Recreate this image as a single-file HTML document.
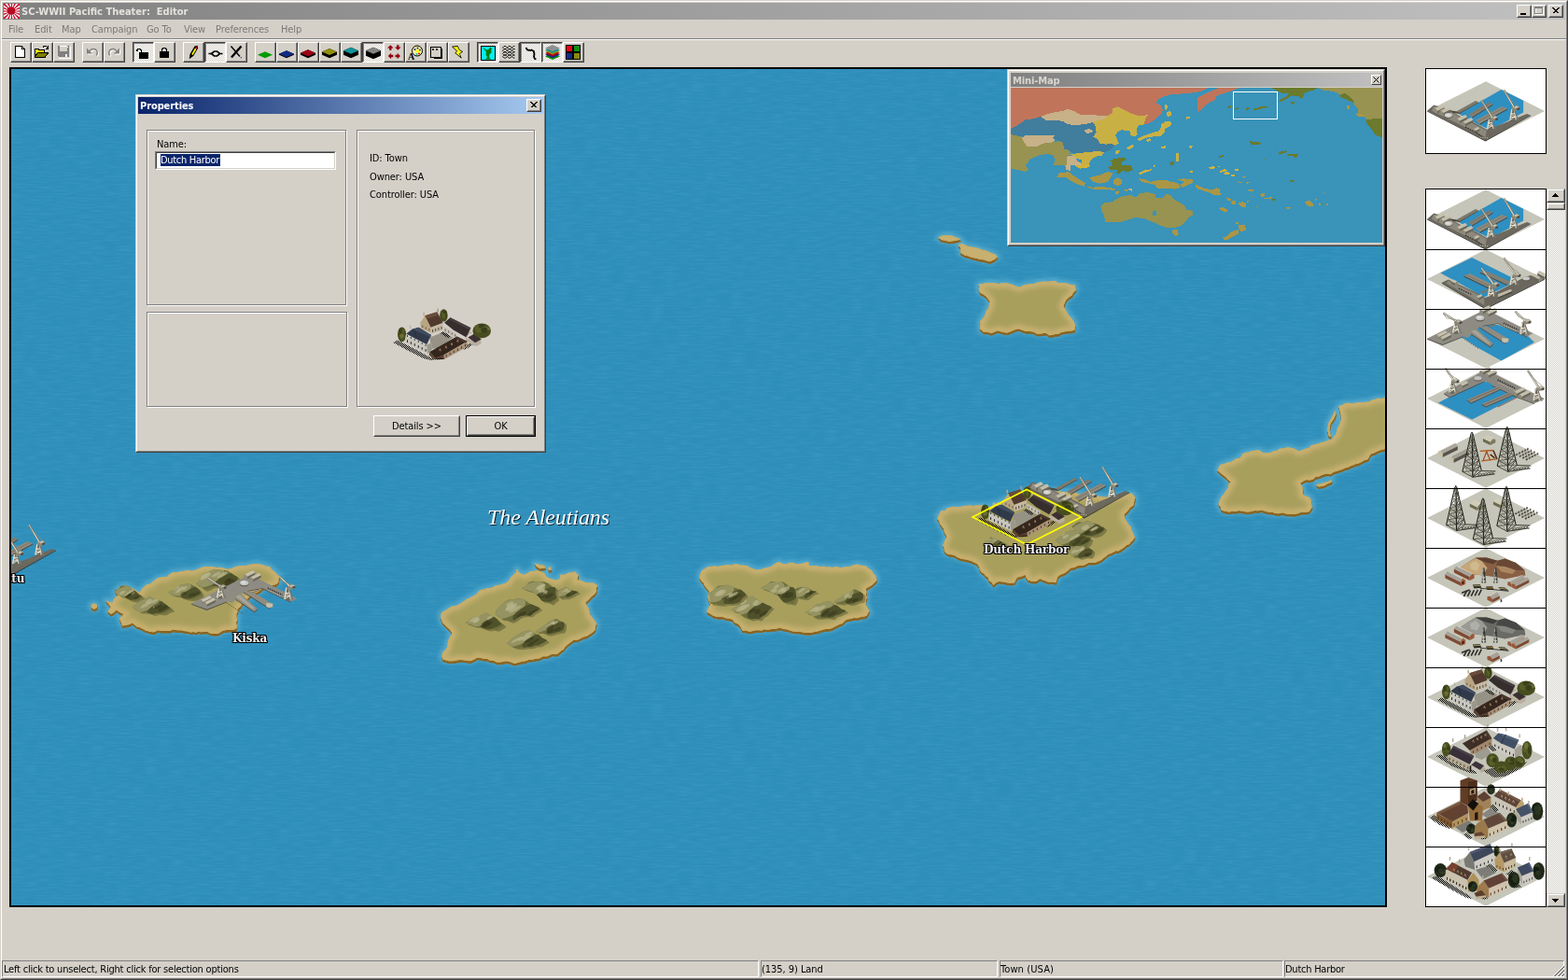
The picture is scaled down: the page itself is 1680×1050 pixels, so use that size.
<!DOCTYPE html>
<html lang="en"><head><meta charset="utf-8"><title>SC-WWII Pacific Theater: Editor</title>
<style>
*{box-sizing:border-box;margin:0;padding:0}
html,body{width:1680px;height:1050px;overflow:hidden;background:#d4d0c8}
body{position:relative;font-family:"DejaVu Sans Condensed","Liberation Sans",sans-serif;font-size:11px;color:#000;line-height:13px;letter-spacing:-0.1px}
.abs{position:absolute}
.t{position:absolute;white-space:pre;line-height:13px;height:13px}
#title .tt,.menu span,.sb span,.t,.btn span,.edit span,.cap span,.lbl,.region{will-change:transform}
#frame{position:absolute;left:0;top:0;width:1680px;height:1050px;border-style:solid;border-width:1px;border-color:#d4d0c8 #404040 #404040 #d4d0c8}
#frame2{position:absolute;left:1px;top:1px;width:1678px;height:1048px;border-style:solid;border-width:1px;border-color:#fff #808080 #808080 #fff}
#title{position:absolute;left:3px;top:3px;width:1674px;height:18px;background:linear-gradient(90deg,#808080 0%,#8f8f8f 20%,#a8a8a8 60%,#c0c0c0 100%)}
#title .tt{left:20px;top:3px;letter-spacing:0;color:#e4e2dc;font-weight:bold;font-size:11px}
.cb{position:absolute;top:2px;width:16px;height:14px;background:#d4d0c8;border-style:solid;border-width:1px;border-color:#fff #404040 #404040 #fff}
.cb:after{content:"";position:absolute;left:0;top:0;right:0;bottom:0;border-style:solid;border-width:1px;border-color:#d4d0c8 #808080 #808080 #d4d0c8}
.menu span{position:absolute;top:25px;color:#7c7a76;white-space:pre;height:13px;line-height:13px}
.hsep{position:absolute;left:2px;width:1676px;height:2px;border-top:1px solid #808080;border-bottom:1px solid #fff}
.tb{position:absolute;top:45px;width:23px;height:22px;border-style:solid;border-width:1px;border-color:#fff #404040 #404040 #fff}
.tb:before{content:"";position:absolute;left:0;top:0;right:0;bottom:0;border-style:solid;border-width:0 1px 1px 0;border-color:#808080}
.tb.on{border-color:#404040 #fff #fff #404040;background-color:#fff;background-image:conic-gradient(#d4d0c8 25%,#fff 0 50%,#d4d0c8 0 75%,#fff 0);background-size:2px 2px}
.tb.on:before{border-width:1px 0 0 1px;border-color:#808080}
.tb svg{position:absolute;left:2px;top:2px;width:16px;height:16px;overflow:visible}
.tb.on svg{left:3px;top:3px}
#map{position:absolute;left:10px;top:72px;width:1476px;height:900px;border:2px solid #000;background:#2f90bb;overflow:hidden}
.sunk{border-style:solid;border-width:1px;border-color:#808080 #fff #fff #808080}
.sb{position:absolute;top:1029px;height:18px;border-style:solid;border-width:1px;border-color:#808080 #fff #fff #808080}
.sb span{position:absolute;left:2px;top:2px;white-space:pre;line-height:13px}

#map svg.m{position:absolute;left:0;top:0}
.lbl{position:absolute;white-space:pre;font-family:"DejaVu Serif","Liberation Serif",serif;font-weight:bold;font-size:12px;line-height:14px;color:#f0f0f0;letter-spacing:-0.15px;
 text-shadow:-1px -1px 0 #000,1px -1px 0 #000,-1px 1px 0 #000,1px 1px 0 #000,0 1px 0 #000,0 -1px 0 #000,1px 0 0 #000,-1px 0 0 #000}
.region{position:absolute;white-space:pre;font-family:"Liberation Serif",serif;font-style:italic;font-size:24px;line-height:26px;color:#fff;text-shadow:1px 1px 0 #0c1c28}

#prev{position:absolute;left:1527px;top:73px;width:130px;height:92px;background:#fff;border:1px solid #000;overflow:hidden}
#list{position:absolute;left:1527px;top:202px;width:130px;height:770px;background:#fff;border:1px solid #000;overflow:hidden}
#list .it{position:absolute;left:0;width:128px;height:64px;overflow:visible}
#list .ln{position:absolute;left:0;width:128px;height:1px;background:#000}
#list .it svg,#prev svg{position:absolute;left:0;top:0;overflow:visible}
#vs{position:absolute;left:1657px;top:202px;width:20px;height:770px;background-color:#fff;background-image:conic-gradient(#d4d0c8 25%,#fff 0 50%,#d4d0c8 0 75%,#fff 0);background-size:2px 2px}
.sbb{position:absolute;left:0;width:20px;background:#d4d0c8;border-style:solid;border-width:1px;border-color:#d4d0c8 #404040 #404040 #d4d0c8}
.sbb:before{content:"";position:absolute;left:0;top:0;right:0;bottom:0;border-style:solid;border-width:1px;border-color:#fff #808080 #808080 #fff}

#dlg{position:absolute;left:145px;top:101px;width:440px;height:384px;background:#d4d0c8;border-style:solid;border-width:1px;border-color:#d4d0c8 #404040 #404040 #d4d0c8}
#dlg:before{content:"";position:absolute;left:0;top:0;right:0;bottom:0;border-style:solid;border-width:1px;border-color:#fff #808080 #808080 #fff}
#dlg .cap{position:absolute;left:2px;top:2px;width:434px;height:18px;background:linear-gradient(90deg,#0a246a,#a6caf0)}
#dlg .cap span{position:absolute;left:2px;top:3px;color:#fff;font-weight:bold;white-space:pre;line-height:13px}
.grp{position:absolute;border:1px solid #808080;box-shadow:1px 1px 0 #fff, inset 1px 1px 0 #fff}
.edit{position:absolute;background:#fff;border-style:solid;border-width:1px;border-color:#808080 #fff #fff #808080}
.edit:before{content:"";position:absolute;left:0;top:0;right:0;bottom:0;border-style:solid;border-width:1px;border-color:#404040 #d4d0c8 #d4d0c8 #404040}
.edit span{position:absolute;left:5px;top:2px;letter-spacing:-0.3px;height:13px;line-height:13px;background:#0a246a;color:#fff;white-space:pre;padding:0 1px 0 0}
.btn{position:absolute;background:#d4d0c8;border-style:solid;border-width:1px;border-color:#fff #404040 #404040 #fff;text-align:center}
.btn:before{content:"";position:absolute;left:0;top:0;right:0;bottom:0;border-style:solid;border-width:1px;border-color:#d4d0c8 #808080 #808080 #d4d0c8}
.btn span{position:relative;display:block;line-height:13px;white-space:pre}
.btn.def{border-color:#000;}
.btn.def:before{border-color:#fff #404040 #404040 #fff}
.btn.def:after{content:"";position:absolute;left:1px;top:1px;right:1px;bottom:1px;border-style:solid;border-width:1px;border-color:#d4d0c8 #808080 #808080 #d4d0c8}

#mm{position:absolute;left:1079px;top:74px;width:405px;height:190px;background:#d4d0c8;border-style:solid;border-width:1px;border-color:#d4d0c8 #404040 #404040 #d4d0c8}
#mm:before{content:"";position:absolute;left:0;top:0;right:0;bottom:0;border-style:solid;border-width:1px;border-color:#fff #808080 #808080 #fff}
#mm .cap{position:absolute;left:3px;top:3px;width:398px;height:15px;background:linear-gradient(90deg,#808080,#c0c0c0)}
#mm .cap span{position:absolute;left:2px;top:2px;color:#d8d5ce;font-weight:bold;white-space:pre;line-height:13px}
#mm .cbs{position:absolute;left:386px;top:2px;width:11px;height:11px;background:#d4d0c8;border-style:solid;border-width:1px;border-color:#fff #404040 #404040 #fff}
#mm svg.mmv{position:absolute;left:3px;top:19px}
</style></head>
<body>
<svg width="0" height="0" style="position:absolute"><defs>
<pattern id="chk" width="2" height="2" patternUnits="userSpaceOnUse"><rect width="1" height="1" fill="#000"/><rect x="1" y="1" width="1" height="1" fill="#000"/></pattern>
<linearGradient id="dockg" x1="0" y1="0" x2="0" y2="1"><stop offset="0" stop-color="#8f8b7e"/><stop offset="1" stop-color="#5e5a4e"/></linearGradient>
</defs></svg>
<div id="frame"></div><div id="frame2"></div>
<div id="title">
<svg class="abs" style="left:1px;top:1px" width="17" height="16" viewBox="0 0 16 16" preserveAspectRatio="none"><rect width="16" height="16" fill="#fff"/><clipPath id="ic"><rect width="16" height="16"/></clipPath><g clip-path="url(#ic)"><path d="M8 8L21.94 6.66L21.94 9.34z" fill="#c8102e"/><path d="M8 8L21.39 12.09L20.36 14.57z" fill="#c8102e"/><path d="M8 8L18.80 16.91L16.91 18.80z" fill="#c8102e"/><path d="M8 8L14.57 20.36L12.09 21.39z" fill="#c8102e"/><path d="M8 8L9.34 21.94L6.66 21.94z" fill="#c8102e"/><path d="M8 8L3.91 21.39L1.43 20.36z" fill="#c8102e"/><path d="M8 8L-0.91 18.80L-2.80 16.91z" fill="#c8102e"/><path d="M8 8L-4.36 14.57L-5.39 12.09z" fill="#c8102e"/><path d="M8 8L-5.94 9.34L-5.94 6.66z" fill="#c8102e"/><path d="M8 8L-5.39 3.91L-4.36 1.43z" fill="#c8102e"/><path d="M8 8L-2.80 -0.91L-0.91 -2.80z" fill="#c8102e"/><path d="M8 8L1.43 -4.36L3.91 -5.39z" fill="#c8102e"/><path d="M8 8L6.66 -5.94L9.34 -5.94z" fill="#c8102e"/><path d="M8 8L12.09 -5.39L14.57 -4.36z" fill="#c8102e"/><path d="M8 8L16.91 -2.80L18.80 -0.91z" fill="#c8102e"/><path d="M8 8L20.36 1.43L21.39 3.91z" fill="#c8102e"/><circle cx="7.500" cy="7.500" r="4.200" fill="#b80a20"/></g></svg>
<span class="t tt">SC-WWII Pacific Theater:  Editor</span>
<div class="cb" style="left:1622px"><svg class="abs" style="left:0;top:0" width="14" height="12" shape-rendering="crispEdges"><rect x="3" y="8" width="6" height="2" fill="#000"/></svg></div>
<div class="cb" style="left:1638px"><svg class="abs" style="left:0;top:0" width="14" height="12" shape-rendering="crispEdges"><rect x="3.500" y="2.500" width="8" height="7" fill="none" stroke="#fff"/><rect x="2.500" y="1.500" width="8" height="7" fill="none" stroke="#808080"/><rect x="2" y="1" width="9" height="2" fill="#808080"/></svg></div>
<div class="cb" style="left:1656px"><svg class="abs" style="left:0;top:0" width="14" height="12"><path d="M3.500 2.500l6 6M4.500 2.500l6 6M9.500 2.500l-6 6M10.500 2.500l-6 6" stroke="#000" stroke-width="1" fill="none" shape-rendering="crispEdges"/></svg></div>
</div>
<div class="menu">
<span style="left:8.5px">File</span>
<span style="left:36.5px">Edit</span>
<span style="left:66px">Map</span>
<span style="left:98px">Campaign</span>
<span style="left:157px">Go To</span>
<span style="left:197px">View</span>
<span style="left:231px">Preferences</span>
<span style="left:301px">Help</span>
</div>
<div class="hsep" style="top:41px"></div>
<div class="tb" style="left:11px"><svg viewBox="0 0 16 16" shape-rendering="crispEdges"><path d="M2.500 1.500h7l3 3v9h-10z" fill="#fff" stroke="#000"/><path d="M9.500 1.500v3h3" fill="none" stroke="#000"/></svg></div>
<div class="tb" style="left:34px"><svg viewBox="0 0 16 16" shape-rendering="crispEdges"><g transform="translate(0,-1)"><path d="M1 6h3l1 1h5v2H4l-3 5z" fill="#ff0" /><path d="M1 14l3-5h11l-4 5z" fill="#808000"/><path d="M0.5 14.5v-9h3.5l1 1h5.500v2.500M0.500 14.500h10.500l4-5.500h-11.500l-3 5" fill="none" stroke="#000"/><path d="M9 3.500c1-2 4-2 5 1M14.5 2v3h-3" fill="none" stroke="#000"/></g></svg></div>
<div class="tb" style="left:57px"><svg viewBox="0 0 16 16" shape-rendering="crispEdges"><g transform="translate(0,-1)"><path d="M2 2h12v12h-11l-1-1z" fill="#808080"/><rect x="4" y="2" width="8" height="6" fill="#d4d0c8"/><rect x="4" y="2" width="8" height="1" fill="#fff"/><rect x="12" y="3" width="1" height="1" fill="#fff"/><rect x="10" y="11" width="2" height="3" fill="#fff"/><path d="M3 15h12v-12" fill="none" stroke="#fff"/></g></svg></div>
<div class="tb" style="left:88px"><svg viewBox="0 0 16 16"><g transform="translate(0,-1.5)"><path d="M12.500 13c2-4 0-7-3.500-7c-2 0-3 1-4 2" fill="none" stroke="#fff" stroke-width="1.6" transform="translate(1,1)"/><path d="M2 5v6h6z" fill="#fff" transform="translate(1,1)"/><path d="M12.500 13c2-4 0-7-3.500-7c-2 0-3 1-4 2" fill="none" stroke="#808080" stroke-width="1.500"/><path d="M2 5v6h6z" fill="#808080"/></g></svg></div>
<div class="tb" style="left:111px"><svg viewBox="0 0 16 16"><g transform="translate(0,-1.5)"><g transform="translate(16,0) scale(-1,1)"><path d="M12.500 13c2-4 0-7-3.500-7c-2 0-3 1-4 2" fill="none" stroke="#fff" stroke-width="1.6" transform="translate(-1,1)"/><path d="M2 5v6h6z" fill="#fff" transform="translate(-1,1)"/><path d="M12.500 13c2-4 0-7-3.500-7c-2 0-3 1-4 2" fill="none" stroke="#808080" stroke-width="1.500"/><path d="M2 5v6h6z" fill="#808080"/></g></g></svg></div>
<div class="tb on" style="left:142px"><svg viewBox="0 0 16 16" shape-rendering="crispEdges"><rect x="3" y="7" width="10" height="7" fill="#000"/><path d="M0.500 6v-2h1v-1h3v1h1v3" fill="none" stroke="#000" stroke-width="1"/><rect x="0" y="4" width="2" height="2" fill="#000"/></svg></div>
<div class="tb" style="left:165px"><svg viewBox="0 0 16 16" shape-rendering="crispEdges"><rect x="3" y="7" width="10" height="7" fill="#000"/><path d="M5.500 7v-3h1v-1h3v1h1v3" fill="none" stroke="#000"/></svg></div>
<div class="tb" style="left:196px"><svg viewBox="0 0 16 16"><path d="M3.800 15.200l0.700-5.200 5-8.500 3-0.700 0.700 2.700-5 8.500z" fill="#000"/><path d="M6.200 10l3.800-6.500 1.500 0.900-3.800 6.500z" fill="#ff0"/><path d="M10.200 2.500l1.800-0.600 0.500 1.600-1 1.200z" fill="#d00020"/></svg></div>
<div class="tb on" style="left:219px"><svg viewBox="0 0 16 16"><path d="M0.500 8.500h3l3-2.500h3l3 2.500h3M3.500 8.500l3 2.500h3l3-2.500" fill="none" stroke="#000" stroke-width="1.700"/></svg></div>
<div class="tb" style="left:242px"><svg viewBox="0 0 16 16"><path d="M2.500 1.500l9.500 11" stroke="#000" stroke-width="1.400" fill="none"/><path d="M13 13.500l0.600 0.700" stroke="#000" stroke-width="1.200" fill="none"/><path d="M13.500 1.500l-10.500 12" stroke="#000" stroke-width="2.300" fill="none"/></svg></div>
<div class="tb" style="left:273px"><svg viewBox="0 0 16 16"><path d="M0 10.70l8 -3.500 8 3.500 -8 3.500z" fill="#009a00"/></svg></div>
<div class="tb" style="left:296px"><svg viewBox="0 0 16 16"><path d="M0 9.70l8 -3.500 8 3.500v1.00l-8 3.500 -8 -3.500z" fill="#000"/><path d="M0 9.70l8 -3.500 8 3.500 -8 3.500z" fill="#102c84"/></svg></div>
<div class="tb" style="left:319px"><svg viewBox="0 0 16 16"><path d="M0 8.70l8 -3.500 8 3.500v2.00l-8 3.500 -8 -3.500z" fill="#000"/><path d="M0 8.70l8 -3.500 8 3.500 -8 3.500z" fill="#a00014"/></svg></div>
<div class="tb" style="left:342px"><svg viewBox="0 0 16 16"><path d="M0 7.40l8 -3.500 8 3.500v3.30l-8 3.500 -8 -3.500z" fill="#000"/><path d="M0 7.40l8 -3.500 8 3.500 -8 3.500z" fill="#949010"/></svg></div>
<div class="tb" style="left:365px"><svg viewBox="0 0 16 16"><path d="M0 6.20l8 -3.500 8 3.500v4.50l-8 3.500 -8 -3.500z" fill="#000"/><path d="M0 6.20l8 -3.500 8 3.500 -8 3.500z" fill="#109498"/></svg></div>
<div class="tb on" style="left:388px"><svg viewBox="0 0 16 16"><path d="M0 5.20l8 -3.500 8 3.500v5.50l-8 3.500 -8 -3.500z" fill="#000"/><path d="M0 5.20l8 -3.500 8 3.500 -8 3.500z" fill="#848484"/></svg></div>
<div class="tb" style="left:411px"><svg viewBox="0 0 16 16"><path d="M0 0l3.300 3.300h-2.100v2.200h-2.400v-2.200h-2.100z" fill="#900010" transform="translate(4.300,0.300)"/><path d="M0 0l3.300 3.300h-2.100v2.200h-2.400v-2.200h-2.100z" fill="#900010" transform="translate(12.300,5.800) rotate(180)"/><path d="M0 0l3.300 3.300h-2.100v2.200h-2.400v-2.200h-2.100z" fill="#900010" transform="translate(1.800,12) rotate(-90)"/><path d="M0 0l3.300 3.300h-2.100v2.200h-2.400v-2.200h-2.100z" fill="#900010" transform="translate(15,12) rotate(90)"/></svg></div>
<div class="tb" style="left:434px"><svg viewBox="0 0 16 16"><ellipse cx="10" cy="6.500" rx="5.500" ry="5.500" fill="#f4f0a0" stroke="#000" stroke-width="1"/><circle cx="10.500" cy="7" r="1.800" fill="#ff0"/><circle cx="7.500" cy="5" r="1" fill="#202080"/><circle cx="10.500" cy="3.500" r="1" fill="#202080"/><circle cx="13" cy="5.500" r="1" fill="#404040"/><circle cx="12" cy="9.500" r="1" fill="#e00000"/><circle cx="9.500" cy="10" r="1" fill="#00c0c0"/><text x="0" y="15.500" font-family="Liberation Serif,serif" font-size="10" font-weight="bold" fill="#000">A</text></svg></div>
<div class="tb" style="left:457px"><svg viewBox="0 0 16 16" shape-rendering="crispEdges"><path d="M3 4h11v11h-9z" fill="#000"/><rect x="1.500" y="2.500" width="11" height="11" fill="#d4d0c8" stroke="#000"/><path d="M3 4l2 2M5 4l-2 2M7 4l2 2M9 4l-2 2" stroke="#000" fill="none" shape-rendering="auto" stroke-width="0.800"/></svg></div>
<div class="tb" style="left:480px"><svg viewBox="0 0 16 16"><path d="M1.600 2.100L7.400 1.400L9.400 5.600L12.800 7.500L9.400 9.500L11.300 14.100L4.700 8.700L6.700 6.800Z" fill="#fff" transform="translate(1.200,0.300)"/><path d="M1.600 2.100L7.400 1.400L9.400 5.600L12.800 7.500L9.400 9.500L11.300 14.100L4.700 8.700L6.700 6.800Z" fill="#ff0" stroke="#000" stroke-width="0.900" stroke-linejoin="miter"/></svg></div>
<div class="tb on" style="left:511px"><svg viewBox="0 0 16 16"><rect x="0.500" y="0.500" width="15" height="15" fill="#00f0f0" stroke="#000" shape-rendering="crispEdges"/><path d="M3 2l3 2.500 2.500-0.500 1.500-2.500 2 1.500-1 2.500 1 1-2.500 3-0.500 2.500 2 2.500h-6l2-2.500-1.500-2.500 0.500-3-2-2z" fill="#0a7a0a"/></svg></div>
<div class="tb" style="left:534px"><svg viewBox="0 0 16 16"><path d="M1.500 3.0l1.500-1.500h2l1.500 1.500 1.500-1.500h2l1.500 1.500 1.500-1.500h1.500M1.500 3.0l1.500 1.500h2l1.500-1.500 1.500 1.500h2l1.500-1.500 1.500 1.500h1.500" fill="none" stroke="#000" stroke-width="0.800"/><path d="M1.500 6.2l1.500-1.500h2l1.500 1.500 1.500-1.500h2l1.500 1.500 1.500-1.500h1.500M1.500 6.2l1.500 1.500h2l1.500-1.500 1.500 1.500h2l1.500-1.500 1.500 1.500h1.500" fill="none" stroke="#000" stroke-width="0.800"/><path d="M1.500 9.4l1.500-1.500h2l1.500 1.500 1.500-1.500h2l1.500 1.500 1.500-1.500h1.500M1.500 9.4l1.500 1.500h2l1.500-1.500 1.500 1.500h2l1.500-1.500 1.500 1.500h1.500" fill="none" stroke="#000" stroke-width="0.800"/><path d="M1.500 12.600000000000001l1.500-1.500h2l1.500 1.500 1.500-1.500h2l1.500 1.500 1.500-1.500h1.500M1.500 12.600000000000001l1.500 1.500h2l1.500-1.500 1.500 1.500h2l1.500-1.500 1.500 1.500h1.500" fill="none" stroke="#000" stroke-width="0.800"/></svg></div>
<div class="tb on" style="left:557px"><svg viewBox="0 0 16 16"><path d="M2.500 2l1.500 2.500 3 0.500 1.500-0.500 2.500 1.500 0.500 3.500-0.500 2 1 2.500 1.500 0.500" fill="none" stroke="#000" stroke-width="1.800"/></svg></div>
<div class="tb on" style="left:580px"><svg viewBox="0 0 16 16"><path d="M0 11.5l8-3.500 8 3.500-8 3.500z" fill="#109010"/><path d="M0 9.7l8-3.500 8 3.500-8 3.500z" fill="#102c84"/><path d="M0 7.9l8-3.500 8 3.500-8 3.500z" fill="#b00010"/><path d="M0 6.1l8-3.500 8 3.500-8 3.500z" fill="#949010"/><path d="M0 4.3l8-3.500 8 3.500-8 3.500z" fill="#109498"/><path d="M0 2.5l8-3.500 8 3.500-8 3.500z" fill="#909090"/></svg></div>
<div class="tb" style="left:603px"><svg viewBox="0 0 16 16" shape-rendering="crispEdges"><rect x="0" y="0" width="16" height="16" fill="#000"/><rect x="1" y="1" width="6" height="6" fill="#f00010"/><rect x="9" y="1" width="6" height="6" fill="#109010"/><rect x="1" y="9" width="6" height="6" fill="#102c84"/><rect x="9" y="9" width="6" height="6" fill="#8a8a10"/></svg></div>
<div class="sb" style="left:2px;width:811px"><span style="left:1px;letter-spacing:-0.21px">Left click to unselect, Right click for selection options</span></div>
<div class="sb" style="left:815px;width:254px"><span style="left:0px;letter-spacing:-0.05px">(135, 9) Land</span></div>
<div class="sb" style="left:1071px;width:304px"><span style="left:0px;letter-spacing:0.1px">Town (USA)</span></div>
<div class="sb" style="left:1376px;width:300px"><span style="left:0px;letter-spacing:-0.25px">Dutch Harbor</span></div>
<svg class="abs" style="left:1663px;top:1033px" width="13" height="13"><path d="M13 1L1 13M13 5L5 13M13 9L9 13" stroke="#fff" stroke-width="1"/><path d="M13 2L2 13M13 3L3 13M13 6L6 13M13 7L7 13M13 10L10 13M13 11L11 13" stroke="#808080" stroke-width="1"/></svg>
<div id="map"><svg class="m" width="1472" height="896" viewBox="0 0 1472 896">
<defs>
<filter id="sea" x="0" y="0" width="100%" height="100%" color-interpolation-filters="sRGB">
 <feTurbulence type="fractalNoise" baseFrequency="0.02 0.2" numOctaves="3" seed="7" result="n"/>
 <feColorMatrix in="n" type="matrix" values="0 0 0 0 0.14  0 0 0 0 0.51  0 0 0 0 0.69  1.6 0 0 0 -0.62"/>
</filter>
<filter id="sea2" x="0" y="0" width="100%" height="100%" color-interpolation-filters="sRGB">
 <feTurbulence type="fractalNoise" baseFrequency="0.07 0.6" numOctaves="1" seed="3" result="n"/>
 <feColorMatrix in="n" type="matrix" values="0 0 0 0 0.33  0 0 0 0 0.66  0 0 0 0 0.81  0 2.2 0 0 -0.85"/>
</filter>
<filter id="halo" filterUnits="userSpaceOnUse" x="0" y="0" width="1472" height="896"><feGaussianBlur stdDeviation="2.6"/></filter>
<filter id="sand" x="-60%" y="-60%" width="220%" height="220%"><feGaussianBlur stdDeviation="2.8"/></filter>
<filter id="hb" x="-15%" y="-15%" width="130%" height="130%"><feGaussianBlur stdDeviation="0.55"/></filter>
<linearGradient id="hg" x1="0" y1="0" x2="1" y2="1"><stop offset="0" stop-color="#9a9a66"/><stop offset="0.45" stop-color="#787a44"/><stop offset="1" stop-color="#545428"/></linearGradient>
</defs>
<rect width="1472" height="896" fill="#2f8fba"/>
<rect width="1472" height="896" filter="url(#sea)" opacity="0.1"/>
<rect width="1472" height="896" filter="url(#sea2)" opacity="0.28"/>
<g filter="url(#halo)" fill="#8fd0e6" stroke="#8fd0e6" stroke-width="6" stroke-linejoin="round" opacity="0.42"><path d="M101.3 569.4 L104.7 570.7 L108.2 571.7 L110.6 567.1 L114.4 564.0 L111.3 559.3 L114.4 557.0 L116.0 554.7 L119.1 554.1 L122.2 553.1 L125.5 554.7 L129.9 556.2 L132.7 558.3 L134.3 559.0 L137.6 560.9 L139.2 558.3 L142.3 554.7 L145.7 551.9 L149.3 551.7 L151.8 549.1 L154.7 547.0 L157.1 545.3 L160.9 544.6 L163.4 544.2 L167.0 543.9 L169.3 541.5 L173.2 539.2 L176.2 539.4 L179.5 538.7 L182.5 538.3 L185.6 537.7 L189.0 536.9 L193.5 537.8 L196.7 536.9 L199.5 536.1 L202.8 534.6 L206.4 533.3 L210.4 533.0 L214.0 533.0 L217.2 533.2 L220.5 534.2 L222.8 533.8 L225.0 534.0 L229.7 535.3 L232.0 536.1 L236.0 534.9 L237.5 534.3 L241.3 533.0 L244.9 532.2 L246.8 531.9 L251.5 532.3 L253.7 531.5 L256.5 530.8 L260.0 530.3 L264.7 530.3 L267.6 530.7 L270.8 531.4 L273.3 532.7 L276.9 533.0 L279.4 536.4 L283.1 539.2 L284.8 541.4 L287.8 543.9 L286.5 546.5 L286.2 550.0 L284.0 552.1 L280.0 553.1 L276.1 554.9 L272.3 555.0 L269.2 556.2 L267.3 558.3 L263.3 560.7 L260.9 561.2 L259.4 563.2 L255.9 564.5 L253.7 567.1 L250.8 569.4 L248.9 571.6 L247.0 573.5 L245.9 575.7 L242.9 577.9 L242.5 581.7 L241.3 583.5 L241.3 587.2 L242.1 590.9 L240.9 592.8 L241.8 597.3 L241.3 599.6 L237.2 600.9 L234.8 600.8 L230.5 601.1 L226.7 601.7 L222.4 604.5 L219.7 605.0 L216.1 604.8 L213.0 604.4 L210.6 602.9 L207.3 602.7 L203.6 603.2 L200.3 602.5 L198.1 603.8 L195.1 602.9 L191.8 603.4 L189.5 602.4 L184.7 602.1 L182.4 601.3 L178.8 601.3 L176.3 601.1 L173.4 600.6 L169.9 602.1 L167.9 601.9 L164.3 601.9 L160.9 601.9 L157.1 601.2 L153.8 603.0 L151.9 603.3 L148.5 602.7 L144.0 601.4 L141.2 600.0 L137.6 598.0 L134.7 597.4 L131.7 595.0 L129.9 593.4 L126.7 595.1 L123.1 595.8 L119.1 596.5 L118.1 593.4 L116.0 588.7 L118.0 586.8 L120.6 584.1 L118.8 583.2 L115.3 581.5 L112.9 579.5 L110.4 581.9 L106.7 584.1 L103.6 581.0 L106.7 576.4 L104.2 572.7Z"/><path d="M85.8 574.0 L88.9 572.5 L92.0 574.0 L92.0 577.1 L88.9 578.7 L85.8 577.1Z"/><path d="M460.4 588.0 L460.4 584.1 L462.3 581.6 L465.3 580.0 L468.7 577.7 L471.9 575.7 L476.4 575.2 L479.0 573.9 L481.8 572.2 L485.4 570.0 L488.7 567.6 L491.5 566.5 L494.4 564.9 L497.5 563.2 L500.9 559.7 L503.0 557.9 L507.4 557.6 L509.0 556.5 L512.4 555.9 L515.4 555.7 L518.4 553.4 L522.2 553.1 L525.3 552.0 L530.0 550.7 L533.0 548.2 L535.3 544.4 L538.2 541.7 L540.7 539.4 L542.0 535.3 L543.1 538.3 L545.9 540.4 L549.7 541.7 L553.6 540.1 L556.2 537.9 L558.9 538.1 L562.6 537.2 L566.0 537.7 L568.9 538.9 L571.6 540.4 L572.7 542.7 L575.5 545.6 L578.6 546.0 L582.6 547.5 L585.7 547.5 L587.9 545.5 L588.3 541.7 L592.4 541.9 L594.7 541.1 L597.4 539.6 L601.0 539.4 L603.8 538.5 L607.6 541.7 L606.3 547.5 L610.5 547.7 L614.0 549.4 L616.9 550.6 L621.1 550.6 L624.3 550.7 L628.2 553.3 L626.8 556.3 L626.9 559.7 L625.1 562.6 L621.8 564.9 L620.5 566.5 L617.4 569.7 L615.3 571.3 L616.5 574.8 L618.0 576.6 L619.2 580.3 L620.4 585.0 L623.0 588.0 L624.3 590.0 L626.9 593.2 L626.0 597.4 L625.6 600.9 L623.0 603.4 L619.2 606.0 L616.2 607.8 L612.8 608.4 L610.2 609.9 L607.0 611.4 L602.5 611.8 L599.9 613.7 L596.0 616.7 L593.5 618.9 L591.7 621.9 L589.7 622.7 L587.0 625.3 L584.3 627.1 L580.3 626.4 L577.2 627.8 L574.2 629.2 L569.7 629.2 L565.8 631.5 L562.6 631.7 L557.9 632.8 L554.4 632.9 L551.0 634.3 L547.7 634.8 L542.7 635.9 L539.5 636.9 L536.8 636.1 L534.1 635.0 L530.4 634.3 L527.1 635.1 L523.5 635.6 L520.2 635.6 L516.7 633.7 L512.6 633.5 L509.9 631.7 L506.9 632.1 L503.4 631.0 L499.6 630.5 L495.1 633.0 L491.9 634.3 L487.8 633.7 L484.4 633.2 L481.6 633.0 L478.2 633.3 L476.0 634.0 L472.6 634.3 L468.7 634.2 L466.1 633.6 L462.3 632.4 L461.4 629.1 L462.3 625.3 L465.6 621.7 L467.4 618.9 L467.5 615.6 L468.7 611.2 L470.4 607.8 L472.6 604.7 L470.6 601.3 L467.4 598.3 L464.3 595.2 L462.3 593.2Z"/><path d="M560.7 529.5 L565.2 530.8 L568.0 531.2 L571.6 532.1 L572.2 534.6 L566.5 535.3 L562.6 532.7Z"/><path d="M575.5 534.0 L578.0 533.4 L578.7 536.6 L576.1 537.2Z"/><path d="M737.4 545.0 L738.3 541.1 L740.0 537.2 L742.7 535.8 L746.6 533.3 L749.2 533.1 L753.6 532.6 L756.8 532.9 L759.2 532.4 L762.3 532.0 L765.6 531.4 L769.5 531.3 L772.6 531.8 L774.0 530.5 L778.0 530.6 L781.5 531.6 L784.4 531.7 L788.5 532.0 L791.3 534.0 L795.4 535.5 L797.6 536.5 L800.6 536.4 L804.5 535.8 L808.1 534.6 L811.1 534.0 L815.1 532.5 L817.3 530.6 L822.5 528.0 L827.8 530.6 L831.6 530.2 L834.3 528.7 L837.8 529.1 L840.9 530.6 L845.7 529.9 L848.7 529.3 L854.0 528.0 L855.3 532.0 L858.3 532.3 L863.0 532.3 L867.1 533.3 L871.2 532.7 L874.3 533.7 L876.3 533.5 L880.2 533.9 L883.3 533.1 L887.2 533.9 L890.8 534.0 L893.2 533.3 L897.0 533.5 L900.6 532.2 L903.1 531.3 L906.3 530.6 L910.0 531.8 L913.0 532.1 L915.5 532.0 L917.9 534.4 L922.1 537.2 L923.3 540.0 L926.0 542.4 L927.3 547.7 L924.8 550.4 L922.1 552.9 L919.4 554.4 L915.5 556.8 L916.4 560.0 L915.9 563.8 L916.8 566.0 L915.4 569.9 L915.5 573.9 L917.5 577.3 L919.4 580.4 L916.8 585.6 L914.2 586.6 L910.5 587.0 L906.3 588.3 L902.8 588.1 L899.6 589.0 L895.9 589.6 L893.8 590.6 L890.6 593.9 L888.0 594.8 L883.2 597.1 L880.2 598.7 L877.2 599.8 L873.7 600.1 L871.2 600.3 L867.1 601.4 L863.9 602.5 L860.5 603.1 L856.6 604.0 L851.8 604.0 L848.3 603.6 L844.8 602.7 L842.2 602.7 L837.6 602.4 L834.3 601.4 L830.6 600.2 L827.5 599.9 L823.8 598.7 L821.1 599.3 L817.6 600.1 L814.7 600.1 L810.9 600.7 L806.8 600.3 L804.2 601.4 L801.6 601.2 L797.5 601.2 L794.8 602.0 L791.1 602.7 L786.4 601.6 L783.2 601.4 L782.1 598.5 L779.3 594.8 L775.1 593.0 L772.8 589.6 L768.5 588.7 L765.8 588.3 L762.3 587.0 L758.1 587.1 L754.9 586.5 L751.8 585.6 L749.3 583.8 L745.3 581.7 L746.3 578.1 L749.2 573.9 L747.8 570.3 L746.6 566.0 L747.7 562.0 L747.9 559.5 L745.4 556.4 L742.6 552.9 L741.7 550.5 L739.4 548.2Z"/><path d="M992.3 481.7 L993.4 479.1 L994.3 476.9 L996.6 473.1 L1000.5 472.9 L1002.8 470.2 L1006.6 469.6 L1009.3 468.7 L1012.9 469.2 L1017.0 469.1 L1020.9 468.1 L1024.9 467.7 L1027.4 467.5 L1030.7 467.9 L1035.1 467.4 L1038.4 467.3 L1043.5 468.3 L1046.6 468.9 L1050.2 468.7 L1052.6 466.3 L1054.5 465.2 L1058.0 464.6 L1061.3 463.4 L1063.4 461.3 L1066.3 460.8 L1068.7 459.4 L1071.9 458.5 L1075.1 457.4 L1078.0 456.4 L1081.5 454.7 L1083.0 453.5 L1086.1 452.8 L1089.4 451.2 L1092.3 450.3 L1094.6 450.9 L1098.6 450.9 L1101.8 451.5 L1103.7 450.5 L1107.5 451.7 L1110.7 451.5 L1113.7 451.7 L1116.4 451.5 L1120.5 453.0 L1122.9 452.3 L1125.3 452.7 L1128.5 453.0 L1131.7 452.9 L1135.1 453.1 L1138.9 453.4 L1141.3 454.0 L1144.3 455.6 L1147.4 456.4 L1150.3 456.1 L1153.8 456.8 L1156.6 457.4 L1159.9 457.3 L1161.8 457.7 L1165.0 457.6 L1169.0 458.6 L1172.6 458.8 L1175.0 458.4 L1178.0 458.9 L1181.5 457.8 L1184.4 457.5 L1188.9 456.4 L1192.3 456.0 L1197.0 455.3 L1200.9 454.6 L1204.4 458.9 L1203.0 463.8 L1202.3 467.4 L1198.6 469.9 L1196.6 473.1 L1194.1 475.6 L1192.3 477.4 L1193.3 481.9 L1195.1 484.6 L1196.6 487.3 L1199.4 490.3 L1200.4 493.6 L1201.1 495.4 L1203.1 499.4 L1203.7 501.7 L1201.9 504.8 L1199.7 506.4 L1198.0 508.9 L1195.1 510.1 L1192.9 511.9 L1189.4 514.6 L1185.8 516.4 L1183.6 516.1 L1181.6 517.2 L1178.0 518.9 L1175.4 519.8 L1172.4 522.4 L1170.9 523.5 L1168.0 526.0 L1165.1 527.2 L1161.6 528.7 L1158.0 528.9 L1154.2 528.9 L1149.6 531.4 L1146.6 531.7 L1142.1 532.3 L1139.2 534.0 L1135.1 534.6 L1133.2 536.6 L1130.1 539.1 L1128.0 540.3 L1123.6 542.0 L1120.9 544.6 L1119.4 550.3 L1116.0 549.4 L1110.9 549.6 L1108.6 548.6 L1105.4 547.4 L1102.3 546.0 L1098.0 548.9 L1093.6 548.8 L1089.4 547.4 L1087.2 544.2 L1086.6 541.7 L1084.2 543.1 L1081.1 544.0 L1078.0 544.6 L1076.2 547.6 L1075.1 550.3 L1071.0 550.9 L1066.6 550.3 L1061.8 549.2 L1058.0 548.9 L1054.8 550.5 L1052.3 553.1 L1050.8 550.3 L1047.7 548.1 L1046.6 544.6 L1044.2 543.2 L1042.2 540.6 L1039.4 538.9 L1037.7 536.1 L1037.4 533.7 L1035.1 530.3 L1032.6 529.0 L1028.6 527.1 L1025.1 526.0 L1021.4 525.2 L1018.0 524.7 L1013.7 523.1 L1011.6 521.6 L1008.3 520.2 L1004.7 520.1 L1002.3 518.9 L1000.0 516.7 L999.5 512.7 L998.0 510.3 L999.3 507.9 L1000.1 505.3 L1002.3 501.7 L1001.6 498.9 L999.8 496.2 L999.4 493.1 L996.8 489.5 L995.1 487.4 L994.3 484.3Z"/><path d="M993.3 180.3 L998.0 178.3 L1000.8 178.1 L1004.4 178.1 L1007.3 178.3 L1011.0 179.9 L1014.0 181.0 L1017.3 182.3 L1012.7 183.7 L1008.9 184.2 L1004.7 184.7 L1000.9 183.7 L996.7 183.0Z"/><path d="M1014.7 188.3 L1019.3 187.0 L1024.7 189.7 L1028.1 190.4 L1031.8 191.1 L1035.3 191.7 L1038.6 193.1 L1041.5 194.0 L1044.4 194.6 L1047.3 195.7 L1051.0 197.5 L1054.0 198.3 L1056.7 201.0 L1054.0 203.7 L1048.7 206.3 L1045.4 205.5 L1042.0 204.3 L1038.0 204.0 L1035.0 203.1 L1031.3 202.3 L1027.9 201.5 L1025.2 200.2 L1022.0 199.7 L1017.3 197.0 L1017.3 191.7Z"/><path d="M1036.7 230.3 L1041.0 229.9 L1043.9 229.2 L1047.3 229.0 L1050.2 229.2 L1053.9 229.2 L1058.0 230.3 L1060.9 229.3 L1065.2 229.2 L1068.7 229.7 L1072.2 230.8 L1075.3 232.3 L1080.7 233.7 L1086.0 231.0 L1089.7 230.8 L1092.5 230.3 L1095.5 230.3 L1098.0 229.0 L1102.4 227.9 L1104.7 227.7 L1108.7 227.7 L1111.5 227.8 L1115.3 227.0 L1119.2 226.9 L1121.0 229.1 L1124.7 229.0 L1127.5 228.9 L1132.5 229.9 L1135.3 231.0 L1140.0 231.7 L1140.7 237.0 L1137.8 239.8 L1136.7 242.3 L1132.8 244.8 L1130.0 247.7 L1128.4 251.6 L1127.3 254.3 L1130.1 258.5 L1131.3 261.0 L1134.0 265.1 L1136.7 267.7 L1138.7 271.1 L1140.0 274.3 L1139.3 279.7 L1135.6 280.6 L1131.3 281.0 L1128.7 281.2 L1124.7 282.3 L1122.3 283.8 L1118.6 284.1 L1115.3 285.0 L1111.9 285.2 L1109.0 282.9 L1106.0 283.0 L1103.6 283.5 L1099.3 283.7 L1095.2 281.5 L1091.3 281.0 L1087.2 281.1 L1083.3 279.7 L1079.3 278.3 L1076.1 279.0 L1071.3 281.0 L1067.6 282.5 L1064.7 282.3 L1061.0 281.4 L1056.7 280.3 L1052.7 281.9 L1050.0 283.0 L1045.2 281.5 L1042.0 281.7 L1038.0 278.3 L1038.4 273.6 L1038.0 270.3 L1041.6 266.5 L1043.3 263.7 L1044.5 259.4 L1047.3 255.7 L1047.6 253.1 L1048.7 249.0 L1046.5 246.0 L1044.7 243.7 L1041.4 241.3 L1038.0 239.7 L1036.7 235.7 L1037.4 233.5Z"/><path d="M1292.3 429.6 L1294.2 426.7 L1295.1 423.9 L1299.8 423.0 L1303.5 421.3 L1306.6 421.0 L1309.9 418.9 L1312.4 417.4 L1316.6 416.7 L1319.4 412.4 L1321.9 410.9 L1325.3 410.6 L1328.0 409.6 L1331.7 409.1 L1336.6 408.1 L1340.9 411.0 L1344.9 411.4 L1349.4 411.0 L1352.6 408.9 L1355.5 409.0 L1359.4 406.7 L1363.9 406.2 L1368.0 405.3 L1371.7 406.0 L1375.1 406.7 L1379.4 409.6 L1382.4 408.6 L1386.6 406.7 L1390.2 406.0 L1393.2 403.0 L1396.6 402.4 L1399.7 401.5 L1403.4 400.2 L1406.6 399.6 L1409.2 398.5 L1413.0 397.0 L1415.1 396.7 L1416.6 394.6 L1419.4 391.0 L1420.5 387.3 L1420.8 385.1 L1422.3 382.4 L1423.7 379.5 L1425.1 375.3 L1424.7 370.4 L1423.7 366.7 L1422.3 361.0 L1426.2 359.9 L1429.4 358.1 L1433.5 357.8 L1437.2 358.5 L1440.9 357.4 L1444.6 357.1 L1449.2 357.1 L1452.3 356.7 L1454.8 356.6 L1458.0 354.4 L1460.9 353.9 L1463.9 352.8 L1468.0 353.1 L1471.4 352.4 L1475.4 352.1 L1478.0 352.4 L1478.5 355.8 L1478.6 358.4 L1477.6 362.2 L1478.4 365.5 L1477.5 368.0 L1478.2 371.5 L1478.1 373.3 L1478.3 377.2 L1477.9 380.7 L1478.7 383.5 L1478.5 387.0 L1477.9 390.1 L1477.7 393.7 L1477.2 395.5 L1477.4 399.7 L1477.3 401.6 L1478.0 405.3 L1474.0 405.6 L1471.1 407.2 L1467.8 408.0 L1463.7 409.6 L1460.8 411.0 L1456.6 412.4 L1454.9 415.3 L1453.7 418.1 L1449.6 419.2 L1446.6 421.0 L1443.6 422.6 L1440.2 423.2 L1438.0 424.3 L1435.1 425.3 L1431.5 427.1 L1429.4 427.3 L1426.1 428.9 L1423.7 429.6 L1420.7 430.7 L1417.2 431.6 L1413.7 433.9 L1410.1 433.5 L1407.0 434.1 L1403.7 435.3 L1401.1 436.4 L1397.1 437.3 L1395.1 439.6 L1391.0 440.4 L1388.3 440.1 L1385.1 441.0 L1380.9 443.9 L1382.8 446.1 L1383.7 449.6 L1383.7 455.3 L1386.5 457.4 L1390.1 458.2 L1392.3 461.0 L1393.1 465.2 L1393.7 469.6 L1390.9 473.9 L1388.0 474.8 L1384.1 474.7 L1380.9 475.3 L1378.4 476.3 L1373.5 477.1 L1370.9 476.7 L1365.7 476.6 L1362.3 475.3 L1357.8 476.2 L1355.1 476.0 L1351.7 475.1 L1346.6 474.6 L1343.8 473.8 L1339.4 472.4 L1335.8 473.3 L1332.3 473.1 L1327.4 474.3 L1323.7 474.6 L1320.0 473.7 L1315.1 473.1 L1312.6 474.0 L1308.6 473.7 L1305.1 474.6 L1300.5 473.8 L1296.6 472.4 L1295.7 469.1 L1293.7 466.7 L1294.0 463.4 L1295.3 461.2 L1296.6 458.1 L1299.2 455.8 L1300.8 452.7 L1302.3 451.0 L1303.8 448.7 L1304.4 444.7 L1306.6 442.4 L1302.9 438.9 L1300.9 436.7 L1297.9 434.6 L1295.2 432.6Z"/><path d="M1418.7 366.0 L1419.4 369.6 L1417.3 374.6 L1415.4 377.3 L1413.7 379.6 L1412.9 383.0 L1412.3 386.7 L1413.2 390.4 L1413.7 393.9 L1411.6 393.1 L1411.0 389.6 L1410.1 386.7 L1410.8 382.7 L1411.6 378.9 L1413.2 375.9 L1415.1 373.1 L1417.3 368.1Z"/><path d="M1398.0 445.3 L1402.1 444.4 L1406.6 443.1 L1409.4 442.4 L1412.5 441.3 L1415.1 440.3 L1414.4 442.7 L1410.5 444.3 L1406.6 446.4 L1400.9 447.4Z"/></g>
<g><path d="M101.3 569.4 L104.7 570.7 L108.2 571.7 L110.6 567.1 L114.4 564.0 L111.3 559.3 L114.4 557.0 L116.0 554.7 L119.1 554.1 L122.2 553.1 L125.5 554.7 L129.9 556.2 L132.7 558.3 L134.3 559.0 L137.6 560.9 L139.2 558.3 L142.3 554.7 L145.7 551.9 L149.3 551.7 L151.8 549.1 L154.7 547.0 L157.1 545.3 L160.9 544.6 L163.4 544.2 L167.0 543.9 L169.3 541.5 L173.2 539.2 L176.2 539.4 L179.5 538.7 L182.5 538.3 L185.6 537.7 L189.0 536.9 L193.5 537.8 L196.7 536.9 L199.5 536.1 L202.8 534.6 L206.4 533.3 L210.4 533.0 L214.0 533.0 L217.2 533.2 L220.5 534.2 L222.8 533.8 L225.0 534.0 L229.7 535.3 L232.0 536.1 L236.0 534.9 L237.5 534.3 L241.3 533.0 L244.9 532.2 L246.8 531.9 L251.5 532.3 L253.7 531.5 L256.5 530.8 L260.0 530.3 L264.7 530.3 L267.6 530.7 L270.8 531.4 L273.3 532.7 L276.9 533.0 L279.4 536.4 L283.1 539.2 L284.8 541.4 L287.8 543.9 L286.5 546.5 L286.2 550.0 L284.0 552.1 L280.0 553.1 L276.1 554.9 L272.3 555.0 L269.2 556.2 L267.3 558.3 L263.3 560.7 L260.9 561.2 L259.4 563.2 L255.9 564.5 L253.7 567.1 L250.8 569.4 L248.9 571.6 L247.0 573.5 L245.9 575.7 L242.9 577.9 L242.5 581.7 L241.3 583.5 L241.3 587.2 L242.1 590.9 L240.9 592.8 L241.8 597.3 L241.3 599.6 L237.2 600.9 L234.8 600.8 L230.5 601.1 L226.7 601.7 L222.4 604.5 L219.7 605.0 L216.1 604.8 L213.0 604.4 L210.6 602.9 L207.3 602.7 L203.6 603.2 L200.3 602.5 L198.1 603.8 L195.1 602.9 L191.8 603.4 L189.5 602.4 L184.7 602.1 L182.4 601.3 L178.8 601.3 L176.3 601.1 L173.4 600.6 L169.9 602.1 L167.9 601.9 L164.3 601.9 L160.9 601.9 L157.1 601.2 L153.8 603.0 L151.9 603.3 L148.5 602.7 L144.0 601.4 L141.2 600.0 L137.6 598.0 L134.7 597.4 L131.7 595.0 L129.9 593.4 L126.7 595.1 L123.1 595.8 L119.1 596.5 L118.1 593.4 L116.0 588.7 L118.0 586.8 L120.6 584.1 L118.8 583.2 L115.3 581.5 L112.9 579.5 L110.4 581.9 L106.7 584.1 L103.6 581.0 L106.7 576.4 L104.2 572.7Z" fill="#8a6422" stroke="#8a6422" stroke-width="1" transform="translate(0.3,2.2)"/><path d="M101.3 569.4 L104.7 570.7 L108.2 571.7 L110.6 567.1 L114.4 564.0 L111.3 559.3 L114.4 557.0 L116.0 554.7 L119.1 554.1 L122.2 553.1 L125.5 554.7 L129.9 556.2 L132.7 558.3 L134.3 559.0 L137.6 560.9 L139.2 558.3 L142.3 554.7 L145.7 551.9 L149.3 551.7 L151.8 549.1 L154.7 547.0 L157.1 545.3 L160.9 544.6 L163.4 544.2 L167.0 543.9 L169.3 541.5 L173.2 539.2 L176.2 539.4 L179.5 538.7 L182.5 538.3 L185.6 537.7 L189.0 536.9 L193.5 537.8 L196.7 536.9 L199.5 536.1 L202.8 534.6 L206.4 533.3 L210.4 533.0 L214.0 533.0 L217.2 533.2 L220.5 534.2 L222.8 533.8 L225.0 534.0 L229.7 535.3 L232.0 536.1 L236.0 534.9 L237.5 534.3 L241.3 533.0 L244.9 532.2 L246.8 531.9 L251.5 532.3 L253.7 531.5 L256.5 530.8 L260.0 530.3 L264.7 530.3 L267.6 530.7 L270.8 531.4 L273.3 532.7 L276.9 533.0 L279.4 536.4 L283.1 539.2 L284.8 541.4 L287.8 543.9 L286.5 546.5 L286.2 550.0 L284.0 552.1 L280.0 553.1 L276.1 554.9 L272.3 555.0 L269.2 556.2 L267.3 558.3 L263.3 560.7 L260.9 561.2 L259.4 563.2 L255.9 564.5 L253.7 567.1 L250.8 569.4 L248.9 571.6 L247.0 573.5 L245.9 575.7 L242.9 577.9 L242.5 581.7 L241.3 583.5 L241.3 587.2 L242.1 590.9 L240.9 592.8 L241.8 597.3 L241.3 599.6 L237.2 600.9 L234.8 600.8 L230.5 601.1 L226.7 601.7 L222.4 604.5 L219.7 605.0 L216.1 604.8 L213.0 604.4 L210.6 602.9 L207.3 602.7 L203.6 603.2 L200.3 602.5 L198.1 603.8 L195.1 602.9 L191.8 603.4 L189.5 602.4 L184.7 602.1 L182.4 601.3 L178.8 601.3 L176.3 601.1 L173.4 600.6 L169.9 602.1 L167.9 601.9 L164.3 601.9 L160.9 601.9 L157.1 601.2 L153.8 603.0 L151.9 603.3 L148.5 602.7 L144.0 601.4 L141.2 600.0 L137.6 598.0 L134.7 597.4 L131.7 595.0 L129.9 593.4 L126.7 595.1 L123.1 595.8 L119.1 596.5 L118.1 593.4 L116.0 588.7 L118.0 586.8 L120.6 584.1 L118.8 583.2 L115.3 581.5 L112.9 579.5 L110.4 581.9 L106.7 584.1 L103.6 581.0 L106.7 576.4 L104.2 572.7Z" fill="#a89f5d"/><clipPath id="ic1"><path d="M101.3 569.4 L104.7 570.7 L108.2 571.7 L110.6 567.1 L114.4 564.0 L111.3 559.3 L114.4 557.0 L116.0 554.7 L119.1 554.1 L122.2 553.1 L125.5 554.7 L129.9 556.2 L132.7 558.3 L134.3 559.0 L137.6 560.9 L139.2 558.3 L142.3 554.7 L145.7 551.9 L149.3 551.7 L151.8 549.1 L154.7 547.0 L157.1 545.3 L160.9 544.6 L163.4 544.2 L167.0 543.9 L169.3 541.5 L173.2 539.2 L176.2 539.4 L179.5 538.7 L182.5 538.3 L185.6 537.7 L189.0 536.9 L193.5 537.8 L196.7 536.9 L199.5 536.1 L202.8 534.6 L206.4 533.3 L210.4 533.0 L214.0 533.0 L217.2 533.2 L220.5 534.2 L222.8 533.8 L225.0 534.0 L229.7 535.3 L232.0 536.1 L236.0 534.9 L237.5 534.3 L241.3 533.0 L244.9 532.2 L246.8 531.9 L251.5 532.3 L253.7 531.5 L256.5 530.8 L260.0 530.3 L264.7 530.3 L267.6 530.7 L270.8 531.4 L273.3 532.7 L276.9 533.0 L279.4 536.4 L283.1 539.2 L284.8 541.4 L287.8 543.9 L286.5 546.5 L286.2 550.0 L284.0 552.1 L280.0 553.1 L276.1 554.9 L272.3 555.0 L269.2 556.2 L267.3 558.3 L263.3 560.7 L260.9 561.2 L259.4 563.2 L255.9 564.5 L253.7 567.1 L250.8 569.4 L248.9 571.6 L247.0 573.5 L245.9 575.7 L242.9 577.9 L242.5 581.7 L241.3 583.5 L241.3 587.2 L242.1 590.9 L240.9 592.8 L241.8 597.3 L241.3 599.6 L237.2 600.9 L234.8 600.8 L230.5 601.1 L226.7 601.7 L222.4 604.5 L219.7 605.0 L216.1 604.8 L213.0 604.4 L210.6 602.9 L207.3 602.7 L203.6 603.2 L200.3 602.5 L198.1 603.8 L195.1 602.9 L191.8 603.4 L189.5 602.4 L184.7 602.1 L182.4 601.3 L178.8 601.3 L176.3 601.1 L173.4 600.6 L169.9 602.1 L167.9 601.9 L164.3 601.9 L160.9 601.9 L157.1 601.2 L153.8 603.0 L151.9 603.3 L148.5 602.7 L144.0 601.4 L141.2 600.0 L137.6 598.0 L134.7 597.4 L131.7 595.0 L129.9 593.4 L126.7 595.1 L123.1 595.8 L119.1 596.5 L118.1 593.4 L116.0 588.7 L118.0 586.8 L120.6 584.1 L118.8 583.2 L115.3 581.5 L112.9 579.5 L110.4 581.9 L106.7 584.1 L103.6 581.0 L106.7 576.4 L104.2 572.7Z"/></clipPath><g clip-path="url(#ic1)"><path d="M101.3 569.4 L104.7 570.7 L108.2 571.7 L110.6 567.1 L114.4 564.0 L111.3 559.3 L114.4 557.0 L116.0 554.7 L119.1 554.1 L122.2 553.1 L125.5 554.7 L129.9 556.2 L132.7 558.3 L134.3 559.0 L137.6 560.9 L139.2 558.3 L142.3 554.7 L145.7 551.9 L149.3 551.7 L151.8 549.1 L154.7 547.0 L157.1 545.3 L160.9 544.6 L163.4 544.2 L167.0 543.9 L169.3 541.5 L173.2 539.2 L176.2 539.4 L179.5 538.7 L182.5 538.3 L185.6 537.7 L189.0 536.9 L193.5 537.8 L196.7 536.9 L199.5 536.1 L202.8 534.6 L206.4 533.3 L210.4 533.0 L214.0 533.0 L217.2 533.2 L220.5 534.2 L222.8 533.8 L225.0 534.0 L229.7 535.3 L232.0 536.1 L236.0 534.9 L237.5 534.3 L241.3 533.0 L244.9 532.2 L246.8 531.9 L251.5 532.3 L253.7 531.5 L256.5 530.8 L260.0 530.3 L264.7 530.3 L267.6 530.7 L270.8 531.4 L273.3 532.7 L276.9 533.0 L279.4 536.4 L283.1 539.2 L284.8 541.4 L287.8 543.9 L286.5 546.5 L286.2 550.0 L284.0 552.1 L280.0 553.1 L276.1 554.9 L272.3 555.0 L269.2 556.2 L267.3 558.3 L263.3 560.7 L260.9 561.2 L259.4 563.2 L255.9 564.5 L253.7 567.1 L250.8 569.4 L248.9 571.6 L247.0 573.5 L245.9 575.7 L242.9 577.9 L242.5 581.7 L241.3 583.5 L241.3 587.2 L242.1 590.9 L240.9 592.8 L241.8 597.3 L241.3 599.6 L237.2 600.9 L234.8 600.8 L230.5 601.1 L226.7 601.7 L222.4 604.5 L219.7 605.0 L216.1 604.8 L213.0 604.4 L210.6 602.9 L207.3 602.7 L203.6 603.2 L200.3 602.5 L198.1 603.8 L195.1 602.9 L191.8 603.4 L189.5 602.4 L184.7 602.1 L182.4 601.3 L178.8 601.3 L176.3 601.1 L173.4 600.6 L169.9 602.1 L167.9 601.9 L164.3 601.9 L160.9 601.9 L157.1 601.2 L153.8 603.0 L151.9 603.3 L148.5 602.7 L144.0 601.4 L141.2 600.0 L137.6 598.0 L134.7 597.4 L131.7 595.0 L129.9 593.4 L126.7 595.1 L123.1 595.8 L119.1 596.5 L118.1 593.4 L116.0 588.7 L118.0 586.8 L120.6 584.1 L118.8 583.2 L115.3 581.5 L112.9 579.5 L110.4 581.9 L106.7 584.1 L103.6 581.0 L106.7 576.4 L104.2 572.7Z" fill="none" stroke="#c8b070" stroke-width="10" filter="url(#sand)"/><path d="M101.3 569.4 L104.7 570.7 L108.2 571.7 L110.6 567.1 L114.4 564.0 L111.3 559.3 L114.4 557.0 L116.0 554.7 L119.1 554.1 L122.2 553.1 L125.5 554.7 L129.9 556.2 L132.7 558.3 L134.3 559.0 L137.6 560.9 L139.2 558.3 L142.3 554.7 L145.7 551.9 L149.3 551.7 L151.8 549.1 L154.7 547.0 L157.1 545.3 L160.9 544.6 L163.4 544.2 L167.0 543.9 L169.3 541.5 L173.2 539.2 L176.2 539.4 L179.5 538.7 L182.5 538.3 L185.6 537.7 L189.0 536.9 L193.5 537.8 L196.7 536.9 L199.5 536.1 L202.8 534.6 L206.4 533.3 L210.4 533.0 L214.0 533.0 L217.2 533.2 L220.5 534.2 L222.8 533.8 L225.0 534.0 L229.7 535.3 L232.0 536.1 L236.0 534.9 L237.5 534.3 L241.3 533.0 L244.9 532.2 L246.8 531.9 L251.5 532.3 L253.7 531.5 L256.5 530.8 L260.0 530.3 L264.7 530.3 L267.6 530.7 L270.8 531.4 L273.3 532.7 L276.9 533.0 L279.4 536.4 L283.1 539.2 L284.8 541.4 L287.8 543.9 L286.5 546.5 L286.2 550.0 L284.0 552.1 L280.0 553.1 L276.1 554.9 L272.3 555.0 L269.2 556.2 L267.3 558.3 L263.3 560.7 L260.9 561.2 L259.4 563.2 L255.9 564.5 L253.7 567.1 L250.8 569.4 L248.9 571.6 L247.0 573.5 L245.9 575.7 L242.9 577.9 L242.5 581.7 L241.3 583.5 L241.3 587.2 L242.1 590.9 L240.9 592.8 L241.8 597.3 L241.3 599.6 L237.2 600.9 L234.8 600.8 L230.5 601.1 L226.7 601.7 L222.4 604.5 L219.7 605.0 L216.1 604.8 L213.0 604.4 L210.6 602.9 L207.3 602.7 L203.6 603.2 L200.3 602.5 L198.1 603.8 L195.1 602.9 L191.8 603.4 L189.5 602.4 L184.7 602.1 L182.4 601.3 L178.8 601.3 L176.3 601.1 L173.4 600.6 L169.9 602.1 L167.9 601.9 L164.3 601.9 L160.9 601.9 L157.1 601.2 L153.8 603.0 L151.9 603.3 L148.5 602.7 L144.0 601.4 L141.2 600.0 L137.6 598.0 L134.7 597.4 L131.7 595.0 L129.9 593.4 L126.7 595.1 L123.1 595.8 L119.1 596.5 L118.1 593.4 L116.0 588.7 L118.0 586.8 L120.6 584.1 L118.8 583.2 L115.3 581.5 L112.9 579.5 L110.4 581.9 L106.7 584.1 L103.6 581.0 L106.7 576.4 L104.2 572.7Z" fill="none" stroke="#c8ab64" stroke-width="2" opacity="0.8"/></g></g>
<g><path d="M85.8 574.0 L88.9 572.5 L92.0 574.0 L92.0 577.1 L88.9 578.7 L85.8 577.1Z" fill="#8a6422" stroke="#8a6422" stroke-width="1" transform="translate(0.3,2.2)"/><path d="M85.8 574.0 L88.9 572.5 L92.0 574.0 L92.0 577.1 L88.9 578.7 L85.8 577.1Z" fill="#a89f5d"/><clipPath id="ic2"><path d="M85.8 574.0 L88.9 572.5 L92.0 574.0 L92.0 577.1 L88.9 578.7 L85.8 577.1Z"/></clipPath><g clip-path="url(#ic2)"><path d="M85.8 574.0 L88.9 572.5 L92.0 574.0 L92.0 577.1 L88.9 578.7 L85.8 577.1Z" fill="none" stroke="#c8b070" stroke-width="10" filter="url(#sand)"/><path d="M85.8 574.0 L88.9 572.5 L92.0 574.0 L92.0 577.1 L88.9 578.7 L85.8 577.1Z" fill="none" stroke="#c8ab64" stroke-width="2" opacity="0.8"/></g></g>
<g filter="url(#hb)"><path d="M110.6 559.3C110.7 558.3 113.6 557.9 114.8 557.0C115.9 556.1 115.8 554.4 117.5 553.9C119.3 553.4 123.2 553.3 125.3 553.9C127.3 554.5 128.3 556.5 129.6 557.4C130.9 558.3 131.9 558.4 133.0 559.3C134.1 560.2 135.1 561.6 136.4 562.7C137.7 563.7 140.8 564.4 140.7 565.5C140.7 566.6 137.5 568.7 136.1 569.4C134.7 570.1 133.7 569.8 132.2 569.7C130.6 569.5 128.5 569.2 126.8 568.6C125.2 568.0 123.8 566.7 122.3 566.1C120.8 565.4 118.9 565.3 117.5 564.8C116.1 564.2 115.0 563.8 113.9 562.9C112.7 562.0 110.4 560.3 110.6 559.3Z" fill="#3e3e20" opacity="0.4" transform="translate(2.5,1.8)"/><path d="M110.6 559.3C110.7 558.3 113.6 557.9 114.8 557.0C115.9 556.1 115.8 554.4 117.5 553.9C119.3 553.4 123.2 553.3 125.3 553.9C127.3 554.5 128.3 556.5 129.6 557.4C130.9 558.3 131.9 558.4 133.0 559.3C134.1 560.2 135.1 561.6 136.4 562.7C137.7 563.7 140.8 564.4 140.7 565.5C140.7 566.6 137.5 568.7 136.1 569.4C134.7 570.1 133.7 569.8 132.2 569.7C130.6 569.5 128.5 569.2 126.8 568.6C125.2 568.0 123.8 566.7 122.3 566.1C120.8 565.4 118.9 565.3 117.5 564.8C116.1 564.2 115.0 563.8 113.9 562.9C112.7 562.0 110.4 560.3 110.6 559.3Z" fill="#6c6e3c"/><clipPath id="hc3"><path d="M110.6 559.3C110.7 558.3 113.6 557.9 114.8 557.0C115.9 556.1 115.8 554.4 117.5 553.9C119.3 553.4 123.2 553.3 125.3 553.9C127.3 554.5 128.3 556.5 129.6 557.4C130.9 558.3 131.9 558.4 133.0 559.3C134.1 560.2 135.1 561.6 136.4 562.7C137.7 563.7 140.8 564.4 140.7 565.5C140.7 566.6 137.5 568.7 136.1 569.4C134.7 570.1 133.7 569.8 132.2 569.7C130.6 569.5 128.5 569.2 126.8 568.6C125.2 568.0 123.8 566.7 122.3 566.1C120.8 565.4 118.9 565.3 117.5 564.8C116.1 564.2 115.0 563.8 113.9 562.9C112.7 562.0 110.4 560.3 110.6 559.3Z"/></clipPath><g clip-path="url(#hc3)"><ellipse cx="120.2" cy="558.3" rx="12.7" ry="5.3" fill="#9c9a68" opacity="0.85" transform="rotate(-24 125.6 561.7)"/><ellipse cx="132.3" cy="566.0" rx="12.1" ry="4.6" fill="#4a4c26" opacity="0.85" transform="rotate(-24 125.6 561.7)"/><ellipse cx="130.1" cy="561.6" rx="2.5" ry="1.3" fill="#b8b48a" opacity="0.7" transform="rotate(-28 130.1 561.6)"/><ellipse cx="119.1" cy="561.0" rx="3.6" ry="1.6" fill="#b8b48a" opacity="0.7" transform="rotate(-28 119.1 561.0)"/><ellipse cx="127.7" cy="560.2" rx="4.4" ry="1.2" fill="#b8b48a" opacity="0.7" transform="rotate(-28 127.7 560.2)"/><ellipse cx="125.2" cy="562.2" rx="4.0" ry="1.2" fill="#b8b48a" opacity="0.7" transform="rotate(-28 125.2 562.2)"/><ellipse cx="134.4" cy="566.2" rx="3.0" ry="1.4" fill="#38381c" opacity="0.6" transform="rotate(-28 134.4 566.2)"/><ellipse cx="128.4" cy="562.1" rx="3.7" ry="1.2" fill="#38381c" opacity="0.6" transform="rotate(-28 128.4 562.1)"/><ellipse cx="125.3" cy="564.6" rx="4.2" ry="1.5" fill="#38381c" opacity="0.6" transform="rotate(-28 125.3 564.6)"/></g></g>
<g filter="url(#hb)"><path d="M129.9 576.4C129.7 575.4 131.9 574.6 133.2 573.6C134.5 572.6 136.0 571.1 137.6 570.2C139.3 569.2 141.5 568.6 143.3 567.8C145.1 567.0 146.9 565.6 148.5 565.5C150.0 565.5 151.1 567.1 152.6 567.6C154.2 568.1 156.0 567.9 157.8 568.6C159.5 569.3 161.4 570.7 163.0 571.7C164.5 572.8 165.5 573.5 167.0 574.8C168.6 576.1 172.3 578.4 172.5 579.5C172.7 580.5 169.6 580.3 168.2 580.9C166.8 581.6 165.5 582.9 164.0 583.3C162.4 583.7 160.3 583.4 158.9 583.3C157.6 583.3 157.1 582.9 155.9 583.1C154.6 583.2 153.0 584.1 151.6 584.1C150.2 584.1 149.1 583.2 147.5 582.8C145.8 582.4 143.4 581.9 141.8 581.7C140.2 581.5 138.8 582.1 137.6 581.8C136.5 581.4 136.0 580.4 134.7 579.5C133.4 578.6 130.2 577.3 129.9 576.4Z" fill="#3e3e20" opacity="0.4" transform="translate(2.5,1.8)"/><path d="M129.9 576.4C129.7 575.4 131.9 574.6 133.2 573.6C134.5 572.6 136.0 571.1 137.6 570.2C139.3 569.2 141.5 568.6 143.3 567.8C145.1 567.0 146.9 565.6 148.5 565.5C150.0 565.5 151.1 567.1 152.6 567.6C154.2 568.1 156.0 567.9 157.8 568.6C159.5 569.3 161.4 570.7 163.0 571.7C164.5 572.8 165.5 573.5 167.0 574.8C168.6 576.1 172.3 578.4 172.5 579.5C172.7 580.5 169.6 580.3 168.2 580.9C166.8 581.6 165.5 582.9 164.0 583.3C162.4 583.7 160.3 583.4 158.9 583.3C157.6 583.3 157.1 582.9 155.9 583.1C154.6 583.2 153.0 584.1 151.6 584.1C150.2 584.1 149.1 583.2 147.5 582.8C145.8 582.4 143.4 581.9 141.8 581.7C140.2 581.5 138.8 582.1 137.6 581.8C136.5 581.4 136.0 580.4 134.7 579.5C133.4 578.6 130.2 577.3 129.9 576.4Z" fill="#6c6e3c"/><clipPath id="hc4"><path d="M129.9 576.4C129.7 575.4 131.9 574.6 133.2 573.6C134.5 572.6 136.0 571.1 137.6 570.2C139.3 569.2 141.5 568.6 143.3 567.8C145.1 567.0 146.9 565.6 148.5 565.5C150.0 565.5 151.1 567.1 152.6 567.6C154.2 568.1 156.0 567.9 157.8 568.6C159.5 569.3 161.4 570.7 163.0 571.7C164.5 572.8 165.5 573.5 167.0 574.8C168.6 576.1 172.3 578.4 172.5 579.5C172.7 580.5 169.6 580.3 168.2 580.9C166.8 581.6 165.5 582.9 164.0 583.3C162.4 583.7 160.3 583.4 158.9 583.3C157.6 583.3 157.1 582.9 155.9 583.1C154.6 583.2 153.0 584.1 151.6 584.1C150.2 584.1 149.1 583.2 147.5 582.8C145.8 582.4 143.4 581.9 141.8 581.7C140.2 581.5 138.8 582.1 137.6 581.8C136.5 581.4 136.0 580.4 134.7 579.5C133.4 578.6 130.2 577.3 129.9 576.4Z"/></clipPath><g clip-path="url(#hc4)"><ellipse cx="143.5" cy="570.7" rx="17.9" ry="6.3" fill="#9c9a68" opacity="0.85" transform="rotate(-24 151.2 574.8)"/><ellipse cx="160.5" cy="580.0" rx="17.0" ry="5.6" fill="#4a4c26" opacity="0.85" transform="rotate(-24 151.2 574.8)"/><ellipse cx="155.6" cy="575.1" rx="4.0" ry="1.6" fill="#b8b48a" opacity="0.7" transform="rotate(-28 155.6 575.1)"/><ellipse cx="147.5" cy="570.3" rx="3.7" ry="2.1" fill="#b8b48a" opacity="0.7" transform="rotate(-28 147.5 570.3)"/><ellipse cx="144.1" cy="574.1" rx="6.6" ry="1.8" fill="#b8b48a" opacity="0.7" transform="rotate(-28 144.1 574.1)"/><ellipse cx="153.8" cy="569.6" rx="6.2" ry="1.5" fill="#b8b48a" opacity="0.7" transform="rotate(-28 153.8 569.6)"/><ellipse cx="162.8" cy="577.5" rx="6.2" ry="1.9" fill="#38381c" opacity="0.6" transform="rotate(-28 162.8 577.5)"/><ellipse cx="156.1" cy="575.5" rx="3.6" ry="2.0" fill="#38381c" opacity="0.6" transform="rotate(-28 156.1 575.5)"/><ellipse cx="157.8" cy="576.0" rx="4.2" ry="1.8" fill="#38381c" opacity="0.6" transform="rotate(-28 157.8 576.0)"/></g></g>
<g filter="url(#hb)"><path d="M168.6 560.9C168.3 559.9 172.0 558.5 173.0 557.9C174.1 557.3 173.9 557.8 175.0 557.1C176.0 556.5 177.9 554.8 179.4 553.9C181.0 553.1 182.5 552.5 184.3 552.1C186.1 551.7 188.4 551.3 190.3 551.6C192.1 551.9 193.6 552.9 195.2 553.6C196.7 554.4 198.3 555.2 199.5 556.2C200.8 557.2 201.8 558.3 202.6 559.6C203.3 560.9 204.4 563.0 204.2 564.0C204.0 565.0 202.4 564.9 201.1 565.6C199.9 566.2 198.0 567.4 196.5 567.8C194.9 568.3 193.5 568.2 192.0 568.1C190.5 568.1 189.1 567.9 187.5 567.6C185.9 567.3 183.9 566.8 182.5 566.3C181.1 565.8 180.3 564.7 179.0 564.3C177.7 563.9 176.5 564.6 174.8 564.0C173.0 563.4 168.9 561.9 168.6 560.9Z" fill="#3e3e20" opacity="0.4" transform="translate(2.5,1.8)"/><path d="M168.6 560.9C168.3 559.9 172.0 558.5 173.0 557.9C174.1 557.3 173.9 557.8 175.0 557.1C176.0 556.5 177.9 554.8 179.4 553.9C181.0 553.1 182.5 552.5 184.3 552.1C186.1 551.7 188.4 551.3 190.3 551.6C192.1 551.9 193.6 552.9 195.2 553.6C196.7 554.4 198.3 555.2 199.5 556.2C200.8 557.2 201.8 558.3 202.6 559.6C203.3 560.9 204.4 563.0 204.2 564.0C204.0 565.0 202.4 564.9 201.1 565.6C199.9 566.2 198.0 567.4 196.5 567.8C194.9 568.3 193.5 568.2 192.0 568.1C190.5 568.1 189.1 567.9 187.5 567.6C185.9 567.3 183.9 566.8 182.5 566.3C181.1 565.8 180.3 564.7 179.0 564.3C177.7 563.9 176.5 564.6 174.8 564.0C173.0 563.4 168.9 561.9 168.6 560.9Z" fill="#6c6e3c"/><clipPath id="hc5"><path d="M168.6 560.9C168.3 559.9 172.0 558.5 173.0 557.9C174.1 557.3 173.9 557.8 175.0 557.1C176.0 556.5 177.9 554.8 179.4 553.9C181.0 553.1 182.5 552.5 184.3 552.1C186.1 551.7 188.4 551.3 190.3 551.6C192.1 551.9 193.6 552.9 195.2 553.6C196.7 554.4 198.3 555.2 199.5 556.2C200.8 557.2 201.8 558.3 202.6 559.6C203.3 560.9 204.4 563.0 204.2 564.0C204.0 565.0 202.4 564.9 201.1 565.6C199.9 566.2 198.0 567.4 196.5 567.8C194.9 568.3 193.5 568.2 192.0 568.1C190.5 568.1 189.1 567.9 187.5 567.6C185.9 567.3 183.9 566.8 182.5 566.3C181.1 565.8 180.3 564.7 179.0 564.3C177.7 563.9 176.5 564.6 174.8 564.0C173.0 563.4 168.9 561.9 168.6 560.9Z"/></clipPath><g clip-path="url(#hc5)"><ellipse cx="180.0" cy="556.1" rx="15.0" ry="5.5" fill="#9c9a68" opacity="0.85" transform="rotate(-24 186.4 559.7)"/><ellipse cx="194.2" cy="564.3" rx="14.2" ry="4.9" fill="#4a4c26" opacity="0.85" transform="rotate(-24 186.4 559.7)"/><ellipse cx="185.9" cy="556.1" rx="2.9" ry="1.5" fill="#b8b48a" opacity="0.7" transform="rotate(-28 185.9 556.1)"/><ellipse cx="178.5" cy="559.5" rx="3.1" ry="1.4" fill="#b8b48a" opacity="0.7" transform="rotate(-28 178.5 559.5)"/><ellipse cx="176.0" cy="555.5" rx="4.8" ry="2.0" fill="#b8b48a" opacity="0.7" transform="rotate(-28 176.0 555.5)"/><ellipse cx="181.6" cy="557.0" rx="3.7" ry="1.8" fill="#b8b48a" opacity="0.7" transform="rotate(-28 181.6 557.0)"/><ellipse cx="184.5" cy="562.0" rx="3.3" ry="1.8" fill="#38381c" opacity="0.6" transform="rotate(-28 184.5 562.0)"/><ellipse cx="193.2" cy="563.3" rx="3.7" ry="1.3" fill="#38381c" opacity="0.6" transform="rotate(-28 193.2 563.3)"/><ellipse cx="197.8" cy="562.5" rx="4.3" ry="1.2" fill="#38381c" opacity="0.6" transform="rotate(-28 197.8 562.5)"/></g></g>
<g filter="url(#hb)"><path d="M198.0 551.6C197.6 550.7 200.4 550.1 201.3 548.8C202.3 547.5 203.1 545.0 203.9 543.6C204.6 542.3 204.6 541.5 205.7 540.8C206.9 540.0 209.0 539.7 210.5 539.1C212.1 538.5 213.6 537.5 215.1 537.0C216.6 536.5 218.3 536.2 219.7 536.1C221.0 536.0 221.9 536.4 223.2 536.5C224.5 536.7 226.0 536.9 227.4 537.1C228.9 537.3 230.8 537.3 232.0 537.7C233.3 538.1 233.5 538.7 234.8 539.5C236.1 540.3 238.3 541.7 239.6 542.7C241.0 543.7 243.1 543.9 242.9 545.4C242.6 546.9 239.8 550.2 238.2 551.6C236.7 553.0 235.2 553.0 233.6 553.6C232.1 554.1 230.5 554.7 229.0 554.7C227.4 554.7 225.9 553.7 224.6 553.6C223.3 553.6 222.5 554.3 221.2 554.3C219.9 554.4 218.1 553.6 216.6 553.9C215.1 554.2 213.8 555.4 212.2 556.1C210.7 556.7 208.7 558.1 207.3 557.8C205.8 557.5 205.0 555.5 203.5 554.4C201.9 553.4 198.4 552.5 198.0 551.6Z" fill="#3e3e20" opacity="0.4" transform="translate(2.5,1.8)"/><path d="M198.0 551.6C197.6 550.7 200.4 550.1 201.3 548.8C202.3 547.5 203.1 545.0 203.9 543.6C204.6 542.3 204.6 541.5 205.7 540.8C206.9 540.0 209.0 539.7 210.5 539.1C212.1 538.5 213.6 537.5 215.1 537.0C216.6 536.5 218.3 536.2 219.7 536.1C221.0 536.0 221.9 536.4 223.2 536.5C224.5 536.7 226.0 536.9 227.4 537.1C228.9 537.3 230.8 537.3 232.0 537.7C233.3 538.1 233.5 538.7 234.8 539.5C236.1 540.3 238.3 541.7 239.6 542.7C241.0 543.7 243.1 543.9 242.9 545.4C242.6 546.9 239.8 550.2 238.2 551.6C236.7 553.0 235.2 553.0 233.6 553.6C232.1 554.1 230.5 554.7 229.0 554.7C227.4 554.7 225.9 553.7 224.6 553.6C223.3 553.6 222.5 554.3 221.2 554.3C219.9 554.4 218.1 553.6 216.6 553.9C215.1 554.2 213.8 555.4 212.2 556.1C210.7 556.7 208.7 558.1 207.3 557.8C205.8 557.5 205.0 555.5 203.5 554.4C201.9 553.4 198.4 552.5 198.0 551.6Z" fill="#6c6e3c"/><clipPath id="hc6"><path d="M198.0 551.6C197.6 550.7 200.4 550.1 201.3 548.8C202.3 547.5 203.1 545.0 203.9 543.6C204.6 542.3 204.6 541.5 205.7 540.8C206.9 540.0 209.0 539.7 210.5 539.1C212.1 538.5 213.6 537.5 215.1 537.0C216.6 536.5 218.3 536.2 219.7 536.1C221.0 536.0 221.9 536.4 223.2 536.5C224.5 536.7 226.0 536.9 227.4 537.1C228.9 537.3 230.8 537.3 232.0 537.7C233.3 538.1 233.5 538.7 234.8 539.5C236.1 540.3 238.3 541.7 239.6 542.7C241.0 543.7 243.1 543.9 242.9 545.4C242.6 546.9 239.8 550.2 238.2 551.6C236.7 553.0 235.2 553.0 233.6 553.6C232.1 554.1 230.5 554.7 229.0 554.7C227.4 554.7 225.9 553.7 224.6 553.6C223.3 553.6 222.5 554.3 221.2 554.3C219.9 554.4 218.1 553.6 216.6 553.9C215.1 554.2 213.8 555.4 212.2 556.1C210.7 556.7 208.7 558.1 207.3 557.8C205.8 557.5 205.0 555.5 203.5 554.4C201.9 553.4 198.4 552.5 198.0 551.6Z"/></clipPath><g clip-path="url(#hc6)"><ellipse cx="212.4" cy="542.2" rx="18.9" ry="7.4" fill="#9c9a68" opacity="0.85" transform="rotate(-24 220.4 547.0)"/><ellipse cx="230.3" cy="553.0" rx="18.0" ry="6.5" fill="#4a4c26" opacity="0.85" transform="rotate(-24 220.4 547.0)"/><ellipse cx="207.1" cy="542.7" rx="7.0" ry="2.1" fill="#b8b48a" opacity="0.7" transform="rotate(-28 207.1 542.7)"/><ellipse cx="219.7" cy="541.4" rx="5.1" ry="1.5" fill="#b8b48a" opacity="0.7" transform="rotate(-28 219.7 541.4)"/><ellipse cx="226.1" cy="541.9" rx="6.6" ry="1.9" fill="#b8b48a" opacity="0.7" transform="rotate(-28 226.1 541.9)"/><ellipse cx="207.5" cy="543.9" rx="7.0" ry="2.4" fill="#b8b48a" opacity="0.7" transform="rotate(-28 207.5 543.9)"/><ellipse cx="233.0" cy="547.7" rx="3.9" ry="1.8" fill="#38381c" opacity="0.6" transform="rotate(-28 233.0 547.7)"/><ellipse cx="231.6" cy="548.8" rx="3.7" ry="1.7" fill="#38381c" opacity="0.6" transform="rotate(-28 231.6 548.8)"/><ellipse cx="234.0" cy="550.5" rx="6.0" ry="2.6" fill="#38381c" opacity="0.6" transform="rotate(-28 234.0 550.5)"/></g></g>
<g><path d="M460.4 588.0 L460.4 584.1 L462.3 581.6 L465.3 580.0 L468.7 577.7 L471.9 575.7 L476.4 575.2 L479.0 573.9 L481.8 572.2 L485.4 570.0 L488.7 567.6 L491.5 566.5 L494.4 564.9 L497.5 563.2 L500.9 559.7 L503.0 557.9 L507.4 557.6 L509.0 556.5 L512.4 555.9 L515.4 555.7 L518.4 553.4 L522.2 553.1 L525.3 552.0 L530.0 550.7 L533.0 548.2 L535.3 544.4 L538.2 541.7 L540.7 539.4 L542.0 535.3 L543.1 538.3 L545.9 540.4 L549.7 541.7 L553.6 540.1 L556.2 537.9 L558.9 538.1 L562.6 537.2 L566.0 537.7 L568.9 538.9 L571.6 540.4 L572.7 542.7 L575.5 545.6 L578.6 546.0 L582.6 547.5 L585.7 547.5 L587.9 545.5 L588.3 541.7 L592.4 541.9 L594.7 541.1 L597.4 539.6 L601.0 539.4 L603.8 538.5 L607.6 541.7 L606.3 547.5 L610.5 547.7 L614.0 549.4 L616.9 550.6 L621.1 550.6 L624.3 550.7 L628.2 553.3 L626.8 556.3 L626.9 559.7 L625.1 562.6 L621.8 564.9 L620.5 566.5 L617.4 569.7 L615.3 571.3 L616.5 574.8 L618.0 576.6 L619.2 580.3 L620.4 585.0 L623.0 588.0 L624.3 590.0 L626.9 593.2 L626.0 597.4 L625.6 600.9 L623.0 603.4 L619.2 606.0 L616.2 607.8 L612.8 608.4 L610.2 609.9 L607.0 611.4 L602.5 611.8 L599.9 613.7 L596.0 616.7 L593.5 618.9 L591.7 621.9 L589.7 622.7 L587.0 625.3 L584.3 627.1 L580.3 626.4 L577.2 627.8 L574.2 629.2 L569.7 629.2 L565.8 631.5 L562.6 631.7 L557.9 632.8 L554.4 632.9 L551.0 634.3 L547.7 634.8 L542.7 635.9 L539.5 636.9 L536.8 636.1 L534.1 635.0 L530.4 634.3 L527.1 635.1 L523.5 635.6 L520.2 635.6 L516.7 633.7 L512.6 633.5 L509.9 631.7 L506.9 632.1 L503.4 631.0 L499.6 630.5 L495.1 633.0 L491.9 634.3 L487.8 633.7 L484.4 633.2 L481.6 633.0 L478.2 633.3 L476.0 634.0 L472.6 634.3 L468.7 634.2 L466.1 633.6 L462.3 632.4 L461.4 629.1 L462.3 625.3 L465.6 621.7 L467.4 618.9 L467.5 615.6 L468.7 611.2 L470.4 607.8 L472.6 604.7 L470.6 601.3 L467.4 598.3 L464.3 595.2 L462.3 593.2Z" fill="#8a6422" stroke="#8a6422" stroke-width="1" transform="translate(0.3,2.2)"/><path d="M460.4 588.0 L460.4 584.1 L462.3 581.6 L465.3 580.0 L468.7 577.7 L471.9 575.7 L476.4 575.2 L479.0 573.9 L481.8 572.2 L485.4 570.0 L488.7 567.6 L491.5 566.5 L494.4 564.9 L497.5 563.2 L500.9 559.7 L503.0 557.9 L507.4 557.6 L509.0 556.5 L512.4 555.9 L515.4 555.7 L518.4 553.4 L522.2 553.1 L525.3 552.0 L530.0 550.7 L533.0 548.2 L535.3 544.4 L538.2 541.7 L540.7 539.4 L542.0 535.3 L543.1 538.3 L545.9 540.4 L549.7 541.7 L553.6 540.1 L556.2 537.9 L558.9 538.1 L562.6 537.2 L566.0 537.7 L568.9 538.9 L571.6 540.4 L572.7 542.7 L575.5 545.6 L578.6 546.0 L582.6 547.5 L585.7 547.5 L587.9 545.5 L588.3 541.7 L592.4 541.9 L594.7 541.1 L597.4 539.6 L601.0 539.4 L603.8 538.5 L607.6 541.7 L606.3 547.5 L610.5 547.7 L614.0 549.4 L616.9 550.6 L621.1 550.6 L624.3 550.7 L628.2 553.3 L626.8 556.3 L626.9 559.7 L625.1 562.6 L621.8 564.9 L620.5 566.5 L617.4 569.7 L615.3 571.3 L616.5 574.8 L618.0 576.6 L619.2 580.3 L620.4 585.0 L623.0 588.0 L624.3 590.0 L626.9 593.2 L626.0 597.4 L625.6 600.9 L623.0 603.4 L619.2 606.0 L616.2 607.8 L612.8 608.4 L610.2 609.9 L607.0 611.4 L602.5 611.8 L599.9 613.7 L596.0 616.7 L593.5 618.9 L591.7 621.9 L589.7 622.7 L587.0 625.3 L584.3 627.1 L580.3 626.4 L577.2 627.8 L574.2 629.2 L569.7 629.2 L565.8 631.5 L562.6 631.7 L557.9 632.8 L554.4 632.9 L551.0 634.3 L547.7 634.8 L542.7 635.9 L539.5 636.9 L536.8 636.1 L534.1 635.0 L530.4 634.3 L527.1 635.1 L523.5 635.6 L520.2 635.6 L516.7 633.7 L512.6 633.5 L509.9 631.7 L506.9 632.1 L503.4 631.0 L499.6 630.5 L495.1 633.0 L491.9 634.3 L487.8 633.7 L484.4 633.2 L481.6 633.0 L478.2 633.3 L476.0 634.0 L472.6 634.3 L468.7 634.2 L466.1 633.6 L462.3 632.4 L461.4 629.1 L462.3 625.3 L465.6 621.7 L467.4 618.9 L467.5 615.6 L468.7 611.2 L470.4 607.8 L472.6 604.7 L470.6 601.3 L467.4 598.3 L464.3 595.2 L462.3 593.2Z" fill="#a89f5d"/><clipPath id="ic7"><path d="M460.4 588.0 L460.4 584.1 L462.3 581.6 L465.3 580.0 L468.7 577.7 L471.9 575.7 L476.4 575.2 L479.0 573.9 L481.8 572.2 L485.4 570.0 L488.7 567.6 L491.5 566.5 L494.4 564.9 L497.5 563.2 L500.9 559.7 L503.0 557.9 L507.4 557.6 L509.0 556.5 L512.4 555.9 L515.4 555.7 L518.4 553.4 L522.2 553.1 L525.3 552.0 L530.0 550.7 L533.0 548.2 L535.3 544.4 L538.2 541.7 L540.7 539.4 L542.0 535.3 L543.1 538.3 L545.9 540.4 L549.7 541.7 L553.6 540.1 L556.2 537.9 L558.9 538.1 L562.6 537.2 L566.0 537.7 L568.9 538.9 L571.6 540.4 L572.7 542.7 L575.5 545.6 L578.6 546.0 L582.6 547.5 L585.7 547.5 L587.9 545.5 L588.3 541.7 L592.4 541.9 L594.7 541.1 L597.4 539.6 L601.0 539.4 L603.8 538.5 L607.6 541.7 L606.3 547.5 L610.5 547.7 L614.0 549.4 L616.9 550.6 L621.1 550.6 L624.3 550.7 L628.2 553.3 L626.8 556.3 L626.9 559.7 L625.1 562.6 L621.8 564.9 L620.5 566.5 L617.4 569.7 L615.3 571.3 L616.5 574.8 L618.0 576.6 L619.2 580.3 L620.4 585.0 L623.0 588.0 L624.3 590.0 L626.9 593.2 L626.0 597.4 L625.6 600.9 L623.0 603.4 L619.2 606.0 L616.2 607.8 L612.8 608.4 L610.2 609.9 L607.0 611.4 L602.5 611.8 L599.9 613.7 L596.0 616.7 L593.5 618.9 L591.7 621.9 L589.7 622.7 L587.0 625.3 L584.3 627.1 L580.3 626.4 L577.2 627.8 L574.2 629.2 L569.7 629.2 L565.8 631.5 L562.6 631.7 L557.9 632.8 L554.4 632.9 L551.0 634.3 L547.7 634.8 L542.7 635.9 L539.5 636.9 L536.8 636.1 L534.1 635.0 L530.4 634.3 L527.1 635.1 L523.5 635.6 L520.2 635.6 L516.7 633.7 L512.6 633.5 L509.9 631.7 L506.9 632.1 L503.4 631.0 L499.6 630.5 L495.1 633.0 L491.9 634.3 L487.8 633.7 L484.4 633.2 L481.6 633.0 L478.2 633.3 L476.0 634.0 L472.6 634.3 L468.7 634.2 L466.1 633.6 L462.3 632.4 L461.4 629.1 L462.3 625.3 L465.6 621.7 L467.4 618.9 L467.5 615.6 L468.7 611.2 L470.4 607.8 L472.6 604.7 L470.6 601.3 L467.4 598.3 L464.3 595.2 L462.3 593.2Z"/></clipPath><g clip-path="url(#ic7)"><path d="M460.4 588.0 L460.4 584.1 L462.3 581.6 L465.3 580.0 L468.7 577.7 L471.9 575.7 L476.4 575.2 L479.0 573.9 L481.8 572.2 L485.4 570.0 L488.7 567.6 L491.5 566.5 L494.4 564.9 L497.5 563.2 L500.9 559.7 L503.0 557.9 L507.4 557.6 L509.0 556.5 L512.4 555.9 L515.4 555.7 L518.4 553.4 L522.2 553.1 L525.3 552.0 L530.0 550.7 L533.0 548.2 L535.3 544.4 L538.2 541.7 L540.7 539.4 L542.0 535.3 L543.1 538.3 L545.9 540.4 L549.7 541.7 L553.6 540.1 L556.2 537.9 L558.9 538.1 L562.6 537.2 L566.0 537.7 L568.9 538.9 L571.6 540.4 L572.7 542.7 L575.5 545.6 L578.6 546.0 L582.6 547.5 L585.7 547.5 L587.9 545.5 L588.3 541.7 L592.4 541.9 L594.7 541.1 L597.4 539.6 L601.0 539.4 L603.8 538.5 L607.6 541.7 L606.3 547.5 L610.5 547.7 L614.0 549.4 L616.9 550.6 L621.1 550.6 L624.3 550.7 L628.2 553.3 L626.8 556.3 L626.9 559.7 L625.1 562.6 L621.8 564.9 L620.5 566.5 L617.4 569.7 L615.3 571.3 L616.5 574.8 L618.0 576.6 L619.2 580.3 L620.4 585.0 L623.0 588.0 L624.3 590.0 L626.9 593.2 L626.0 597.4 L625.6 600.9 L623.0 603.4 L619.2 606.0 L616.2 607.8 L612.8 608.4 L610.2 609.9 L607.0 611.4 L602.5 611.8 L599.9 613.7 L596.0 616.7 L593.5 618.9 L591.7 621.9 L589.7 622.7 L587.0 625.3 L584.3 627.1 L580.3 626.4 L577.2 627.8 L574.2 629.2 L569.7 629.2 L565.8 631.5 L562.6 631.7 L557.9 632.8 L554.4 632.9 L551.0 634.3 L547.7 634.8 L542.7 635.9 L539.5 636.9 L536.8 636.1 L534.1 635.0 L530.4 634.3 L527.1 635.1 L523.5 635.6 L520.2 635.6 L516.7 633.7 L512.6 633.5 L509.9 631.7 L506.9 632.1 L503.4 631.0 L499.6 630.5 L495.1 633.0 L491.9 634.3 L487.8 633.7 L484.4 633.2 L481.6 633.0 L478.2 633.3 L476.0 634.0 L472.6 634.3 L468.7 634.2 L466.1 633.6 L462.3 632.4 L461.4 629.1 L462.3 625.3 L465.6 621.7 L467.4 618.9 L467.5 615.6 L468.7 611.2 L470.4 607.8 L472.6 604.7 L470.6 601.3 L467.4 598.3 L464.3 595.2 L462.3 593.2Z" fill="none" stroke="#c8b070" stroke-width="10" filter="url(#sand)"/><path d="M460.4 588.0 L460.4 584.1 L462.3 581.6 L465.3 580.0 L468.7 577.7 L471.9 575.7 L476.4 575.2 L479.0 573.9 L481.8 572.2 L485.4 570.0 L488.7 567.6 L491.5 566.5 L494.4 564.9 L497.5 563.2 L500.9 559.7 L503.0 557.9 L507.4 557.6 L509.0 556.5 L512.4 555.9 L515.4 555.7 L518.4 553.4 L522.2 553.1 L525.3 552.0 L530.0 550.7 L533.0 548.2 L535.3 544.4 L538.2 541.7 L540.7 539.4 L542.0 535.3 L543.1 538.3 L545.9 540.4 L549.7 541.7 L553.6 540.1 L556.2 537.9 L558.9 538.1 L562.6 537.2 L566.0 537.7 L568.9 538.9 L571.6 540.4 L572.7 542.7 L575.5 545.6 L578.6 546.0 L582.6 547.5 L585.7 547.5 L587.9 545.5 L588.3 541.7 L592.4 541.9 L594.7 541.1 L597.4 539.6 L601.0 539.4 L603.8 538.5 L607.6 541.7 L606.3 547.5 L610.5 547.7 L614.0 549.4 L616.9 550.6 L621.1 550.6 L624.3 550.7 L628.2 553.3 L626.8 556.3 L626.9 559.7 L625.1 562.6 L621.8 564.9 L620.5 566.5 L617.4 569.7 L615.3 571.3 L616.5 574.8 L618.0 576.6 L619.2 580.3 L620.4 585.0 L623.0 588.0 L624.3 590.0 L626.9 593.2 L626.0 597.4 L625.6 600.9 L623.0 603.4 L619.2 606.0 L616.2 607.8 L612.8 608.4 L610.2 609.9 L607.0 611.4 L602.5 611.8 L599.9 613.7 L596.0 616.7 L593.5 618.9 L591.7 621.9 L589.7 622.7 L587.0 625.3 L584.3 627.1 L580.3 626.4 L577.2 627.8 L574.2 629.2 L569.7 629.2 L565.8 631.5 L562.6 631.7 L557.9 632.8 L554.4 632.9 L551.0 634.3 L547.7 634.8 L542.7 635.9 L539.5 636.9 L536.8 636.1 L534.1 635.0 L530.4 634.3 L527.1 635.1 L523.5 635.6 L520.2 635.6 L516.7 633.7 L512.6 633.5 L509.9 631.7 L506.9 632.1 L503.4 631.0 L499.6 630.5 L495.1 633.0 L491.9 634.3 L487.8 633.7 L484.4 633.2 L481.6 633.0 L478.2 633.3 L476.0 634.0 L472.6 634.3 L468.7 634.2 L466.1 633.6 L462.3 632.4 L461.4 629.1 L462.3 625.3 L465.6 621.7 L467.4 618.9 L467.5 615.6 L468.7 611.2 L470.4 607.8 L472.6 604.7 L470.6 601.3 L467.4 598.3 L464.3 595.2 L462.3 593.2Z" fill="none" stroke="#c8ab64" stroke-width="2" opacity="0.8"/></g></g>
<g><path d="M560.7 529.5 L565.2 530.8 L568.0 531.2 L571.6 532.1 L572.2 534.6 L566.5 535.3 L562.6 532.7Z" fill="#8a6422" stroke="#8a6422" stroke-width="1" transform="translate(0.3,2.2)"/><path d="M560.7 529.5 L565.2 530.8 L568.0 531.2 L571.6 532.1 L572.2 534.6 L566.5 535.3 L562.6 532.7Z" fill="#a89f5d"/><clipPath id="ic8"><path d="M560.7 529.5 L565.2 530.8 L568.0 531.2 L571.6 532.1 L572.2 534.6 L566.5 535.3 L562.6 532.7Z"/></clipPath><g clip-path="url(#ic8)"><path d="M560.7 529.5 L565.2 530.8 L568.0 531.2 L571.6 532.1 L572.2 534.6 L566.5 535.3 L562.6 532.7Z" fill="none" stroke="#c8b070" stroke-width="10" filter="url(#sand)"/><path d="M560.7 529.5 L565.2 530.8 L568.0 531.2 L571.6 532.1 L572.2 534.6 L566.5 535.3 L562.6 532.7Z" fill="none" stroke="#c8ab64" stroke-width="2" opacity="0.8"/></g></g>
<g><path d="M575.5 534.0 L578.0 533.4 L578.7 536.6 L576.1 537.2Z" fill="#8a6422" stroke="#8a6422" stroke-width="1" transform="translate(0.3,2.2)"/><path d="M575.5 534.0 L578.0 533.4 L578.7 536.6 L576.1 537.2Z" fill="#a89f5d"/><clipPath id="ic9"><path d="M575.5 534.0 L578.0 533.4 L578.7 536.6 L576.1 537.2Z"/></clipPath><g clip-path="url(#ic9)"><path d="M575.5 534.0 L578.0 533.4 L578.7 536.6 L576.1 537.2Z" fill="none" stroke="#c8b070" stroke-width="10" filter="url(#sand)"/><path d="M575.5 534.0 L578.0 533.4 L578.7 536.6 L576.1 537.2Z" fill="none" stroke="#c8ab64" stroke-width="2" opacity="0.8"/></g></g>
<g filter="url(#hb)"><path d="M547.2 555.9C546.7 555.2 549.8 555.0 551.0 554.2C552.1 553.3 552.7 551.7 554.0 550.8C555.3 549.9 557.1 549.0 558.7 548.8C560.4 548.6 562.5 549.3 563.9 549.3C565.2 549.3 565.4 548.9 566.6 548.9C567.9 549.0 570.0 549.0 571.6 549.4C573.2 549.9 575.0 550.6 576.1 551.5C577.3 552.3 577.3 553.7 578.5 554.4C579.6 555.2 582.4 554.6 583.2 555.9C584.0 557.1 582.9 560.0 583.2 561.9C583.4 563.8 584.7 566.1 584.5 567.4C584.2 568.8 582.5 569.1 581.5 569.9C580.4 570.8 579.2 572.5 578.0 572.6C576.8 572.7 575.9 571.1 574.4 570.7C572.9 570.3 570.5 570.9 569.0 570.0C567.5 569.1 566.6 566.7 565.4 565.5C564.1 564.2 562.5 563.3 561.3 562.3C560.1 561.3 559.6 560.4 558.3 559.7C557.0 559.1 555.5 559.1 553.6 558.4C551.7 557.8 547.6 556.6 547.2 555.9Z" fill="#3e3e20" opacity="0.4" transform="translate(2.5,1.8)"/><path d="M547.2 555.9C546.7 555.2 549.8 555.0 551.0 554.2C552.1 553.3 552.7 551.7 554.0 550.8C555.3 549.9 557.1 549.0 558.7 548.8C560.4 548.6 562.5 549.3 563.9 549.3C565.2 549.3 565.4 548.9 566.6 548.9C567.9 549.0 570.0 549.0 571.6 549.4C573.2 549.9 575.0 550.6 576.1 551.5C577.3 552.3 577.3 553.7 578.5 554.4C579.6 555.2 582.4 554.6 583.2 555.9C584.0 557.1 582.9 560.0 583.2 561.9C583.4 563.8 584.7 566.1 584.5 567.4C584.2 568.8 582.5 569.1 581.5 569.9C580.4 570.8 579.2 572.5 578.0 572.6C576.8 572.7 575.9 571.1 574.4 570.7C572.9 570.3 570.5 570.9 569.0 570.0C567.5 569.1 566.6 566.7 565.4 565.5C564.1 564.2 562.5 563.3 561.3 562.3C560.1 561.3 559.6 560.4 558.3 559.7C557.0 559.1 555.5 559.1 553.6 558.4C551.7 557.8 547.6 556.6 547.2 555.9Z" fill="#6c6e3c"/><clipPath id="hc10"><path d="M547.2 555.9C546.7 555.2 549.8 555.0 551.0 554.2C552.1 553.3 552.7 551.7 554.0 550.8C555.3 549.9 557.1 549.0 558.7 548.8C560.4 548.6 562.5 549.3 563.9 549.3C565.2 549.3 565.4 548.9 566.6 548.9C567.9 549.0 570.0 549.0 571.6 549.4C573.2 549.9 575.0 550.6 576.1 551.5C577.3 552.3 577.3 553.7 578.5 554.4C579.6 555.2 582.4 554.6 583.2 555.9C584.0 557.1 582.9 560.0 583.2 561.9C583.4 563.8 584.7 566.1 584.5 567.4C584.2 568.8 582.5 569.1 581.5 569.9C580.4 570.8 579.2 572.5 578.0 572.6C576.8 572.7 575.9 571.1 574.4 570.7C572.9 570.3 570.5 570.9 569.0 570.0C567.5 569.1 566.6 566.7 565.4 565.5C564.1 564.2 562.5 563.3 561.3 562.3C560.1 561.3 559.6 560.4 558.3 559.7C557.0 559.1 555.5 559.1 553.6 558.4C551.7 557.8 547.6 556.6 547.2 555.9Z"/></clipPath><g clip-path="url(#hc10)"><ellipse cx="559.1" cy="555.5" rx="15.7" ry="8.1" fill="#9c9a68" opacity="0.85" transform="rotate(-24 565.8 560.7)"/><ellipse cx="574.0" cy="567.4" rx="14.9" ry="7.1" fill="#4a4c26" opacity="0.85" transform="rotate(-24 565.8 560.7)"/><ellipse cx="567.6" cy="554.7" rx="4.6" ry="2.0" fill="#b8b48a" opacity="0.7" transform="rotate(-28 567.6 554.7)"/><ellipse cx="570.1" cy="561.5" rx="4.9" ry="2.3" fill="#b8b48a" opacity="0.7" transform="rotate(-28 570.1 561.5)"/><ellipse cx="567.2" cy="554.8" rx="5.9" ry="1.9" fill="#b8b48a" opacity="0.7" transform="rotate(-28 567.2 554.8)"/><ellipse cx="568.2" cy="558.2" rx="3.5" ry="3.0" fill="#b8b48a" opacity="0.7" transform="rotate(-28 568.2 558.2)"/><ellipse cx="569.2" cy="564.1" rx="3.8" ry="2.0" fill="#38381c" opacity="0.6" transform="rotate(-28 569.2 564.1)"/><ellipse cx="565.3" cy="563.4" rx="5.5" ry="1.7" fill="#38381c" opacity="0.6" transform="rotate(-28 565.3 563.4)"/><ellipse cx="576.7" cy="564.2" rx="5.0" ry="1.9" fill="#38381c" opacity="0.6" transform="rotate(-28 576.7 564.2)"/></g></g>
<g filter="url(#hb)"><path d="M585.7 559.7C586.2 558.2 588.5 557.7 590.0 557.0C591.5 556.2 593.3 555.1 594.7 555.2C596.1 555.3 597.0 557.1 598.4 557.7C599.9 558.3 601.9 558.5 603.5 559.0C605.0 559.4 607.5 559.9 607.6 560.4C607.7 560.9 605.1 561.4 603.8 562.1C602.6 562.8 601.6 563.7 600.3 564.4C599.0 565.0 597.4 565.8 596.0 566.2C594.7 566.5 593.5 566.4 592.0 566.4C590.5 566.4 588.1 567.3 587.0 566.2C586.0 565.0 585.2 561.3 585.7 559.7Z" fill="#3e3e20" opacity="0.4" transform="translate(2.5,1.8)"/><path d="M585.7 559.7C586.2 558.2 588.5 557.7 590.0 557.0C591.5 556.2 593.3 555.1 594.7 555.2C596.1 555.3 597.0 557.1 598.4 557.7C599.9 558.3 601.9 558.5 603.5 559.0C605.0 559.4 607.5 559.9 607.6 560.4C607.7 560.9 605.1 561.4 603.8 562.1C602.6 562.8 601.6 563.7 600.3 564.4C599.0 565.0 597.4 565.8 596.0 566.2C594.7 566.5 593.5 566.4 592.0 566.4C590.5 566.4 588.1 567.3 587.0 566.2C586.0 565.0 585.2 561.3 585.7 559.7Z" fill="#6c6e3c"/><clipPath id="hc11"><path d="M585.7 559.7C586.2 558.2 588.5 557.7 590.0 557.0C591.5 556.2 593.3 555.1 594.7 555.2C596.1 555.3 597.0 557.1 598.4 557.7C599.9 558.3 601.9 558.5 603.5 559.0C605.0 559.4 607.5 559.9 607.6 560.4C607.7 560.9 605.1 561.4 603.8 562.1C602.6 562.8 601.6 563.7 600.3 564.4C599.0 565.0 597.4 565.8 596.0 566.2C594.7 566.5 593.5 566.4 592.0 566.4C590.5 566.4 588.1 567.3 587.0 566.2C586.0 565.0 585.2 561.3 585.7 559.7Z"/></clipPath><g clip-path="url(#hc11)"><ellipse cx="592.7" cy="558.3" rx="9.2" ry="3.7" fill="#9c9a68" opacity="0.85" transform="rotate(-24 596.7 560.7)"/><ellipse cx="601.5" cy="563.7" rx="8.7" ry="3.3" fill="#4a4c26" opacity="0.85" transform="rotate(-24 596.7 560.7)"/><ellipse cx="595.6" cy="558.7" rx="2.6" ry="0.8" fill="#b8b48a" opacity="0.7" transform="rotate(-28 595.6 558.7)"/><ellipse cx="592.0" cy="559.6" rx="1.9" ry="0.8" fill="#b8b48a" opacity="0.7" transform="rotate(-28 592.0 559.6)"/><ellipse cx="597.4" cy="559.9" rx="2.7" ry="1.0" fill="#b8b48a" opacity="0.7" transform="rotate(-28 597.4 559.9)"/><ellipse cx="594.7" cy="557.5" rx="2.0" ry="1.1" fill="#b8b48a" opacity="0.7" transform="rotate(-28 594.7 557.5)"/><ellipse cx="597.4" cy="563.4" rx="2.6" ry="1.0" fill="#38381c" opacity="0.6" transform="rotate(-28 597.4 563.4)"/><ellipse cx="603.0" cy="561.5" rx="2.2" ry="0.8" fill="#38381c" opacity="0.6" transform="rotate(-28 603.0 561.5)"/><ellipse cx="603.2" cy="563.2" rx="2.7" ry="1.2" fill="#38381c" opacity="0.6" transform="rotate(-28 603.2 563.2)"/></g></g>
<g filter="url(#hb)"><path d="M522.7 576.4C523.8 575.3 525.3 574.0 526.4 573.0C527.5 572.1 528.1 571.5 529.2 570.8C530.3 570.1 531.6 569.1 533.0 568.7C534.4 568.4 536.2 568.9 537.7 568.6C539.3 568.3 540.9 567.3 542.3 567.1C543.7 566.9 544.6 567.2 545.9 567.4C547.2 567.7 548.7 568.0 550.0 568.7C551.4 569.5 552.5 570.9 553.9 571.7C555.4 572.6 557.4 573.3 558.7 573.9C560.0 574.5 560.5 574.6 561.7 575.3C563.0 575.9 566.2 576.9 566.5 577.7C566.7 578.6 564.5 579.5 563.3 580.4C562.1 581.3 560.3 582.2 559.1 583.0C557.9 583.9 557.5 585.1 556.2 585.4C554.8 585.8 552.9 585.0 550.9 585.2C549.0 585.4 546.3 586.0 544.6 586.7C542.9 587.5 542.1 588.8 540.6 589.7C539.1 590.5 537.3 591.8 535.6 591.9C533.8 591.9 531.9 590.4 530.2 590.0C528.4 589.5 526.5 589.9 525.3 589.3C524.1 588.7 524.0 587.3 522.9 586.4C521.8 585.6 519.3 585.3 518.9 584.2C518.4 583.0 519.4 580.9 520.1 579.6C520.7 578.3 521.7 577.5 522.7 576.4Z" fill="#3e3e20" opacity="0.4" transform="translate(2.5,1.8)"/><path d="M522.7 576.4C523.8 575.3 525.3 574.0 526.4 573.0C527.5 572.1 528.1 571.5 529.2 570.8C530.3 570.1 531.6 569.1 533.0 568.7C534.4 568.4 536.2 568.9 537.7 568.6C539.3 568.3 540.9 567.3 542.3 567.1C543.7 566.9 544.6 567.2 545.9 567.4C547.2 567.7 548.7 568.0 550.0 568.7C551.4 569.5 552.5 570.9 553.9 571.7C555.4 572.6 557.4 573.3 558.7 573.9C560.0 574.5 560.5 574.6 561.7 575.3C563.0 575.9 566.2 576.9 566.5 577.7C566.7 578.6 564.5 579.5 563.3 580.4C562.1 581.3 560.3 582.2 559.1 583.0C557.9 583.9 557.5 585.1 556.2 585.4C554.8 585.8 552.9 585.0 550.9 585.2C549.0 585.4 546.3 586.0 544.6 586.7C542.9 587.5 542.1 588.8 540.6 589.7C539.1 590.5 537.3 591.8 535.6 591.9C533.8 591.9 531.9 590.4 530.2 590.0C528.4 589.5 526.5 589.9 525.3 589.3C524.1 588.7 524.0 587.3 522.9 586.4C521.8 585.6 519.3 585.3 518.9 584.2C518.4 583.0 519.4 580.9 520.1 579.6C520.7 578.3 521.7 577.5 522.7 576.4Z" fill="#6c6e3c"/><clipPath id="hc12"><path d="M522.7 576.4C523.8 575.3 525.3 574.0 526.4 573.0C527.5 572.1 528.1 571.5 529.2 570.8C530.3 570.1 531.6 569.1 533.0 568.7C534.4 568.4 536.2 568.9 537.7 568.6C539.3 568.3 540.9 567.3 542.3 567.1C543.7 566.9 544.6 567.2 545.9 567.4C547.2 567.7 548.7 568.0 550.0 568.7C551.4 569.5 552.5 570.9 553.9 571.7C555.4 572.6 557.4 573.3 558.7 573.9C560.0 574.5 560.5 574.6 561.7 575.3C563.0 575.9 566.2 576.9 566.5 577.7C566.7 578.6 564.5 579.5 563.3 580.4C562.1 581.3 560.3 582.2 559.1 583.0C557.9 583.9 557.5 585.1 556.2 585.4C554.8 585.8 552.9 585.0 550.9 585.2C549.0 585.4 546.3 586.0 544.6 586.7C542.9 587.5 542.1 588.8 540.6 589.7C539.1 590.5 537.3 591.8 535.6 591.9C533.8 591.9 531.9 590.4 530.2 590.0C528.4 589.5 526.5 589.9 525.3 589.3C524.1 588.7 524.0 587.3 522.9 586.4C521.8 585.6 519.3 585.3 518.9 584.2C518.4 583.0 519.4 580.9 520.1 579.6C520.7 578.3 521.7 577.5 522.7 576.4Z"/></clipPath><g clip-path="url(#hc12)"><ellipse cx="534.1" cy="574.3" rx="20.0" ry="8.3" fill="#9c9a68" opacity="0.85" transform="rotate(-24 542.7 579.7)"/><ellipse cx="553.1" cy="586.5" rx="19.0" ry="7.3" fill="#4a4c26" opacity="0.85" transform="rotate(-24 542.7 579.7)"/><ellipse cx="539.8" cy="578.7" rx="7.5" ry="1.8" fill="#b8b48a" opacity="0.7" transform="rotate(-28 539.8 578.7)"/><ellipse cx="534.4" cy="573.3" rx="4.4" ry="2.0" fill="#b8b48a" opacity="0.7" transform="rotate(-28 534.4 573.3)"/><ellipse cx="536.3" cy="576.2" rx="6.5" ry="2.3" fill="#b8b48a" opacity="0.7" transform="rotate(-28 536.3 576.2)"/><ellipse cx="534.7" cy="577.1" rx="5.9" ry="2.8" fill="#b8b48a" opacity="0.7" transform="rotate(-28 534.7 577.1)"/><ellipse cx="559.0" cy="582.3" rx="6.8" ry="1.9" fill="#38381c" opacity="0.6" transform="rotate(-28 559.0 582.3)"/><ellipse cx="547.0" cy="584.5" rx="5.6" ry="2.4" fill="#38381c" opacity="0.6" transform="rotate(-28 547.0 584.5)"/><ellipse cx="558.8" cy="585.1" rx="4.9" ry="1.5" fill="#38381c" opacity="0.6" transform="rotate(-28 558.8 585.1)"/></g></g>
<g filter="url(#hb)"><path d="M486.7 593.2C486.3 592.5 488.3 592.1 489.3 591.4C490.4 590.6 491.7 589.6 492.9 588.8C494.2 588.0 495.6 587.2 497.0 586.7C498.5 586.3 500.2 586.4 501.6 586.0C503.0 585.5 504.1 584.7 505.5 584.2C506.9 583.6 508.5 582.7 509.9 582.9C511.2 583.1 512.0 584.5 513.5 585.3C515.0 586.2 517.3 586.8 518.9 588.0C520.5 589.2 521.6 591.2 523.1 592.5C524.6 593.8 527.7 594.7 527.9 595.7C528.0 596.8 525.4 597.9 524.1 598.8C522.8 599.6 521.6 600.7 520.2 600.9C518.8 601.1 517.1 599.9 515.8 599.9C514.4 599.8 513.6 600.6 512.2 600.6C510.8 600.5 509.0 600.1 507.3 599.6C505.6 599.1 503.6 598.0 501.9 597.6C500.2 597.1 498.7 597.4 497.0 597.0C495.3 596.6 493.6 595.7 491.9 595.1C490.2 594.4 487.2 593.8 486.7 593.2Z" fill="#3e3e20" opacity="0.4" transform="translate(2.5,1.8)"/><path d="M486.7 593.2C486.3 592.5 488.3 592.1 489.3 591.4C490.4 590.6 491.7 589.6 492.9 588.8C494.2 588.0 495.6 587.2 497.0 586.7C498.5 586.3 500.2 586.4 501.6 586.0C503.0 585.5 504.1 584.7 505.5 584.2C506.9 583.6 508.5 582.7 509.9 582.9C511.2 583.1 512.0 584.5 513.5 585.3C515.0 586.2 517.3 586.8 518.9 588.0C520.5 589.2 521.6 591.2 523.1 592.5C524.6 593.8 527.7 594.7 527.9 595.7C528.0 596.8 525.4 597.9 524.1 598.8C522.8 599.6 521.6 600.7 520.2 600.9C518.8 601.1 517.1 599.9 515.8 599.9C514.4 599.8 513.6 600.6 512.2 600.6C510.8 600.5 509.0 600.1 507.3 599.6C505.6 599.1 503.6 598.0 501.9 597.6C500.2 597.1 498.7 597.4 497.0 597.0C495.3 596.6 493.6 595.7 491.9 595.1C490.2 594.4 487.2 593.8 486.7 593.2Z" fill="#6c6e3c"/><clipPath id="hc13"><path d="M486.7 593.2C486.3 592.5 488.3 592.1 489.3 591.4C490.4 590.6 491.7 589.6 492.9 588.8C494.2 588.0 495.6 587.2 497.0 586.7C498.5 586.3 500.2 586.4 501.6 586.0C503.0 585.5 504.1 584.7 505.5 584.2C506.9 583.6 508.5 582.7 509.9 582.9C511.2 583.1 512.0 584.5 513.5 585.3C515.0 586.2 517.3 586.8 518.9 588.0C520.5 589.2 521.6 591.2 523.1 592.5C524.6 593.8 527.7 594.7 527.9 595.7C528.0 596.8 525.4 597.9 524.1 598.8C522.8 599.6 521.6 600.7 520.2 600.9C518.8 601.1 517.1 599.9 515.8 599.9C514.4 599.8 513.6 600.6 512.2 600.6C510.8 600.5 509.0 600.1 507.3 599.6C505.6 599.1 503.6 598.0 501.9 597.6C500.2 597.1 498.7 597.4 497.0 597.0C495.3 596.6 493.6 595.7 491.9 595.1C490.2 594.4 487.2 593.8 486.7 593.2Z"/></clipPath><g clip-path="url(#hc13)"><ellipse cx="499.9" cy="587.9" rx="17.3" ry="6.1" fill="#9c9a68" opacity="0.85" transform="rotate(-24 507.3 591.9)"/><ellipse cx="516.4" cy="596.9" rx="16.5" ry="5.4" fill="#4a4c26" opacity="0.85" transform="rotate(-24 507.3 591.9)"/><ellipse cx="495.9" cy="589.2" rx="6.1" ry="1.7" fill="#b8b48a" opacity="0.7" transform="rotate(-28 495.9 589.2)"/><ellipse cx="498.2" cy="590.7" rx="4.3" ry="1.9" fill="#b8b48a" opacity="0.7" transform="rotate(-28 498.2 590.7)"/><ellipse cx="498.1" cy="591.2" rx="3.5" ry="1.6" fill="#b8b48a" opacity="0.7" transform="rotate(-28 498.1 591.2)"/><ellipse cx="513.9" cy="587.0" rx="4.6" ry="1.5" fill="#b8b48a" opacity="0.7" transform="rotate(-28 513.9 587.0)"/><ellipse cx="510.2" cy="594.9" rx="6.0" ry="2.1" fill="#38381c" opacity="0.6" transform="rotate(-28 510.2 594.9)"/><ellipse cx="508.9" cy="596.0" rx="4.6" ry="1.2" fill="#38381c" opacity="0.6" transform="rotate(-28 508.9 596.0)"/><ellipse cx="508.2" cy="593.6" rx="4.4" ry="2.2" fill="#38381c" opacity="0.6" transform="rotate(-28 508.2 593.6)"/></g></g>
<g filter="url(#hb)"><path d="M561.3 603.4C561.3 603.1 563.3 601.9 564.6 601.0C565.8 600.0 567.7 598.6 568.8 597.7C570.0 596.9 570.5 596.6 571.6 595.7C572.7 594.9 574.1 593.6 575.4 592.7C576.7 591.9 578.0 591.1 579.5 590.6C581.0 590.0 583.1 589.2 584.5 589.3C585.8 589.4 586.4 590.6 587.7 591.3C589.0 591.9 591.4 592.0 592.2 593.2C593.0 594.3 592.6 596.5 592.4 598.0C592.2 599.5 591.9 601.3 590.9 602.2C589.9 603.0 587.8 602.8 586.4 603.1C585.0 603.4 584.1 603.6 582.7 604.0C581.3 604.4 579.6 605.1 578.0 605.4C576.4 605.6 574.4 605.8 573.1 605.5C571.7 605.2 571.3 604.1 569.9 603.7C568.5 603.3 566.1 603.2 564.7 603.2C563.3 603.2 561.3 603.8 561.3 603.4Z" fill="#3e3e20" opacity="0.4" transform="translate(2.5,1.8)"/><path d="M561.3 603.4C561.3 603.1 563.3 601.9 564.6 601.0C565.8 600.0 567.7 598.6 568.8 597.7C570.0 596.9 570.5 596.6 571.6 595.7C572.7 594.9 574.1 593.6 575.4 592.7C576.7 591.9 578.0 591.1 579.5 590.6C581.0 590.0 583.1 589.2 584.5 589.3C585.8 589.4 586.4 590.6 587.7 591.3C589.0 591.9 591.4 592.0 592.2 593.2C593.0 594.3 592.6 596.5 592.4 598.0C592.2 599.5 591.9 601.3 590.9 602.2C589.9 603.0 587.8 602.8 586.4 603.1C585.0 603.4 584.1 603.6 582.7 604.0C581.3 604.4 579.6 605.1 578.0 605.4C576.4 605.6 574.4 605.8 573.1 605.5C571.7 605.2 571.3 604.1 569.9 603.7C568.5 603.3 566.1 603.2 564.7 603.2C563.3 603.2 561.3 603.8 561.3 603.4Z" fill="#6c6e3c"/><clipPath id="hc14"><path d="M561.3 603.4C561.3 603.1 563.3 601.9 564.6 601.0C565.8 600.0 567.7 598.6 568.8 597.7C570.0 596.9 570.5 596.6 571.6 595.7C572.7 594.9 574.1 593.6 575.4 592.7C576.7 591.9 578.0 591.1 579.5 590.6C581.0 590.0 583.1 589.2 584.5 589.3C585.8 589.4 586.4 590.6 587.7 591.3C589.0 591.9 591.4 592.0 592.2 593.2C593.0 594.3 592.6 596.5 592.4 598.0C592.2 599.5 591.9 601.3 590.9 602.2C589.9 603.0 587.8 602.8 586.4 603.1C585.0 603.4 584.1 603.6 582.7 604.0C581.3 604.4 579.6 605.1 578.0 605.4C576.4 605.6 574.4 605.8 573.1 605.5C571.7 605.2 571.3 604.1 569.9 603.7C568.5 603.3 566.1 603.2 564.7 603.2C563.3 603.2 561.3 603.8 561.3 603.4Z"/></clipPath><g clip-path="url(#hc14)"><ellipse cx="571.2" cy="593.8" rx="13.0" ry="5.5" fill="#9c9a68" opacity="0.85" transform="rotate(-24 576.7 597.3)"/><ellipse cx="583.5" cy="601.8" rx="12.3" ry="4.8" fill="#4a4c26" opacity="0.85" transform="rotate(-24 576.7 597.3)"/><ellipse cx="579.9" cy="594.0" rx="2.6" ry="1.5" fill="#b8b48a" opacity="0.7" transform="rotate(-28 579.9 594.0)"/><ellipse cx="582.4" cy="593.4" rx="3.8" ry="1.6" fill="#b8b48a" opacity="0.7" transform="rotate(-28 582.4 593.4)"/><ellipse cx="569.8" cy="594.3" rx="3.2" ry="1.8" fill="#b8b48a" opacity="0.7" transform="rotate(-28 569.8 594.3)"/><ellipse cx="576.4" cy="596.6" rx="4.2" ry="1.4" fill="#b8b48a" opacity="0.7" transform="rotate(-28 576.4 596.6)"/><ellipse cx="585.5" cy="600.1" rx="3.8" ry="1.2" fill="#38381c" opacity="0.6" transform="rotate(-28 585.5 600.1)"/><ellipse cx="577.9" cy="601.8" rx="4.1" ry="1.8" fill="#38381c" opacity="0.6" transform="rotate(-28 577.9 601.8)"/><ellipse cx="577.3" cy="597.9" rx="4.5" ry="1.9" fill="#38381c" opacity="0.6" transform="rotate(-28 577.3 597.9)"/></g></g>
<g filter="url(#hb)"><path d="M531.1 615.0C530.7 613.9 533.5 613.0 534.8 612.0C536.0 611.0 537.1 609.7 538.5 608.7C539.9 607.7 541.8 607.0 543.3 606.0C544.8 605.0 546.0 603.6 547.7 602.9C549.4 602.1 552.0 601.6 553.6 601.5C555.2 601.4 555.8 601.8 557.1 602.3C558.3 602.9 559.6 604.3 561.0 605.0C562.3 605.6 563.9 605.3 565.2 606.0C566.5 606.8 567.3 608.4 568.8 609.5C570.3 610.5 574.1 611.4 574.2 612.5C574.2 613.5 570.5 614.7 569.0 615.6C567.5 616.4 566.4 617.2 565.2 617.6C563.9 618.0 562.7 617.4 561.4 617.7C560.1 618.0 559.0 619.0 557.4 619.3C555.8 619.5 553.4 619.2 551.9 619.4C550.4 619.5 549.9 620.0 548.5 620.2C547.0 620.3 545.0 620.5 543.0 620.3C541.1 620.1 538.9 619.8 536.9 618.9C534.9 618.0 531.4 616.2 531.1 615.0Z" fill="#3e3e20" opacity="0.4" transform="translate(2.5,1.8)"/><path d="M531.1 615.0C530.7 613.9 533.5 613.0 534.8 612.0C536.0 611.0 537.1 609.7 538.5 608.7C539.9 607.7 541.8 607.0 543.3 606.0C544.8 605.0 546.0 603.6 547.7 602.9C549.4 602.1 552.0 601.6 553.6 601.5C555.2 601.4 555.8 601.8 557.1 602.3C558.3 602.9 559.6 604.3 561.0 605.0C562.3 605.6 563.9 605.3 565.2 606.0C566.5 606.8 567.3 608.4 568.8 609.5C570.3 610.5 574.1 611.4 574.2 612.5C574.2 613.5 570.5 614.7 569.0 615.6C567.5 616.4 566.4 617.2 565.2 617.6C563.9 618.0 562.7 617.4 561.4 617.7C560.1 618.0 559.0 619.0 557.4 619.3C555.8 619.5 553.4 619.2 551.9 619.4C550.4 619.5 549.9 620.0 548.5 620.2C547.0 620.3 545.0 620.5 543.0 620.3C541.1 620.1 538.9 619.8 536.9 618.9C534.9 618.0 531.4 616.2 531.1 615.0Z" fill="#6c6e3c"/><clipPath id="hc15"><path d="M531.1 615.0C530.7 613.9 533.5 613.0 534.8 612.0C536.0 611.0 537.1 609.7 538.5 608.7C539.9 607.7 541.8 607.0 543.3 606.0C544.8 605.0 546.0 603.6 547.7 602.9C549.4 602.1 552.0 601.6 553.6 601.5C555.2 601.4 555.8 601.8 557.1 602.3C558.3 602.9 559.6 604.3 561.0 605.0C562.3 605.6 563.9 605.3 565.2 606.0C566.5 606.8 567.3 608.4 568.8 609.5C570.3 610.5 574.1 611.4 574.2 612.5C574.2 613.5 570.5 614.7 569.0 615.6C567.5 616.4 566.4 617.2 565.2 617.6C563.9 618.0 562.7 617.4 561.4 617.7C560.1 618.0 559.0 619.0 557.4 619.3C555.8 619.5 553.4 619.2 551.9 619.4C550.4 619.5 549.9 620.0 548.5 620.2C547.0 620.3 545.0 620.5 543.0 620.3C541.1 620.1 538.9 619.8 536.9 618.9C534.9 618.0 531.4 616.2 531.1 615.0Z"/></clipPath><g clip-path="url(#hc15)"><ellipse cx="544.9" cy="606.7" rx="18.1" ry="6.3" fill="#9c9a68" opacity="0.85" transform="rotate(-24 552.6 610.8)"/><ellipse cx="562.1" cy="616.1" rx="17.2" ry="5.6" fill="#4a4c26" opacity="0.85" transform="rotate(-24 552.6 610.8)"/><ellipse cx="554.1" cy="605.6" rx="4.8" ry="1.8" fill="#b8b48a" opacity="0.7" transform="rotate(-28 554.1 605.6)"/><ellipse cx="552.3" cy="609.6" rx="4.9" ry="2.1" fill="#b8b48a" opacity="0.7" transform="rotate(-28 552.3 609.6)"/><ellipse cx="546.5" cy="610.1" rx="4.1" ry="1.8" fill="#b8b48a" opacity="0.7" transform="rotate(-28 546.5 610.1)"/><ellipse cx="541.5" cy="611.6" rx="6.3" ry="1.4" fill="#b8b48a" opacity="0.7" transform="rotate(-28 541.5 611.6)"/><ellipse cx="561.8" cy="612.8" rx="4.8" ry="1.1" fill="#38381c" opacity="0.6" transform="rotate(-28 561.8 612.8)"/><ellipse cx="556.7" cy="616.0" rx="3.7" ry="1.7" fill="#38381c" opacity="0.6" transform="rotate(-28 556.7 616.0)"/><ellipse cx="555.0" cy="611.6" rx="5.5" ry="1.9" fill="#38381c" opacity="0.6" transform="rotate(-28 555.0 611.6)"/></g></g>
<g><path d="M737.4 545.0 L738.3 541.1 L740.0 537.2 L742.7 535.8 L746.6 533.3 L749.2 533.1 L753.6 532.6 L756.8 532.9 L759.2 532.4 L762.3 532.0 L765.6 531.4 L769.5 531.3 L772.6 531.8 L774.0 530.5 L778.0 530.6 L781.5 531.6 L784.4 531.7 L788.5 532.0 L791.3 534.0 L795.4 535.5 L797.6 536.5 L800.6 536.4 L804.5 535.8 L808.1 534.6 L811.1 534.0 L815.1 532.5 L817.3 530.6 L822.5 528.0 L827.8 530.6 L831.6 530.2 L834.3 528.7 L837.8 529.1 L840.9 530.6 L845.7 529.9 L848.7 529.3 L854.0 528.0 L855.3 532.0 L858.3 532.3 L863.0 532.3 L867.1 533.3 L871.2 532.7 L874.3 533.7 L876.3 533.5 L880.2 533.9 L883.3 533.1 L887.2 533.9 L890.8 534.0 L893.2 533.3 L897.0 533.5 L900.6 532.2 L903.1 531.3 L906.3 530.6 L910.0 531.8 L913.0 532.1 L915.5 532.0 L917.9 534.4 L922.1 537.2 L923.3 540.0 L926.0 542.4 L927.3 547.7 L924.8 550.4 L922.1 552.9 L919.4 554.4 L915.5 556.8 L916.4 560.0 L915.9 563.8 L916.8 566.0 L915.4 569.9 L915.5 573.9 L917.5 577.3 L919.4 580.4 L916.8 585.6 L914.2 586.6 L910.5 587.0 L906.3 588.3 L902.8 588.1 L899.6 589.0 L895.9 589.6 L893.8 590.6 L890.6 593.9 L888.0 594.8 L883.2 597.1 L880.2 598.7 L877.2 599.8 L873.7 600.1 L871.2 600.3 L867.1 601.4 L863.9 602.5 L860.5 603.1 L856.6 604.0 L851.8 604.0 L848.3 603.6 L844.8 602.7 L842.2 602.7 L837.6 602.4 L834.3 601.4 L830.6 600.2 L827.5 599.9 L823.8 598.7 L821.1 599.3 L817.6 600.1 L814.7 600.1 L810.9 600.7 L806.8 600.3 L804.2 601.4 L801.6 601.2 L797.5 601.2 L794.8 602.0 L791.1 602.7 L786.4 601.6 L783.2 601.4 L782.1 598.5 L779.3 594.8 L775.1 593.0 L772.8 589.6 L768.5 588.7 L765.8 588.3 L762.3 587.0 L758.1 587.1 L754.9 586.5 L751.8 585.6 L749.3 583.8 L745.3 581.7 L746.3 578.1 L749.2 573.9 L747.8 570.3 L746.6 566.0 L747.7 562.0 L747.9 559.5 L745.4 556.4 L742.6 552.9 L741.7 550.5 L739.4 548.2Z" fill="#8a6422" stroke="#8a6422" stroke-width="1" transform="translate(0.3,2.2)"/><path d="M737.4 545.0 L738.3 541.1 L740.0 537.2 L742.7 535.8 L746.6 533.3 L749.2 533.1 L753.6 532.6 L756.8 532.9 L759.2 532.4 L762.3 532.0 L765.6 531.4 L769.5 531.3 L772.6 531.8 L774.0 530.5 L778.0 530.6 L781.5 531.6 L784.4 531.7 L788.5 532.0 L791.3 534.0 L795.4 535.5 L797.6 536.5 L800.6 536.4 L804.5 535.8 L808.1 534.6 L811.1 534.0 L815.1 532.5 L817.3 530.6 L822.5 528.0 L827.8 530.6 L831.6 530.2 L834.3 528.7 L837.8 529.1 L840.9 530.6 L845.7 529.9 L848.7 529.3 L854.0 528.0 L855.3 532.0 L858.3 532.3 L863.0 532.3 L867.1 533.3 L871.2 532.7 L874.3 533.7 L876.3 533.5 L880.2 533.9 L883.3 533.1 L887.2 533.9 L890.8 534.0 L893.2 533.3 L897.0 533.5 L900.6 532.2 L903.1 531.3 L906.3 530.6 L910.0 531.8 L913.0 532.1 L915.5 532.0 L917.9 534.4 L922.1 537.2 L923.3 540.0 L926.0 542.4 L927.3 547.7 L924.8 550.4 L922.1 552.9 L919.4 554.4 L915.5 556.8 L916.4 560.0 L915.9 563.8 L916.8 566.0 L915.4 569.9 L915.5 573.9 L917.5 577.3 L919.4 580.4 L916.8 585.6 L914.2 586.6 L910.5 587.0 L906.3 588.3 L902.8 588.1 L899.6 589.0 L895.9 589.6 L893.8 590.6 L890.6 593.9 L888.0 594.8 L883.2 597.1 L880.2 598.7 L877.2 599.8 L873.7 600.1 L871.2 600.3 L867.1 601.4 L863.9 602.5 L860.5 603.1 L856.6 604.0 L851.8 604.0 L848.3 603.6 L844.8 602.7 L842.2 602.7 L837.6 602.4 L834.3 601.4 L830.6 600.2 L827.5 599.9 L823.8 598.7 L821.1 599.3 L817.6 600.1 L814.7 600.1 L810.9 600.7 L806.8 600.3 L804.2 601.4 L801.6 601.2 L797.5 601.2 L794.8 602.0 L791.1 602.7 L786.4 601.6 L783.2 601.4 L782.1 598.5 L779.3 594.8 L775.1 593.0 L772.8 589.6 L768.5 588.7 L765.8 588.3 L762.3 587.0 L758.1 587.1 L754.9 586.5 L751.8 585.6 L749.3 583.8 L745.3 581.7 L746.3 578.1 L749.2 573.9 L747.8 570.3 L746.6 566.0 L747.7 562.0 L747.9 559.5 L745.4 556.4 L742.6 552.9 L741.7 550.5 L739.4 548.2Z" fill="#a89f5d"/><clipPath id="ic16"><path d="M737.4 545.0 L738.3 541.1 L740.0 537.2 L742.7 535.8 L746.6 533.3 L749.2 533.1 L753.6 532.6 L756.8 532.9 L759.2 532.4 L762.3 532.0 L765.6 531.4 L769.5 531.3 L772.6 531.8 L774.0 530.5 L778.0 530.6 L781.5 531.6 L784.4 531.7 L788.5 532.0 L791.3 534.0 L795.4 535.5 L797.6 536.5 L800.6 536.4 L804.5 535.8 L808.1 534.6 L811.1 534.0 L815.1 532.5 L817.3 530.6 L822.5 528.0 L827.8 530.6 L831.6 530.2 L834.3 528.7 L837.8 529.1 L840.9 530.6 L845.7 529.9 L848.7 529.3 L854.0 528.0 L855.3 532.0 L858.3 532.3 L863.0 532.3 L867.1 533.3 L871.2 532.7 L874.3 533.7 L876.3 533.5 L880.2 533.9 L883.3 533.1 L887.2 533.9 L890.8 534.0 L893.2 533.3 L897.0 533.5 L900.6 532.2 L903.1 531.3 L906.3 530.6 L910.0 531.8 L913.0 532.1 L915.5 532.0 L917.9 534.4 L922.1 537.2 L923.3 540.0 L926.0 542.4 L927.3 547.7 L924.8 550.4 L922.1 552.9 L919.4 554.4 L915.5 556.8 L916.4 560.0 L915.9 563.8 L916.8 566.0 L915.4 569.9 L915.5 573.9 L917.5 577.3 L919.4 580.4 L916.8 585.6 L914.2 586.6 L910.5 587.0 L906.3 588.3 L902.8 588.1 L899.6 589.0 L895.9 589.6 L893.8 590.6 L890.6 593.9 L888.0 594.8 L883.2 597.1 L880.2 598.7 L877.2 599.8 L873.7 600.1 L871.2 600.3 L867.1 601.4 L863.9 602.5 L860.5 603.1 L856.6 604.0 L851.8 604.0 L848.3 603.6 L844.8 602.7 L842.2 602.7 L837.6 602.4 L834.3 601.4 L830.6 600.2 L827.5 599.9 L823.8 598.7 L821.1 599.3 L817.6 600.1 L814.7 600.1 L810.9 600.7 L806.8 600.3 L804.2 601.4 L801.6 601.2 L797.5 601.2 L794.8 602.0 L791.1 602.7 L786.4 601.6 L783.2 601.4 L782.1 598.5 L779.3 594.8 L775.1 593.0 L772.8 589.6 L768.5 588.7 L765.8 588.3 L762.3 587.0 L758.1 587.1 L754.9 586.5 L751.8 585.6 L749.3 583.8 L745.3 581.7 L746.3 578.1 L749.2 573.9 L747.8 570.3 L746.6 566.0 L747.7 562.0 L747.9 559.5 L745.4 556.4 L742.6 552.9 L741.7 550.5 L739.4 548.2Z"/></clipPath><g clip-path="url(#ic16)"><path d="M737.4 545.0 L738.3 541.1 L740.0 537.2 L742.7 535.8 L746.6 533.3 L749.2 533.1 L753.6 532.6 L756.8 532.9 L759.2 532.4 L762.3 532.0 L765.6 531.4 L769.5 531.3 L772.6 531.8 L774.0 530.5 L778.0 530.6 L781.5 531.6 L784.4 531.7 L788.5 532.0 L791.3 534.0 L795.4 535.5 L797.6 536.5 L800.6 536.4 L804.5 535.8 L808.1 534.6 L811.1 534.0 L815.1 532.5 L817.3 530.6 L822.5 528.0 L827.8 530.6 L831.6 530.2 L834.3 528.7 L837.8 529.1 L840.9 530.6 L845.7 529.9 L848.7 529.3 L854.0 528.0 L855.3 532.0 L858.3 532.3 L863.0 532.3 L867.1 533.3 L871.2 532.7 L874.3 533.7 L876.3 533.5 L880.2 533.9 L883.3 533.1 L887.2 533.9 L890.8 534.0 L893.2 533.3 L897.0 533.5 L900.6 532.2 L903.1 531.3 L906.3 530.6 L910.0 531.8 L913.0 532.1 L915.5 532.0 L917.9 534.4 L922.1 537.2 L923.3 540.0 L926.0 542.4 L927.3 547.7 L924.8 550.4 L922.1 552.9 L919.4 554.4 L915.5 556.8 L916.4 560.0 L915.9 563.8 L916.8 566.0 L915.4 569.9 L915.5 573.9 L917.5 577.3 L919.4 580.4 L916.8 585.6 L914.2 586.6 L910.5 587.0 L906.3 588.3 L902.8 588.1 L899.6 589.0 L895.9 589.6 L893.8 590.6 L890.6 593.9 L888.0 594.8 L883.2 597.1 L880.2 598.7 L877.2 599.8 L873.7 600.1 L871.2 600.3 L867.1 601.4 L863.9 602.5 L860.5 603.1 L856.6 604.0 L851.8 604.0 L848.3 603.6 L844.8 602.7 L842.2 602.7 L837.6 602.4 L834.3 601.4 L830.6 600.2 L827.5 599.9 L823.8 598.7 L821.1 599.3 L817.6 600.1 L814.7 600.1 L810.9 600.7 L806.8 600.3 L804.2 601.4 L801.6 601.2 L797.5 601.2 L794.8 602.0 L791.1 602.7 L786.4 601.6 L783.2 601.4 L782.1 598.5 L779.3 594.8 L775.1 593.0 L772.8 589.6 L768.5 588.7 L765.8 588.3 L762.3 587.0 L758.1 587.1 L754.9 586.5 L751.8 585.6 L749.3 583.8 L745.3 581.7 L746.3 578.1 L749.2 573.9 L747.8 570.3 L746.6 566.0 L747.7 562.0 L747.9 559.5 L745.4 556.4 L742.6 552.9 L741.7 550.5 L739.4 548.2Z" fill="none" stroke="#c8b070" stroke-width="10" filter="url(#sand)"/><path d="M737.4 545.0 L738.3 541.1 L740.0 537.2 L742.7 535.8 L746.6 533.3 L749.2 533.1 L753.6 532.6 L756.8 532.9 L759.2 532.4 L762.3 532.0 L765.6 531.4 L769.5 531.3 L772.6 531.8 L774.0 530.5 L778.0 530.6 L781.5 531.6 L784.4 531.7 L788.5 532.0 L791.3 534.0 L795.4 535.5 L797.6 536.5 L800.6 536.4 L804.5 535.8 L808.1 534.6 L811.1 534.0 L815.1 532.5 L817.3 530.6 L822.5 528.0 L827.8 530.6 L831.6 530.2 L834.3 528.7 L837.8 529.1 L840.9 530.6 L845.7 529.9 L848.7 529.3 L854.0 528.0 L855.3 532.0 L858.3 532.3 L863.0 532.3 L867.1 533.3 L871.2 532.7 L874.3 533.7 L876.3 533.5 L880.2 533.9 L883.3 533.1 L887.2 533.9 L890.8 534.0 L893.2 533.3 L897.0 533.5 L900.6 532.2 L903.1 531.3 L906.3 530.6 L910.0 531.8 L913.0 532.1 L915.5 532.0 L917.9 534.4 L922.1 537.2 L923.3 540.0 L926.0 542.4 L927.3 547.7 L924.8 550.4 L922.1 552.9 L919.4 554.4 L915.5 556.8 L916.4 560.0 L915.9 563.8 L916.8 566.0 L915.4 569.9 L915.5 573.9 L917.5 577.3 L919.4 580.4 L916.8 585.6 L914.2 586.6 L910.5 587.0 L906.3 588.3 L902.8 588.1 L899.6 589.0 L895.9 589.6 L893.8 590.6 L890.6 593.9 L888.0 594.8 L883.2 597.1 L880.2 598.7 L877.2 599.8 L873.7 600.1 L871.2 600.3 L867.1 601.4 L863.9 602.5 L860.5 603.1 L856.6 604.0 L851.8 604.0 L848.3 603.6 L844.8 602.7 L842.2 602.7 L837.6 602.4 L834.3 601.4 L830.6 600.2 L827.5 599.9 L823.8 598.7 L821.1 599.3 L817.6 600.1 L814.7 600.1 L810.9 600.7 L806.8 600.3 L804.2 601.4 L801.6 601.2 L797.5 601.2 L794.8 602.0 L791.1 602.7 L786.4 601.6 L783.2 601.4 L782.1 598.5 L779.3 594.8 L775.1 593.0 L772.8 589.6 L768.5 588.7 L765.8 588.3 L762.3 587.0 L758.1 587.1 L754.9 586.5 L751.8 585.6 L749.3 583.8 L745.3 581.7 L746.3 578.1 L749.2 573.9 L747.8 570.3 L746.6 566.0 L747.7 562.0 L747.9 559.5 L745.4 556.4 L742.6 552.9 L741.7 550.5 L739.4 548.2Z" fill="none" stroke="#c8ab64" stroke-width="2" opacity="0.8"/></g></g>
<g filter="url(#hb)"><path d="M747.9 562.1C748.2 560.8 749.6 560.4 750.6 559.6C751.5 558.8 752.5 558.3 753.6 557.4C754.6 556.5 755.5 554.9 757.0 554.2C758.6 553.5 760.9 553.5 762.9 553.3C764.8 553.0 767.0 552.6 768.8 552.9C770.7 553.2 772.4 554.5 773.9 555.2C775.5 555.8 776.9 556.2 778.2 556.7C779.5 557.2 780.4 557.0 781.9 558.1C783.4 559.3 786.9 561.9 787.2 563.4C787.4 564.9 784.4 565.8 783.3 567.1C782.2 568.4 781.9 570.4 780.6 571.2C779.3 572.1 777.2 572.1 775.6 572.4C773.9 572.7 772.1 573.0 770.6 573.1C769.0 573.1 767.7 572.7 766.3 572.9C764.9 573.0 763.6 573.7 762.3 573.9C760.9 574.0 759.6 573.9 758.2 573.7C756.7 573.6 755.1 573.3 753.6 573.1C752.1 572.9 750.0 573.5 749.2 572.6C748.4 571.6 748.9 569.2 748.7 567.5C748.5 565.7 747.6 563.4 747.9 562.1Z" fill="#3e3e20" opacity="0.4" transform="translate(2.5,1.8)"/><path d="M747.9 562.1C748.2 560.8 749.6 560.4 750.6 559.6C751.5 558.8 752.5 558.3 753.6 557.4C754.6 556.5 755.5 554.9 757.0 554.2C758.6 553.5 760.9 553.5 762.9 553.3C764.8 553.0 767.0 552.6 768.8 552.9C770.7 553.2 772.4 554.5 773.9 555.2C775.5 555.8 776.9 556.2 778.2 556.7C779.5 557.2 780.4 557.0 781.9 558.1C783.4 559.3 786.9 561.9 787.2 563.4C787.4 564.9 784.4 565.8 783.3 567.1C782.2 568.4 781.9 570.4 780.6 571.2C779.3 572.1 777.2 572.1 775.6 572.4C773.9 572.7 772.1 573.0 770.6 573.1C769.0 573.1 767.7 572.7 766.3 572.9C764.9 573.0 763.6 573.7 762.3 573.9C760.9 574.0 759.6 573.9 758.2 573.7C756.7 573.6 755.1 573.3 753.6 573.1C752.1 572.9 750.0 573.5 749.2 572.6C748.4 571.6 748.9 569.2 748.7 567.5C748.5 565.7 747.6 563.4 747.9 562.1Z" fill="#6c6e3c"/><clipPath id="hc17"><path d="M747.9 562.1C748.2 560.8 749.6 560.4 750.6 559.6C751.5 558.8 752.5 558.3 753.6 557.4C754.6 556.5 755.5 554.9 757.0 554.2C758.6 553.5 760.9 553.5 762.9 553.3C764.8 553.0 767.0 552.6 768.8 552.9C770.7 553.2 772.4 554.5 773.9 555.2C775.5 555.8 776.9 556.2 778.2 556.7C779.5 557.2 780.4 557.0 781.9 558.1C783.4 559.3 786.9 561.9 787.2 563.4C787.4 564.9 784.4 565.8 783.3 567.1C782.2 568.4 781.9 570.4 780.6 571.2C779.3 572.1 777.2 572.1 775.6 572.4C773.9 572.7 772.1 573.0 770.6 573.1C769.0 573.1 767.7 572.7 766.3 572.9C764.9 573.0 763.6 573.7 762.3 573.9C760.9 574.0 759.6 573.9 758.2 573.7C756.7 573.6 755.1 573.3 753.6 573.1C752.1 572.9 750.0 573.5 749.2 572.6C748.4 571.6 748.9 569.2 748.7 567.5C748.5 565.7 747.6 563.4 747.9 562.1Z"/></clipPath><g clip-path="url(#hc17)"><ellipse cx="760.5" cy="558.8" rx="16.5" ry="7.1" fill="#9c9a68" opacity="0.85" transform="rotate(-24 767.5 563.4)"/><ellipse cx="776.2" cy="569.3" rx="15.7" ry="6.3" fill="#4a4c26" opacity="0.85" transform="rotate(-24 767.5 563.4)"/><ellipse cx="760.8" cy="561.1" rx="5.5" ry="2.6" fill="#b8b48a" opacity="0.7" transform="rotate(-28 760.8 561.1)"/><ellipse cx="769.1" cy="563.9" rx="4.5" ry="1.9" fill="#b8b48a" opacity="0.7" transform="rotate(-28 769.1 563.9)"/><ellipse cx="758.6" cy="561.5" rx="5.3" ry="2.3" fill="#b8b48a" opacity="0.7" transform="rotate(-28 758.6 561.5)"/><ellipse cx="773.6" cy="563.1" rx="5.9" ry="1.6" fill="#b8b48a" opacity="0.7" transform="rotate(-28 773.6 563.1)"/><ellipse cx="773.7" cy="567.4" rx="5.7" ry="1.4" fill="#38381c" opacity="0.6" transform="rotate(-28 773.7 567.4)"/><ellipse cx="777.4" cy="565.4" rx="5.7" ry="1.3" fill="#38381c" opacity="0.6" transform="rotate(-28 777.4 565.4)"/><ellipse cx="764.9" cy="566.3" rx="4.8" ry="1.3" fill="#38381c" opacity="0.6" transform="rotate(-28 764.9 566.3)"/></g></g>
<g filter="url(#hb)"><path d="M771.5 579.1C771.3 578.4 773.7 577.8 774.9 577.0C776.2 576.2 777.8 575.2 779.0 574.4C780.2 573.7 780.8 573.2 781.9 572.6C783.0 571.9 784.2 571.2 785.5 570.3C786.8 569.4 788.4 568.0 789.8 567.1C791.1 566.1 792.5 564.8 793.7 564.7C794.9 564.6 796.0 565.8 797.0 566.6C798.1 567.3 798.9 568.5 800.1 569.3C801.3 570.1 802.5 570.4 804.2 571.2C805.9 572.1 808.4 573.3 810.1 574.2C811.9 575.1 814.4 575.5 814.7 576.5C814.9 577.5 812.7 578.8 811.6 580.1C810.5 581.4 809.3 583.3 808.1 584.3C807.0 585.4 805.8 585.4 804.7 586.3C803.6 587.2 802.8 589.2 801.6 589.6C800.4 590.0 799.1 588.8 797.6 588.8C796.1 588.8 794.0 589.7 792.5 589.6C790.9 589.5 790.0 588.8 788.5 588.3C787.0 587.7 785.1 587.2 783.6 586.2C782.1 585.2 780.6 583.2 779.3 582.4C778.0 581.5 776.9 581.8 775.6 581.2C774.3 580.7 771.6 579.8 771.5 579.1Z" fill="#3e3e20" opacity="0.4" transform="translate(2.5,1.8)"/><path d="M771.5 579.1C771.3 578.4 773.7 577.8 774.9 577.0C776.2 576.2 777.8 575.2 779.0 574.4C780.2 573.7 780.8 573.2 781.9 572.6C783.0 571.9 784.2 571.2 785.5 570.3C786.8 569.4 788.4 568.0 789.8 567.1C791.1 566.1 792.5 564.8 793.7 564.7C794.9 564.6 796.0 565.8 797.0 566.6C798.1 567.3 798.9 568.5 800.1 569.3C801.3 570.1 802.5 570.4 804.2 571.2C805.9 572.1 808.4 573.3 810.1 574.2C811.9 575.1 814.4 575.5 814.7 576.5C814.9 577.5 812.7 578.8 811.6 580.1C810.5 581.4 809.3 583.3 808.1 584.3C807.0 585.4 805.8 585.4 804.7 586.3C803.6 587.2 802.8 589.2 801.6 589.6C800.4 590.0 799.1 588.8 797.6 588.8C796.1 588.8 794.0 589.7 792.5 589.6C790.9 589.5 790.0 588.8 788.5 588.3C787.0 587.7 785.1 587.2 783.6 586.2C782.1 585.2 780.6 583.2 779.3 582.4C778.0 581.5 776.9 581.8 775.6 581.2C774.3 580.7 771.6 579.8 771.5 579.1Z" fill="#6c6e3c"/><clipPath id="hc18"><path d="M771.5 579.1C771.3 578.4 773.7 577.8 774.9 577.0C776.2 576.2 777.8 575.2 779.0 574.4C780.2 573.7 780.8 573.2 781.9 572.6C783.0 571.9 784.2 571.2 785.5 570.3C786.8 569.4 788.4 568.0 789.8 567.1C791.1 566.1 792.5 564.8 793.7 564.7C794.9 564.6 796.0 565.8 797.0 566.6C798.1 567.3 798.9 568.5 800.1 569.3C801.3 570.1 802.5 570.4 804.2 571.2C805.9 572.1 808.4 573.3 810.1 574.2C811.9 575.1 814.4 575.5 814.7 576.5C814.9 577.5 812.7 578.8 811.6 580.1C810.5 581.4 809.3 583.3 808.1 584.3C807.0 585.4 805.8 585.4 804.7 586.3C803.6 587.2 802.8 589.2 801.6 589.6C800.4 590.0 799.1 588.8 797.6 588.8C796.1 588.8 794.0 589.7 792.5 589.6C790.9 589.5 790.0 588.8 788.5 588.3C787.0 587.7 785.1 587.2 783.6 586.2C782.1 585.2 780.6 583.2 779.3 582.4C778.0 581.5 776.9 581.8 775.6 581.2C774.3 580.7 771.6 579.8 771.5 579.1Z"/></clipPath><g clip-path="url(#hc18)"><ellipse cx="785.3" cy="571.7" rx="18.2" ry="8.5" fill="#9c9a68" opacity="0.85" transform="rotate(-24 793.1 577.1)"/><ellipse cx="802.6" cy="584.1" rx="17.3" ry="7.5" fill="#4a4c26" opacity="0.85" transform="rotate(-24 793.1 577.1)"/><ellipse cx="784.4" cy="570.9" rx="4.0" ry="2.1" fill="#b8b48a" opacity="0.7" transform="rotate(-28 784.4 570.9)"/><ellipse cx="785.5" cy="576.8" rx="6.5" ry="2.0" fill="#b8b48a" opacity="0.7" transform="rotate(-28 785.5 576.8)"/><ellipse cx="782.5" cy="577.6" rx="6.6" ry="2.3" fill="#b8b48a" opacity="0.7" transform="rotate(-28 782.5 577.6)"/><ellipse cx="799.8" cy="571.5" rx="6.0" ry="3.0" fill="#b8b48a" opacity="0.7" transform="rotate(-28 799.8 571.5)"/><ellipse cx="793.6" cy="580.4" rx="4.1" ry="1.7" fill="#38381c" opacity="0.6" transform="rotate(-28 793.6 580.4)"/><ellipse cx="806.6" cy="583.6" rx="5.4" ry="2.1" fill="#38381c" opacity="0.6" transform="rotate(-28 806.6 583.6)"/><ellipse cx="799.5" cy="581.3" rx="3.5" ry="2.5" fill="#38381c" opacity="0.6" transform="rotate(-28 799.5 581.3)"/></g></g>
<g filter="url(#hb)"><path d="M803.5 556.2C803.3 555.4 806.6 554.1 808.0 553.2C809.4 552.3 810.7 551.6 811.8 550.9C812.9 550.2 813.2 549.1 814.7 549.0C816.1 548.8 818.5 549.9 820.5 550.0C822.5 550.1 824.9 549.4 826.5 549.6C828.1 549.9 828.9 550.8 830.1 551.6C831.3 552.4 832.4 553.7 833.7 554.4C835.1 555.0 837.1 554.6 838.2 555.5C839.4 556.5 840.0 558.4 840.4 560.2C840.9 561.9 841.2 563.9 840.9 566.0C840.5 568.1 839.7 571.6 838.2 572.6C836.8 573.5 834.1 572.1 832.3 571.8C830.6 571.6 829.1 571.9 827.8 571.2C826.5 570.6 825.6 569.1 824.5 567.8C823.4 566.5 822.5 564.4 821.2 563.4C820.0 562.4 818.4 562.5 817.0 561.8C815.6 561.1 814.0 560.0 812.8 559.4C811.5 558.8 811.0 558.7 809.4 558.1C807.9 557.6 803.8 557.0 803.5 556.2Z" fill="#3e3e20" opacity="0.4" transform="translate(2.5,1.8)"/><path d="M803.5 556.2C803.3 555.4 806.6 554.1 808.0 553.2C809.4 552.3 810.7 551.6 811.8 550.9C812.9 550.2 813.2 549.1 814.7 549.0C816.1 548.8 818.5 549.9 820.5 550.0C822.5 550.1 824.9 549.4 826.5 549.6C828.1 549.9 828.9 550.8 830.1 551.6C831.3 552.4 832.4 553.7 833.7 554.4C835.1 555.0 837.1 554.6 838.2 555.5C839.4 556.5 840.0 558.4 840.4 560.2C840.9 561.9 841.2 563.9 840.9 566.0C840.5 568.1 839.7 571.6 838.2 572.6C836.8 573.5 834.1 572.1 832.3 571.8C830.6 571.6 829.1 571.9 827.8 571.2C826.5 570.6 825.6 569.1 824.5 567.8C823.4 566.5 822.5 564.4 821.2 563.4C820.0 562.4 818.4 562.5 817.0 561.8C815.6 561.1 814.0 560.0 812.8 559.4C811.5 558.8 811.0 558.7 809.4 558.1C807.9 557.6 803.8 557.0 803.5 556.2Z" fill="#6c6e3c"/><clipPath id="hc19"><path d="M803.5 556.2C803.3 555.4 806.6 554.1 808.0 553.2C809.4 552.3 810.7 551.6 811.8 550.9C812.9 550.2 813.2 549.1 814.7 549.0C816.1 548.8 818.5 549.9 820.5 550.0C822.5 550.1 824.9 549.4 826.5 549.6C828.1 549.9 828.9 550.8 830.1 551.6C831.3 552.4 832.4 553.7 833.7 554.4C835.1 555.0 837.1 554.6 838.2 555.5C839.4 556.5 840.0 558.4 840.4 560.2C840.9 561.9 841.2 563.9 840.9 566.0C840.5 568.1 839.7 571.6 838.2 572.6C836.8 573.5 834.1 572.1 832.3 571.8C830.6 571.6 829.1 571.9 827.8 571.2C826.5 570.6 825.6 569.1 824.5 567.8C823.4 566.5 822.5 564.4 821.2 563.4C820.0 562.4 818.4 562.5 817.0 561.8C815.6 561.1 814.0 560.0 812.8 559.4C811.5 558.8 811.0 558.7 809.4 558.1C807.9 557.6 803.8 557.0 803.5 556.2Z"/></clipPath><g clip-path="url(#hc19)"><ellipse cx="815.5" cy="555.6" rx="15.7" ry="8.0" fill="#9c9a68" opacity="0.85" transform="rotate(-24 822.2 560.8)"/><ellipse cx="830.4" cy="567.4" rx="14.9" ry="7.1" fill="#4a4c26" opacity="0.85" transform="rotate(-24 822.2 560.8)"/><ellipse cx="820.0" cy="554.5" rx="3.1" ry="1.7" fill="#b8b48a" opacity="0.7" transform="rotate(-28 820.0 554.5)"/><ellipse cx="829.5" cy="557.4" rx="5.2" ry="2.3" fill="#b8b48a" opacity="0.7" transform="rotate(-28 829.5 557.4)"/><ellipse cx="816.8" cy="559.1" rx="3.9" ry="2.2" fill="#b8b48a" opacity="0.7" transform="rotate(-28 816.8 559.1)"/><ellipse cx="826.0" cy="559.2" rx="4.7" ry="3.0" fill="#b8b48a" opacity="0.7" transform="rotate(-28 826.0 559.2)"/><ellipse cx="831.7" cy="562.0" rx="3.0" ry="1.4" fill="#38381c" opacity="0.6" transform="rotate(-28 831.7 562.0)"/><ellipse cx="828.9" cy="564.3" rx="3.2" ry="2.1" fill="#38381c" opacity="0.6" transform="rotate(-28 828.9 564.3)"/><ellipse cx="834.0" cy="563.9" rx="4.4" ry="2.5" fill="#38381c" opacity="0.6" transform="rotate(-28 834.0 563.9)"/></g></g>
<g filter="url(#hb)"><path d="M840.9 556.8C841.6 555.7 843.8 555.8 845.3 555.5C846.9 555.2 848.4 554.7 850.0 554.9C851.7 555.1 853.8 555.9 855.1 556.6C856.5 557.2 856.7 558.2 858.0 558.8C859.3 559.4 863.1 559.6 863.1 560.1C863.2 560.6 859.9 561.1 858.4 562.0C857.0 562.8 855.7 564.3 854.5 565.1C853.3 566.0 852.5 567.0 851.3 567.3C850.2 567.6 848.9 567.1 847.4 566.9C845.8 566.6 843.2 566.8 842.2 566.0C841.1 565.2 841.2 563.6 841.0 562.0C840.8 560.5 840.1 557.9 840.9 556.8Z" fill="#3e3e20" opacity="0.4" transform="translate(2.5,1.8)"/><path d="M840.9 556.8C841.6 555.7 843.8 555.8 845.3 555.5C846.9 555.2 848.4 554.7 850.0 554.9C851.7 555.1 853.8 555.9 855.1 556.6C856.5 557.2 856.7 558.2 858.0 558.8C859.3 559.4 863.1 559.6 863.1 560.1C863.2 560.6 859.9 561.1 858.4 562.0C857.0 562.8 855.7 564.3 854.5 565.1C853.3 566.0 852.5 567.0 851.3 567.3C850.2 567.6 848.9 567.1 847.4 566.9C845.8 566.6 843.2 566.8 842.2 566.0C841.1 565.2 841.2 563.6 841.0 562.0C840.8 560.5 840.1 557.9 840.9 556.8Z" fill="#6c6e3c"/><clipPath id="hc20"><path d="M840.9 556.8C841.6 555.7 843.8 555.8 845.3 555.5C846.9 555.2 848.4 554.7 850.0 554.9C851.7 555.1 853.8 555.9 855.1 556.6C856.5 557.2 856.7 558.2 858.0 558.8C859.3 559.4 863.1 559.6 863.1 560.1C863.2 560.6 859.9 561.1 858.4 562.0C857.0 562.8 855.7 564.3 854.5 565.1C853.3 566.0 852.5 567.0 851.3 567.3C850.2 567.6 848.9 567.1 847.4 566.9C845.8 566.6 843.2 566.8 842.2 566.0C841.1 565.2 841.2 563.6 841.0 562.0C840.8 560.5 840.1 557.9 840.9 556.8Z"/></clipPath><g clip-path="url(#hc20)"><ellipse cx="848.0" cy="558.4" rx="9.4" ry="4.2" fill="#9c9a68" opacity="0.85" transform="rotate(-24 852.0 561.1)"/><ellipse cx="856.9" cy="564.6" rx="8.9" ry="3.7" fill="#4a4c26" opacity="0.85" transform="rotate(-24 852.0 561.1)"/><ellipse cx="848.0" cy="557.4" rx="2.6" ry="1.5" fill="#b8b48a" opacity="0.7" transform="rotate(-28 848.0 557.4)"/><ellipse cx="853.3" cy="560.1" rx="2.6" ry="1.1" fill="#b8b48a" opacity="0.7" transform="rotate(-28 853.3 560.1)"/><ellipse cx="845.1" cy="559.9" rx="2.2" ry="1.2" fill="#b8b48a" opacity="0.7" transform="rotate(-28 845.1 559.9)"/><ellipse cx="853.0" cy="561.1" rx="2.0" ry="1.0" fill="#b8b48a" opacity="0.7" transform="rotate(-28 853.0 561.1)"/><ellipse cx="857.1" cy="561.2" rx="3.0" ry="1.3" fill="#38381c" opacity="0.6" transform="rotate(-28 857.1 561.2)"/><ellipse cx="852.9" cy="561.7" rx="2.3" ry="0.8" fill="#38381c" opacity="0.6" transform="rotate(-28 852.9 561.7)"/><ellipse cx="857.7" cy="562.4" rx="2.8" ry="1.0" fill="#38381c" opacity="0.6" transform="rotate(-28 857.7 562.4)"/></g></g>
<g filter="url(#hb)"><path d="M851.3 582.4C851.1 581.6 853.7 580.6 854.8 579.8C855.9 578.9 857.0 578.4 858.2 577.5C859.3 576.5 860.7 574.5 861.8 573.9C862.9 573.2 863.5 573.8 864.9 573.4C866.2 573.1 868.6 572.4 870.0 571.8C871.5 571.2 872.3 570.0 873.6 569.9C874.9 569.8 876.7 570.5 878.1 571.1C879.5 571.8 880.8 573.0 882.0 573.7C883.3 574.4 884.2 574.4 885.4 575.2C886.6 576.0 887.8 577.6 889.3 578.4C890.9 579.3 894.3 579.7 894.6 580.4C894.8 581.1 892.2 582.1 890.8 582.8C889.5 583.5 887.9 584.2 886.6 584.7C885.3 585.1 883.9 584.9 882.9 585.5C881.8 586.1 881.6 587.9 880.2 588.3C878.7 588.6 875.9 587.5 874.2 587.4C872.5 587.4 871.5 587.6 869.8 587.8C868.2 587.9 866.2 588.4 864.4 588.3C862.7 588.1 860.9 587.6 859.5 586.9C858.1 586.2 857.6 584.9 856.2 584.2C854.8 583.4 851.6 583.1 851.3 582.4Z" fill="#3e3e20" opacity="0.4" transform="translate(2.5,1.8)"/><path d="M851.3 582.4C851.1 581.6 853.7 580.6 854.8 579.8C855.9 578.9 857.0 578.4 858.2 577.5C859.3 576.5 860.7 574.5 861.8 573.9C862.9 573.2 863.5 573.8 864.9 573.4C866.2 573.1 868.6 572.4 870.0 571.8C871.5 571.2 872.3 570.0 873.6 569.9C874.9 569.8 876.7 570.5 878.1 571.1C879.5 571.8 880.8 573.0 882.0 573.7C883.3 574.4 884.2 574.4 885.4 575.2C886.6 576.0 887.8 577.6 889.3 578.4C890.9 579.3 894.3 579.7 894.6 580.4C894.8 581.1 892.2 582.1 890.8 582.8C889.5 583.5 887.9 584.2 886.6 584.7C885.3 585.1 883.9 584.9 882.9 585.5C881.8 586.1 881.6 587.9 880.2 588.3C878.7 588.6 875.9 587.5 874.2 587.4C872.5 587.4 871.5 587.6 869.8 587.8C868.2 587.9 866.2 588.4 864.4 588.3C862.7 588.1 860.9 587.6 859.5 586.9C858.1 586.2 857.6 584.9 856.2 584.2C854.8 583.4 851.6 583.1 851.3 582.4Z" fill="#6c6e3c"/><clipPath id="hc21"><path d="M851.3 582.4C851.1 581.6 853.7 580.6 854.8 579.8C855.9 578.9 857.0 578.4 858.2 577.5C859.3 576.5 860.7 574.5 861.8 573.9C862.9 573.2 863.5 573.8 864.9 573.4C866.2 573.1 868.6 572.4 870.0 571.8C871.5 571.2 872.3 570.0 873.6 569.9C874.9 569.8 876.7 570.5 878.1 571.1C879.5 571.8 880.8 573.0 882.0 573.7C883.3 574.4 884.2 574.4 885.4 575.2C886.6 576.0 887.8 577.6 889.3 578.4C890.9 579.3 894.3 579.7 894.6 580.4C894.8 581.1 892.2 582.1 890.8 582.8C889.5 583.5 887.9 584.2 886.6 584.7C885.3 585.1 883.9 584.9 882.9 585.5C881.8 586.1 881.6 587.9 880.2 588.3C878.7 588.6 875.9 587.5 874.2 587.4C872.5 587.4 871.5 587.6 869.8 587.8C868.2 587.9 866.2 588.4 864.4 588.3C862.7 588.1 860.9 587.6 859.5 586.9C858.1 586.2 857.6 584.9 856.2 584.2C854.8 583.4 851.6 583.1 851.3 582.4Z"/></clipPath><g clip-path="url(#hc21)"><ellipse cx="865.2" cy="575.1" rx="18.2" ry="6.2" fill="#9c9a68" opacity="0.85" transform="rotate(-24 872.9 579.1)"/><ellipse cx="882.5" cy="584.2" rx="17.3" ry="5.5" fill="#4a4c26" opacity="0.85" transform="rotate(-24 872.9 579.1)"/><ellipse cx="858.8" cy="574.4" rx="6.0" ry="1.3" fill="#b8b48a" opacity="0.7" transform="rotate(-28 858.8 574.4)"/><ellipse cx="860.1" cy="578.6" rx="5.9" ry="1.6" fill="#b8b48a" opacity="0.7" transform="rotate(-28 860.1 578.6)"/><ellipse cx="861.9" cy="579.3" rx="3.6" ry="1.5" fill="#b8b48a" opacity="0.7" transform="rotate(-28 861.9 579.3)"/><ellipse cx="866.8" cy="578.0" rx="6.6" ry="1.9" fill="#b8b48a" opacity="0.7" transform="rotate(-28 866.8 578.0)"/><ellipse cx="872.0" cy="580.3" rx="5.4" ry="1.7" fill="#38381c" opacity="0.6" transform="rotate(-28 872.0 580.3)"/><ellipse cx="879.6" cy="583.5" rx="5.9" ry="1.8" fill="#38381c" opacity="0.6" transform="rotate(-28 879.6 583.5)"/><ellipse cx="871.9" cy="583.5" rx="5.1" ry="1.8" fill="#38381c" opacity="0.6" transform="rotate(-28 871.9 583.5)"/></g></g>
<g filter="url(#hb)"><path d="M881.5 571.2C881.2 570.6 883.5 569.1 884.8 568.2C886.1 567.3 887.9 566.7 889.1 565.9C890.3 565.1 890.8 564.1 891.9 563.4C893.1 562.7 894.7 562.1 895.9 561.5C897.2 560.9 898.2 560.4 899.5 559.7C900.8 559.0 902.1 557.5 903.7 557.5C905.3 557.5 907.5 558.7 909.0 559.7C910.6 560.6 912.5 561.7 912.9 563.4C913.3 565.1 912.5 568.7 911.6 569.9C910.7 571.1 908.7 570.2 907.3 570.6C905.9 571.0 904.6 571.9 903.1 572.3C901.7 572.8 900.1 573.3 898.5 573.2C896.9 573.2 894.8 572.1 893.4 572.0C892.0 572.0 891.2 572.8 890.0 572.9C888.8 572.9 887.7 572.6 886.3 572.3C884.8 572.0 881.7 571.9 881.5 571.2Z" fill="#3e3e20" opacity="0.4" transform="translate(2.5,1.8)"/><path d="M881.5 571.2C881.2 570.6 883.5 569.1 884.8 568.2C886.1 567.3 887.9 566.7 889.1 565.9C890.3 565.1 890.8 564.1 891.9 563.4C893.1 562.7 894.7 562.1 895.9 561.5C897.2 560.9 898.2 560.4 899.5 559.7C900.8 559.0 902.1 557.5 903.7 557.5C905.3 557.5 907.5 558.7 909.0 559.7C910.6 560.6 912.5 561.7 912.9 563.4C913.3 565.1 912.5 568.7 911.6 569.9C910.7 571.1 908.7 570.2 907.3 570.6C905.9 571.0 904.6 571.9 903.1 572.3C901.7 572.8 900.1 573.3 898.5 573.2C896.9 573.2 894.8 572.1 893.4 572.0C892.0 572.0 891.2 572.8 890.0 572.9C888.8 572.9 887.7 572.6 886.3 572.3C884.8 572.0 881.7 571.9 881.5 571.2Z" fill="#6c6e3c"/><clipPath id="hc22"><path d="M881.5 571.2C881.2 570.6 883.5 569.1 884.8 568.2C886.1 567.3 887.9 566.7 889.1 565.9C890.3 565.1 890.8 564.1 891.9 563.4C893.1 562.7 894.7 562.1 895.9 561.5C897.2 560.9 898.2 560.4 899.5 559.7C900.8 559.0 902.1 557.5 903.7 557.5C905.3 557.5 907.5 558.7 909.0 559.7C910.6 560.6 912.5 561.7 912.9 563.4C913.3 565.1 912.5 568.7 911.6 569.9C910.7 571.1 908.7 570.2 907.3 570.6C905.9 571.0 904.6 571.9 903.1 572.3C901.7 572.8 900.1 573.3 898.5 573.2C896.9 573.2 894.8 572.1 893.4 572.0C892.0 572.0 891.2 572.8 890.0 572.9C888.8 572.9 887.7 572.6 886.3 572.3C884.8 572.0 881.7 571.9 881.5 571.2Z"/></clipPath><g clip-path="url(#hc22)"><ellipse cx="891.5" cy="561.9" rx="13.2" ry="5.3" fill="#9c9a68" opacity="0.85" transform="rotate(-24 897.2 565.3)"/><ellipse cx="904.1" cy="569.7" rx="12.6" ry="4.7" fill="#4a4c26" opacity="0.85" transform="rotate(-24 897.2 565.3)"/><ellipse cx="887.4" cy="563.6" rx="2.7" ry="2.0" fill="#b8b48a" opacity="0.7" transform="rotate(-28 887.4 563.6)"/><ellipse cx="895.0" cy="564.3" rx="3.4" ry="1.6" fill="#b8b48a" opacity="0.7" transform="rotate(-28 895.0 564.3)"/><ellipse cx="896.1" cy="560.7" rx="3.7" ry="1.4" fill="#b8b48a" opacity="0.7" transform="rotate(-28 896.1 560.7)"/><ellipse cx="898.8" cy="565.5" rx="2.6" ry="1.4" fill="#b8b48a" opacity="0.7" transform="rotate(-28 898.8 565.5)"/><ellipse cx="898.2" cy="569.8" rx="3.7" ry="1.0" fill="#38381c" opacity="0.6" transform="rotate(-28 898.2 569.8)"/><ellipse cx="903.2" cy="569.0" rx="2.6" ry="1.0" fill="#38381c" opacity="0.6" transform="rotate(-28 903.2 569.0)"/><ellipse cx="904.9" cy="569.1" rx="3.9" ry="1.4" fill="#38381c" opacity="0.6" transform="rotate(-28 904.9 569.1)"/></g></g>
<g><path d="M992.3 481.7 L993.4 479.1 L994.3 476.9 L996.6 473.1 L1000.5 472.9 L1002.8 470.2 L1006.6 469.6 L1009.3 468.7 L1012.9 469.2 L1017.0 469.1 L1020.9 468.1 L1024.9 467.7 L1027.4 467.5 L1030.7 467.9 L1035.1 467.4 L1038.4 467.3 L1043.5 468.3 L1046.6 468.9 L1050.2 468.7 L1052.6 466.3 L1054.5 465.2 L1058.0 464.6 L1061.3 463.4 L1063.4 461.3 L1066.3 460.8 L1068.7 459.4 L1071.9 458.5 L1075.1 457.4 L1078.0 456.4 L1081.5 454.7 L1083.0 453.5 L1086.1 452.8 L1089.4 451.2 L1092.3 450.3 L1094.6 450.9 L1098.6 450.9 L1101.8 451.5 L1103.7 450.5 L1107.5 451.7 L1110.7 451.5 L1113.7 451.7 L1116.4 451.5 L1120.5 453.0 L1122.9 452.3 L1125.3 452.7 L1128.5 453.0 L1131.7 452.9 L1135.1 453.1 L1138.9 453.4 L1141.3 454.0 L1144.3 455.6 L1147.4 456.4 L1150.3 456.1 L1153.8 456.8 L1156.6 457.4 L1159.9 457.3 L1161.8 457.7 L1165.0 457.6 L1169.0 458.6 L1172.6 458.8 L1175.0 458.4 L1178.0 458.9 L1181.5 457.8 L1184.4 457.5 L1188.9 456.4 L1192.3 456.0 L1197.0 455.3 L1200.9 454.6 L1204.4 458.9 L1203.0 463.8 L1202.3 467.4 L1198.6 469.9 L1196.6 473.1 L1194.1 475.6 L1192.3 477.4 L1193.3 481.9 L1195.1 484.6 L1196.6 487.3 L1199.4 490.3 L1200.4 493.6 L1201.1 495.4 L1203.1 499.4 L1203.7 501.7 L1201.9 504.8 L1199.7 506.4 L1198.0 508.9 L1195.1 510.1 L1192.9 511.9 L1189.4 514.6 L1185.8 516.4 L1183.6 516.1 L1181.6 517.2 L1178.0 518.9 L1175.4 519.8 L1172.4 522.4 L1170.9 523.5 L1168.0 526.0 L1165.1 527.2 L1161.6 528.7 L1158.0 528.9 L1154.2 528.9 L1149.6 531.4 L1146.6 531.7 L1142.1 532.3 L1139.2 534.0 L1135.1 534.6 L1133.2 536.6 L1130.1 539.1 L1128.0 540.3 L1123.6 542.0 L1120.9 544.6 L1119.4 550.3 L1116.0 549.4 L1110.9 549.6 L1108.6 548.6 L1105.4 547.4 L1102.3 546.0 L1098.0 548.9 L1093.6 548.8 L1089.4 547.4 L1087.2 544.2 L1086.6 541.7 L1084.2 543.1 L1081.1 544.0 L1078.0 544.6 L1076.2 547.6 L1075.1 550.3 L1071.0 550.9 L1066.6 550.3 L1061.8 549.2 L1058.0 548.9 L1054.8 550.5 L1052.3 553.1 L1050.8 550.3 L1047.7 548.1 L1046.6 544.6 L1044.2 543.2 L1042.2 540.6 L1039.4 538.9 L1037.7 536.1 L1037.4 533.7 L1035.1 530.3 L1032.6 529.0 L1028.6 527.1 L1025.1 526.0 L1021.4 525.2 L1018.0 524.7 L1013.7 523.1 L1011.6 521.6 L1008.3 520.2 L1004.7 520.1 L1002.3 518.9 L1000.0 516.7 L999.5 512.7 L998.0 510.3 L999.3 507.9 L1000.1 505.3 L1002.3 501.7 L1001.6 498.9 L999.8 496.2 L999.4 493.1 L996.8 489.5 L995.1 487.4 L994.3 484.3Z" fill="#8a6422" stroke="#8a6422" stroke-width="1" transform="translate(0.3,2.2)"/><path d="M992.3 481.7 L993.4 479.1 L994.3 476.9 L996.6 473.1 L1000.5 472.9 L1002.8 470.2 L1006.6 469.6 L1009.3 468.7 L1012.9 469.2 L1017.0 469.1 L1020.9 468.1 L1024.9 467.7 L1027.4 467.5 L1030.7 467.9 L1035.1 467.4 L1038.4 467.3 L1043.5 468.3 L1046.6 468.9 L1050.2 468.7 L1052.6 466.3 L1054.5 465.2 L1058.0 464.6 L1061.3 463.4 L1063.4 461.3 L1066.3 460.8 L1068.7 459.4 L1071.9 458.5 L1075.1 457.4 L1078.0 456.4 L1081.5 454.7 L1083.0 453.5 L1086.1 452.8 L1089.4 451.2 L1092.3 450.3 L1094.6 450.9 L1098.6 450.9 L1101.8 451.5 L1103.7 450.5 L1107.5 451.7 L1110.7 451.5 L1113.7 451.7 L1116.4 451.5 L1120.5 453.0 L1122.9 452.3 L1125.3 452.7 L1128.5 453.0 L1131.7 452.9 L1135.1 453.1 L1138.9 453.4 L1141.3 454.0 L1144.3 455.6 L1147.4 456.4 L1150.3 456.1 L1153.8 456.8 L1156.6 457.4 L1159.9 457.3 L1161.8 457.7 L1165.0 457.6 L1169.0 458.6 L1172.6 458.8 L1175.0 458.4 L1178.0 458.9 L1181.5 457.8 L1184.4 457.5 L1188.9 456.4 L1192.3 456.0 L1197.0 455.3 L1200.9 454.6 L1204.4 458.9 L1203.0 463.8 L1202.3 467.4 L1198.6 469.9 L1196.6 473.1 L1194.1 475.6 L1192.3 477.4 L1193.3 481.9 L1195.1 484.6 L1196.6 487.3 L1199.4 490.3 L1200.4 493.6 L1201.1 495.4 L1203.1 499.4 L1203.7 501.7 L1201.9 504.8 L1199.7 506.4 L1198.0 508.9 L1195.1 510.1 L1192.9 511.9 L1189.4 514.6 L1185.8 516.4 L1183.6 516.1 L1181.6 517.2 L1178.0 518.9 L1175.4 519.8 L1172.4 522.4 L1170.9 523.5 L1168.0 526.0 L1165.1 527.2 L1161.6 528.7 L1158.0 528.9 L1154.2 528.9 L1149.6 531.4 L1146.6 531.7 L1142.1 532.3 L1139.2 534.0 L1135.1 534.6 L1133.2 536.6 L1130.1 539.1 L1128.0 540.3 L1123.6 542.0 L1120.9 544.6 L1119.4 550.3 L1116.0 549.4 L1110.9 549.6 L1108.6 548.6 L1105.4 547.4 L1102.3 546.0 L1098.0 548.9 L1093.6 548.8 L1089.4 547.4 L1087.2 544.2 L1086.6 541.7 L1084.2 543.1 L1081.1 544.0 L1078.0 544.6 L1076.2 547.6 L1075.1 550.3 L1071.0 550.9 L1066.6 550.3 L1061.8 549.2 L1058.0 548.9 L1054.8 550.5 L1052.3 553.1 L1050.8 550.3 L1047.7 548.1 L1046.6 544.6 L1044.2 543.2 L1042.2 540.6 L1039.4 538.9 L1037.7 536.1 L1037.4 533.7 L1035.1 530.3 L1032.6 529.0 L1028.6 527.1 L1025.1 526.0 L1021.4 525.2 L1018.0 524.7 L1013.7 523.1 L1011.6 521.6 L1008.3 520.2 L1004.7 520.1 L1002.3 518.9 L1000.0 516.7 L999.5 512.7 L998.0 510.3 L999.3 507.9 L1000.1 505.3 L1002.3 501.7 L1001.6 498.9 L999.8 496.2 L999.4 493.1 L996.8 489.5 L995.1 487.4 L994.3 484.3Z" fill="#a89f5d"/><clipPath id="ic23"><path d="M992.3 481.7 L993.4 479.1 L994.3 476.9 L996.6 473.1 L1000.5 472.9 L1002.8 470.2 L1006.6 469.6 L1009.3 468.7 L1012.9 469.2 L1017.0 469.1 L1020.9 468.1 L1024.9 467.7 L1027.4 467.5 L1030.7 467.9 L1035.1 467.4 L1038.4 467.3 L1043.5 468.3 L1046.6 468.9 L1050.2 468.7 L1052.6 466.3 L1054.5 465.2 L1058.0 464.6 L1061.3 463.4 L1063.4 461.3 L1066.3 460.8 L1068.7 459.4 L1071.9 458.5 L1075.1 457.4 L1078.0 456.4 L1081.5 454.7 L1083.0 453.5 L1086.1 452.8 L1089.4 451.2 L1092.3 450.3 L1094.6 450.9 L1098.6 450.9 L1101.8 451.5 L1103.7 450.5 L1107.5 451.7 L1110.7 451.5 L1113.7 451.7 L1116.4 451.5 L1120.5 453.0 L1122.9 452.3 L1125.3 452.7 L1128.5 453.0 L1131.7 452.9 L1135.1 453.1 L1138.9 453.4 L1141.3 454.0 L1144.3 455.6 L1147.4 456.4 L1150.3 456.1 L1153.8 456.8 L1156.6 457.4 L1159.9 457.3 L1161.8 457.7 L1165.0 457.6 L1169.0 458.6 L1172.6 458.8 L1175.0 458.4 L1178.0 458.9 L1181.5 457.8 L1184.4 457.5 L1188.9 456.4 L1192.3 456.0 L1197.0 455.3 L1200.9 454.6 L1204.4 458.9 L1203.0 463.8 L1202.3 467.4 L1198.6 469.9 L1196.6 473.1 L1194.1 475.6 L1192.3 477.4 L1193.3 481.9 L1195.1 484.6 L1196.6 487.3 L1199.4 490.3 L1200.4 493.6 L1201.1 495.4 L1203.1 499.4 L1203.7 501.7 L1201.9 504.8 L1199.7 506.4 L1198.0 508.9 L1195.1 510.1 L1192.9 511.9 L1189.4 514.6 L1185.8 516.4 L1183.6 516.1 L1181.6 517.2 L1178.0 518.9 L1175.4 519.8 L1172.4 522.4 L1170.9 523.5 L1168.0 526.0 L1165.1 527.2 L1161.6 528.7 L1158.0 528.9 L1154.2 528.9 L1149.6 531.4 L1146.6 531.7 L1142.1 532.3 L1139.2 534.0 L1135.1 534.6 L1133.2 536.6 L1130.1 539.1 L1128.0 540.3 L1123.6 542.0 L1120.9 544.6 L1119.4 550.3 L1116.0 549.4 L1110.9 549.6 L1108.6 548.6 L1105.4 547.4 L1102.3 546.0 L1098.0 548.9 L1093.6 548.8 L1089.4 547.4 L1087.2 544.2 L1086.6 541.7 L1084.2 543.1 L1081.1 544.0 L1078.0 544.6 L1076.2 547.6 L1075.1 550.3 L1071.0 550.9 L1066.6 550.3 L1061.8 549.2 L1058.0 548.9 L1054.8 550.5 L1052.3 553.1 L1050.8 550.3 L1047.7 548.1 L1046.6 544.6 L1044.2 543.2 L1042.2 540.6 L1039.4 538.9 L1037.7 536.1 L1037.4 533.7 L1035.1 530.3 L1032.6 529.0 L1028.6 527.1 L1025.1 526.0 L1021.4 525.2 L1018.0 524.7 L1013.7 523.1 L1011.6 521.6 L1008.3 520.2 L1004.7 520.1 L1002.3 518.9 L1000.0 516.7 L999.5 512.7 L998.0 510.3 L999.3 507.9 L1000.1 505.3 L1002.3 501.7 L1001.6 498.9 L999.8 496.2 L999.4 493.1 L996.8 489.5 L995.1 487.4 L994.3 484.3Z"/></clipPath><g clip-path="url(#ic23)"><path d="M992.3 481.7 L993.4 479.1 L994.3 476.9 L996.6 473.1 L1000.5 472.9 L1002.8 470.2 L1006.6 469.6 L1009.3 468.7 L1012.9 469.2 L1017.0 469.1 L1020.9 468.1 L1024.9 467.7 L1027.4 467.5 L1030.7 467.9 L1035.1 467.4 L1038.4 467.3 L1043.5 468.3 L1046.6 468.9 L1050.2 468.7 L1052.6 466.3 L1054.5 465.2 L1058.0 464.6 L1061.3 463.4 L1063.4 461.3 L1066.3 460.8 L1068.7 459.4 L1071.9 458.5 L1075.1 457.4 L1078.0 456.4 L1081.5 454.7 L1083.0 453.5 L1086.1 452.8 L1089.4 451.2 L1092.3 450.3 L1094.6 450.9 L1098.6 450.9 L1101.8 451.5 L1103.7 450.5 L1107.5 451.7 L1110.7 451.5 L1113.7 451.7 L1116.4 451.5 L1120.5 453.0 L1122.9 452.3 L1125.3 452.7 L1128.5 453.0 L1131.7 452.9 L1135.1 453.1 L1138.9 453.4 L1141.3 454.0 L1144.3 455.6 L1147.4 456.4 L1150.3 456.1 L1153.8 456.8 L1156.6 457.4 L1159.9 457.3 L1161.8 457.7 L1165.0 457.6 L1169.0 458.6 L1172.6 458.8 L1175.0 458.4 L1178.0 458.9 L1181.5 457.8 L1184.4 457.5 L1188.9 456.4 L1192.3 456.0 L1197.0 455.3 L1200.9 454.6 L1204.4 458.9 L1203.0 463.8 L1202.3 467.4 L1198.6 469.9 L1196.6 473.1 L1194.1 475.6 L1192.3 477.4 L1193.3 481.9 L1195.1 484.6 L1196.6 487.3 L1199.4 490.3 L1200.4 493.6 L1201.1 495.4 L1203.1 499.4 L1203.7 501.7 L1201.9 504.8 L1199.7 506.4 L1198.0 508.9 L1195.1 510.1 L1192.9 511.9 L1189.4 514.6 L1185.8 516.4 L1183.6 516.1 L1181.6 517.2 L1178.0 518.9 L1175.4 519.8 L1172.4 522.4 L1170.9 523.5 L1168.0 526.0 L1165.1 527.2 L1161.6 528.7 L1158.0 528.9 L1154.2 528.9 L1149.6 531.4 L1146.6 531.7 L1142.1 532.3 L1139.2 534.0 L1135.1 534.6 L1133.2 536.6 L1130.1 539.1 L1128.0 540.3 L1123.6 542.0 L1120.9 544.6 L1119.4 550.3 L1116.0 549.4 L1110.9 549.6 L1108.6 548.6 L1105.4 547.4 L1102.3 546.0 L1098.0 548.9 L1093.6 548.8 L1089.4 547.4 L1087.2 544.2 L1086.6 541.7 L1084.2 543.1 L1081.1 544.0 L1078.0 544.6 L1076.2 547.6 L1075.1 550.3 L1071.0 550.9 L1066.6 550.3 L1061.8 549.2 L1058.0 548.9 L1054.8 550.5 L1052.3 553.1 L1050.8 550.3 L1047.7 548.1 L1046.6 544.6 L1044.2 543.2 L1042.2 540.6 L1039.4 538.9 L1037.7 536.1 L1037.4 533.7 L1035.1 530.3 L1032.6 529.0 L1028.6 527.1 L1025.1 526.0 L1021.4 525.2 L1018.0 524.7 L1013.7 523.1 L1011.6 521.6 L1008.3 520.2 L1004.7 520.1 L1002.3 518.9 L1000.0 516.7 L999.5 512.7 L998.0 510.3 L999.3 507.9 L1000.1 505.3 L1002.3 501.7 L1001.6 498.9 L999.8 496.2 L999.4 493.1 L996.8 489.5 L995.1 487.4 L994.3 484.3Z" fill="none" stroke="#c8b070" stroke-width="10" filter="url(#sand)"/><path d="M992.3 481.7 L993.4 479.1 L994.3 476.9 L996.6 473.1 L1000.5 472.9 L1002.8 470.2 L1006.6 469.6 L1009.3 468.7 L1012.9 469.2 L1017.0 469.1 L1020.9 468.1 L1024.9 467.7 L1027.4 467.5 L1030.7 467.9 L1035.1 467.4 L1038.4 467.3 L1043.5 468.3 L1046.6 468.9 L1050.2 468.7 L1052.6 466.3 L1054.5 465.2 L1058.0 464.6 L1061.3 463.4 L1063.4 461.3 L1066.3 460.8 L1068.7 459.4 L1071.9 458.5 L1075.1 457.4 L1078.0 456.4 L1081.5 454.7 L1083.0 453.5 L1086.1 452.8 L1089.4 451.2 L1092.3 450.3 L1094.6 450.9 L1098.6 450.9 L1101.8 451.5 L1103.7 450.5 L1107.5 451.7 L1110.7 451.5 L1113.7 451.7 L1116.4 451.5 L1120.5 453.0 L1122.9 452.3 L1125.3 452.7 L1128.5 453.0 L1131.7 452.9 L1135.1 453.1 L1138.9 453.4 L1141.3 454.0 L1144.3 455.6 L1147.4 456.4 L1150.3 456.1 L1153.8 456.8 L1156.6 457.4 L1159.9 457.3 L1161.8 457.7 L1165.0 457.6 L1169.0 458.6 L1172.6 458.8 L1175.0 458.4 L1178.0 458.9 L1181.5 457.8 L1184.4 457.5 L1188.9 456.4 L1192.3 456.0 L1197.0 455.3 L1200.9 454.6 L1204.4 458.9 L1203.0 463.8 L1202.3 467.4 L1198.6 469.9 L1196.6 473.1 L1194.1 475.6 L1192.3 477.4 L1193.3 481.9 L1195.1 484.6 L1196.6 487.3 L1199.4 490.3 L1200.4 493.6 L1201.1 495.4 L1203.1 499.4 L1203.7 501.7 L1201.9 504.8 L1199.7 506.4 L1198.0 508.9 L1195.1 510.1 L1192.9 511.9 L1189.4 514.6 L1185.8 516.4 L1183.6 516.1 L1181.6 517.2 L1178.0 518.9 L1175.4 519.8 L1172.4 522.4 L1170.9 523.5 L1168.0 526.0 L1165.1 527.2 L1161.6 528.7 L1158.0 528.9 L1154.2 528.9 L1149.6 531.4 L1146.6 531.7 L1142.1 532.3 L1139.2 534.0 L1135.1 534.6 L1133.2 536.6 L1130.1 539.1 L1128.0 540.3 L1123.6 542.0 L1120.9 544.6 L1119.4 550.3 L1116.0 549.4 L1110.9 549.6 L1108.6 548.6 L1105.4 547.4 L1102.3 546.0 L1098.0 548.9 L1093.6 548.8 L1089.4 547.4 L1087.2 544.2 L1086.6 541.7 L1084.2 543.1 L1081.1 544.0 L1078.0 544.6 L1076.2 547.6 L1075.1 550.3 L1071.0 550.9 L1066.6 550.3 L1061.8 549.2 L1058.0 548.9 L1054.8 550.5 L1052.3 553.1 L1050.8 550.3 L1047.7 548.1 L1046.6 544.6 L1044.2 543.2 L1042.2 540.6 L1039.4 538.9 L1037.7 536.1 L1037.4 533.7 L1035.1 530.3 L1032.6 529.0 L1028.6 527.1 L1025.1 526.0 L1021.4 525.2 L1018.0 524.7 L1013.7 523.1 L1011.6 521.6 L1008.3 520.2 L1004.7 520.1 L1002.3 518.9 L1000.0 516.7 L999.5 512.7 L998.0 510.3 L999.3 507.9 L1000.1 505.3 L1002.3 501.7 L1001.6 498.9 L999.8 496.2 L999.4 493.1 L996.8 489.5 L995.1 487.4 L994.3 484.3Z" fill="none" stroke="#c8ab64" stroke-width="2" opacity="0.8"/></g></g>
<g filter="url(#hb)"><path d="M1136.6 490.3C1136.6 489.4 1138.5 488.7 1139.7 487.9C1140.9 487.0 1142.2 485.7 1143.7 485.3C1145.3 484.9 1147.4 485.8 1149.1 485.6C1150.8 485.4 1152.1 484.2 1153.7 484.3C1155.3 484.3 1156.8 485.4 1158.5 485.9C1160.1 486.4 1162.2 486.7 1163.7 487.4C1165.2 488.1 1166.1 489.2 1167.4 490.0C1168.7 490.9 1171.7 491.1 1171.6 492.4C1171.4 493.8 1168.3 496.9 1166.6 498.1C1164.9 499.4 1163.4 499.7 1161.5 500.1C1159.6 500.5 1157.0 500.4 1155.1 500.3C1153.3 500.2 1152.1 500.1 1150.2 499.6C1148.3 499.2 1145.5 498.5 1143.7 497.4C1141.9 496.4 1140.5 494.6 1139.3 493.4C1138.2 492.2 1136.5 491.2 1136.6 490.3Z" fill="#3e3e20" opacity="0.4" transform="translate(2.5,1.8)"/><path d="M1136.6 490.3C1136.6 489.4 1138.5 488.7 1139.7 487.9C1140.9 487.0 1142.2 485.7 1143.7 485.3C1145.3 484.9 1147.4 485.8 1149.1 485.6C1150.8 485.4 1152.1 484.2 1153.7 484.3C1155.3 484.3 1156.8 485.4 1158.5 485.9C1160.1 486.4 1162.2 486.7 1163.7 487.4C1165.2 488.1 1166.1 489.2 1167.4 490.0C1168.7 490.9 1171.7 491.1 1171.6 492.4C1171.4 493.8 1168.3 496.9 1166.6 498.1C1164.9 499.4 1163.4 499.7 1161.5 500.1C1159.6 500.5 1157.0 500.4 1155.1 500.3C1153.3 500.2 1152.1 500.1 1150.2 499.6C1148.3 499.2 1145.5 498.5 1143.7 497.4C1141.9 496.4 1140.5 494.6 1139.3 493.4C1138.2 492.2 1136.5 491.2 1136.6 490.3Z" fill="#6c6e3c"/><clipPath id="hc24"><path d="M1136.6 490.3C1136.6 489.4 1138.5 488.7 1139.7 487.9C1140.9 487.0 1142.2 485.7 1143.7 485.3C1145.3 484.9 1147.4 485.8 1149.1 485.6C1150.8 485.4 1152.1 484.2 1153.7 484.3C1155.3 484.3 1156.8 485.4 1158.5 485.9C1160.1 486.4 1162.2 486.7 1163.7 487.4C1165.2 488.1 1166.1 489.2 1167.4 490.0C1168.7 490.9 1171.7 491.1 1171.6 492.4C1171.4 493.8 1168.3 496.9 1166.6 498.1C1164.9 499.4 1163.4 499.7 1161.5 500.1C1159.6 500.5 1157.0 500.4 1155.1 500.3C1153.3 500.2 1152.1 500.1 1150.2 499.6C1148.3 499.2 1145.5 498.5 1143.7 497.4C1141.9 496.4 1140.5 494.6 1139.3 493.4C1138.2 492.2 1136.5 491.2 1136.6 490.3Z"/></clipPath><g clip-path="url(#hc24)"><ellipse cx="1147.8" cy="488.8" rx="14.7" ry="5.4" fill="#9c9a68" opacity="0.85" transform="rotate(-24 1154.1 492.3)"/><ellipse cx="1161.8" cy="496.8" rx="14.0" ry="4.8" fill="#4a4c26" opacity="0.85" transform="rotate(-24 1154.1 492.3)"/><ellipse cx="1151.9" cy="492.4" rx="3.6" ry="1.1" fill="#b8b48a" opacity="0.7" transform="rotate(-28 1151.9 492.4)"/><ellipse cx="1160.0" cy="492.7" rx="5.4" ry="1.5" fill="#b8b48a" opacity="0.7" transform="rotate(-28 1160.0 492.7)"/><ellipse cx="1150.6" cy="490.9" rx="4.5" ry="2.1" fill="#b8b48a" opacity="0.7" transform="rotate(-28 1150.6 490.9)"/><ellipse cx="1160.2" cy="492.4" rx="3.7" ry="1.1" fill="#b8b48a" opacity="0.7" transform="rotate(-28 1160.2 492.4)"/><ellipse cx="1153.6" cy="496.9" rx="4.4" ry="1.4" fill="#38381c" opacity="0.6" transform="rotate(-28 1153.6 496.9)"/><ellipse cx="1165.7" cy="494.6" rx="3.9" ry="1.7" fill="#38381c" opacity="0.6" transform="rotate(-28 1165.7 494.6)"/><ellipse cx="1151.0" cy="496.7" rx="4.2" ry="1.6" fill="#38381c" opacity="0.6" transform="rotate(-28 1151.0 496.7)"/></g></g>
<g filter="url(#hb)"><path d="M1118.7 505.3C1118.7 504.2 1121.3 502.8 1122.7 501.6C1124.0 500.4 1125.1 499.1 1126.6 498.1C1128.1 497.2 1130.0 496.5 1131.7 495.8C1133.3 495.1 1134.8 493.9 1136.6 493.9C1138.3 493.8 1140.5 494.7 1142.2 495.4C1143.8 496.1 1145.0 497.2 1146.6 498.1C1148.1 499.1 1149.8 500.3 1151.5 501.1C1153.1 501.9 1156.2 501.7 1156.6 503.1C1156.9 504.6 1154.9 508.3 1153.7 509.6C1152.6 510.9 1151.1 510.8 1149.6 511.0C1148.1 511.2 1146.2 510.6 1144.8 510.7C1143.3 510.9 1142.3 511.7 1140.9 511.7C1139.4 511.7 1137.8 510.9 1136.2 510.8C1134.7 510.7 1132.9 511.2 1131.5 511.3C1130.2 511.3 1129.4 511.5 1128.0 511.0C1126.6 510.5 1124.5 509.2 1123.0 508.3C1121.4 507.3 1118.8 506.4 1118.7 505.3Z" fill="#3e3e20" opacity="0.4" transform="translate(2.5,1.8)"/><path d="M1118.7 505.3C1118.7 504.2 1121.3 502.8 1122.7 501.6C1124.0 500.4 1125.1 499.1 1126.6 498.1C1128.1 497.2 1130.0 496.5 1131.7 495.8C1133.3 495.1 1134.8 493.9 1136.6 493.9C1138.3 493.8 1140.5 494.7 1142.2 495.4C1143.8 496.1 1145.0 497.2 1146.6 498.1C1148.1 499.1 1149.8 500.3 1151.5 501.1C1153.1 501.9 1156.2 501.7 1156.6 503.1C1156.9 504.6 1154.9 508.3 1153.7 509.6C1152.6 510.9 1151.1 510.8 1149.6 511.0C1148.1 511.2 1146.2 510.6 1144.8 510.7C1143.3 510.9 1142.3 511.7 1140.9 511.7C1139.4 511.7 1137.8 510.9 1136.2 510.8C1134.7 510.7 1132.9 511.2 1131.5 511.3C1130.2 511.3 1129.4 511.5 1128.0 511.0C1126.6 510.5 1124.5 509.2 1123.0 508.3C1121.4 507.3 1118.8 506.4 1118.7 505.3Z" fill="#6c6e3c"/><clipPath id="hc25"><path d="M1118.7 505.3C1118.7 504.2 1121.3 502.8 1122.7 501.6C1124.0 500.4 1125.1 499.1 1126.6 498.1C1128.1 497.2 1130.0 496.5 1131.7 495.8C1133.3 495.1 1134.8 493.9 1136.6 493.9C1138.3 493.8 1140.5 494.7 1142.2 495.4C1143.8 496.1 1145.0 497.2 1146.6 498.1C1148.1 499.1 1149.8 500.3 1151.5 501.1C1153.1 501.9 1156.2 501.7 1156.6 503.1C1156.9 504.6 1154.9 508.3 1153.7 509.6C1152.6 510.9 1151.1 510.8 1149.6 511.0C1148.1 511.2 1146.2 510.6 1144.8 510.7C1143.3 510.9 1142.3 511.7 1140.9 511.7C1139.4 511.7 1137.8 510.9 1136.2 510.8C1134.7 510.7 1132.9 511.2 1131.5 511.3C1130.2 511.3 1129.4 511.5 1128.0 511.0C1126.6 510.5 1124.5 509.2 1123.0 508.3C1121.4 507.3 1118.8 506.4 1118.7 505.3Z"/></clipPath><g clip-path="url(#hc25)"><ellipse cx="1130.8" cy="498.9" rx="15.9" ry="6.1" fill="#9c9a68" opacity="0.85" transform="rotate(-24 1137.6 502.8)"/><ellipse cx="1146.0" cy="507.8" rx="15.1" ry="5.4" fill="#4a4c26" opacity="0.85" transform="rotate(-24 1137.6 502.8)"/><ellipse cx="1126.0" cy="497.5" rx="3.2" ry="2.3" fill="#b8b48a" opacity="0.7" transform="rotate(-28 1126.0 497.5)"/><ellipse cx="1129.8" cy="500.8" rx="3.7" ry="1.6" fill="#b8b48a" opacity="0.7" transform="rotate(-28 1129.8 500.8)"/><ellipse cx="1142.6" cy="499.9" rx="3.2" ry="1.6" fill="#b8b48a" opacity="0.7" transform="rotate(-28 1142.6 499.9)"/><ellipse cx="1138.7" cy="501.9" rx="5.4" ry="1.7" fill="#b8b48a" opacity="0.7" transform="rotate(-28 1138.7 501.9)"/><ellipse cx="1150.1" cy="506.5" rx="4.4" ry="1.5" fill="#38381c" opacity="0.6" transform="rotate(-28 1150.1 506.5)"/><ellipse cx="1143.9" cy="503.8" rx="4.9" ry="1.1" fill="#38381c" opacity="0.6" transform="rotate(-28 1143.9 503.8)"/><ellipse cx="1141.2" cy="507.8" rx="5.6" ry="1.3" fill="#38381c" opacity="0.6" transform="rotate(-28 1141.2 507.8)"/></g></g>
<g filter="url(#hb)"><path d="M1133.0 516.0C1133.0 514.6 1135.0 514.3 1136.3 513.5C1137.6 512.6 1139.3 511.3 1140.9 511.0C1142.5 510.7 1144.2 511.6 1145.9 511.5C1147.5 511.4 1149.3 509.9 1150.9 510.3C1152.4 510.6 1154.0 512.7 1155.3 513.7C1156.7 514.6 1158.5 514.5 1158.7 516.0C1158.9 517.5 1157.8 521.3 1156.6 522.4C1155.3 523.5 1153.1 522.3 1151.2 522.5C1149.3 522.8 1146.7 523.8 1145.1 523.9C1143.5 523.9 1143.0 523.0 1141.6 522.7C1140.2 522.3 1138.0 522.8 1136.6 521.7C1135.1 520.6 1133.0 517.4 1133.0 516.0Z" fill="#3e3e20" opacity="0.4" transform="translate(2.5,1.8)"/><path d="M1133.0 516.0C1133.0 514.6 1135.0 514.3 1136.3 513.5C1137.6 512.6 1139.3 511.3 1140.9 511.0C1142.5 510.7 1144.2 511.6 1145.9 511.5C1147.5 511.4 1149.3 509.9 1150.9 510.3C1152.4 510.6 1154.0 512.7 1155.3 513.7C1156.7 514.6 1158.5 514.5 1158.7 516.0C1158.9 517.5 1157.8 521.3 1156.6 522.4C1155.3 523.5 1153.1 522.3 1151.2 522.5C1149.3 522.8 1146.7 523.8 1145.1 523.9C1143.5 523.9 1143.0 523.0 1141.6 522.7C1140.2 522.3 1138.0 522.8 1136.6 521.7C1135.1 520.6 1133.0 517.4 1133.0 516.0Z" fill="#6c6e3c"/><clipPath id="hc26"><path d="M1133.0 516.0C1133.0 514.6 1135.0 514.3 1136.3 513.5C1137.6 512.6 1139.3 511.3 1140.9 511.0C1142.5 510.7 1144.2 511.6 1145.9 511.5C1147.5 511.4 1149.3 509.9 1150.9 510.3C1152.4 510.6 1154.0 512.7 1155.3 513.7C1156.7 514.6 1158.5 514.5 1158.7 516.0C1158.9 517.5 1157.8 521.3 1156.6 522.4C1155.3 523.5 1153.1 522.3 1151.2 522.5C1149.3 522.8 1146.7 523.8 1145.1 523.9C1143.5 523.9 1143.0 523.0 1141.6 522.7C1140.2 522.3 1138.0 522.8 1136.6 521.7C1135.1 520.6 1133.0 517.4 1133.0 516.0Z"/></clipPath><g clip-path="url(#hc26)"><ellipse cx="1141.2" cy="514.1" rx="10.8" ry="4.6" fill="#9c9a68" opacity="0.85" transform="rotate(-24 1145.9 517.1)"/><ellipse cx="1151.5" cy="520.9" rx="10.3" ry="4.1" fill="#4a4c26" opacity="0.85" transform="rotate(-24 1145.9 517.1)"/><ellipse cx="1142.4" cy="516.3" rx="2.8" ry="1.3" fill="#b8b48a" opacity="0.7" transform="rotate(-28 1142.4 516.3)"/><ellipse cx="1138.3" cy="517.1" rx="3.1" ry="1.7" fill="#b8b48a" opacity="0.7" transform="rotate(-28 1138.3 517.1)"/><ellipse cx="1146.7" cy="514.9" rx="2.5" ry="1.0" fill="#b8b48a" opacity="0.7" transform="rotate(-28 1146.7 514.9)"/><ellipse cx="1147.3" cy="514.2" rx="2.9" ry="1.4" fill="#b8b48a" opacity="0.7" transform="rotate(-28 1147.3 514.2)"/><ellipse cx="1153.6" cy="520.6" rx="3.3" ry="1.4" fill="#38381c" opacity="0.6" transform="rotate(-28 1153.6 520.6)"/><ellipse cx="1151.3" cy="520.2" rx="2.4" ry="1.0" fill="#38381c" opacity="0.6" transform="rotate(-28 1151.3 520.2)"/><ellipse cx="1153.5" cy="520.1" rx="2.6" ry="1.2" fill="#38381c" opacity="0.6" transform="rotate(-28 1153.5 520.1)"/></g></g>
<g filter="url(#hb)"><path d="M1042.3 507.4C1042.3 506.9 1044.7 506.2 1045.9 505.2C1047.0 504.3 1048.2 502.1 1049.4 501.7C1050.6 501.3 1051.5 502.4 1053.0 502.9C1054.4 503.4 1056.6 503.9 1058.0 504.6C1059.4 505.2 1060.0 506.3 1061.5 507.0C1062.9 507.7 1066.8 508.4 1066.6 508.9C1066.4 509.3 1062.2 509.2 1060.3 509.6C1058.4 509.9 1056.6 511.1 1055.1 511.0C1053.7 510.9 1053.0 509.5 1051.4 509.0C1049.9 508.6 1047.5 508.5 1045.9 508.3C1044.4 508.0 1042.3 507.9 1042.3 507.4Z" fill="#3e3e20" opacity="0.4" transform="translate(2.5,1.8)"/><path d="M1042.3 507.4C1042.3 506.9 1044.7 506.2 1045.9 505.2C1047.0 504.3 1048.2 502.1 1049.4 501.7C1050.6 501.3 1051.5 502.4 1053.0 502.9C1054.4 503.4 1056.6 503.9 1058.0 504.6C1059.4 505.2 1060.0 506.3 1061.5 507.0C1062.9 507.7 1066.8 508.4 1066.6 508.9C1066.4 509.3 1062.2 509.2 1060.3 509.6C1058.4 509.9 1056.6 511.1 1055.1 511.0C1053.7 510.9 1053.0 509.5 1051.4 509.0C1049.9 508.6 1047.5 508.5 1045.9 508.3C1044.4 508.0 1042.3 507.9 1042.3 507.4Z" fill="#6c6e3c"/><clipPath id="hc27"><path d="M1042.3 507.4C1042.3 506.9 1044.7 506.2 1045.9 505.2C1047.0 504.3 1048.2 502.1 1049.4 501.7C1050.6 501.3 1051.5 502.4 1053.0 502.9C1054.4 503.4 1056.6 503.9 1058.0 504.6C1059.4 505.2 1060.0 506.3 1061.5 507.0C1062.9 507.7 1066.8 508.4 1066.6 508.9C1066.4 509.3 1062.2 509.2 1060.3 509.6C1058.4 509.9 1056.6 511.1 1055.1 511.0C1053.7 510.9 1053.0 509.5 1051.4 509.0C1049.9 508.6 1047.5 508.5 1045.9 508.3C1044.4 508.0 1042.3 507.9 1042.3 507.4Z"/></clipPath><g clip-path="url(#hc27)"><ellipse cx="1050.1" cy="504.3" rx="10.2" ry="3.2" fill="#9c9a68" opacity="0.85" transform="rotate(-24 1054.4 506.4)"/><ellipse cx="1059.8" cy="509.0" rx="9.7" ry="2.8" fill="#4a4c26" opacity="0.85" transform="rotate(-24 1054.4 506.4)"/><ellipse cx="1053.9" cy="504.4" rx="2.1" ry="0.8" fill="#b8b48a" opacity="0.7" transform="rotate(-28 1053.9 504.4)"/><ellipse cx="1047.5" cy="503.9" rx="2.4" ry="1.0" fill="#b8b48a" opacity="0.7" transform="rotate(-28 1047.5 503.9)"/><ellipse cx="1057.6" cy="506.4" rx="3.9" ry="1.0" fill="#b8b48a" opacity="0.7" transform="rotate(-28 1057.6 506.4)"/><ellipse cx="1056.6" cy="505.7" rx="3.7" ry="1.0" fill="#b8b48a" opacity="0.7" transform="rotate(-28 1056.6 505.7)"/><ellipse cx="1058.9" cy="508.0" rx="3.1" ry="0.6" fill="#38381c" opacity="0.6" transform="rotate(-28 1058.9 508.0)"/><ellipse cx="1059.7" cy="507.0" rx="3.0" ry="0.9" fill="#38381c" opacity="0.6" transform="rotate(-28 1059.7 507.0)"/><ellipse cx="1056.3" cy="506.5" rx="3.2" ry="1.1" fill="#38381c" opacity="0.6" transform="rotate(-28 1056.3 506.5)"/></g></g>
<g><path d="M993.3 180.3 L998.0 178.3 L1000.8 178.1 L1004.4 178.1 L1007.3 178.3 L1011.0 179.9 L1014.0 181.0 L1017.3 182.3 L1012.7 183.7 L1008.9 184.2 L1004.7 184.7 L1000.9 183.7 L996.7 183.0Z" fill="#8a6422" stroke="#8a6422" stroke-width="1" transform="translate(0.3,2.2)"/><path d="M993.3 180.3 L998.0 178.3 L1000.8 178.1 L1004.4 178.1 L1007.3 178.3 L1011.0 179.9 L1014.0 181.0 L1017.3 182.3 L1012.7 183.7 L1008.9 184.2 L1004.7 184.7 L1000.9 183.7 L996.7 183.0Z" fill="#a89f5d"/><clipPath id="ic28"><path d="M993.3 180.3 L998.0 178.3 L1000.8 178.1 L1004.4 178.1 L1007.3 178.3 L1011.0 179.9 L1014.0 181.0 L1017.3 182.3 L1012.7 183.7 L1008.9 184.2 L1004.7 184.7 L1000.9 183.7 L996.7 183.0Z"/></clipPath><g clip-path="url(#ic28)"><path d="M993.3 180.3 L998.0 178.3 L1000.8 178.1 L1004.4 178.1 L1007.3 178.3 L1011.0 179.9 L1014.0 181.0 L1017.3 182.3 L1012.7 183.7 L1008.9 184.2 L1004.7 184.7 L1000.9 183.7 L996.7 183.0Z" fill="none" stroke="#c8b070" stroke-width="16" filter="url(#sand)"/><path d="M993.3 180.3 L998.0 178.3 L1000.8 178.1 L1004.4 178.1 L1007.3 178.3 L1011.0 179.9 L1014.0 181.0 L1017.3 182.3 L1012.7 183.7 L1008.9 184.2 L1004.7 184.7 L1000.9 183.7 L996.7 183.0Z" fill="none" stroke="#c8ab64" stroke-width="2" opacity="0.8"/></g></g>
<g><path d="M1014.7 188.3 L1019.3 187.0 L1024.7 189.7 L1028.1 190.4 L1031.8 191.1 L1035.3 191.7 L1038.6 193.1 L1041.5 194.0 L1044.4 194.6 L1047.3 195.7 L1051.0 197.5 L1054.0 198.3 L1056.7 201.0 L1054.0 203.7 L1048.7 206.3 L1045.4 205.5 L1042.0 204.3 L1038.0 204.0 L1035.0 203.1 L1031.3 202.3 L1027.9 201.5 L1025.2 200.2 L1022.0 199.7 L1017.3 197.0 L1017.3 191.7Z" fill="#8a6422" stroke="#8a6422" stroke-width="1" transform="translate(0.3,2.2)"/><path d="M1014.7 188.3 L1019.3 187.0 L1024.7 189.7 L1028.1 190.4 L1031.8 191.1 L1035.3 191.7 L1038.6 193.1 L1041.5 194.0 L1044.4 194.6 L1047.3 195.7 L1051.0 197.5 L1054.0 198.3 L1056.7 201.0 L1054.0 203.7 L1048.7 206.3 L1045.4 205.5 L1042.0 204.3 L1038.0 204.0 L1035.0 203.1 L1031.3 202.3 L1027.9 201.5 L1025.2 200.2 L1022.0 199.7 L1017.3 197.0 L1017.3 191.7Z" fill="#a89f5d"/><clipPath id="ic29"><path d="M1014.7 188.3 L1019.3 187.0 L1024.7 189.7 L1028.1 190.4 L1031.8 191.1 L1035.3 191.7 L1038.6 193.1 L1041.5 194.0 L1044.4 194.6 L1047.3 195.7 L1051.0 197.5 L1054.0 198.3 L1056.7 201.0 L1054.0 203.7 L1048.7 206.3 L1045.4 205.5 L1042.0 204.3 L1038.0 204.0 L1035.0 203.1 L1031.3 202.3 L1027.9 201.5 L1025.2 200.2 L1022.0 199.7 L1017.3 197.0 L1017.3 191.7Z"/></clipPath><g clip-path="url(#ic29)"><path d="M1014.7 188.3 L1019.3 187.0 L1024.7 189.7 L1028.1 190.4 L1031.8 191.1 L1035.3 191.7 L1038.6 193.1 L1041.5 194.0 L1044.4 194.6 L1047.3 195.7 L1051.0 197.5 L1054.0 198.3 L1056.7 201.0 L1054.0 203.7 L1048.7 206.3 L1045.4 205.5 L1042.0 204.3 L1038.0 204.0 L1035.0 203.1 L1031.3 202.3 L1027.9 201.5 L1025.2 200.2 L1022.0 199.7 L1017.3 197.0 L1017.3 191.7Z" fill="none" stroke="#c8b070" stroke-width="16" filter="url(#sand)"/><path d="M1014.7 188.3 L1019.3 187.0 L1024.7 189.7 L1028.1 190.4 L1031.8 191.1 L1035.3 191.7 L1038.6 193.1 L1041.5 194.0 L1044.4 194.6 L1047.3 195.7 L1051.0 197.5 L1054.0 198.3 L1056.7 201.0 L1054.0 203.7 L1048.7 206.3 L1045.4 205.5 L1042.0 204.3 L1038.0 204.0 L1035.0 203.1 L1031.3 202.3 L1027.9 201.5 L1025.2 200.2 L1022.0 199.7 L1017.3 197.0 L1017.3 191.7Z" fill="none" stroke="#c8ab64" stroke-width="2" opacity="0.8"/></g></g>
<g><path d="M1036.7 230.3 L1041.0 229.9 L1043.9 229.2 L1047.3 229.0 L1050.2 229.2 L1053.9 229.2 L1058.0 230.3 L1060.9 229.3 L1065.2 229.2 L1068.7 229.7 L1072.2 230.8 L1075.3 232.3 L1080.7 233.7 L1086.0 231.0 L1089.7 230.8 L1092.5 230.3 L1095.5 230.3 L1098.0 229.0 L1102.4 227.9 L1104.7 227.7 L1108.7 227.7 L1111.5 227.8 L1115.3 227.0 L1119.2 226.9 L1121.0 229.1 L1124.7 229.0 L1127.5 228.9 L1132.5 229.9 L1135.3 231.0 L1140.0 231.7 L1140.7 237.0 L1137.8 239.8 L1136.7 242.3 L1132.8 244.8 L1130.0 247.7 L1128.4 251.6 L1127.3 254.3 L1130.1 258.5 L1131.3 261.0 L1134.0 265.1 L1136.7 267.7 L1138.7 271.1 L1140.0 274.3 L1139.3 279.7 L1135.6 280.6 L1131.3 281.0 L1128.7 281.2 L1124.7 282.3 L1122.3 283.8 L1118.6 284.1 L1115.3 285.0 L1111.9 285.2 L1109.0 282.9 L1106.0 283.0 L1103.6 283.5 L1099.3 283.7 L1095.2 281.5 L1091.3 281.0 L1087.2 281.1 L1083.3 279.7 L1079.3 278.3 L1076.1 279.0 L1071.3 281.0 L1067.6 282.5 L1064.7 282.3 L1061.0 281.4 L1056.7 280.3 L1052.7 281.9 L1050.0 283.0 L1045.2 281.5 L1042.0 281.7 L1038.0 278.3 L1038.4 273.6 L1038.0 270.3 L1041.6 266.5 L1043.3 263.7 L1044.5 259.4 L1047.3 255.7 L1047.6 253.1 L1048.7 249.0 L1046.5 246.0 L1044.7 243.7 L1041.4 241.3 L1038.0 239.7 L1036.7 235.7 L1037.4 233.5Z" fill="#8a6422" stroke="#8a6422" stroke-width="1" transform="translate(0.3,2.2)"/><path d="M1036.7 230.3 L1041.0 229.9 L1043.9 229.2 L1047.3 229.0 L1050.2 229.2 L1053.9 229.2 L1058.0 230.3 L1060.9 229.3 L1065.2 229.2 L1068.7 229.7 L1072.2 230.8 L1075.3 232.3 L1080.7 233.7 L1086.0 231.0 L1089.7 230.8 L1092.5 230.3 L1095.5 230.3 L1098.0 229.0 L1102.4 227.9 L1104.7 227.7 L1108.7 227.7 L1111.5 227.8 L1115.3 227.0 L1119.2 226.9 L1121.0 229.1 L1124.7 229.0 L1127.5 228.9 L1132.5 229.9 L1135.3 231.0 L1140.0 231.7 L1140.7 237.0 L1137.8 239.8 L1136.7 242.3 L1132.8 244.8 L1130.0 247.7 L1128.4 251.6 L1127.3 254.3 L1130.1 258.5 L1131.3 261.0 L1134.0 265.1 L1136.7 267.7 L1138.7 271.1 L1140.0 274.3 L1139.3 279.7 L1135.6 280.6 L1131.3 281.0 L1128.7 281.2 L1124.7 282.3 L1122.3 283.8 L1118.6 284.1 L1115.3 285.0 L1111.9 285.2 L1109.0 282.9 L1106.0 283.0 L1103.6 283.5 L1099.3 283.7 L1095.2 281.5 L1091.3 281.0 L1087.2 281.1 L1083.3 279.7 L1079.3 278.3 L1076.1 279.0 L1071.3 281.0 L1067.6 282.5 L1064.7 282.3 L1061.0 281.4 L1056.7 280.3 L1052.7 281.9 L1050.0 283.0 L1045.2 281.5 L1042.0 281.7 L1038.0 278.3 L1038.4 273.6 L1038.0 270.3 L1041.6 266.5 L1043.3 263.7 L1044.5 259.4 L1047.3 255.7 L1047.6 253.1 L1048.7 249.0 L1046.5 246.0 L1044.7 243.7 L1041.4 241.3 L1038.0 239.7 L1036.7 235.7 L1037.4 233.5Z" fill="#a89f5d"/><clipPath id="ic30"><path d="M1036.7 230.3 L1041.0 229.9 L1043.9 229.2 L1047.3 229.0 L1050.2 229.2 L1053.9 229.2 L1058.0 230.3 L1060.9 229.3 L1065.2 229.2 L1068.7 229.7 L1072.2 230.8 L1075.3 232.3 L1080.7 233.7 L1086.0 231.0 L1089.7 230.8 L1092.5 230.3 L1095.5 230.3 L1098.0 229.0 L1102.4 227.9 L1104.7 227.7 L1108.7 227.7 L1111.5 227.8 L1115.3 227.0 L1119.2 226.9 L1121.0 229.1 L1124.7 229.0 L1127.5 228.9 L1132.5 229.9 L1135.3 231.0 L1140.0 231.7 L1140.7 237.0 L1137.8 239.8 L1136.7 242.3 L1132.8 244.8 L1130.0 247.7 L1128.4 251.6 L1127.3 254.3 L1130.1 258.5 L1131.3 261.0 L1134.0 265.1 L1136.7 267.7 L1138.7 271.1 L1140.0 274.3 L1139.3 279.7 L1135.6 280.6 L1131.3 281.0 L1128.7 281.2 L1124.7 282.3 L1122.3 283.8 L1118.6 284.1 L1115.3 285.0 L1111.9 285.2 L1109.0 282.9 L1106.0 283.0 L1103.6 283.5 L1099.3 283.7 L1095.2 281.5 L1091.3 281.0 L1087.2 281.1 L1083.3 279.7 L1079.3 278.3 L1076.1 279.0 L1071.3 281.0 L1067.6 282.5 L1064.7 282.3 L1061.0 281.4 L1056.7 280.3 L1052.7 281.9 L1050.0 283.0 L1045.2 281.5 L1042.0 281.7 L1038.0 278.3 L1038.4 273.6 L1038.0 270.3 L1041.6 266.5 L1043.3 263.7 L1044.5 259.4 L1047.3 255.7 L1047.6 253.1 L1048.7 249.0 L1046.5 246.0 L1044.7 243.7 L1041.4 241.3 L1038.0 239.7 L1036.7 235.7 L1037.4 233.5Z"/></clipPath><g clip-path="url(#ic30)"><path d="M1036.7 230.3 L1041.0 229.9 L1043.9 229.2 L1047.3 229.0 L1050.2 229.2 L1053.9 229.2 L1058.0 230.3 L1060.9 229.3 L1065.2 229.2 L1068.7 229.7 L1072.2 230.8 L1075.3 232.3 L1080.7 233.7 L1086.0 231.0 L1089.7 230.8 L1092.5 230.3 L1095.5 230.3 L1098.0 229.0 L1102.4 227.9 L1104.7 227.7 L1108.7 227.7 L1111.5 227.8 L1115.3 227.0 L1119.2 226.9 L1121.0 229.1 L1124.7 229.0 L1127.5 228.9 L1132.5 229.9 L1135.3 231.0 L1140.0 231.7 L1140.7 237.0 L1137.8 239.8 L1136.7 242.3 L1132.8 244.8 L1130.0 247.7 L1128.4 251.6 L1127.3 254.3 L1130.1 258.5 L1131.3 261.0 L1134.0 265.1 L1136.7 267.7 L1138.7 271.1 L1140.0 274.3 L1139.3 279.7 L1135.6 280.6 L1131.3 281.0 L1128.7 281.2 L1124.7 282.3 L1122.3 283.8 L1118.6 284.1 L1115.3 285.0 L1111.9 285.2 L1109.0 282.9 L1106.0 283.0 L1103.6 283.5 L1099.3 283.7 L1095.2 281.5 L1091.3 281.0 L1087.2 281.1 L1083.3 279.7 L1079.3 278.3 L1076.1 279.0 L1071.3 281.0 L1067.6 282.5 L1064.7 282.3 L1061.0 281.4 L1056.7 280.3 L1052.7 281.9 L1050.0 283.0 L1045.2 281.5 L1042.0 281.7 L1038.0 278.3 L1038.4 273.6 L1038.0 270.3 L1041.6 266.5 L1043.3 263.7 L1044.5 259.4 L1047.3 255.7 L1047.6 253.1 L1048.7 249.0 L1046.5 246.0 L1044.7 243.7 L1041.4 241.3 L1038.0 239.7 L1036.7 235.7 L1037.4 233.5Z" fill="none" stroke="#c8b070" stroke-width="10" filter="url(#sand)"/><path d="M1036.7 230.3 L1041.0 229.9 L1043.9 229.2 L1047.3 229.0 L1050.2 229.2 L1053.9 229.2 L1058.0 230.3 L1060.9 229.3 L1065.2 229.2 L1068.7 229.7 L1072.2 230.8 L1075.3 232.3 L1080.7 233.7 L1086.0 231.0 L1089.7 230.8 L1092.5 230.3 L1095.5 230.3 L1098.0 229.0 L1102.4 227.9 L1104.7 227.7 L1108.7 227.7 L1111.5 227.8 L1115.3 227.0 L1119.2 226.9 L1121.0 229.1 L1124.7 229.0 L1127.5 228.9 L1132.5 229.9 L1135.3 231.0 L1140.0 231.7 L1140.7 237.0 L1137.8 239.8 L1136.7 242.3 L1132.8 244.8 L1130.0 247.7 L1128.4 251.6 L1127.3 254.3 L1130.1 258.5 L1131.3 261.0 L1134.0 265.1 L1136.7 267.7 L1138.7 271.1 L1140.0 274.3 L1139.3 279.7 L1135.6 280.6 L1131.3 281.0 L1128.7 281.2 L1124.7 282.3 L1122.3 283.8 L1118.6 284.1 L1115.3 285.0 L1111.9 285.2 L1109.0 282.9 L1106.0 283.0 L1103.6 283.5 L1099.3 283.7 L1095.2 281.5 L1091.3 281.0 L1087.2 281.1 L1083.3 279.7 L1079.3 278.3 L1076.1 279.0 L1071.3 281.0 L1067.6 282.5 L1064.7 282.3 L1061.0 281.4 L1056.7 280.3 L1052.7 281.9 L1050.0 283.0 L1045.2 281.5 L1042.0 281.7 L1038.0 278.3 L1038.4 273.6 L1038.0 270.3 L1041.6 266.5 L1043.3 263.7 L1044.5 259.4 L1047.3 255.7 L1047.6 253.1 L1048.7 249.0 L1046.5 246.0 L1044.7 243.7 L1041.4 241.3 L1038.0 239.7 L1036.7 235.7 L1037.4 233.5Z" fill="none" stroke="#c8ab64" stroke-width="2" opacity="0.8"/></g></g>
<g><path d="M1292.3 429.6 L1294.2 426.7 L1295.1 423.9 L1299.8 423.0 L1303.5 421.3 L1306.6 421.0 L1309.9 418.9 L1312.4 417.4 L1316.6 416.7 L1319.4 412.4 L1321.9 410.9 L1325.3 410.6 L1328.0 409.6 L1331.7 409.1 L1336.6 408.1 L1340.9 411.0 L1344.9 411.4 L1349.4 411.0 L1352.6 408.9 L1355.5 409.0 L1359.4 406.7 L1363.9 406.2 L1368.0 405.3 L1371.7 406.0 L1375.1 406.7 L1379.4 409.6 L1382.4 408.6 L1386.6 406.7 L1390.2 406.0 L1393.2 403.0 L1396.6 402.4 L1399.7 401.5 L1403.4 400.2 L1406.6 399.6 L1409.2 398.5 L1413.0 397.0 L1415.1 396.7 L1416.6 394.6 L1419.4 391.0 L1420.5 387.3 L1420.8 385.1 L1422.3 382.4 L1423.7 379.5 L1425.1 375.3 L1424.7 370.4 L1423.7 366.7 L1422.3 361.0 L1426.2 359.9 L1429.4 358.1 L1433.5 357.8 L1437.2 358.5 L1440.9 357.4 L1444.6 357.1 L1449.2 357.1 L1452.3 356.7 L1454.8 356.6 L1458.0 354.4 L1460.9 353.9 L1463.9 352.8 L1468.0 353.1 L1471.4 352.4 L1475.4 352.1 L1478.0 352.4 L1478.5 355.8 L1478.6 358.4 L1477.6 362.2 L1478.4 365.5 L1477.5 368.0 L1478.2 371.5 L1478.1 373.3 L1478.3 377.2 L1477.9 380.7 L1478.7 383.5 L1478.5 387.0 L1477.9 390.1 L1477.7 393.7 L1477.2 395.5 L1477.4 399.7 L1477.3 401.6 L1478.0 405.3 L1474.0 405.6 L1471.1 407.2 L1467.8 408.0 L1463.7 409.6 L1460.8 411.0 L1456.6 412.4 L1454.9 415.3 L1453.7 418.1 L1449.6 419.2 L1446.6 421.0 L1443.6 422.6 L1440.2 423.2 L1438.0 424.3 L1435.1 425.3 L1431.5 427.1 L1429.4 427.3 L1426.1 428.9 L1423.7 429.6 L1420.7 430.7 L1417.2 431.6 L1413.7 433.9 L1410.1 433.5 L1407.0 434.1 L1403.7 435.3 L1401.1 436.4 L1397.1 437.3 L1395.1 439.6 L1391.0 440.4 L1388.3 440.1 L1385.1 441.0 L1380.9 443.9 L1382.8 446.1 L1383.7 449.6 L1383.7 455.3 L1386.5 457.4 L1390.1 458.2 L1392.3 461.0 L1393.1 465.2 L1393.7 469.6 L1390.9 473.9 L1388.0 474.8 L1384.1 474.7 L1380.9 475.3 L1378.4 476.3 L1373.5 477.1 L1370.9 476.7 L1365.7 476.6 L1362.3 475.3 L1357.8 476.2 L1355.1 476.0 L1351.7 475.1 L1346.6 474.6 L1343.8 473.8 L1339.4 472.4 L1335.8 473.3 L1332.3 473.1 L1327.4 474.3 L1323.7 474.6 L1320.0 473.7 L1315.1 473.1 L1312.6 474.0 L1308.6 473.7 L1305.1 474.6 L1300.5 473.8 L1296.6 472.4 L1295.7 469.1 L1293.7 466.7 L1294.0 463.4 L1295.3 461.2 L1296.6 458.1 L1299.2 455.8 L1300.8 452.7 L1302.3 451.0 L1303.8 448.7 L1304.4 444.7 L1306.6 442.4 L1302.9 438.9 L1300.9 436.7 L1297.9 434.6 L1295.2 432.6Z" fill="#8a6422" stroke="#8a6422" stroke-width="1" transform="translate(0.3,2.2)"/><path d="M1292.3 429.6 L1294.2 426.7 L1295.1 423.9 L1299.8 423.0 L1303.5 421.3 L1306.6 421.0 L1309.9 418.9 L1312.4 417.4 L1316.6 416.7 L1319.4 412.4 L1321.9 410.9 L1325.3 410.6 L1328.0 409.6 L1331.7 409.1 L1336.6 408.1 L1340.9 411.0 L1344.9 411.4 L1349.4 411.0 L1352.6 408.9 L1355.5 409.0 L1359.4 406.7 L1363.9 406.2 L1368.0 405.3 L1371.7 406.0 L1375.1 406.7 L1379.4 409.6 L1382.4 408.6 L1386.6 406.7 L1390.2 406.0 L1393.2 403.0 L1396.6 402.4 L1399.7 401.5 L1403.4 400.2 L1406.6 399.6 L1409.2 398.5 L1413.0 397.0 L1415.1 396.7 L1416.6 394.6 L1419.4 391.0 L1420.5 387.3 L1420.8 385.1 L1422.3 382.4 L1423.7 379.5 L1425.1 375.3 L1424.7 370.4 L1423.7 366.7 L1422.3 361.0 L1426.2 359.9 L1429.4 358.1 L1433.5 357.8 L1437.2 358.5 L1440.9 357.4 L1444.6 357.1 L1449.2 357.1 L1452.3 356.7 L1454.8 356.6 L1458.0 354.4 L1460.9 353.9 L1463.9 352.8 L1468.0 353.1 L1471.4 352.4 L1475.4 352.1 L1478.0 352.4 L1478.5 355.8 L1478.6 358.4 L1477.6 362.2 L1478.4 365.5 L1477.5 368.0 L1478.2 371.5 L1478.1 373.3 L1478.3 377.2 L1477.9 380.7 L1478.7 383.5 L1478.5 387.0 L1477.9 390.1 L1477.7 393.7 L1477.2 395.5 L1477.4 399.7 L1477.3 401.6 L1478.0 405.3 L1474.0 405.6 L1471.1 407.2 L1467.8 408.0 L1463.7 409.6 L1460.8 411.0 L1456.6 412.4 L1454.9 415.3 L1453.7 418.1 L1449.6 419.2 L1446.6 421.0 L1443.6 422.6 L1440.2 423.2 L1438.0 424.3 L1435.1 425.3 L1431.5 427.1 L1429.4 427.3 L1426.1 428.9 L1423.7 429.6 L1420.7 430.7 L1417.2 431.6 L1413.7 433.9 L1410.1 433.5 L1407.0 434.1 L1403.7 435.3 L1401.1 436.4 L1397.1 437.3 L1395.1 439.6 L1391.0 440.4 L1388.3 440.1 L1385.1 441.0 L1380.9 443.9 L1382.8 446.1 L1383.7 449.6 L1383.7 455.3 L1386.5 457.4 L1390.1 458.2 L1392.3 461.0 L1393.1 465.2 L1393.7 469.6 L1390.9 473.9 L1388.0 474.8 L1384.1 474.7 L1380.9 475.3 L1378.4 476.3 L1373.5 477.1 L1370.9 476.7 L1365.7 476.6 L1362.3 475.3 L1357.8 476.2 L1355.1 476.0 L1351.7 475.1 L1346.6 474.6 L1343.8 473.8 L1339.4 472.4 L1335.8 473.3 L1332.3 473.1 L1327.4 474.3 L1323.7 474.6 L1320.0 473.7 L1315.1 473.1 L1312.6 474.0 L1308.6 473.7 L1305.1 474.6 L1300.5 473.8 L1296.6 472.4 L1295.7 469.1 L1293.7 466.7 L1294.0 463.4 L1295.3 461.2 L1296.6 458.1 L1299.2 455.8 L1300.8 452.7 L1302.3 451.0 L1303.8 448.7 L1304.4 444.7 L1306.6 442.4 L1302.9 438.9 L1300.9 436.7 L1297.9 434.6 L1295.2 432.6Z" fill="#a89f5d"/><clipPath id="ic31"><path d="M1292.3 429.6 L1294.2 426.7 L1295.1 423.9 L1299.8 423.0 L1303.5 421.3 L1306.6 421.0 L1309.9 418.9 L1312.4 417.4 L1316.6 416.7 L1319.4 412.4 L1321.9 410.9 L1325.3 410.6 L1328.0 409.6 L1331.7 409.1 L1336.6 408.1 L1340.9 411.0 L1344.9 411.4 L1349.4 411.0 L1352.6 408.9 L1355.5 409.0 L1359.4 406.7 L1363.9 406.2 L1368.0 405.3 L1371.7 406.0 L1375.1 406.7 L1379.4 409.6 L1382.4 408.6 L1386.6 406.7 L1390.2 406.0 L1393.2 403.0 L1396.6 402.4 L1399.7 401.5 L1403.4 400.2 L1406.6 399.6 L1409.2 398.5 L1413.0 397.0 L1415.1 396.7 L1416.6 394.6 L1419.4 391.0 L1420.5 387.3 L1420.8 385.1 L1422.3 382.4 L1423.7 379.5 L1425.1 375.3 L1424.7 370.4 L1423.7 366.7 L1422.3 361.0 L1426.2 359.9 L1429.4 358.1 L1433.5 357.8 L1437.2 358.5 L1440.9 357.4 L1444.6 357.1 L1449.2 357.1 L1452.3 356.7 L1454.8 356.6 L1458.0 354.4 L1460.9 353.9 L1463.9 352.8 L1468.0 353.1 L1471.4 352.4 L1475.4 352.1 L1478.0 352.4 L1478.5 355.8 L1478.6 358.4 L1477.6 362.2 L1478.4 365.5 L1477.5 368.0 L1478.2 371.5 L1478.1 373.3 L1478.3 377.2 L1477.9 380.7 L1478.7 383.5 L1478.5 387.0 L1477.9 390.1 L1477.7 393.7 L1477.2 395.5 L1477.4 399.7 L1477.3 401.6 L1478.0 405.3 L1474.0 405.6 L1471.1 407.2 L1467.8 408.0 L1463.7 409.6 L1460.8 411.0 L1456.6 412.4 L1454.9 415.3 L1453.7 418.1 L1449.6 419.2 L1446.6 421.0 L1443.6 422.6 L1440.2 423.2 L1438.0 424.3 L1435.1 425.3 L1431.5 427.1 L1429.4 427.3 L1426.1 428.9 L1423.7 429.6 L1420.7 430.7 L1417.2 431.6 L1413.7 433.9 L1410.1 433.5 L1407.0 434.1 L1403.7 435.3 L1401.1 436.4 L1397.1 437.3 L1395.1 439.6 L1391.0 440.4 L1388.3 440.1 L1385.1 441.0 L1380.9 443.9 L1382.8 446.1 L1383.7 449.6 L1383.7 455.3 L1386.5 457.4 L1390.1 458.2 L1392.3 461.0 L1393.1 465.2 L1393.7 469.6 L1390.9 473.9 L1388.0 474.8 L1384.1 474.7 L1380.9 475.3 L1378.4 476.3 L1373.5 477.1 L1370.9 476.7 L1365.7 476.6 L1362.3 475.3 L1357.8 476.2 L1355.1 476.0 L1351.7 475.1 L1346.6 474.6 L1343.8 473.8 L1339.4 472.4 L1335.8 473.3 L1332.3 473.1 L1327.4 474.3 L1323.7 474.6 L1320.0 473.7 L1315.1 473.1 L1312.6 474.0 L1308.6 473.7 L1305.1 474.6 L1300.5 473.8 L1296.6 472.4 L1295.7 469.1 L1293.7 466.7 L1294.0 463.4 L1295.3 461.2 L1296.6 458.1 L1299.2 455.8 L1300.8 452.7 L1302.3 451.0 L1303.8 448.7 L1304.4 444.7 L1306.6 442.4 L1302.9 438.9 L1300.9 436.7 L1297.9 434.6 L1295.2 432.6Z"/></clipPath><g clip-path="url(#ic31)"><path d="M1292.3 429.6 L1294.2 426.7 L1295.1 423.9 L1299.8 423.0 L1303.5 421.3 L1306.6 421.0 L1309.9 418.9 L1312.4 417.4 L1316.6 416.7 L1319.4 412.4 L1321.9 410.9 L1325.3 410.6 L1328.0 409.6 L1331.7 409.1 L1336.6 408.1 L1340.9 411.0 L1344.9 411.4 L1349.4 411.0 L1352.6 408.9 L1355.5 409.0 L1359.4 406.7 L1363.9 406.2 L1368.0 405.3 L1371.7 406.0 L1375.1 406.7 L1379.4 409.6 L1382.4 408.6 L1386.6 406.7 L1390.2 406.0 L1393.2 403.0 L1396.6 402.4 L1399.7 401.5 L1403.4 400.2 L1406.6 399.6 L1409.2 398.5 L1413.0 397.0 L1415.1 396.7 L1416.6 394.6 L1419.4 391.0 L1420.5 387.3 L1420.8 385.1 L1422.3 382.4 L1423.7 379.5 L1425.1 375.3 L1424.7 370.4 L1423.7 366.7 L1422.3 361.0 L1426.2 359.9 L1429.4 358.1 L1433.5 357.8 L1437.2 358.5 L1440.9 357.4 L1444.6 357.1 L1449.2 357.1 L1452.3 356.7 L1454.8 356.6 L1458.0 354.4 L1460.9 353.9 L1463.9 352.8 L1468.0 353.1 L1471.4 352.4 L1475.4 352.1 L1478.0 352.4 L1478.5 355.8 L1478.6 358.4 L1477.6 362.2 L1478.4 365.5 L1477.5 368.0 L1478.2 371.5 L1478.1 373.3 L1478.3 377.2 L1477.9 380.7 L1478.7 383.5 L1478.5 387.0 L1477.9 390.1 L1477.7 393.7 L1477.2 395.5 L1477.4 399.7 L1477.3 401.6 L1478.0 405.3 L1474.0 405.6 L1471.1 407.2 L1467.8 408.0 L1463.7 409.6 L1460.8 411.0 L1456.6 412.4 L1454.9 415.3 L1453.7 418.1 L1449.6 419.2 L1446.6 421.0 L1443.6 422.6 L1440.2 423.2 L1438.0 424.3 L1435.1 425.3 L1431.5 427.1 L1429.4 427.3 L1426.1 428.9 L1423.7 429.6 L1420.7 430.7 L1417.2 431.6 L1413.7 433.9 L1410.1 433.5 L1407.0 434.1 L1403.7 435.3 L1401.1 436.4 L1397.1 437.3 L1395.1 439.6 L1391.0 440.4 L1388.3 440.1 L1385.1 441.0 L1380.9 443.9 L1382.8 446.1 L1383.7 449.6 L1383.7 455.3 L1386.5 457.4 L1390.1 458.2 L1392.3 461.0 L1393.1 465.2 L1393.7 469.6 L1390.9 473.9 L1388.0 474.8 L1384.1 474.7 L1380.9 475.3 L1378.4 476.3 L1373.5 477.1 L1370.9 476.7 L1365.7 476.6 L1362.3 475.3 L1357.8 476.2 L1355.1 476.0 L1351.7 475.1 L1346.6 474.6 L1343.8 473.8 L1339.4 472.4 L1335.8 473.3 L1332.3 473.1 L1327.4 474.3 L1323.7 474.6 L1320.0 473.7 L1315.1 473.1 L1312.6 474.0 L1308.6 473.7 L1305.1 474.6 L1300.5 473.8 L1296.6 472.4 L1295.7 469.1 L1293.7 466.7 L1294.0 463.4 L1295.3 461.2 L1296.6 458.1 L1299.2 455.8 L1300.8 452.7 L1302.3 451.0 L1303.8 448.7 L1304.4 444.7 L1306.6 442.4 L1302.9 438.9 L1300.9 436.7 L1297.9 434.6 L1295.2 432.6Z" fill="none" stroke="#c8b070" stroke-width="10" filter="url(#sand)"/><path d="M1292.3 429.6 L1294.2 426.7 L1295.1 423.9 L1299.8 423.0 L1303.5 421.3 L1306.6 421.0 L1309.9 418.9 L1312.4 417.4 L1316.6 416.7 L1319.4 412.4 L1321.9 410.9 L1325.3 410.6 L1328.0 409.6 L1331.7 409.1 L1336.6 408.1 L1340.9 411.0 L1344.9 411.4 L1349.4 411.0 L1352.6 408.9 L1355.5 409.0 L1359.4 406.7 L1363.9 406.2 L1368.0 405.3 L1371.7 406.0 L1375.1 406.7 L1379.4 409.6 L1382.4 408.6 L1386.6 406.7 L1390.2 406.0 L1393.2 403.0 L1396.6 402.4 L1399.7 401.5 L1403.4 400.2 L1406.6 399.6 L1409.2 398.5 L1413.0 397.0 L1415.1 396.7 L1416.6 394.6 L1419.4 391.0 L1420.5 387.3 L1420.8 385.1 L1422.3 382.4 L1423.7 379.5 L1425.1 375.3 L1424.7 370.4 L1423.7 366.7 L1422.3 361.0 L1426.2 359.9 L1429.4 358.1 L1433.5 357.8 L1437.2 358.5 L1440.9 357.4 L1444.6 357.1 L1449.2 357.1 L1452.3 356.7 L1454.8 356.6 L1458.0 354.4 L1460.9 353.9 L1463.9 352.8 L1468.0 353.1 L1471.4 352.4 L1475.4 352.1 L1478.0 352.4 L1478.5 355.8 L1478.6 358.4 L1477.6 362.2 L1478.4 365.5 L1477.5 368.0 L1478.2 371.5 L1478.1 373.3 L1478.3 377.2 L1477.9 380.7 L1478.7 383.5 L1478.5 387.0 L1477.9 390.1 L1477.7 393.7 L1477.2 395.5 L1477.4 399.7 L1477.3 401.6 L1478.0 405.3 L1474.0 405.6 L1471.1 407.2 L1467.8 408.0 L1463.7 409.6 L1460.8 411.0 L1456.6 412.4 L1454.9 415.3 L1453.7 418.1 L1449.6 419.2 L1446.6 421.0 L1443.6 422.6 L1440.2 423.2 L1438.0 424.3 L1435.1 425.3 L1431.5 427.1 L1429.4 427.3 L1426.1 428.9 L1423.7 429.6 L1420.7 430.7 L1417.2 431.6 L1413.7 433.9 L1410.1 433.5 L1407.0 434.1 L1403.7 435.3 L1401.1 436.4 L1397.1 437.3 L1395.1 439.6 L1391.0 440.4 L1388.3 440.1 L1385.1 441.0 L1380.9 443.9 L1382.8 446.1 L1383.7 449.6 L1383.7 455.3 L1386.5 457.4 L1390.1 458.2 L1392.3 461.0 L1393.1 465.2 L1393.7 469.6 L1390.9 473.9 L1388.0 474.8 L1384.1 474.7 L1380.9 475.3 L1378.4 476.3 L1373.5 477.1 L1370.9 476.7 L1365.7 476.6 L1362.3 475.3 L1357.8 476.2 L1355.1 476.0 L1351.7 475.1 L1346.6 474.6 L1343.8 473.8 L1339.4 472.4 L1335.8 473.3 L1332.3 473.1 L1327.4 474.3 L1323.7 474.6 L1320.0 473.7 L1315.1 473.1 L1312.6 474.0 L1308.6 473.7 L1305.1 474.6 L1300.5 473.8 L1296.6 472.4 L1295.7 469.1 L1293.7 466.7 L1294.0 463.4 L1295.3 461.2 L1296.6 458.1 L1299.2 455.8 L1300.8 452.7 L1302.3 451.0 L1303.8 448.7 L1304.4 444.7 L1306.6 442.4 L1302.9 438.9 L1300.9 436.7 L1297.9 434.6 L1295.2 432.6Z" fill="none" stroke="#c8ab64" stroke-width="2" opacity="0.8"/></g></g>
<g><path d="M1418.7 366.0 L1419.4 369.6 L1417.3 374.6 L1415.4 377.3 L1413.7 379.6 L1412.9 383.0 L1412.3 386.7 L1413.2 390.4 L1413.7 393.9 L1411.6 393.1 L1411.0 389.6 L1410.1 386.7 L1410.8 382.7 L1411.6 378.9 L1413.2 375.9 L1415.1 373.1 L1417.3 368.1Z" fill="#8a6422" stroke="#8a6422" stroke-width="1" transform="translate(0.3,2.2)"/><path d="M1418.7 366.0 L1419.4 369.6 L1417.3 374.6 L1415.4 377.3 L1413.7 379.6 L1412.9 383.0 L1412.3 386.7 L1413.2 390.4 L1413.7 393.9 L1411.6 393.1 L1411.0 389.6 L1410.1 386.7 L1410.8 382.7 L1411.6 378.9 L1413.2 375.9 L1415.1 373.1 L1417.3 368.1Z" fill="#a89f5d"/><clipPath id="ic32"><path d="M1418.7 366.0 L1419.4 369.6 L1417.3 374.6 L1415.4 377.3 L1413.7 379.6 L1412.9 383.0 L1412.3 386.7 L1413.2 390.4 L1413.7 393.9 L1411.6 393.1 L1411.0 389.6 L1410.1 386.7 L1410.8 382.7 L1411.6 378.9 L1413.2 375.9 L1415.1 373.1 L1417.3 368.1Z"/></clipPath><g clip-path="url(#ic32)"><path d="M1418.7 366.0 L1419.4 369.6 L1417.3 374.6 L1415.4 377.3 L1413.7 379.6 L1412.9 383.0 L1412.3 386.7 L1413.2 390.4 L1413.7 393.9 L1411.6 393.1 L1411.0 389.6 L1410.1 386.7 L1410.8 382.7 L1411.6 378.9 L1413.2 375.9 L1415.1 373.1 L1417.3 368.1Z" fill="none" stroke="#c8b070" stroke-width="16" filter="url(#sand)"/><path d="M1418.7 366.0 L1419.4 369.6 L1417.3 374.6 L1415.4 377.3 L1413.7 379.6 L1412.9 383.0 L1412.3 386.7 L1413.2 390.4 L1413.7 393.9 L1411.6 393.1 L1411.0 389.6 L1410.1 386.7 L1410.8 382.7 L1411.6 378.9 L1413.2 375.9 L1415.1 373.1 L1417.3 368.1Z" fill="none" stroke="#c8ab64" stroke-width="2" opacity="0.8"/></g></g>
<g><path d="M1398.0 445.3 L1402.1 444.4 L1406.6 443.1 L1409.4 442.4 L1412.5 441.3 L1415.1 440.3 L1414.4 442.7 L1410.5 444.3 L1406.6 446.4 L1400.9 447.4Z" fill="#8a6422" stroke="#8a6422" stroke-width="1" transform="translate(0.3,2.2)"/><path d="M1398.0 445.3 L1402.1 444.4 L1406.6 443.1 L1409.4 442.4 L1412.5 441.3 L1415.1 440.3 L1414.4 442.7 L1410.5 444.3 L1406.6 446.4 L1400.9 447.4Z" fill="#a89f5d"/><clipPath id="ic33"><path d="M1398.0 445.3 L1402.1 444.4 L1406.6 443.1 L1409.4 442.4 L1412.5 441.3 L1415.1 440.3 L1414.4 442.7 L1410.5 444.3 L1406.6 446.4 L1400.9 447.4Z"/></clipPath><g clip-path="url(#ic33)"><path d="M1398.0 445.3 L1402.1 444.4 L1406.6 443.1 L1409.4 442.4 L1412.5 441.3 L1415.1 440.3 L1414.4 442.7 L1410.5 444.3 L1406.6 446.4 L1400.9 447.4Z" fill="none" stroke="#c8b070" stroke-width="16" filter="url(#sand)"/><path d="M1398.0 445.3 L1402.1 444.4 L1406.6 443.1 L1409.4 442.4 L1412.5 441.3 L1415.1 440.3 L1414.4 442.7 L1410.5 444.3 L1406.6 446.4 L1400.9 447.4Z" fill="none" stroke="#c8ab64" stroke-width="2" opacity="0.8"/></g></g>
<g transform="translate(0.0,511.0) scale(1.0) translate(-64,-32)"><polygon points="1.1,31.8 8.2,25.5 23.9,30.2 35.7,37.3 54.6,45.9 65.6,52.2 108.0,34.9 111.9,36.5 63.6,63.2" fill="#6b675e" /><polygon points="1.1,31.8 63.6,63.2 111.9,36.5 111.9,37.3 63.6,64.4 1.1,32.6" fill="#3c3a34" /><polygon points="8.2,26.7 23.9,31.4 34.9,37.7 53.0,46.7 64.8,53.0 63.6,60.1 5.9,31.8" fill="#8c887c" /><polygon points="23.9,31.0 33.4,32.6 53.0,21.6 56.5,23.0 45.1,29.4 35.7,34.9 29.4,34.1" fill="#4e4a40" /><polygon points="32.6,32.3 53.0,20.9 56.1,22.4 35.7,34.0" fill="#7e7a6c" /><polygon points="45.1,35.7 67.1,22.4 71.5,24.7 49.1,38.5" fill="#857f72" /><polygon points="49.1,38.5 71.5,24.7 71.5,25.7 49.1,39.5" fill="#4a463c" /><polygon points="53.0,42.0 81.3,27.1 87.2,29.4 57.7,45.5" fill="#8f8a7c" /><polygon points="57.7,45.5 87.2,29.4 87.2,30.5 57.7,46.7" fill="#4a463c" /><polyline points="46.7,36.5 68.7,23.3" fill="none" stroke="#6a665a" stroke-width="0.6" /><polyline points="55.4,43.2 83.6,28.3" fill="none" stroke="#6e6a5e" stroke-width="0.6" /><polygon points="68.7,52.2 94.6,42.0 95.4,44.4 68.7,56.1" fill="#6e6a60" /><polygon points="12.1,34.9 19.9,31.1 19.9,27.9 12.1,31.8" fill="#6a665a" /><polygon points="12.1,34.9 7.9,32.8 7.9,29.7 10.0,29.1 12.1,31.8" fill="#8e8a7a" /><polygon points="12.1,31.8 10.0,29.1 17.8,25.2 19.9,27.9" fill="#c4c0ac" /><polygon points="7.9,29.7 10.0,29.1 17.8,25.2 15.7,25.8" fill="#dedac8" /><polygon points="18.4,37.3 26.2,33.4 26.2,30.3 18.4,34.1" fill="#6a665a" /><polygon points="18.4,37.3 14.2,35.2 14.2,32.0 16.3,31.4 18.4,34.1" fill="#8e8a7a" /><polygon points="18.4,34.1 16.3,31.4 24.0,27.6 26.2,30.3" fill="#c4c0ac" /><polygon points="14.2,32.0 16.3,31.4 24.0,27.6 21.9,28.2" fill="#dedac8" /><ellipse cx="23.9" cy="37.3" rx="4.3" ry="2.5" fill="#55524a" /><ellipse cx="23.9" cy="36.5" rx="4.1" ry="2.4" fill="#c9c9c4" /><ellipse cx="23.5" cy="36.2" rx="2.4" ry="1.3" fill="#dcdcdc" /><polygon points="35.7,45.1 44.1,40.9 44.1,38.3 35.7,42.5" fill="#6a665a" /><polygon points="35.7,45.1 32.2,43.4 32.2,40.7 34.0,40.2 35.7,42.5" fill="#8e8a7a" /><polygon points="35.7,42.5 34.0,40.2 42.4,36.0 44.1,38.3" fill="#c4c0ac" /><polygon points="32.2,40.7 34.0,40.2 42.4,36.0 40.6,36.5" fill="#dedac8" /><polygon points="42.0,48.3 50.4,44.1 50.4,41.4 42.0,45.6" fill="#6a665a" /><polygon points="42.0,48.3 38.5,46.5 38.5,43.9 40.2,43.4 42.0,45.6" fill="#8e8a7a" /><polygon points="42.0,45.6 40.2,43.4 48.7,39.1 50.4,41.4" fill="#c4c0ac" /><polygon points="38.5,43.9 40.2,43.4 48.7,39.1 46.9,39.6" fill="#dedac8" /><polygon points="53.0,55.4 57.2,53.3 57.2,50.9 53.0,53.0" fill="#6a665a" /><polygon points="53.0,55.4 50.2,54.0 50.2,51.6 51.6,51.2 53.0,53.0" fill="#8e8a7a" /><polygon points="53.0,53.0 51.6,51.2 55.8,49.1 57.2,50.9" fill="#c4c0ac" /><polygon points="50.2,51.6 51.6,51.2 55.8,49.1 54.4,49.5" fill="#dedac8" /><polyline points="42.0,49.1 53.0,54.6 60.9,60.1" fill="none" stroke="#2e2c28" stroke-width="1.2" stroke-dasharray="1.5 1.2"/><polyline points="57.7,60.1 67.1,60.9" fill="none" stroke="#d0ccb8" stroke-width="1.0" stroke-dasharray="1 1.5"/><polygon points="89.5,41.6 91.7,29.4 94.5,29.4 96.6,41.6 94.6,42.8 91.5,42.8" fill="#6a675c" /><polyline points="89.9,41.6 91.9,29.8" fill="none" stroke="#e0dccb" stroke-width="1.4" /><polyline points="96.2,41.6 94.3,29.8" fill="none" stroke="#d0ccb8" stroke-width="1.2" /><polyline points="90.6,38.5 95.6,38.5" fill="none" stroke="#e8e4d4" stroke-width="1" /><polyline points="91.0,34.9 95.1,34.9" fill="none" stroke="#e8e4d4" stroke-width="1" /><polyline points="90.4,41.2 95.3,38.1 91.0,35.2" fill="none" stroke="#f0ecdc" stroke-width="0.8" /><polyline points="99.0,42.4 94.6,31.0" fill="none" stroke="#7a766a" stroke-width="1.2" /><polygon points="91.9,27.9 97.4,26.3 100.1,27.9 100.1,30.6 95.0,31.8 91.9,30.6" fill="#8a8678" /><polygon points="91.9,27.9 97.4,26.3 100.1,27.9 95.0,29.3" fill="#c8c4b0" /><polygon points="97.4,29.0 100.1,28.0 100.1,30.4 97.4,31.2" fill="#4e4a40" /><polyline points="94.6,28.6 83.3,9.4" fill="none" stroke="#6e6a5c" stroke-width="2.0" /><polyline points="94.3,28.3 83.1,9.2" fill="none" stroke="#e4e0cc" stroke-width="1.1" /><polyline points="99.0,27.5 86.4,14.9 83.3,9.4" fill="none" stroke="#8e8a7c" stroke-width="0.7" /><polygon points="65.2,51.0 67.3,40.4 70.1,40.4 72.3,51.0 70.3,52.2 67.1,52.2" fill="#6a675c" /><polyline points="65.6,51.0 67.5,40.8" fill="none" stroke="#e0dccb" stroke-width="1.4" /><polyline points="71.9,51.0 69.9,40.8" fill="none" stroke="#d0ccb8" stroke-width="1.2" /><polyline points="66.2,47.9 71.2,47.9" fill="none" stroke="#e8e4d4" stroke-width="1" /><polyline points="66.7,44.4 70.8,44.4" fill="none" stroke="#e8e4d4" stroke-width="1" /><polyline points="66.0,50.6 70.9,47.5 66.7,44.6" fill="none" stroke="#f0ecdc" stroke-width="0.8" /><polyline points="74.6,51.8 70.3,42.0" fill="none" stroke="#7a766a" stroke-width="1.2" /><polygon points="68.7,38.9 74.2,37.3 77.0,38.9 77.0,41.6 71.9,42.8 68.7,41.6" fill="#8a8678" /><polygon points="68.7,38.9 74.2,37.3 77.0,38.9 71.9,40.3" fill="#c8c4b0" /><polygon points="74.2,40.0 77.0,39.0 77.0,41.4 74.2,42.2" fill="#4e4a40" /><polyline points="71.5,39.6 59.3,20.4" fill="none" stroke="#6e6a5c" stroke-width="2.0" /><polyline points="71.1,39.3 59.1,20.2" fill="none" stroke="#e4e0cc" stroke-width="1.1" /><polyline points="75.8,38.5 62.4,25.9 59.3,20.4" fill="none" stroke="#8e8a7c" stroke-width="0.7" /></g><g transform="translate(256.0,573.0) scale(1.0) translate(-64,-32)"><polygon points="1.1,31.8 63.6,0.4 114.3,26.3 108.0,29.8 76.6,14.9 60.9,18.0 38.9,29.4 17.6,37.7" fill="#8d8b84" /><polygon points="1.1,31.8 17.6,37.7 38.9,29.4 38.9,30.4 17.6,38.9 1.1,32.7" fill="#55534c" /><polygon points="60.9,18.0 76.6,14.9 108.0,29.8 108.0,30.8 76.6,15.9 60.9,19.0" fill="#5a5850" /><polygon points="42.0,21.6 53.0,20.4 71.9,37.3 68.7,40.4 48.3,26.7 45.1,31.0 38.9,29.4" fill="#8f8c80" /><polygon points="48.3,26.7 68.7,40.4 71.9,37.3 71.9,38.4 68.7,41.5 48.3,27.7" fill="#55514a" /><polygon points="48.3,23.9 53.0,22.4 68.7,36.5 67.1,38.1" fill="#a8a498" /><polygon points="56.9,19.2 64.8,18.3 89.1,32.6 84.4,36.5" fill="#8f8c80" /><polygon points="56.9,19.2 84.4,36.5 89.1,32.6 89.1,33.7 84.4,37.6 56.9,20.2" fill="#55514a" /><polygon points="81.3,31.0 88.4,31.8 88.4,34.9 84.4,36.5 81.3,34.9" fill="#c4c0ac" /><polyline points="66.4,20.0 74.2,16.9" fill="none" stroke="#7a766a" stroke-width="1.2" /><polyline points="38.9,31.0 56.1,42.4" fill="none" stroke="#3a3832" stroke-width="0.8" stroke-dasharray="1.2 1.5"/><ellipse cx="57.7" cy="10.6" rx="4.9" ry="2.8" fill="#5e5c54" /><ellipse cx="57.7" cy="9.6" rx="4.7" ry="2.7" fill="#c6c6c2" /><ellipse cx="56.9" cy="9.0" rx="2.8" ry="1.4" fill="#dcdcdc" /><polygon points="60.9,5.5 69.3,1.2 69.3,-1.4 60.9,2.8" fill="#6a665a" /><polygon points="60.9,5.5 57.3,3.7 57.3,1.0 59.1,0.5 60.9,2.8" fill="#8e8a7a" /><polygon points="60.9,2.8 59.1,0.5 67.5,-3.7 69.3,-1.4" fill="#c4c0ac" /><polygon points="57.3,1.0 59.1,0.5 67.5,-3.7 65.8,-3.2" fill="#dedac8" /><polygon points="67.1,8.2 75.6,4.0 75.6,1.3 67.1,5.5" fill="#6a665a" /><polygon points="67.1,8.2 63.6,6.5 63.6,3.8 65.4,3.3 67.1,5.5" fill="#8e8a7a" /><polygon points="67.1,5.5 65.4,3.3 73.8,-0.9 75.6,1.3" fill="#c4c0ac" /><polygon points="63.6,3.8 65.4,3.3 73.8,-0.9 72.1,-0.4" fill="#dedac8" /><polygon points="13.7,32.6 22.8,28.0 22.8,25.5 13.7,30.1" fill="#6a665a" /><polygon points="13.7,32.6 10.2,30.8 10.2,28.3 12.0,27.8 13.7,30.1" fill="#8e8a7a" /><polygon points="13.7,30.1 12.0,27.8 21.1,23.2 22.8,25.5" fill="#c4c0ac" /><polygon points="10.2,28.3 12.0,27.8 21.1,23.2 19.3,23.7" fill="#dedac8" /><polygon points="17.6,34.9 26.8,30.4 26.8,27.8 17.6,32.4" fill="#6a665a" /><polygon points="17.6,34.9 14.1,33.2 14.1,30.7 15.9,30.2 17.6,32.4" fill="#8e8a7a" /><polygon points="17.6,32.4 15.9,30.2 25.0,25.6 26.8,27.8" fill="#c4c0ac" /><polygon points="14.1,30.7 15.9,30.2 25.0,25.6 23.3,26.1" fill="#dedac8" /><polyline points="82.9,15.3 98.6,22.4" fill="none" stroke="#2e2c28" stroke-width="1.6" stroke-dasharray="1.2 1.2"/><polyline points="83.6,17.6 97.0,23.9" fill="none" stroke="#d8d4c0" stroke-width="1.0" stroke-dasharray="1 1.6"/><polygon points="28.3,25.5 30.4,14.5 33.2,14.5 35.3,25.5 33.4,26.7 30.2,26.7" fill="#6a675c" /><polyline points="28.6,25.5 30.6,14.9" fill="none" stroke="#e0dccb" stroke-width="1.4" /><polyline points="34.9,25.5 33.0,14.9" fill="none" stroke="#d0ccb8" stroke-width="1.2" /><polyline points="29.3,22.4 34.3,22.4" fill="none" stroke="#e8e4d4" stroke-width="1" /><polyline points="29.7,18.8 33.8,18.8" fill="none" stroke="#e8e4d4" stroke-width="1" /><polyline points="29.1,25.1 34.0,22.0 29.7,19.1" fill="none" stroke="#f0ecdc" stroke-width="0.8" /><polyline points="37.7,26.3 33.4,16.1" fill="none" stroke="#7a766a" stroke-width="1.2" /><polygon points="30.2,12.9 35.7,11.4 38.5,12.9 38.5,15.7 33.4,16.9 30.2,15.7" fill="#8a8678" /><polygon points="30.2,12.9 35.7,11.4 38.5,12.9 33.4,14.3" fill="#c8c4b0" /><polygon points="35.7,14.1 38.5,13.1 38.5,15.4 35.7,16.2" fill="#4e4a40" /><polyline points="33.0,13.7 18.4,4.3" fill="none" stroke="#6e6a5c" stroke-width="2.0" /><polyline points="32.6,13.4 18.3,4.1" fill="none" stroke="#e4e0cc" stroke-width="1.1" /><polyline points="37.3,12.5 21.6,9.8 18.4,4.3" fill="none" stroke="#8e8a7c" stroke-width="0.7" /><polygon points="100.5,27.1 102.7,14.1 105.5,14.1 107.6,27.1 105.6,28.3 102.5,28.3" fill="#6a675c" /><polyline points="100.9,27.1 102.9,14.5" fill="none" stroke="#e0dccb" stroke-width="1.4" /><polyline points="107.2,27.1 105.3,14.5" fill="none" stroke="#d0ccb8" stroke-width="1.2" /><polyline points="101.6,23.9 106.6,23.9" fill="none" stroke="#e8e4d4" stroke-width="1" /><polyline points="102.0,20.4 106.1,20.4" fill="none" stroke="#e8e4d4" stroke-width="1" /><polyline points="101.4,26.7 106.3,23.5 102.0,20.6" fill="none" stroke="#f0ecdc" stroke-width="0.8" /><polyline points="110.0,27.9 105.6,15.7" fill="none" stroke="#7a766a" stroke-width="1.2" /><polygon points="104.1,12.5 109.6,11.0 112.3,12.5 112.3,15.3 107.2,16.5 104.1,15.3" fill="#8a8678" /><polygon points="104.1,12.5 109.6,11.0 112.3,12.5 107.2,14.0" fill="#c8c4b0" /><polygon points="109.6,13.7 112.3,12.7 112.3,15.1 109.6,15.8" fill="#4e4a40" /><polyline points="106.8,13.3 95.4,2.7" fill="none" stroke="#6e6a5c" stroke-width="2.0" /><polyline points="106.4,13.0 95.3,2.6" fill="none" stroke="#e4e0cc" stroke-width="1.1" /><polyline points="111.1,12.1 98.6,8.2 95.4,2.7" fill="none" stroke="#8e8a7c" stroke-width="0.7" /></g><g transform="translate(1150.0,449.0) scale(1.0) translate(-64,-32)"><polygon points="1.1,31.8 8.2,25.5 23.9,30.2 35.7,37.3 54.6,45.9 65.6,52.2 108.0,34.9 111.9,36.5 63.6,63.2" fill="#6b675e" /><polygon points="1.1,31.8 63.6,63.2 111.9,36.5 111.9,37.3 63.6,64.4 1.1,32.6" fill="#3c3a34" /><polygon points="8.2,26.7 23.9,31.4 34.9,37.7 53.0,46.7 64.8,53.0 63.6,60.1 5.9,31.8" fill="#8c887c" /><polygon points="23.9,31.0 33.4,32.6 53.0,21.6 56.5,23.0 45.1,29.4 35.7,34.9 29.4,34.1" fill="#4e4a40" /><polygon points="32.6,32.3 53.0,20.9 56.1,22.4 35.7,34.0" fill="#7e7a6c" /><polygon points="45.1,35.7 67.1,22.4 71.5,24.7 49.1,38.5" fill="#857f72" /><polygon points="49.1,38.5 71.5,24.7 71.5,25.7 49.1,39.5" fill="#4a463c" /><polygon points="53.0,42.0 81.3,27.1 87.2,29.4 57.7,45.5" fill="#8f8a7c" /><polygon points="57.7,45.5 87.2,29.4 87.2,30.5 57.7,46.7" fill="#4a463c" /><polyline points="46.7,36.5 68.7,23.3" fill="none" stroke="#6a665a" stroke-width="0.6" /><polyline points="55.4,43.2 83.6,28.3" fill="none" stroke="#6e6a5e" stroke-width="0.6" /><polygon points="68.7,52.2 94.6,42.0 95.4,44.4 68.7,56.1" fill="#6e6a60" /><polygon points="12.1,34.9 19.9,31.1 19.9,27.9 12.1,31.8" fill="#6a665a" /><polygon points="12.1,34.9 7.9,32.8 7.9,29.7 10.0,29.1 12.1,31.8" fill="#8e8a7a" /><polygon points="12.1,31.8 10.0,29.1 17.8,25.2 19.9,27.9" fill="#c4c0ac" /><polygon points="7.9,29.7 10.0,29.1 17.8,25.2 15.7,25.8" fill="#dedac8" /><polygon points="18.4,37.3 26.2,33.4 26.2,30.3 18.4,34.1" fill="#6a665a" /><polygon points="18.4,37.3 14.2,35.2 14.2,32.0 16.3,31.4 18.4,34.1" fill="#8e8a7a" /><polygon points="18.4,34.1 16.3,31.4 24.0,27.6 26.2,30.3" fill="#c4c0ac" /><polygon points="14.2,32.0 16.3,31.4 24.0,27.6 21.9,28.2" fill="#dedac8" /><ellipse cx="23.9" cy="37.3" rx="4.3" ry="2.5" fill="#55524a" /><ellipse cx="23.9" cy="36.5" rx="4.1" ry="2.4" fill="#c9c9c4" /><ellipse cx="23.5" cy="36.2" rx="2.4" ry="1.3" fill="#dcdcdc" /><polygon points="35.7,45.1 44.1,40.9 44.1,38.3 35.7,42.5" fill="#6a665a" /><polygon points="35.7,45.1 32.2,43.4 32.2,40.7 34.0,40.2 35.7,42.5" fill="#8e8a7a" /><polygon points="35.7,42.5 34.0,40.2 42.4,36.0 44.1,38.3" fill="#c4c0ac" /><polygon points="32.2,40.7 34.0,40.2 42.4,36.0 40.6,36.5" fill="#dedac8" /><polygon points="42.0,48.3 50.4,44.1 50.4,41.4 42.0,45.6" fill="#6a665a" /><polygon points="42.0,48.3 38.5,46.5 38.5,43.9 40.2,43.4 42.0,45.6" fill="#8e8a7a" /><polygon points="42.0,45.6 40.2,43.4 48.7,39.1 50.4,41.4" fill="#c4c0ac" /><polygon points="38.5,43.9 40.2,43.4 48.7,39.1 46.9,39.6" fill="#dedac8" /><polygon points="53.0,55.4 57.2,53.3 57.2,50.9 53.0,53.0" fill="#6a665a" /><polygon points="53.0,55.4 50.2,54.0 50.2,51.6 51.6,51.2 53.0,53.0" fill="#8e8a7a" /><polygon points="53.0,53.0 51.6,51.2 55.8,49.1 57.2,50.9" fill="#c4c0ac" /><polygon points="50.2,51.6 51.6,51.2 55.8,49.1 54.4,49.5" fill="#dedac8" /><polyline points="42.0,49.1 53.0,54.6 60.9,60.1" fill="none" stroke="#2e2c28" stroke-width="1.2" stroke-dasharray="1.5 1.2"/><polyline points="57.7,60.1 67.1,60.9" fill="none" stroke="#d0ccb8" stroke-width="1.0" stroke-dasharray="1 1.5"/><polygon points="89.5,41.6 91.7,29.4 94.5,29.4 96.6,41.6 94.6,42.8 91.5,42.8" fill="#6a675c" /><polyline points="89.9,41.6 91.9,29.8" fill="none" stroke="#e0dccb" stroke-width="1.4" /><polyline points="96.2,41.6 94.3,29.8" fill="none" stroke="#d0ccb8" stroke-width="1.2" /><polyline points="90.6,38.5 95.6,38.5" fill="none" stroke="#e8e4d4" stroke-width="1" /><polyline points="91.0,34.9 95.1,34.9" fill="none" stroke="#e8e4d4" stroke-width="1" /><polyline points="90.4,41.2 95.3,38.1 91.0,35.2" fill="none" stroke="#f0ecdc" stroke-width="0.8" /><polyline points="99.0,42.4 94.6,31.0" fill="none" stroke="#7a766a" stroke-width="1.2" /><polygon points="91.9,27.9 97.4,26.3 100.1,27.9 100.1,30.6 95.0,31.8 91.9,30.6" fill="#8a8678" /><polygon points="91.9,27.9 97.4,26.3 100.1,27.9 95.0,29.3" fill="#c8c4b0" /><polygon points="97.4,29.0 100.1,28.0 100.1,30.4 97.4,31.2" fill="#4e4a40" /><polyline points="94.6,28.6 83.3,9.4" fill="none" stroke="#6e6a5c" stroke-width="2.0" /><polyline points="94.3,28.3 83.1,9.2" fill="none" stroke="#e4e0cc" stroke-width="1.1" /><polyline points="99.0,27.5 86.4,14.9 83.3,9.4" fill="none" stroke="#8e8a7c" stroke-width="0.7" /><polygon points="65.2,51.0 67.3,40.4 70.1,40.4 72.3,51.0 70.3,52.2 67.1,52.2" fill="#6a675c" /><polyline points="65.6,51.0 67.5,40.8" fill="none" stroke="#e0dccb" stroke-width="1.4" /><polyline points="71.9,51.0 69.9,40.8" fill="none" stroke="#d0ccb8" stroke-width="1.2" /><polyline points="66.2,47.9 71.2,47.9" fill="none" stroke="#e8e4d4" stroke-width="1" /><polyline points="66.7,44.4 70.8,44.4" fill="none" stroke="#e8e4d4" stroke-width="1" /><polyline points="66.0,50.6 70.9,47.5 66.7,44.6" fill="none" stroke="#f0ecdc" stroke-width="0.8" /><polyline points="74.6,51.8 70.3,42.0" fill="none" stroke="#7a766a" stroke-width="1.2" /><polygon points="68.7,38.9 74.2,37.3 77.0,38.9 77.0,41.6 71.9,42.8 68.7,41.6" fill="#8a8678" /><polygon points="68.7,38.9 74.2,37.3 77.0,38.9 71.9,40.3" fill="#c8c4b0" /><polygon points="74.2,40.0 77.0,39.0 77.0,41.4 74.2,42.2" fill="#4e4a40" /><polyline points="71.5,39.6 59.3,20.4" fill="none" stroke="#6e6a5c" stroke-width="2.0" /><polyline points="71.1,39.3 59.1,20.2" fill="none" stroke="#e4e0cc" stroke-width="1.1" /><polyline points="75.8,38.5 62.4,25.9 59.3,20.4" fill="none" stroke="#8e8a7c" stroke-width="0.7" /></g><g transform="translate(1086.0,480.0) scale(1.0) translate(-64,-32)"><polygon points="12.1,34.9 16.9,32.6 35.7,42.0 53.0,51.4 64.8,52.2 53.0,53.9 45.1,52.2 27.9,43.6" fill="url(#chk)" /><polygon points="85.2,40.4 90.7,37.3 97.0,34.9 97.8,37.3 89.1,42.8" fill="url(#chk)" /><polygon points="51.4,29.4 65.6,23.9 76.6,29.4 62.4,40.4 53.0,42.0" fill="#969286" /><polygon points="62.4,24.7 66.4,23.1 73.4,27.9 71.1,30.2" fill="url(#chk)" /><ellipse cx="21.6" cy="26.3" rx="4.6" ry="7.9" fill="#474d1f" /><ellipse cx="21.7" cy="28.6" rx="1.7" ry="2.7" fill="#585d28" /><ellipse cx="20.9" cy="24.3" rx="1.4" ry="3.0" fill="#39401a" /><ellipse cx="21.5" cy="27.7" rx="2.3" ry="2.5" fill="#696e37" /><ellipse cx="22.4" cy="23.0" rx="1.9" ry="2.1" fill="#585d28" /><ellipse cx="20.0" cy="22.5" rx="1.8" ry="2.8" fill="#39401a" /><ellipse cx="66.4" cy="5.9" rx="4.3" ry="6.7" fill="#474d1f" /><ellipse cx="66.4" cy="6.8" rx="1.6" ry="1.8" fill="#585d28" /><ellipse cx="67.7" cy="6.1" rx="2.1" ry="2.5" fill="#39401a" /><ellipse cx="66.5" cy="3.3" rx="1.8" ry="1.9" fill="#696e37" /><ellipse cx="66.8" cy="6.6" rx="1.5" ry="2.6" fill="#585d28" /><ellipse cx="67.3" cy="2.4" rx="2.0" ry="1.9" fill="#39401a" /><polygon points="41.2,14.1 46.3,6.3 52.6,18.8 52.6,24.7 42.0,19.6" fill="#b8a683" /><polygon points="52.6,18.8 65.6,13.7 65.6,21.6 53.0,25.9" fill="#c4baa5" /><polygon points="46.3,6.3 59.3,2.3 65.6,13.7 52.6,18.8" fill="#513a2d" /><polygon points="46.3,6.3 59.3,2.3 60.9,5.5 48.3,9.8" fill="#694d3a" /><polyline points="54.6,23.9 54.6,21.1" fill="none" stroke="#403229" stroke-width="0.9" /><polyline points="57.7,22.9 57.7,20.0" fill="none" stroke="#403229" stroke-width="0.9" /><polyline points="60.9,21.8 60.9,18.9" fill="none" stroke="#403229" stroke-width="0.9" /><polyline points="64.0,20.7 64.0,17.9" fill="none" stroke="#403229" stroke-width="0.9" /><polyline points="43.8,19.0 43.8,16.7" fill="none" stroke="#5b4530" stroke-width="0.8" /><polyline points="47.3,20.7 47.3,18.4" fill="none" stroke="#5b4530" stroke-width="0.8" /><polyline points="50.8,22.4 50.8,20.1" fill="none" stroke="#5b4530" stroke-width="0.8" /><polygon points="44.4,6.6 45.9,6.6 45.9,2.7 44.4,2.7" fill="#baac8a" /><polygon points="59.3,2.7 60.9,2.7 60.9,-1.2 59.3,-1.2" fill="#ac9e8a" /><polygon points="66.4,17.6 80.5,25.5 80.5,31.0 66.4,23.1" fill="#c6c2b8" /><polygon points="67.1,13.7 73.4,8.2 95.4,19.2 90.7,29.4 76.6,21.6" fill="#352e2d" /><polygon points="73.4,8.2 95.4,19.2 94.3,21.6 72.3,10.6" fill="#473e3e" /><polyline points="68.1,22.7 68.1,20.4" fill="none" stroke="#494540" stroke-width="0.8" /><polyline points="71.7,24.7 71.7,22.3" fill="none" stroke="#494540" stroke-width="0.8" /><polyline points="75.2,26.6 75.2,24.3" fill="none" stroke="#494540" stroke-width="0.8" /><polyline points="78.7,28.6 78.7,26.2" fill="none" stroke="#494540" stroke-width="0.8" /><polygon points="89.9,29.4 100.1,34.9 106.4,31.8 106.4,36.5 100.9,38.9 89.9,33.4" fill="#baaf9e" /><polygon points="92.3,29.4 99.4,25.5 106.8,31.4 100.1,35.3" fill="#3c3032" /><polyline points="89.9,29.8 94.6,23.9 96.2,25.1" fill="none" stroke="#ac907c" stroke-width="1.0" /><ellipse cx="107.2" cy="22.4" rx="9.8" ry="7.9" fill="#474d1f" /><ellipse cx="104.0" cy="19.1" rx="4.5" ry="3.1" fill="#585d28" /><ellipse cx="106.9" cy="17.5" rx="3.0" ry="2.5" fill="#39401a" /><ellipse cx="111.1" cy="20.4" rx="4.7" ry="2.1" fill="#696e37" /><ellipse cx="104.5" cy="22.0" rx="4.0" ry="2.6" fill="#585d28" /><ellipse cx="109.9" cy="21.8" rx="3.5" ry="3.0" fill="#39401a" /><polygon points="25.5,27.1 48.3,37.7 53.0,34.9 54.6,42.0 49.1,47.1 25.5,35.3" fill="#c8c6bd" /><polygon points="48.3,37.7 53.0,34.9 54.6,42.0 49.1,47.1" fill="#9b978d" /><polygon points="26.3,25.5 32.6,20.8 39.6,18.8 53.0,27.1 48.3,36.9 34.9,30.2" fill="#303a4a" /><polygon points="32.6,20.8 39.6,18.8 53.0,27.1 52.2,29.0" fill="#414d60" /><polyline points="34.9,21.6 37.3,29.4" fill="none" stroke="#242d3a" stroke-width="1.0" /><polyline points="27.5,34.9 27.5,32.2" fill="none" stroke="#242429" stroke-width="1.0" /><polyline points="31.4,36.9 31.4,34.2" fill="none" stroke="#242429" stroke-width="1.0" /><polyline points="35.3,38.8 35.3,36.1" fill="none" stroke="#242429" stroke-width="1.0" /><polyline points="39.3,40.8 39.3,38.1" fill="none" stroke="#242429" stroke-width="1.0" /><polyline points="43.2,42.7 43.2,40.1" fill="none" stroke="#242429" stroke-width="1.0" /><polyline points="47.1,44.7 47.1,42.0" fill="none" stroke="#242429" stroke-width="1.0" /><polyline points="27.5,29.0 27.5,27.0" fill="none" stroke="#323237" stroke-width="0.9" /><polyline points="31.4,31.0 31.4,28.9" fill="none" stroke="#323237" stroke-width="0.9" /><polyline points="35.3,32.9 35.3,30.9" fill="none" stroke="#323237" stroke-width="0.9" /><polyline points="39.3,34.9 39.3,32.8" fill="none" stroke="#323237" stroke-width="0.9" /><polyline points="43.2,36.9 43.2,34.8" fill="none" stroke="#323237" stroke-width="0.9" /><polyline points="47.1,38.8 47.1,36.8" fill="none" stroke="#323237" stroke-width="0.9" /><polygon points="29.8,20.4 31.4,20.4 31.4,16.5 29.8,16.5" fill="#bab6ac" /><polygon points="66.4,48.3 91.5,34.5 91.5,39.6 67.1,53.0" fill="#a89075" /><polygon points="51.4,45.1 57.7,51.4 66.4,48.3 67.1,53.0 56.1,53.0 50.6,48.3" fill="#5b4030" /><polygon points="51.4,45.1 80.5,28.6 91.5,33.8 65.6,48.7 57.7,51.8" fill="#35261d" /><polygon points="80.5,28.6 91.5,33.8 89.9,35.7 78.9,30.6" fill="#4a372d" /><polygon points="61.3,43.6 62.4,41.1 63.5,43.1 63.4,44.5" fill="#ac9075" /><polygon points="62.1,42.9 62.9,42.8 62.9,43.9 62.1,44.0" fill="#402d22" /><polygon points="67.6,40.4 68.7,37.9 69.8,40.0 69.7,41.4" fill="#ac9075" /><polygon points="68.4,39.8 69.2,39.6 69.2,40.7 68.4,40.9" fill="#402d22" /><polygon points="73.9,37.3 75.0,34.8 76.1,36.8 75.9,38.2" fill="#ac9075" /><polygon points="74.7,36.7 75.5,36.5 75.5,37.6 74.7,37.8" fill="#402d22" /><polygon points="80.2,34.1 81.3,31.6 82.4,33.7 82.2,35.1" fill="#ac9075" /><polygon points="81.0,33.5 81.8,33.4 81.8,34.5 81.0,34.6" fill="#402d22" /><polyline points="69.2,50.5 69.2,48.1" fill="none" stroke="#402d22" stroke-width="0.9" /><polyline points="73.2,48.2 73.2,45.9" fill="none" stroke="#402d22" stroke-width="0.9" /><polyline points="77.3,46.0 77.3,43.7" fill="none" stroke="#402d22" stroke-width="0.9" /><polyline points="81.4,43.8 81.4,41.4" fill="none" stroke="#402d22" stroke-width="0.9" /><polyline points="85.4,41.6 85.4,39.2" fill="none" stroke="#402d22" stroke-width="0.9" /><polyline points="89.5,39.3 89.5,37.0" fill="none" stroke="#402d22" stroke-width="0.9" /><polygon points="57.7,52.2 65.6,51.4 64.8,53.0 59.3,53.4" fill="url(#chk)" /></g>
<path d="M1030 480L1088 450.5L1146.5 480L1088 509.5Z" fill="none" stroke="#ffff00" stroke-width="1.700"/>
</svg>
<div class="region" style="left:510px;top:467px">The Aleutians</div>
<div class="lbl" style="left:1042px;top:508px">Dutch Harbor</div>
<div class="lbl" style="left:237px;top:603px">Kiska</div>
<div class="lbl" style="left:-14px;top:539px">Attu</div>
</div>
<div id="prev"><svg width="128" height="90" viewBox="0 -13 128 90"><polygon points="1,32 64,0.3 127,32 64,63.7" fill="#c5c5b9"/><polygon points="34.9,34.9 80.5,9.0 104.1,20.8 104.1,33.4 68.7,52.2 53.0,45.1" fill="#2e8fc1" /><polygon points="1.1,31.8 8.2,25.5 23.9,30.2 35.7,37.3 54.6,45.9 65.6,52.2 108.0,34.9 111.9,36.5 63.6,63.2" fill="#6b675e" /><polygon points="1.1,31.8 63.6,63.2 111.9,36.5 111.9,37.3 63.6,64.4 1.1,32.6" fill="#3c3a34" /><polygon points="8.2,26.7 23.9,31.4 34.9,37.7 53.0,46.7 64.8,53.0 63.6,60.1 5.9,31.8" fill="#8c887c" /><polygon points="23.9,31.0 33.4,32.6 53.0,21.6 56.5,23.0 45.1,29.4 35.7,34.9 29.4,34.1" fill="#4e4a40" /><polygon points="32.6,32.3 53.0,20.9 56.1,22.4 35.7,34.0" fill="#7e7a6c" /><polygon points="45.1,35.7 67.1,22.4 71.5,24.7 49.1,38.5" fill="#857f72" /><polygon points="49.1,38.5 71.5,24.7 71.5,25.7 49.1,39.5" fill="#4a463c" /><polygon points="53.0,42.0 81.3,27.1 87.2,29.4 57.7,45.5" fill="#8f8a7c" /><polygon points="57.7,45.5 87.2,29.4 87.2,30.5 57.7,46.7" fill="#4a463c" /><polyline points="46.7,36.5 68.7,23.3" fill="none" stroke="#6a665a" stroke-width="0.6" /><polyline points="55.4,43.2 83.6,28.3" fill="none" stroke="#6e6a5e" stroke-width="0.6" /><polygon points="68.7,52.2 94.6,42.0 95.4,44.4 68.7,56.1" fill="#6e6a60" /><polygon points="12.1,34.9 19.9,31.1 19.9,27.9 12.1,31.8" fill="#6a665a" /><polygon points="12.1,34.9 7.9,32.8 7.9,29.7 10.0,29.1 12.1,31.8" fill="#8e8a7a" /><polygon points="12.1,31.8 10.0,29.1 17.8,25.2 19.9,27.9" fill="#c4c0ac" /><polygon points="7.9,29.7 10.0,29.1 17.8,25.2 15.7,25.8" fill="#dedac8" /><polygon points="18.4,37.3 26.2,33.4 26.2,30.3 18.4,34.1" fill="#6a665a" /><polygon points="18.4,37.3 14.2,35.2 14.2,32.0 16.3,31.4 18.4,34.1" fill="#8e8a7a" /><polygon points="18.4,34.1 16.3,31.4 24.0,27.6 26.2,30.3" fill="#c4c0ac" /><polygon points="14.2,32.0 16.3,31.4 24.0,27.6 21.9,28.2" fill="#dedac8" /><ellipse cx="23.9" cy="37.3" rx="4.3" ry="2.5" fill="#55524a" /><ellipse cx="23.9" cy="36.5" rx="4.1" ry="2.4" fill="#c9c9c4" /><ellipse cx="23.5" cy="36.2" rx="2.4" ry="1.3" fill="#dcdcdc" /><polygon points="35.7,45.1 44.1,40.9 44.1,38.3 35.7,42.5" fill="#6a665a" /><polygon points="35.7,45.1 32.2,43.4 32.2,40.7 34.0,40.2 35.7,42.5" fill="#8e8a7a" /><polygon points="35.7,42.5 34.0,40.2 42.4,36.0 44.1,38.3" fill="#c4c0ac" /><polygon points="32.2,40.7 34.0,40.2 42.4,36.0 40.6,36.5" fill="#dedac8" /><polygon points="42.0,48.3 50.4,44.1 50.4,41.4 42.0,45.6" fill="#6a665a" /><polygon points="42.0,48.3 38.5,46.5 38.5,43.9 40.2,43.4 42.0,45.6" fill="#8e8a7a" /><polygon points="42.0,45.6 40.2,43.4 48.7,39.1 50.4,41.4" fill="#c4c0ac" /><polygon points="38.5,43.9 40.2,43.4 48.7,39.1 46.9,39.6" fill="#dedac8" /><polygon points="53.0,55.4 57.2,53.3 57.2,50.9 53.0,53.0" fill="#6a665a" /><polygon points="53.0,55.4 50.2,54.0 50.2,51.6 51.6,51.2 53.0,53.0" fill="#8e8a7a" /><polygon points="53.0,53.0 51.6,51.2 55.8,49.1 57.2,50.9" fill="#c4c0ac" /><polygon points="50.2,51.6 51.6,51.2 55.8,49.1 54.4,49.5" fill="#dedac8" /><polyline points="42.0,49.1 53.0,54.6 60.9,60.1" fill="none" stroke="#2e2c28" stroke-width="1.2" stroke-dasharray="1.5 1.2"/><polyline points="57.7,60.1 67.1,60.9" fill="none" stroke="#d0ccb8" stroke-width="1.0" stroke-dasharray="1 1.5"/><polygon points="89.5,41.6 91.7,29.4 94.5,29.4 96.6,41.6 94.6,42.8 91.5,42.8" fill="#6a675c" /><polyline points="89.9,41.6 91.9,29.8" fill="none" stroke="#e0dccb" stroke-width="1.4" /><polyline points="96.2,41.6 94.3,29.8" fill="none" stroke="#d0ccb8" stroke-width="1.2" /><polyline points="90.6,38.5 95.6,38.5" fill="none" stroke="#e8e4d4" stroke-width="1" /><polyline points="91.0,34.9 95.1,34.9" fill="none" stroke="#e8e4d4" stroke-width="1" /><polyline points="90.4,41.2 95.3,38.1 91.0,35.2" fill="none" stroke="#f0ecdc" stroke-width="0.8" /><polyline points="99.0,42.4 94.6,31.0" fill="none" stroke="#7a766a" stroke-width="1.2" /><polygon points="91.9,27.9 97.4,26.3 100.1,27.9 100.1,30.6 95.0,31.8 91.9,30.6" fill="#8a8678" /><polygon points="91.9,27.9 97.4,26.3 100.1,27.9 95.0,29.3" fill="#c8c4b0" /><polygon points="97.4,29.0 100.1,28.0 100.1,30.4 97.4,31.2" fill="#4e4a40" /><polyline points="94.6,28.6 83.3,9.4" fill="none" stroke="#6e6a5c" stroke-width="2.0" /><polyline points="94.3,28.3 83.1,9.2" fill="none" stroke="#e4e0cc" stroke-width="1.1" /><polyline points="99.0,27.5 86.4,14.9 83.3,9.4" fill="none" stroke="#8e8a7c" stroke-width="0.7" /><polygon points="65.2,51.0 67.3,40.4 70.1,40.4 72.3,51.0 70.3,52.2 67.1,52.2" fill="#6a675c" /><polyline points="65.6,51.0 67.5,40.8" fill="none" stroke="#e0dccb" stroke-width="1.4" /><polyline points="71.9,51.0 69.9,40.8" fill="none" stroke="#d0ccb8" stroke-width="1.2" /><polyline points="66.2,47.9 71.2,47.9" fill="none" stroke="#e8e4d4" stroke-width="1" /><polyline points="66.7,44.4 70.8,44.4" fill="none" stroke="#e8e4d4" stroke-width="1" /><polyline points="66.0,50.6 70.9,47.5 66.7,44.6" fill="none" stroke="#f0ecdc" stroke-width="0.8" /><polyline points="74.6,51.8 70.3,42.0" fill="none" stroke="#7a766a" stroke-width="1.2" /><polygon points="68.7,38.9 74.2,37.3 77.0,38.9 77.0,41.6 71.9,42.8 68.7,41.6" fill="#8a8678" /><polygon points="68.7,38.9 74.2,37.3 77.0,38.9 71.9,40.3" fill="#c8c4b0" /><polygon points="74.2,40.0 77.0,39.0 77.0,41.4 74.2,42.2" fill="#4e4a40" /><polyline points="71.5,39.6 59.3,20.4" fill="none" stroke="#6e6a5c" stroke-width="2.0" /><polyline points="71.1,39.3 59.1,20.2" fill="none" stroke="#e4e0cc" stroke-width="1.1" /><polyline points="75.8,38.5 62.4,25.9 59.3,20.4" fill="none" stroke="#8e8a7c" stroke-width="0.7" /></svg></div>
<div id="list">
<div class="it" style="top:0px"><svg width="128" height="64" viewBox="0 0 128 64"><polygon points="1,32 64,0.3 127,32 64,63.7" fill="#c5c5b9"/><polygon points="34.9,34.9 80.5,9.0 104.1,20.8 104.1,33.4 68.7,52.2 53.0,45.1" fill="#2e8fc1" /><polygon points="1.1,31.8 8.2,25.5 23.9,30.2 35.7,37.3 54.6,45.9 65.6,52.2 108.0,34.9 111.9,36.5 63.6,63.2" fill="#6b675e" /><polygon points="1.1,31.8 63.6,63.2 111.9,36.5 111.9,37.3 63.6,64.4 1.1,32.6" fill="#3c3a34" /><polygon points="8.2,26.7 23.9,31.4 34.9,37.7 53.0,46.7 64.8,53.0 63.6,60.1 5.9,31.8" fill="#8c887c" /><polygon points="23.9,31.0 33.4,32.6 53.0,21.6 56.5,23.0 45.1,29.4 35.7,34.9 29.4,34.1" fill="#4e4a40" /><polygon points="32.6,32.3 53.0,20.9 56.1,22.4 35.7,34.0" fill="#7e7a6c" /><polygon points="45.1,35.7 67.1,22.4 71.5,24.7 49.1,38.5" fill="#857f72" /><polygon points="49.1,38.5 71.5,24.7 71.5,25.7 49.1,39.5" fill="#4a463c" /><polygon points="53.0,42.0 81.3,27.1 87.2,29.4 57.7,45.5" fill="#8f8a7c" /><polygon points="57.7,45.5 87.2,29.4 87.2,30.5 57.7,46.7" fill="#4a463c" /><polyline points="46.7,36.5 68.7,23.3" fill="none" stroke="#6a665a" stroke-width="0.6" /><polyline points="55.4,43.2 83.6,28.3" fill="none" stroke="#6e6a5e" stroke-width="0.6" /><polygon points="68.7,52.2 94.6,42.0 95.4,44.4 68.7,56.1" fill="#6e6a60" /><polygon points="12.1,34.9 19.9,31.1 19.9,27.9 12.1,31.8" fill="#6a665a" /><polygon points="12.1,34.9 7.9,32.8 7.9,29.7 10.0,29.1 12.1,31.8" fill="#8e8a7a" /><polygon points="12.1,31.8 10.0,29.1 17.8,25.2 19.9,27.9" fill="#c4c0ac" /><polygon points="7.9,29.7 10.0,29.1 17.8,25.2 15.7,25.8" fill="#dedac8" /><polygon points="18.4,37.3 26.2,33.4 26.2,30.3 18.4,34.1" fill="#6a665a" /><polygon points="18.4,37.3 14.2,35.2 14.2,32.0 16.3,31.4 18.4,34.1" fill="#8e8a7a" /><polygon points="18.4,34.1 16.3,31.4 24.0,27.6 26.2,30.3" fill="#c4c0ac" /><polygon points="14.2,32.0 16.3,31.4 24.0,27.6 21.9,28.2" fill="#dedac8" /><ellipse cx="23.9" cy="37.3" rx="4.3" ry="2.5" fill="#55524a" /><ellipse cx="23.9" cy="36.5" rx="4.1" ry="2.4" fill="#c9c9c4" /><ellipse cx="23.5" cy="36.2" rx="2.4" ry="1.3" fill="#dcdcdc" /><polygon points="35.7,45.1 44.1,40.9 44.1,38.3 35.7,42.5" fill="#6a665a" /><polygon points="35.7,45.1 32.2,43.4 32.2,40.7 34.0,40.2 35.7,42.5" fill="#8e8a7a" /><polygon points="35.7,42.5 34.0,40.2 42.4,36.0 44.1,38.3" fill="#c4c0ac" /><polygon points="32.2,40.7 34.0,40.2 42.4,36.0 40.6,36.5" fill="#dedac8" /><polygon points="42.0,48.3 50.4,44.1 50.4,41.4 42.0,45.6" fill="#6a665a" /><polygon points="42.0,48.3 38.5,46.5 38.5,43.9 40.2,43.4 42.0,45.6" fill="#8e8a7a" /><polygon points="42.0,45.6 40.2,43.4 48.7,39.1 50.4,41.4" fill="#c4c0ac" /><polygon points="38.5,43.9 40.2,43.4 48.7,39.1 46.9,39.6" fill="#dedac8" /><polygon points="53.0,55.4 57.2,53.3 57.2,50.9 53.0,53.0" fill="#6a665a" /><polygon points="53.0,55.4 50.2,54.0 50.2,51.6 51.6,51.2 53.0,53.0" fill="#8e8a7a" /><polygon points="53.0,53.0 51.6,51.2 55.8,49.1 57.2,50.9" fill="#c4c0ac" /><polygon points="50.2,51.6 51.6,51.2 55.8,49.1 54.4,49.5" fill="#dedac8" /><polyline points="42.0,49.1 53.0,54.6 60.9,60.1" fill="none" stroke="#2e2c28" stroke-width="1.2" stroke-dasharray="1.5 1.2"/><polyline points="57.7,60.1 67.1,60.9" fill="none" stroke="#d0ccb8" stroke-width="1.0" stroke-dasharray="1 1.5"/><polygon points="89.5,41.6 91.7,29.4 94.5,29.4 96.6,41.6 94.6,42.8 91.5,42.8" fill="#6a675c" /><polyline points="89.9,41.6 91.9,29.8" fill="none" stroke="#e0dccb" stroke-width="1.4" /><polyline points="96.2,41.6 94.3,29.8" fill="none" stroke="#d0ccb8" stroke-width="1.2" /><polyline points="90.6,38.5 95.6,38.5" fill="none" stroke="#e8e4d4" stroke-width="1" /><polyline points="91.0,34.9 95.1,34.9" fill="none" stroke="#e8e4d4" stroke-width="1" /><polyline points="90.4,41.2 95.3,38.1 91.0,35.2" fill="none" stroke="#f0ecdc" stroke-width="0.8" /><polyline points="99.0,42.4 94.6,31.0" fill="none" stroke="#7a766a" stroke-width="1.2" /><polygon points="91.9,27.9 97.4,26.3 100.1,27.9 100.1,30.6 95.0,31.8 91.9,30.6" fill="#8a8678" /><polygon points="91.9,27.9 97.4,26.3 100.1,27.9 95.0,29.3" fill="#c8c4b0" /><polygon points="97.4,29.0 100.1,28.0 100.1,30.4 97.4,31.2" fill="#4e4a40" /><polyline points="94.6,28.6 83.3,9.4" fill="none" stroke="#6e6a5c" stroke-width="2.0" /><polyline points="94.3,28.3 83.1,9.2" fill="none" stroke="#e4e0cc" stroke-width="1.1" /><polyline points="99.0,27.5 86.4,14.9 83.3,9.4" fill="none" stroke="#8e8a7c" stroke-width="0.7" /><polygon points="65.2,51.0 67.3,40.4 70.1,40.4 72.3,51.0 70.3,52.2 67.1,52.2" fill="#6a675c" /><polyline points="65.6,51.0 67.5,40.8" fill="none" stroke="#e0dccb" stroke-width="1.4" /><polyline points="71.9,51.0 69.9,40.8" fill="none" stroke="#d0ccb8" stroke-width="1.2" /><polyline points="66.2,47.9 71.2,47.9" fill="none" stroke="#e8e4d4" stroke-width="1" /><polyline points="66.7,44.4 70.8,44.4" fill="none" stroke="#e8e4d4" stroke-width="1" /><polyline points="66.0,50.6 70.9,47.5 66.7,44.6" fill="none" stroke="#f0ecdc" stroke-width="0.8" /><polyline points="74.6,51.8 70.3,42.0" fill="none" stroke="#7a766a" stroke-width="1.2" /><polygon points="68.7,38.9 74.2,37.3 77.0,38.9 77.0,41.6 71.9,42.8 68.7,41.6" fill="#8a8678" /><polygon points="68.7,38.9 74.2,37.3 77.0,38.9 71.9,40.3" fill="#c8c4b0" /><polygon points="74.2,40.0 77.0,39.0 77.0,41.4 74.2,42.2" fill="#4e4a40" /><polyline points="71.5,39.6 59.3,20.4" fill="none" stroke="#6e6a5c" stroke-width="2.0" /><polyline points="71.1,39.3 59.1,20.2" fill="none" stroke="#e4e0cc" stroke-width="1.1" /><polyline points="75.8,38.5 62.4,25.9 59.3,20.4" fill="none" stroke="#8e8a7c" stroke-width="0.7" /></svg></div>
<div class="it" style="top:64px"><svg width="128" height="64" viewBox="0 0 128 64"><polygon points="1,32 64,0.3 127,32 64,63.7" fill="#c5c5b9"/><polygon points="15.3,25.5 49.1,9.0 93.1,31.0 90.7,37.3 60.9,52.2 53.0,45.9" fill="#2e8fc1" /><polygon points="16.9,35.7 23.9,32.6 53.0,45.9 63.2,52.2 106.4,29.4 112.7,27.9 126.9,31.8 63.6,63.2" fill="#6b675e" /><polygon points="16.9,35.7 63.6,63.2 126.9,31.8 126.9,32.7 63.6,64.4 16.9,36.7" fill="#3a3832" /><polygon points="23.9,33.8 52.2,46.7 62.4,53.0 62.4,60.1 21.6,36.5" fill="#8a867a" /><polygon points="40.4,28.6 46.7,25.9 76.6,40.4 71.9,43.6" fill="#8f8a7c" /><polygon points="40.4,28.6 71.9,43.6 71.9,44.7 40.4,29.6" fill="#4a463c" /><polygon points="57.7,24.7 63.2,23.0 90.7,34.9 86.8,38.1" fill="#857f72" /><polygon points="57.7,24.7 86.8,38.1 86.8,39.1 57.7,25.7" fill="#4a463c" /><polyline points="43.6,27.9 74.2,42.4" fill="none" stroke="#6a665a" stroke-width="0.6" /><polygon points="57.7,45.9 68.7,41.6 71.1,42.8 60.1,47.5" fill="#7a766a" /><polygon points="120.6,34.9 112.8,31.1 112.8,28.2 120.6,32.1" fill="#6a665a" /><polygon points="120.6,34.9 124.4,33.0 124.4,30.2 122.5,29.6 120.6,32.1" fill="#8e8a7a" /><polygon points="120.6,32.1 122.5,29.6 114.8,25.8 112.8,28.2" fill="#c4c0ac" /><polygon points="124.4,30.2 122.5,29.6 114.8,25.8 116.7,26.3" fill="#dedac8" /><polygon points="126.9,32.2 119.1,28.3 119.1,25.5 126.9,29.4" fill="#6a665a" /><polygon points="126.9,32.2 130.7,30.2 130.7,27.4 128.8,26.9 126.9,29.4" fill="#8e8a7a" /><polygon points="126.9,29.4 128.8,26.9 121.1,23.0 119.1,25.5" fill="#c4c0ac" /><polygon points="130.7,27.4 128.8,26.9 121.1,23.0 123.0,23.6" fill="#dedac8" /><ellipse cx="107.2" cy="31.8" rx="3.9" ry="2.2" fill="#55524a" /><ellipse cx="107.2" cy="31.2" rx="3.8" ry="2.0" fill="#c9c9c4" /><polygon points="31.0,38.9 26.8,36.8 26.8,34.4 31.0,36.5" fill="#6a665a" /><polygon points="31.0,38.9 34.2,37.3 34.2,34.9 32.6,34.5 31.0,36.5" fill="#8e8a7a" /><polygon points="31.0,36.5 32.6,34.5 28.4,32.4 26.8,34.4" fill="#c4c0ac" /><polygon points="34.2,34.9 32.6,34.5 28.4,32.4 29.9,32.8" fill="#dedac8" /><polygon points="56.1,54.6 60.4,52.5 60.4,50.1 56.1,52.2" fill="#6a665a" /><polygon points="56.1,54.6 53.3,53.2 53.3,50.8 54.7,50.4 56.1,52.2" fill="#8e8a7a" /><polygon points="56.1,52.2 54.7,50.4 59.0,48.3 60.4,50.1" fill="#c4c0ac" /><polygon points="53.3,50.8 54.7,50.4 59.0,48.3 57.5,48.7" fill="#dedac8" /><polyline points="34.9,42.0 48.3,48.3" fill="none" stroke="#2e2c28" stroke-width="1.2" stroke-dasharray="1.5 1.2"/><polygon points="76.6,48.3 90.7,42.8 92.3,45.1 77.4,51.4" fill="#bdb9a6" /><polygon points="77.4,51.4 92.3,45.1 92.3,46.7 77.4,53.0" fill="#4e4a40" /><polygon points="89.5,38.1 91.7,28.3 94.5,28.3 96.6,38.1 94.6,39.3 91.5,39.3" fill="#6a675c" /><polyline points="89.9,38.1 91.9,28.6" fill="none" stroke="#e0dccb" stroke-width="1.4" /><polyline points="96.2,38.1 94.3,28.6" fill="none" stroke="#d0ccb8" stroke-width="1.2" /><polyline points="90.6,34.9 95.6,34.9" fill="none" stroke="#e8e4d4" stroke-width="1" /><polyline points="91.0,31.4 95.1,31.4" fill="none" stroke="#e8e4d4" stroke-width="1" /><polyline points="90.4,37.7 95.3,34.5 91.0,31.6" fill="none" stroke="#f0ecdc" stroke-width="0.8" /><polyline points="99.0,38.9 94.6,29.8" fill="none" stroke="#7a766a" stroke-width="1.2" /><polygon points="93.1,26.7 98.6,25.1 101.3,26.7 101.3,29.4 96.2,30.6 93.1,29.4" fill="#8a8678" /><polygon points="93.1,26.7 98.6,25.1 101.3,26.7 96.2,28.1" fill="#c8c4b0" /><polygon points="98.6,27.9 101.3,26.8 101.3,29.2 98.6,30.0" fill="#4e4a40" /><polyline points="95.8,27.5 83.3,9.4" fill="none" stroke="#6e6a5c" stroke-width="2.0" /><polyline points="95.4,27.2 83.1,9.2" fill="none" stroke="#e4e0cc" stroke-width="1.1" /><polyline points="100.1,26.3 86.4,14.9 83.3,9.4" fill="none" stroke="#8e8a7c" stroke-width="0.7" /><polygon points="66.0,50.6 68.1,38.5 70.9,38.5 73.0,50.6 71.1,51.8 67.9,51.8" fill="#6a675c" /><polyline points="66.4,50.6 68.3,38.9" fill="none" stroke="#e0dccb" stroke-width="1.4" /><polyline points="72.6,50.6 70.7,38.9" fill="none" stroke="#d0ccb8" stroke-width="1.2" /><polyline points="67.0,47.5 72.0,47.5" fill="none" stroke="#e8e4d4" stroke-width="1" /><polyline points="67.5,44.0 71.5,44.0" fill="none" stroke="#e8e4d4" stroke-width="1" /><polyline points="66.8,50.3 71.7,47.1 67.5,44.2" fill="none" stroke="#f0ecdc" stroke-width="0.8" /><polyline points="75.4,51.4 71.1,40.0" fill="none" stroke="#7a766a" stroke-width="1.2" /><polygon points="69.9,36.9 75.4,35.3 78.1,36.9 78.1,39.6 73.0,40.8 69.9,39.6" fill="#8a8678" /><polygon points="69.9,36.9 75.4,35.3 78.1,36.9 73.0,38.3" fill="#c8c4b0" /><polygon points="75.4,38.1 78.1,37.1 78.1,39.4 75.4,40.2" fill="#4e4a40" /><polyline points="72.6,37.7 59.3,20.4" fill="none" stroke="#6e6a5c" stroke-width="2.0" /><polyline points="72.3,37.4 59.1,20.2" fill="none" stroke="#e4e0cc" stroke-width="1.1" /><polyline points="77.0,36.5 62.4,25.9 59.3,20.4" fill="none" stroke="#8e8a7c" stroke-width="0.7" /></svg></div>
<div class="it" style="top:128px"><svg width="128" height="64" viewBox="0 0 128 64"><polygon points="1,32 64,0.3 127,32 64,63.7" fill="#c5c5b9"/><polygon points="37.3,29.4 60.9,16.9 76.6,16.9 108.0,27.9 115.9,35.7 80.5,55.4 56.1,42.0" fill="#2e8fc1" /><polygon points="1.1,31.8 63.6,0.4 114.3,26.3 108.0,29.8 76.6,14.9 60.9,18.0 38.9,29.4 17.6,37.7" fill="#8d8b84" /><polygon points="1.1,31.8 17.6,37.7 38.9,29.4 38.9,30.4 17.6,38.9 1.1,32.7" fill="#55534c" /><polygon points="60.9,18.0 76.6,14.9 108.0,29.8 108.0,30.8 76.6,15.9 60.9,19.0" fill="#5a5850" /><polygon points="42.0,21.6 53.0,20.4 71.9,37.3 68.7,40.4 48.3,26.7 45.1,31.0 38.9,29.4" fill="#8f8c80" /><polygon points="48.3,26.7 68.7,40.4 71.9,37.3 71.9,38.4 68.7,41.5 48.3,27.7" fill="#55514a" /><polygon points="48.3,23.9 53.0,22.4 68.7,36.5 67.1,38.1" fill="#a8a498" /><polygon points="56.9,19.2 64.8,18.3 89.1,32.6 84.4,36.5" fill="#8f8c80" /><polygon points="56.9,19.2 84.4,36.5 89.1,32.6 89.1,33.7 84.4,37.6 56.9,20.2" fill="#55514a" /><polygon points="81.3,31.0 88.4,31.8 88.4,34.9 84.4,36.5 81.3,34.9" fill="#c4c0ac" /><polyline points="66.4,20.0 74.2,16.9" fill="none" stroke="#7a766a" stroke-width="1.2" /><polyline points="38.9,31.0 56.1,42.4" fill="none" stroke="#3a3832" stroke-width="0.8" stroke-dasharray="1.2 1.5"/><ellipse cx="57.7" cy="10.6" rx="4.9" ry="2.8" fill="#5e5c54" /><ellipse cx="57.7" cy="9.6" rx="4.7" ry="2.7" fill="#c6c6c2" /><ellipse cx="56.9" cy="9.0" rx="2.8" ry="1.4" fill="#dcdcdc" /><polygon points="60.9,5.5 69.3,1.2 69.3,-1.4 60.9,2.8" fill="#6a665a" /><polygon points="60.9,5.5 57.3,3.7 57.3,1.0 59.1,0.5 60.9,2.8" fill="#8e8a7a" /><polygon points="60.9,2.8 59.1,0.5 67.5,-3.7 69.3,-1.4" fill="#c4c0ac" /><polygon points="57.3,1.0 59.1,0.5 67.5,-3.7 65.8,-3.2" fill="#dedac8" /><polygon points="67.1,8.2 75.6,4.0 75.6,1.3 67.1,5.5" fill="#6a665a" /><polygon points="67.1,8.2 63.6,6.5 63.6,3.8 65.4,3.3 67.1,5.5" fill="#8e8a7a" /><polygon points="67.1,5.5 65.4,3.3 73.8,-0.9 75.6,1.3" fill="#c4c0ac" /><polygon points="63.6,3.8 65.4,3.3 73.8,-0.9 72.1,-0.4" fill="#dedac8" /><polygon points="13.7,32.6 22.8,28.0 22.8,25.5 13.7,30.1" fill="#6a665a" /><polygon points="13.7,32.6 10.2,30.8 10.2,28.3 12.0,27.8 13.7,30.1" fill="#8e8a7a" /><polygon points="13.7,30.1 12.0,27.8 21.1,23.2 22.8,25.5" fill="#c4c0ac" /><polygon points="10.2,28.3 12.0,27.8 21.1,23.2 19.3,23.7" fill="#dedac8" /><polygon points="17.6,34.9 26.8,30.4 26.8,27.8 17.6,32.4" fill="#6a665a" /><polygon points="17.6,34.9 14.1,33.2 14.1,30.7 15.9,30.2 17.6,32.4" fill="#8e8a7a" /><polygon points="17.6,32.4 15.9,30.2 25.0,25.6 26.8,27.8" fill="#c4c0ac" /><polygon points="14.1,30.7 15.9,30.2 25.0,25.6 23.3,26.1" fill="#dedac8" /><polyline points="82.9,15.3 98.6,22.4" fill="none" stroke="#2e2c28" stroke-width="1.6" stroke-dasharray="1.2 1.2"/><polyline points="83.6,17.6 97.0,23.9" fill="none" stroke="#d8d4c0" stroke-width="1.0" stroke-dasharray="1 1.6"/><polygon points="28.3,25.5 30.4,14.5 33.2,14.5 35.3,25.5 33.4,26.7 30.2,26.7" fill="#6a675c" /><polyline points="28.6,25.5 30.6,14.9" fill="none" stroke="#e0dccb" stroke-width="1.4" /><polyline points="34.9,25.5 33.0,14.9" fill="none" stroke="#d0ccb8" stroke-width="1.2" /><polyline points="29.3,22.4 34.3,22.4" fill="none" stroke="#e8e4d4" stroke-width="1" /><polyline points="29.7,18.8 33.8,18.8" fill="none" stroke="#e8e4d4" stroke-width="1" /><polyline points="29.1,25.1 34.0,22.0 29.7,19.1" fill="none" stroke="#f0ecdc" stroke-width="0.8" /><polyline points="37.7,26.3 33.4,16.1" fill="none" stroke="#7a766a" stroke-width="1.2" /><polygon points="30.2,12.9 35.7,11.4 38.5,12.9 38.5,15.7 33.4,16.9 30.2,15.7" fill="#8a8678" /><polygon points="30.2,12.9 35.7,11.4 38.5,12.9 33.4,14.3" fill="#c8c4b0" /><polygon points="35.7,14.1 38.5,13.1 38.5,15.4 35.7,16.2" fill="#4e4a40" /><polyline points="33.0,13.7 18.4,4.3" fill="none" stroke="#6e6a5c" stroke-width="2.0" /><polyline points="32.6,13.4 18.3,4.1" fill="none" stroke="#e4e0cc" stroke-width="1.1" /><polyline points="37.3,12.5 21.6,9.8 18.4,4.3" fill="none" stroke="#8e8a7c" stroke-width="0.7" /><polygon points="100.5,27.1 102.7,14.1 105.5,14.1 107.6,27.1 105.6,28.3 102.5,28.3" fill="#6a675c" /><polyline points="100.9,27.1 102.9,14.5" fill="none" stroke="#e0dccb" stroke-width="1.4" /><polyline points="107.2,27.1 105.3,14.5" fill="none" stroke="#d0ccb8" stroke-width="1.2" /><polyline points="101.6,23.9 106.6,23.9" fill="none" stroke="#e8e4d4" stroke-width="1" /><polyline points="102.0,20.4 106.1,20.4" fill="none" stroke="#e8e4d4" stroke-width="1" /><polyline points="101.4,26.7 106.3,23.5 102.0,20.6" fill="none" stroke="#f0ecdc" stroke-width="0.8" /><polyline points="110.0,27.9 105.6,15.7" fill="none" stroke="#7a766a" stroke-width="1.2" /><polygon points="104.1,12.5 109.6,11.0 112.3,12.5 112.3,15.3 107.2,16.5 104.1,15.3" fill="#8a8678" /><polygon points="104.1,12.5 109.6,11.0 112.3,12.5 107.2,14.0" fill="#c8c4b0" /><polygon points="109.6,13.7 112.3,12.7 112.3,15.1 109.6,15.8" fill="#4e4a40" /><polyline points="106.8,13.3 95.4,2.7" fill="none" stroke="#6e6a5c" stroke-width="2.0" /><polyline points="106.4,13.0 95.3,2.6" fill="none" stroke="#e4e0cc" stroke-width="1.1" /><polyline points="111.1,12.1 98.6,8.2 95.4,2.7" fill="none" stroke="#8e8a7c" stroke-width="0.7" /></svg></div>
<div class="it" style="top:192px"><svg width="128" height="64" viewBox="0 0 128 64"><polygon points="1,32 64,0.3 127,32 64,63.7" fill="#c5c5b9"/><polygon points="12.9,36.5 59.3,12.9 98.6,29.4 76.6,40.4 49.1,54.6" fill="#2e8fc1" /><polygon points="19.2,26.3 63.6,1.1 126.9,32.6 115.9,36.9 96.2,29.8 68.7,16.9 63.2,12.9 25.5,30.2" fill="#8a8880" /><polygon points="19.2,26.3 25.5,30.2 63.2,12.9 63.2,13.9 25.5,31.3 19.2,27.4" fill="#55534c" /><polygon points="68.7,16.9 96.2,29.8 115.9,36.9 115.9,37.9 96.2,30.8 68.7,17.8" fill="#55534c" /><polygon points="43.6,33.4 76.6,19.2 80.5,21.6 48.3,36.5" fill="#8f8a7c" /><polygon points="43.6,33.4 48.3,36.5 80.5,21.6 80.5,22.6 48.3,37.5 43.6,34.3" fill="#55514a" /><polyline points="45.9,34.3 78.1,20.4" fill="none" stroke="#6a4a3a" stroke-width="0.6" /><polygon points="59.3,38.1 88.4,25.5 93.1,27.9 64.0,40.4" fill="#8f8a7c" /><polygon points="59.3,38.1 64.0,40.4 93.1,27.9 93.1,28.9 64.0,41.5 59.3,39.0" fill="#55514a" /><polyline points="61.6,38.9 90.7,26.7" fill="none" stroke="#6a4a3a" stroke-width="0.6" /><polyline points="76.6,41.2 97.0,31.0" fill="none" stroke="#6a4a3a" stroke-width="0.8" /><polygon points="58.5,16.1 64.0,13.7 71.9,17.6 64.8,20.0" fill="#2e8fc1" /><polygon points="60.9,6.6 69.3,2.4 69.3,-0.2 60.9,4.0" fill="#6a665a" /><polygon points="60.9,6.6 57.3,4.9 57.3,2.2 59.1,1.7 60.9,4.0" fill="#8e8a7a" /><polygon points="60.9,4.0 59.1,1.7 67.5,-2.5 69.3,-0.2" fill="#c4c0ac" /><polygon points="57.3,2.2 59.1,1.7 67.5,-2.5 65.8,-2.0" fill="#dedac8" /><polygon points="67.1,9.8 75.6,5.6 75.6,2.9 67.1,7.1" fill="#6a665a" /><polygon points="67.1,9.8 63.6,8.0 63.6,5.4 65.4,4.9 67.1,7.1" fill="#8e8a7a" /><polygon points="67.1,7.1 65.4,4.9 73.8,0.6 75.6,2.9" fill="#c4c0ac" /><polygon points="63.6,5.4 65.4,4.9 73.8,0.6 72.1,1.1" fill="#dedac8" /><ellipse cx="55.4" cy="11.0" rx="4.3" ry="2.4" fill="#5e5c54" /><ellipse cx="55.4" cy="10.2" rx="4.1" ry="2.2" fill="#c0c0bc" /><polygon points="38.9,20.8 45.2,17.6 45.2,15.3 38.9,18.4" fill="#6a665a" /><polygon points="38.9,20.8 35.7,19.2 35.7,16.8 37.3,16.4 38.9,18.4" fill="#8e8a7a" /><polygon points="38.9,18.4 37.3,16.4 43.6,13.2 45.2,15.3" fill="#c4c0ac" /><polygon points="35.7,16.8 37.3,16.4 43.6,13.2 42.0,13.7" fill="#dedac8" /><polygon points="97.0,29.4 106.1,24.9 106.1,22.2 97.0,26.8" fill="#6a665a" /><polygon points="97.0,29.4 93.5,27.7 93.5,25.0 95.2,24.5 97.0,26.8" fill="#8e8a7a" /><polygon points="97.0,26.8 95.2,24.5 104.4,19.9 106.1,22.2" fill="#c4c0ac" /><polygon points="93.5,25.0 95.2,24.5 104.4,19.9 102.6,20.4" fill="#dedac8" /><polygon points="102.5,32.6 111.6,28.0 111.6,25.3 102.5,29.9" fill="#6a665a" /><polygon points="102.5,32.6 99.0,30.8 99.0,28.1 100.7,27.6 102.5,29.9" fill="#8e8a7a" /><polygon points="102.5,29.9 100.7,27.6 109.9,23.1 111.6,25.3" fill="#c4c0ac" /><polygon points="99.0,28.1 100.7,27.6 109.9,23.1 108.1,23.6" fill="#dedac8" /><polyline points="76.6,12.1 96.2,21.6" fill="none" stroke="#2e2c28" stroke-width="1.8" stroke-dasharray="1.2 1.2"/><polyline points="77.4,14.9 94.6,23.1" fill="none" stroke="#d8d4c0" stroke-width="1.0" stroke-dasharray="1 1.6"/><polygon points="24.3,25.5 26.4,13.7 29.3,13.7 31.4,25.5 29.4,26.7 26.3,26.7" fill="#6a675c" /><polyline points="24.7,25.5 26.7,14.1" fill="none" stroke="#e0dccb" stroke-width="1.4" /><polyline points="31.0,25.5 29.0,14.1" fill="none" stroke="#d0ccb8" stroke-width="1.2" /><polyline points="25.3,22.4 30.4,22.4" fill="none" stroke="#e8e4d4" stroke-width="1" /><polyline points="25.8,18.8 29.9,18.8" fill="none" stroke="#e8e4d4" stroke-width="1" /><polyline points="25.2,25.1 30.1,22.0 25.8,19.1" fill="none" stroke="#f0ecdc" stroke-width="0.8" /><polyline points="33.8,26.3 29.4,15.3" fill="none" stroke="#7a766a" stroke-width="1.2" /><polygon points="27.1,12.1 32.6,10.6 35.3,12.1 35.3,14.9 30.2,16.1 27.1,14.9" fill="#8a8678" /><polygon points="27.1,12.1 32.6,10.6 35.3,12.1 30.2,13.6" fill="#c8c4b0" /><polygon points="32.6,13.3 35.3,12.3 35.3,14.7 32.6,15.4" fill="#4e4a40" /><polyline points="29.8,12.9 20.8,-0.4" fill="none" stroke="#6e6a5c" stroke-width="2.0" /><polyline points="29.4,12.6 20.6,-0.6" fill="none" stroke="#e4e0cc" stroke-width="1.1" /><polyline points="34.1,11.8 23.9,5.1 20.8,-0.4" fill="none" stroke="#8e8a7c" stroke-width="0.7" /><polygon points="114.7,34.1 116.8,21.6 119.6,21.6 121.8,34.1 119.8,35.3 116.6,35.3" fill="#6a675c" /><polyline points="115.1,34.1 117.0,22.0" fill="none" stroke="#e0dccb" stroke-width="1.4" /><polyline points="121.4,34.1 119.4,22.0" fill="none" stroke="#d0ccb8" stroke-width="1.2" /><polyline points="115.7,31.0 120.7,31.0" fill="none" stroke="#e8e4d4" stroke-width="1" /><polyline points="116.2,27.5 120.3,27.5" fill="none" stroke="#e8e4d4" stroke-width="1" /><polyline points="115.5,33.8 120.4,30.6 116.2,27.7" fill="none" stroke="#f0ecdc" stroke-width="0.8" /><polyline points="124.1,34.9 119.8,23.1" fill="none" stroke="#7a766a" stroke-width="1.2" /><polygon points="118.2,20.0 123.7,18.4 126.5,20.0 126.5,22.8 121.4,23.9 118.2,22.8" fill="#8a8678" /><polygon points="118.2,20.0 123.7,18.4 126.5,20.0 121.4,21.4" fill="#c8c4b0" /><polygon points="123.7,21.2 126.5,20.2 126.5,22.5 123.7,23.3" fill="#4e4a40" /><polyline points="121.0,20.8 108.8,1.9" fill="none" stroke="#6e6a5c" stroke-width="2.0" /><polyline points="120.6,20.5 108.6,1.8" fill="none" stroke="#e4e0cc" stroke-width="1.1" /><polyline points="125.3,19.6 111.9,7.4 108.8,1.9" fill="none" stroke="#8e8a7c" stroke-width="0.7" /></svg></div>
<div class="it" style="top:256px"><svg width="128" height="64" viewBox="0 0 128 64"><polygon points="1,32 64,0.3 127,32 64,63.7" fill="#c5c5b9"/><polygon points="17.6,31.0 33.8,22.9 33.8,19.0 17.6,27.1" fill="#57534a" /><polygon points="17.6,31.0 12.7,28.5 12.7,24.6 15.2,23.9 17.6,27.1" fill="#c8c0a8" /><polygon points="17.6,27.1 15.2,23.9 31.3,15.8 33.8,19.0" fill="#aaa69c" /><polygon points="12.7,24.6 15.2,23.9 31.3,15.8 28.9,16.5" fill="#dedac8" /><polygon points="29.4,36.9 45.6,28.8 45.6,24.9 29.4,33.0" fill="#57534a" /><polygon points="29.4,36.9 24.5,34.4 24.5,30.5 27.0,29.8 29.4,33.0" fill="#c8c0a8" /><polygon points="29.4,33.0 27.0,29.8 43.1,21.7 45.6,24.9" fill="#a29e94" /><polygon points="24.5,30.5 27.0,29.8 43.1,21.7 40.7,22.4" fill="#dedac8" /><polygon points="68.7,18.0 61.0,14.2 61.0,10.7 68.7,14.6" fill="#6c6a4e" /><polygon points="68.7,18.0 74.3,15.2 74.3,11.8 71.5,11.0 68.7,14.6" fill="#7c7a5c" /><polygon points="68.7,14.6 71.5,11.0 63.8,7.1 61.0,10.7" fill="#cfcbb4" /><polygon points="74.3,11.8 71.5,11.0 63.8,7.1 66.6,7.9" fill="#dedac8" /><polyline points="96.2,27.9 109.6,21.2" fill="none" stroke="#8a867a" stroke-width="1.6" stroke-dasharray="2.2 1.1"/><polyline points="96.2,28.8 109.6,22.1" fill="none" stroke="#3a3832" stroke-width="1.1" stroke-dasharray="2.2 1.1"/><polyline points="99.8,29.6 113.1,22.9" fill="none" stroke="#8a867a" stroke-width="1.6" stroke-dasharray="2.2 1.1"/><polyline points="99.8,30.5 113.1,23.9" fill="none" stroke="#3a3832" stroke-width="1.1" stroke-dasharray="2.2 1.1"/><polyline points="103.3,31.3 116.6,24.6" fill="none" stroke="#8a867a" stroke-width="1.6" stroke-dasharray="2.2 1.1"/><polyline points="103.3,32.3 116.6,25.6" fill="none" stroke="#3a3832" stroke-width="1.1" stroke-dasharray="2.2 1.1"/><polyline points="106.8,33.0 120.2,26.4" fill="none" stroke="#8a867a" stroke-width="1.6" stroke-dasharray="2.2 1.1"/><polyline points="106.8,34.0 120.2,27.3" fill="none" stroke="#3a3832" stroke-width="1.1" stroke-dasharray="2.2 1.1"/><polyline points="57.7,24.3 71.9,23.5" fill="none" stroke="#b0561c" stroke-width="1.3" /><polyline points="60.9,34.9 64.8,24.7 68.7,34.5" fill="none" stroke="#a04c18" stroke-width="1.2" /><polyline points="59.3,34.9 76.6,32.6" fill="none" stroke="#b0561c" stroke-width="1.1" /><polyline points="71.9,23.5 75.8,32.6" fill="none" stroke="#5a2a10" stroke-width="1.6" /><polyline points="68.7,27.9 73.4,31.8" fill="none" stroke="#3a2010" stroke-width="1.4" /><polyline points="55.2,51.4 57.6,48.3" fill="none" stroke="#4a4a40" stroke-width="0.9" /><polyline points="55.2,48.8 57.9,51.1" fill="none" stroke="#4a4a40" stroke-width="0.8" /><polyline points="58.2,51.0 60.5,47.9" fill="none" stroke="#4a4a40" stroke-width="0.9" /><polyline points="58.2,48.4 60.9,50.7" fill="none" stroke="#4a4a40" stroke-width="0.8" /><polyline points="61.2,50.6 63.5,47.5" fill="none" stroke="#4a4a40" stroke-width="0.9" /><polyline points="61.2,48.0 63.8,50.3" fill="none" stroke="#4a4a40" stroke-width="0.8" /><polyline points="64.2,50.3 66.5,47.1" fill="none" stroke="#4a4a40" stroke-width="0.9" /><polyline points="64.2,47.6 66.8,49.9" fill="none" stroke="#4a4a40" stroke-width="0.8" /><polyline points="67.1,49.9 69.5,46.7" fill="none" stroke="#4a4a40" stroke-width="0.9" /><polyline points="67.1,47.2 69.8,49.5" fill="none" stroke="#4a4a40" stroke-width="0.8" /><polyline points="70.1,49.5 72.5,46.3" fill="none" stroke="#4a4a40" stroke-width="0.9" /><polyline points="70.1,46.8 72.8,49.2" fill="none" stroke="#4a4a40" stroke-width="0.8" /><polyline points="49.9,52.2 73.7,48.7" fill="none" stroke="#3c3c34" stroke-width="1.1" /><polyline points="59.3,45.5 74.5,45.9" fill="none" stroke="#3c3c34" stroke-width="1.0" /><polyline points="38.9,46.3 48.1,5.6" fill="none" stroke="#24241c" stroke-width="1.1" /><polyline points="49.9,52.2 49.2,6.1" fill="none" stroke="#1a1a14" stroke-width="1.3" /><polyline points="59.3,45.5 50.0,5.5" fill="none" stroke="#24241c" stroke-width="1.1" /><polyline points="46.8,11.4 49.3,12.7 51.3,11.2" fill="none" stroke="#2c2c24" stroke-width="0.85" /><polyline points="48.1,5.6 49.3,12.7" fill="none" stroke="#303028" stroke-width="0.75" /><polyline points="49.2,6.1 46.8,11.4" fill="none" stroke="#303028" stroke-width="0.75" /><polyline points="49.2,6.1 51.3,11.2" fill="none" stroke="#22221a" stroke-width="0.75" /><polyline points="50.0,5.5 49.3,12.7" fill="none" stroke="#22221a" stroke-width="0.75" /><polyline points="48.1,5.6 51.3,11.2" fill="none" stroke="#6a6a5e" stroke-width="0.5" /><polyline points="48.4,5.6 49.0,12.2" fill="none" stroke="#ecece0" stroke-width="0.45" /><polyline points="49.7,6.4 50.9,11.2" fill="none" stroke="#c8c8bc" stroke-width="0.35" /><polyline points="45.5,17.3 49.4,19.3 52.7,16.9" fill="none" stroke="#2c2c24" stroke-width="0.85" /><polyline points="46.8,11.4 49.4,19.3" fill="none" stroke="#303028" stroke-width="0.75" /><polyline points="49.3,12.7 45.5,17.3" fill="none" stroke="#303028" stroke-width="0.75" /><polyline points="49.3,12.7 52.7,16.9" fill="none" stroke="#22221a" stroke-width="0.75" /><polyline points="51.3,11.2 49.4,19.3" fill="none" stroke="#22221a" stroke-width="0.75" /><polyline points="46.8,11.4 52.7,16.9" fill="none" stroke="#6a6a5e" stroke-width="0.5" /><polyline points="47.1,11.4 49.1,18.8" fill="none" stroke="#ecece0" stroke-width="0.45" /><polyline points="49.8,13.0 52.2,16.9" fill="none" stroke="#c8c8bc" stroke-width="0.35" /><polyline points="44.2,23.1 49.5,25.9 54.0,22.6" fill="none" stroke="#2c2c24" stroke-width="0.85" /><polyline points="45.5,17.3 49.5,25.9" fill="none" stroke="#303028" stroke-width="0.75" /><polyline points="49.4,19.3 44.2,23.1" fill="none" stroke="#303028" stroke-width="0.75" /><polyline points="49.4,19.3 54.0,22.6" fill="none" stroke="#22221a" stroke-width="0.75" /><polyline points="52.7,16.9 49.5,25.9" fill="none" stroke="#22221a" stroke-width="0.75" /><polyline points="45.5,17.3 54.0,22.6" fill="none" stroke="#6a6a5e" stroke-width="0.5" /><polyline points="45.8,17.3 49.2,25.4" fill="none" stroke="#ecece0" stroke-width="0.45" /><polyline points="49.9,19.6 53.5,22.6" fill="none" stroke="#c8c8bc" stroke-width="0.35" /><polyline points="42.8,28.9 49.6,32.4 55.3,28.4" fill="none" stroke="#2c2c24" stroke-width="0.85" /><polyline points="44.2,23.1 49.6,32.4" fill="none" stroke="#303028" stroke-width="0.75" /><polyline points="49.5,25.9 42.8,28.9" fill="none" stroke="#303028" stroke-width="0.75" /><polyline points="49.5,25.9 55.3,28.4" fill="none" stroke="#22221a" stroke-width="0.75" /><polyline points="54.0,22.6 49.6,32.4" fill="none" stroke="#22221a" stroke-width="0.75" /><polyline points="44.2,23.1 55.3,28.4" fill="none" stroke="#6a6a5e" stroke-width="0.5" /><polyline points="44.5,23.1 49.3,32.0" fill="none" stroke="#ecece0" stroke-width="0.45" /><polyline points="50.0,26.2 54.8,28.4" fill="none" stroke="#c8c8bc" stroke-width="0.35" /><polyline points="41.5,34.7 49.7,39.0 56.6,34.1" fill="none" stroke="#2c2c24" stroke-width="0.85" /><polyline points="42.8,28.9 49.7,39.0" fill="none" stroke="#303028" stroke-width="0.75" /><polyline points="49.6,32.4 41.5,34.7" fill="none" stroke="#303028" stroke-width="0.75" /><polyline points="49.6,32.4 56.6,34.1" fill="none" stroke="#22221a" stroke-width="0.75" /><polyline points="55.3,28.4 49.7,39.0" fill="none" stroke="#22221a" stroke-width="0.75" /><polyline points="42.8,28.9 56.6,34.1" fill="none" stroke="#6a6a5e" stroke-width="0.5" /><polyline points="43.1,28.9 49.4,38.6" fill="none" stroke="#ecece0" stroke-width="0.45" /><polyline points="50.1,32.8 56.2,34.1" fill="none" stroke="#c8c8bc" stroke-width="0.35" /><polyline points="40.2,40.5 49.8,45.6 58.0,39.8" fill="none" stroke="#2c2c24" stroke-width="0.85" /><polyline points="41.5,34.7 49.8,45.6" fill="none" stroke="#303028" stroke-width="0.75" /><polyline points="49.7,39.0 40.2,40.5" fill="none" stroke="#303028" stroke-width="0.75" /><polyline points="49.7,39.0 58.0,39.8" fill="none" stroke="#22221a" stroke-width="0.75" /><polyline points="56.6,34.1 49.8,45.6" fill="none" stroke="#22221a" stroke-width="0.75" /><polyline points="41.5,34.7 58.0,39.8" fill="none" stroke="#6a6a5e" stroke-width="0.5" /><polyline points="41.8,34.7 49.5,45.2" fill="none" stroke="#ecece0" stroke-width="0.45" /><polyline points="50.2,39.4 57.5,39.8" fill="none" stroke="#c8c8bc" stroke-width="0.35" /><polyline points="38.9,46.3 49.9,52.2 59.3,45.5" fill="none" stroke="#2c2c24" stroke-width="0.85" /><polyline points="40.2,40.5 49.9,52.2" fill="none" stroke="#303028" stroke-width="0.75" /><polyline points="49.8,45.6 38.9,46.3" fill="none" stroke="#303028" stroke-width="0.75" /><polyline points="49.8,45.6 59.3,45.5" fill="none" stroke="#22221a" stroke-width="0.75" /><polyline points="58.0,39.8 49.9,52.2" fill="none" stroke="#22221a" stroke-width="0.75" /><polyline points="40.2,40.5 59.3,45.5" fill="none" stroke="#6a6a5e" stroke-width="0.5" /><polyline points="40.5,40.5 49.5,51.7" fill="none" stroke="#ecece0" stroke-width="0.45" /><polyline points="50.2,45.9 58.8,45.5" fill="none" stroke="#c8c8bc" stroke-width="0.35" /><polyline points="49.1,5.6 49.1,4.1" fill="none" stroke="#111" stroke-width="1.1" /><polyline points="48.4,4.7 49.7,4.7" fill="none" stroke="#111" stroke-width="0.9" /><polyline points="93.2,45.5 95.5,42.4" fill="none" stroke="#4a4a40" stroke-width="0.9" /><polyline points="93.2,42.9 95.8,45.2" fill="none" stroke="#4a4a40" stroke-width="0.8" /><polyline points="96.1,45.1 98.5,42.0" fill="none" stroke="#4a4a40" stroke-width="0.9" /><polyline points="96.1,42.5 98.8,44.8" fill="none" stroke="#4a4a40" stroke-width="0.8" /><polyline points="99.1,44.8 101.5,41.6" fill="none" stroke="#4a4a40" stroke-width="0.9" /><polyline points="99.1,42.1 101.8,44.4" fill="none" stroke="#4a4a40" stroke-width="0.8" /><polyline points="102.1,44.4 104.5,41.2" fill="none" stroke="#4a4a40" stroke-width="0.9" /><polyline points="102.1,41.7 104.8,44.0" fill="none" stroke="#4a4a40" stroke-width="0.8" /><polyline points="105.1,44.0 107.5,40.8" fill="none" stroke="#4a4a40" stroke-width="0.9" /><polyline points="105.1,41.3 107.8,43.7" fill="none" stroke="#4a4a40" stroke-width="0.8" /><polyline points="108.1,43.6 110.4,40.4" fill="none" stroke="#4a4a40" stroke-width="0.9" /><polyline points="108.1,40.9 110.8,43.3" fill="none" stroke="#4a4a40" stroke-width="0.8" /><polyline points="87.6,46.3 111.6,42.8" fill="none" stroke="#3c3c34" stroke-width="1.1" /><polyline points="97.4,39.6 112.4,40.0" fill="none" stroke="#3c3c34" stroke-width="1.0" /><polyline points="76.2,40.4 85.8,-0.3" fill="none" stroke="#24241c" stroke-width="1.1" /><polyline points="87.6,46.3 86.9,0.2" fill="none" stroke="#1a1a14" stroke-width="1.3" /><polyline points="97.4,39.6 87.7,-0.4" fill="none" stroke="#24241c" stroke-width="1.1" /><polyline points="84.5,5.5 87.0,6.8 89.1,5.3" fill="none" stroke="#2c2c24" stroke-width="0.85" /><polyline points="85.8,-0.3 87.0,6.8" fill="none" stroke="#303028" stroke-width="0.75" /><polyline points="86.9,0.2 84.5,5.5" fill="none" stroke="#303028" stroke-width="0.75" /><polyline points="86.9,0.2 89.1,5.3" fill="none" stroke="#22221a" stroke-width="0.75" /><polyline points="87.7,-0.4 87.0,6.8" fill="none" stroke="#22221a" stroke-width="0.75" /><polyline points="85.8,-0.3 89.1,5.3" fill="none" stroke="#6a6a5e" stroke-width="0.5" /><polyline points="86.2,-0.3 86.7,6.3" fill="none" stroke="#ecece0" stroke-width="0.45" /><polyline points="87.4,0.5 88.6,5.3" fill="none" stroke="#c8c8bc" stroke-width="0.35" /><polyline points="83.1,11.4 87.1,13.4 90.5,11.0" fill="none" stroke="#2c2c24" stroke-width="0.85" /><polyline points="84.5,5.5 87.1,13.4" fill="none" stroke="#303028" stroke-width="0.75" /><polyline points="87.0,6.8 83.1,11.4" fill="none" stroke="#303028" stroke-width="0.75" /><polyline points="87.0,6.8 90.5,11.0" fill="none" stroke="#22221a" stroke-width="0.75" /><polyline points="89.1,5.3 87.1,13.4" fill="none" stroke="#22221a" stroke-width="0.75" /><polyline points="84.5,5.5 90.5,11.0" fill="none" stroke="#6a6a5e" stroke-width="0.5" /><polyline points="84.8,5.5 86.8,12.9" fill="none" stroke="#ecece0" stroke-width="0.45" /><polyline points="87.5,7.1 90.0,11.0" fill="none" stroke="#c8c8bc" stroke-width="0.35" /><polyline points="81.7,17.2 87.2,20.0 91.9,16.7" fill="none" stroke="#2c2c24" stroke-width="0.85" /><polyline points="83.1,11.4 87.2,20.0" fill="none" stroke="#303028" stroke-width="0.75" /><polyline points="87.1,13.4 81.7,17.2" fill="none" stroke="#303028" stroke-width="0.75" /><polyline points="87.1,13.4 91.9,16.7" fill="none" stroke="#22221a" stroke-width="0.75" /><polyline points="90.5,11.0 87.2,20.0" fill="none" stroke="#22221a" stroke-width="0.75" /><polyline points="83.1,11.4 91.9,16.7" fill="none" stroke="#6a6a5e" stroke-width="0.5" /><polyline points="83.4,11.4 86.9,19.5" fill="none" stroke="#ecece0" stroke-width="0.45" /><polyline points="87.6,13.7 91.4,16.7" fill="none" stroke="#c8c8bc" stroke-width="0.35" /><polyline points="80.3,23.0 87.3,26.6 93.3,22.5" fill="none" stroke="#2c2c24" stroke-width="0.85" /><polyline points="81.7,17.2 87.3,26.6" fill="none" stroke="#303028" stroke-width="0.75" /><polyline points="87.2,20.0 80.3,23.0" fill="none" stroke="#303028" stroke-width="0.75" /><polyline points="87.2,20.0 93.3,22.5" fill="none" stroke="#22221a" stroke-width="0.75" /><polyline points="91.9,16.7 87.3,26.6" fill="none" stroke="#22221a" stroke-width="0.75" /><polyline points="81.7,17.2 93.3,22.5" fill="none" stroke="#6a6a5e" stroke-width="0.5" /><polyline points="82.0,17.2 87.0,26.1" fill="none" stroke="#ecece0" stroke-width="0.45" /><polyline points="87.7,20.3 92.8,22.5" fill="none" stroke="#c8c8bc" stroke-width="0.35" /><polyline points="78.9,28.8 87.4,33.1 94.6,28.2" fill="none" stroke="#2c2c24" stroke-width="0.85" /><polyline points="80.3,23.0 87.4,33.1" fill="none" stroke="#303028" stroke-width="0.75" /><polyline points="87.3,26.6 78.9,28.8" fill="none" stroke="#303028" stroke-width="0.75" /><polyline points="87.3,26.6 94.6,28.2" fill="none" stroke="#22221a" stroke-width="0.75" /><polyline points="93.3,22.5 87.4,33.1" fill="none" stroke="#22221a" stroke-width="0.75" /><polyline points="80.3,23.0 94.6,28.2" fill="none" stroke="#6a6a5e" stroke-width="0.5" /><polyline points="80.6,23.0 87.1,32.7" fill="none" stroke="#ecece0" stroke-width="0.45" /><polyline points="87.8,26.9 94.2,28.2" fill="none" stroke="#c8c8bc" stroke-width="0.35" /><polyline points="77.6,34.6 87.5,39.7 96.0,33.9" fill="none" stroke="#2c2c24" stroke-width="0.85" /><polyline points="78.9,28.8 87.5,39.7" fill="none" stroke="#303028" stroke-width="0.75" /><polyline points="87.4,33.1 77.6,34.6" fill="none" stroke="#303028" stroke-width="0.75" /><polyline points="87.4,33.1 96.0,33.9" fill="none" stroke="#22221a" stroke-width="0.75" /><polyline points="94.6,28.2 87.5,39.7" fill="none" stroke="#22221a" stroke-width="0.75" /><polyline points="78.9,28.8 96.0,33.9" fill="none" stroke="#6a6a5e" stroke-width="0.5" /><polyline points="79.3,28.8 87.2,39.3" fill="none" stroke="#ecece0" stroke-width="0.45" /><polyline points="87.9,33.5 95.5,33.9" fill="none" stroke="#c8c8bc" stroke-width="0.35" /><polyline points="76.2,40.4 87.6,46.3 97.4,39.6" fill="none" stroke="#2c2c24" stroke-width="0.85" /><polyline points="77.6,34.6 87.6,46.3" fill="none" stroke="#303028" stroke-width="0.75" /><polyline points="87.5,39.7 76.2,40.4" fill="none" stroke="#303028" stroke-width="0.75" /><polyline points="87.5,39.7 97.4,39.6" fill="none" stroke="#22221a" stroke-width="0.75" /><polyline points="96.0,33.9 87.6,46.3" fill="none" stroke="#22221a" stroke-width="0.75" /><polyline points="77.6,34.6 97.4,39.6" fill="none" stroke="#6a6a5e" stroke-width="0.5" /><polyline points="77.9,34.6 87.3,45.9" fill="none" stroke="#ecece0" stroke-width="0.45" /><polyline points="88.0,40.0 96.9,39.6" fill="none" stroke="#c8c8bc" stroke-width="0.35" /><polyline points="86.8,-0.3 86.8,-1.8" fill="none" stroke="#111" stroke-width="1.1" /><polyline points="86.2,-1.2 87.4,-1.2" fill="none" stroke="#111" stroke-width="0.9" /></svg></div>
<div class="it" style="top:320px"><svg width="128" height="64" viewBox="0 0 128 64"><polygon points="1,32 64,0.3 127,32 64,63.7" fill="#c5c5b9"/><polygon points="54.6,23.9 46.8,20.1 46.8,16.6 54.6,20.5" fill="#6c6a4e" /><polygon points="54.6,23.9 60.2,21.1 60.2,17.7 57.4,16.9 54.6,20.5" fill="#7c7a5c" /><polygon points="54.6,20.5 57.4,16.9 49.7,13.0 46.8,16.6" fill="#cfcbb4" /><polygon points="60.2,17.7 57.4,16.9 49.7,13.0 52.5,13.8" fill="#dedac8" /><polygon points="79.7,21.6 72.0,17.7 72.0,14.3 79.7,18.1" fill="#6c6a4e" /><polygon points="79.7,21.6 85.3,18.8 85.3,15.3 82.5,14.5 79.7,18.1" fill="#7c7a5c" /><polygon points="79.7,18.1 82.5,14.5 74.8,10.6 72.0,14.3" fill="#cfcbb4" /><polygon points="85.3,15.3 82.5,14.5 74.8,10.6 77.6,11.4" fill="#dedac8" /><polyline points="95.4,27.1 108.8,20.4" fill="none" stroke="#8a867a" stroke-width="1.6" stroke-dasharray="2.2 1.1"/><polyline points="95.4,28.0 108.8,21.3" fill="none" stroke="#3a3832" stroke-width="1.1" stroke-dasharray="2.2 1.1"/><polyline points="99.0,28.8 112.3,22.1" fill="none" stroke="#8a867a" stroke-width="1.6" stroke-dasharray="2.2 1.1"/><polyline points="99.0,29.7 112.3,23.1" fill="none" stroke="#3a3832" stroke-width="1.1" stroke-dasharray="2.2 1.1"/><polyline points="102.5,30.5 115.9,23.9" fill="none" stroke="#8a867a" stroke-width="1.6" stroke-dasharray="2.2 1.1"/><polyline points="102.5,31.5 115.9,24.8" fill="none" stroke="#3a3832" stroke-width="1.1" stroke-dasharray="2.2 1.1"/><polyline points="106.0,32.3 119.4,25.6" fill="none" stroke="#8a867a" stroke-width="1.6" stroke-dasharray="2.2 1.1"/><polyline points="106.0,33.2 119.4,26.5" fill="none" stroke="#3a3832" stroke-width="1.1" stroke-dasharray="2.2 1.1"/><polyline points="37.9,44.8 40.3,41.6" fill="none" stroke="#4a4a40" stroke-width="0.9" /><polyline points="37.9,42.1 40.6,44.4" fill="none" stroke="#4a4a40" stroke-width="0.8" /><polyline points="40.9,44.4 43.3,41.2" fill="none" stroke="#4a4a40" stroke-width="0.9" /><polyline points="40.9,41.7 43.6,44.0" fill="none" stroke="#4a4a40" stroke-width="0.8" /><polyline points="43.9,44.0 46.2,40.8" fill="none" stroke="#4a4a40" stroke-width="0.9" /><polyline points="43.9,41.3 46.6,43.7" fill="none" stroke="#4a4a40" stroke-width="0.8" /><polyline points="46.9,43.6 49.2,40.4" fill="none" stroke="#4a4a40" stroke-width="0.9" /><polyline points="46.9,40.9 49.5,43.3" fill="none" stroke="#4a4a40" stroke-width="0.8" /><polyline points="49.9,43.2 52.2,40.0" fill="none" stroke="#4a4a40" stroke-width="0.9" /><polyline points="49.9,40.5 52.5,42.9" fill="none" stroke="#4a4a40" stroke-width="0.8" /><polyline points="52.8,42.8 55.2,39.6" fill="none" stroke="#4a4a40" stroke-width="0.9" /><polyline points="52.8,40.1 55.5,42.5" fill="none" stroke="#4a4a40" stroke-width="0.8" /><polyline points="32.6,45.5 56.4,42.0" fill="none" stroke="#3c3c34" stroke-width="1.1" /><polyline points="42.0,38.9 57.2,39.3" fill="none" stroke="#3c3c34" stroke-width="1.0" /><polyline points="21.6,39.6 30.8,-1.1" fill="none" stroke="#24241c" stroke-width="1.1" /><polyline points="32.6,45.5 31.9,-0.6" fill="none" stroke="#1a1a14" stroke-width="1.3" /><polyline points="42.0,38.9 32.7,-1.2" fill="none" stroke="#24241c" stroke-width="1.1" /><polyline points="29.5,4.8 32.0,6.0 34.1,4.5" fill="none" stroke="#2c2c24" stroke-width="0.85" /><polyline points="30.8,-1.1 32.0,6.0" fill="none" stroke="#303028" stroke-width="0.75" /><polyline points="31.9,-0.6 29.5,4.8" fill="none" stroke="#303028" stroke-width="0.75" /><polyline points="31.9,-0.6 34.1,4.5" fill="none" stroke="#22221a" stroke-width="0.75" /><polyline points="32.7,-1.2 32.0,6.0" fill="none" stroke="#22221a" stroke-width="0.75" /><polyline points="30.8,-1.1 34.1,4.5" fill="none" stroke="#6a6a5e" stroke-width="0.5" /><polyline points="31.2,-1.1 31.7,5.5" fill="none" stroke="#ecece0" stroke-width="0.45" /><polyline points="32.4,-0.3 33.6,4.5" fill="none" stroke="#c8c8bc" stroke-width="0.35" /><polyline points="28.2,10.6 32.1,12.6 35.4,10.2" fill="none" stroke="#2c2c24" stroke-width="0.85" /><polyline points="29.5,4.8 32.1,12.6" fill="none" stroke="#303028" stroke-width="0.75" /><polyline points="32.0,6.0 28.2,10.6" fill="none" stroke="#303028" stroke-width="0.75" /><polyline points="32.0,6.0 35.4,10.2" fill="none" stroke="#22221a" stroke-width="0.75" /><polyline points="34.1,4.5 32.1,12.6" fill="none" stroke="#22221a" stroke-width="0.75" /><polyline points="29.5,4.8 35.4,10.2" fill="none" stroke="#6a6a5e" stroke-width="0.5" /><polyline points="29.8,4.8 31.8,12.1" fill="none" stroke="#ecece0" stroke-width="0.45" /><polyline points="32.5,6.3 34.9,10.2" fill="none" stroke="#c8c8bc" stroke-width="0.35" /><polyline points="26.9,16.4 32.2,19.2 36.7,16.0" fill="none" stroke="#2c2c24" stroke-width="0.85" /><polyline points="28.2,10.6 32.2,19.2" fill="none" stroke="#303028" stroke-width="0.75" /><polyline points="32.1,12.6 26.9,16.4" fill="none" stroke="#303028" stroke-width="0.75" /><polyline points="32.1,12.6 36.7,16.0" fill="none" stroke="#22221a" stroke-width="0.75" /><polyline points="35.4,10.2 32.2,19.2" fill="none" stroke="#22221a" stroke-width="0.75" /><polyline points="28.2,10.6 36.7,16.0" fill="none" stroke="#6a6a5e" stroke-width="0.5" /><polyline points="28.5,10.6 31.9,18.7" fill="none" stroke="#ecece0" stroke-width="0.45" /><polyline points="32.6,12.9 36.2,16.0" fill="none" stroke="#c8c8bc" stroke-width="0.35" /><polyline points="25.5,22.2 32.3,25.8 38.0,21.7" fill="none" stroke="#2c2c24" stroke-width="0.85" /><polyline points="26.9,16.4 32.3,25.8" fill="none" stroke="#303028" stroke-width="0.75" /><polyline points="32.2,19.2 25.5,22.2" fill="none" stroke="#303028" stroke-width="0.75" /><polyline points="32.2,19.2 38.0,21.7" fill="none" stroke="#22221a" stroke-width="0.75" /><polyline points="36.7,16.0 32.3,25.8" fill="none" stroke="#22221a" stroke-width="0.75" /><polyline points="26.9,16.4 38.0,21.7" fill="none" stroke="#6a6a5e" stroke-width="0.5" /><polyline points="27.2,16.4 32.0,25.3" fill="none" stroke="#ecece0" stroke-width="0.45" /><polyline points="32.7,19.5 37.6,21.7" fill="none" stroke="#c8c8bc" stroke-width="0.35" /><polyline points="24.2,28.0 32.4,32.4 39.4,27.4" fill="none" stroke="#2c2c24" stroke-width="0.85" /><polyline points="25.5,22.2 32.4,32.4" fill="none" stroke="#303028" stroke-width="0.75" /><polyline points="32.3,25.8 24.2,28.0" fill="none" stroke="#303028" stroke-width="0.75" /><polyline points="32.3,25.8 39.4,27.4" fill="none" stroke="#22221a" stroke-width="0.75" /><polyline points="38.0,21.7 32.4,32.4" fill="none" stroke="#22221a" stroke-width="0.75" /><polyline points="25.5,22.2 39.4,27.4" fill="none" stroke="#6a6a5e" stroke-width="0.5" /><polyline points="25.9,22.2 32.1,31.9" fill="none" stroke="#ecece0" stroke-width="0.45" /><polyline points="32.8,26.1 38.9,27.4" fill="none" stroke="#c8c8bc" stroke-width="0.35" /><polyline points="22.9,33.8 32.5,38.9 40.7,33.1" fill="none" stroke="#2c2c24" stroke-width="0.85" /><polyline points="24.2,28.0 32.5,38.9" fill="none" stroke="#303028" stroke-width="0.75" /><polyline points="32.4,32.4 22.9,33.8" fill="none" stroke="#303028" stroke-width="0.75" /><polyline points="32.4,32.4 40.7,33.1" fill="none" stroke="#22221a" stroke-width="0.75" /><polyline points="39.4,27.4 32.5,38.9" fill="none" stroke="#22221a" stroke-width="0.75" /><polyline points="24.2,28.0 40.7,33.1" fill="none" stroke="#6a6a5e" stroke-width="0.5" /><polyline points="24.5,28.0 32.2,38.5" fill="none" stroke="#ecece0" stroke-width="0.45" /><polyline points="32.9,32.7 40.2,33.1" fill="none" stroke="#c8c8bc" stroke-width="0.35" /><polyline points="21.6,39.6 32.6,45.5 42.0,38.9" fill="none" stroke="#2c2c24" stroke-width="0.85" /><polyline points="22.9,33.8 32.6,45.5" fill="none" stroke="#303028" stroke-width="0.75" /><polyline points="32.5,38.9 21.6,39.6" fill="none" stroke="#303028" stroke-width="0.75" /><polyline points="32.5,38.9 42.0,38.9" fill="none" stroke="#22221a" stroke-width="0.75" /><polyline points="40.7,33.1 32.6,45.5" fill="none" stroke="#22221a" stroke-width="0.75" /><polyline points="22.9,33.8 42.0,38.9" fill="none" stroke="#6a6a5e" stroke-width="0.5" /><polyline points="23.2,33.8 32.3,45.1" fill="none" stroke="#ecece0" stroke-width="0.45" /><polyline points="33.0,39.3 41.5,38.9" fill="none" stroke="#c8c8bc" stroke-width="0.35" /><polyline points="31.8,-1.1 31.8,-2.6" fill="none" stroke="#111" stroke-width="1.1" /><polyline points="31.2,-2.0 32.4,-2.0" fill="none" stroke="#111" stroke-width="0.9" /><polyline points="92.1,45.5 94.5,42.4" fill="none" stroke="#4a4a40" stroke-width="0.9" /><polyline points="92.1,42.9 94.8,45.2" fill="none" stroke="#4a4a40" stroke-width="0.8" /><polyline points="95.1,45.1 97.5,42.0" fill="none" stroke="#4a4a40" stroke-width="0.9" /><polyline points="95.1,42.5 97.8,44.8" fill="none" stroke="#4a4a40" stroke-width="0.8" /><polyline points="98.1,44.8 100.5,41.6" fill="none" stroke="#4a4a40" stroke-width="0.9" /><polyline points="98.1,42.1 100.8,44.4" fill="none" stroke="#4a4a40" stroke-width="0.8" /><polyline points="101.1,44.4 103.4,41.2" fill="none" stroke="#4a4a40" stroke-width="0.9" /><polyline points="101.1,41.7 103.8,44.0" fill="none" stroke="#4a4a40" stroke-width="0.8" /><polyline points="104.1,44.0 106.4,40.8" fill="none" stroke="#4a4a40" stroke-width="0.9" /><polyline points="104.1,41.3 106.7,43.7" fill="none" stroke="#4a4a40" stroke-width="0.8" /><polyline points="107.1,43.6 109.4,40.4" fill="none" stroke="#4a4a40" stroke-width="0.9" /><polyline points="107.1,40.9 109.7,43.3" fill="none" stroke="#4a4a40" stroke-width="0.8" /><polyline points="86.8,46.3 110.6,42.8" fill="none" stroke="#3c3c34" stroke-width="1.1" /><polyline points="96.2,39.6 111.4,40.0" fill="none" stroke="#3c3c34" stroke-width="1.0" /><polyline points="75.8,40.4 85.1,-0.3" fill="none" stroke="#24241c" stroke-width="1.1" /><polyline points="86.8,46.3 86.2,0.2" fill="none" stroke="#1a1a14" stroke-width="1.3" /><polyline points="96.2,39.6 86.9,-0.4" fill="none" stroke="#24241c" stroke-width="1.1" /><polyline points="83.7,5.5 86.2,6.8 88.3,5.3" fill="none" stroke="#2c2c24" stroke-width="0.85" /><polyline points="85.1,-0.3 86.2,6.8" fill="none" stroke="#303028" stroke-width="0.75" /><polyline points="86.2,0.2 83.7,5.5" fill="none" stroke="#303028" stroke-width="0.75" /><polyline points="86.2,0.2 88.3,5.3" fill="none" stroke="#22221a" stroke-width="0.75" /><polyline points="86.9,-0.4 86.2,6.8" fill="none" stroke="#22221a" stroke-width="0.75" /><polyline points="85.1,-0.3 88.3,5.3" fill="none" stroke="#6a6a5e" stroke-width="0.5" /><polyline points="85.4,-0.3 85.9,6.3" fill="none" stroke="#ecece0" stroke-width="0.45" /><polyline points="86.6,0.5 87.8,5.3" fill="none" stroke="#c8c8bc" stroke-width="0.35" /><polyline points="82.4,11.4 86.3,13.4 89.6,11.0" fill="none" stroke="#2c2c24" stroke-width="0.85" /><polyline points="83.7,5.5 86.3,13.4" fill="none" stroke="#303028" stroke-width="0.75" /><polyline points="86.2,6.8 82.4,11.4" fill="none" stroke="#303028" stroke-width="0.75" /><polyline points="86.2,6.8 89.6,11.0" fill="none" stroke="#22221a" stroke-width="0.75" /><polyline points="88.3,5.3 86.3,13.4" fill="none" stroke="#22221a" stroke-width="0.75" /><polyline points="83.7,5.5 89.6,11.0" fill="none" stroke="#6a6a5e" stroke-width="0.5" /><polyline points="84.0,5.5 86.0,12.9" fill="none" stroke="#ecece0" stroke-width="0.45" /><polyline points="86.7,7.1 89.1,11.0" fill="none" stroke="#c8c8bc" stroke-width="0.35" /><polyline points="81.1,17.2 86.4,20.0 90.9,16.7" fill="none" stroke="#2c2c24" stroke-width="0.85" /><polyline points="82.4,11.4 86.4,20.0" fill="none" stroke="#303028" stroke-width="0.75" /><polyline points="86.3,13.4 81.1,17.2" fill="none" stroke="#303028" stroke-width="0.75" /><polyline points="86.3,13.4 90.9,16.7" fill="none" stroke="#22221a" stroke-width="0.75" /><polyline points="89.6,11.0 86.4,20.0" fill="none" stroke="#22221a" stroke-width="0.75" /><polyline points="82.4,11.4 90.9,16.7" fill="none" stroke="#6a6a5e" stroke-width="0.5" /><polyline points="82.7,11.4 86.1,19.5" fill="none" stroke="#ecece0" stroke-width="0.45" /><polyline points="86.8,13.7 90.4,16.7" fill="none" stroke="#c8c8bc" stroke-width="0.35" /><polyline points="79.8,23.0 86.5,26.6 92.2,22.5" fill="none" stroke="#2c2c24" stroke-width="0.85" /><polyline points="81.1,17.2 86.5,26.6" fill="none" stroke="#303028" stroke-width="0.75" /><polyline points="86.4,20.0 79.8,23.0" fill="none" stroke="#303028" stroke-width="0.75" /><polyline points="86.4,20.0 92.2,22.5" fill="none" stroke="#22221a" stroke-width="0.75" /><polyline points="90.9,16.7 86.5,26.6" fill="none" stroke="#22221a" stroke-width="0.75" /><polyline points="81.1,17.2 92.2,22.5" fill="none" stroke="#6a6a5e" stroke-width="0.5" /><polyline points="81.4,17.2 86.2,26.1" fill="none" stroke="#ecece0" stroke-width="0.45" /><polyline points="86.9,20.3 91.8,22.5" fill="none" stroke="#c8c8bc" stroke-width="0.35" /><polyline points="78.4,28.8 86.6,33.1 93.6,28.2" fill="none" stroke="#2c2c24" stroke-width="0.85" /><polyline points="79.8,23.0 86.6,33.1" fill="none" stroke="#303028" stroke-width="0.75" /><polyline points="86.5,26.6 78.4,28.8" fill="none" stroke="#303028" stroke-width="0.75" /><polyline points="86.5,26.6 93.6,28.2" fill="none" stroke="#22221a" stroke-width="0.75" /><polyline points="92.2,22.5 86.6,33.1" fill="none" stroke="#22221a" stroke-width="0.75" /><polyline points="79.8,23.0 93.6,28.2" fill="none" stroke="#6a6a5e" stroke-width="0.5" /><polyline points="80.1,23.0 86.3,32.7" fill="none" stroke="#ecece0" stroke-width="0.45" /><polyline points="87.0,26.9 93.1,28.2" fill="none" stroke="#c8c8bc" stroke-width="0.35" /><polyline points="77.1,34.6 86.7,39.7 94.9,33.9" fill="none" stroke="#2c2c24" stroke-width="0.85" /><polyline points="78.4,28.8 86.7,39.7" fill="none" stroke="#303028" stroke-width="0.75" /><polyline points="86.6,33.1 77.1,34.6" fill="none" stroke="#303028" stroke-width="0.75" /><polyline points="86.6,33.1 94.9,33.9" fill="none" stroke="#22221a" stroke-width="0.75" /><polyline points="93.6,28.2 86.7,39.7" fill="none" stroke="#22221a" stroke-width="0.75" /><polyline points="78.4,28.8 94.9,33.9" fill="none" stroke="#6a6a5e" stroke-width="0.5" /><polyline points="78.8,28.8 86.4,39.3" fill="none" stroke="#ecece0" stroke-width="0.45" /><polyline points="87.1,33.5 94.4,33.9" fill="none" stroke="#c8c8bc" stroke-width="0.35" /><polyline points="75.8,40.4 86.8,46.3 96.2,39.6" fill="none" stroke="#2c2c24" stroke-width="0.85" /><polyline points="77.1,34.6 86.8,46.3" fill="none" stroke="#303028" stroke-width="0.75" /><polyline points="86.7,39.7 75.8,40.4" fill="none" stroke="#303028" stroke-width="0.75" /><polyline points="86.7,39.7 96.2,39.6" fill="none" stroke="#22221a" stroke-width="0.75" /><polyline points="94.9,33.9 86.8,46.3" fill="none" stroke="#22221a" stroke-width="0.75" /><polyline points="77.1,34.6 96.2,39.6" fill="none" stroke="#6a6a5e" stroke-width="0.5" /><polyline points="77.4,34.6 86.5,45.9" fill="none" stroke="#ecece0" stroke-width="0.45" /><polyline points="87.2,40.0 95.7,39.6" fill="none" stroke="#c8c8bc" stroke-width="0.35" /><polyline points="86.0,-0.3 86.0,-1.8" fill="none" stroke="#111" stroke-width="1.1" /><polyline points="85.4,-1.2 86.6,-1.2" fill="none" stroke="#111" stroke-width="0.9" /><polyline points="67.2,59.7 69.6,56.5" fill="none" stroke="#4a4a40" stroke-width="0.9" /><polyline points="67.2,57.0 69.9,59.4" fill="none" stroke="#4a4a40" stroke-width="0.8" /><polyline points="70.2,59.3 72.6,56.1" fill="none" stroke="#4a4a40" stroke-width="0.9" /><polyline points="70.2,56.6 72.9,59.0" fill="none" stroke="#4a4a40" stroke-width="0.8" /><polyline points="73.2,58.9 75.6,55.8" fill="none" stroke="#4a4a40" stroke-width="0.9" /><polyline points="73.2,56.2 75.9,58.6" fill="none" stroke="#4a4a40" stroke-width="0.8" /><polyline points="76.2,58.5 78.5,55.4" fill="none" stroke="#4a4a40" stroke-width="0.9" /><polyline points="76.2,55.8 78.9,58.2" fill="none" stroke="#4a4a40" stroke-width="0.8" /><polyline points="79.2,58.1 81.5,55.0" fill="none" stroke="#4a4a40" stroke-width="0.9" /><polyline points="79.2,55.4 81.8,57.8" fill="none" stroke="#4a4a40" stroke-width="0.8" /><polyline points="82.2,57.7 84.5,54.6" fill="none" stroke="#4a4a40" stroke-width="0.9" /><polyline points="82.2,55.0 84.8,57.4" fill="none" stroke="#4a4a40" stroke-width="0.8" /><polyline points="61.6,60.5 85.7,56.9" fill="none" stroke="#3c3c34" stroke-width="1.1" /><polyline points="71.5,53.8 86.5,54.2" fill="none" stroke="#3c3c34" stroke-width="1.0" /><polyline points="50.3,54.6 59.9,12.3" fill="none" stroke="#24241c" stroke-width="1.1" /><polyline points="61.6,60.5 61.0,12.8" fill="none" stroke="#1a1a14" stroke-width="1.3" /><polyline points="71.5,53.8 61.8,12.1" fill="none" stroke="#24241c" stroke-width="1.1" /><polyline points="58.5,18.3 61.1,19.6 63.2,18.1" fill="none" stroke="#2c2c24" stroke-width="0.85" /><polyline points="59.9,12.3 61.1,19.6" fill="none" stroke="#303028" stroke-width="0.75" /><polyline points="61.0,12.8 58.5,18.3" fill="none" stroke="#303028" stroke-width="0.75" /><polyline points="61.0,12.8 63.2,18.1" fill="none" stroke="#22221a" stroke-width="0.75" /><polyline points="61.8,12.1 61.1,19.6" fill="none" stroke="#22221a" stroke-width="0.75" /><polyline points="59.9,12.3 63.2,18.1" fill="none" stroke="#6a6a5e" stroke-width="0.5" /><polyline points="60.2,12.3 60.8,19.1" fill="none" stroke="#ecece0" stroke-width="0.45" /><polyline points="61.5,13.1 62.7,18.1" fill="none" stroke="#c8c8bc" stroke-width="0.35" /><polyline points="57.2,24.4 61.2,26.4 64.6,24.0" fill="none" stroke="#2c2c24" stroke-width="0.85" /><polyline points="58.5,18.3 61.2,26.4" fill="none" stroke="#303028" stroke-width="0.75" /><polyline points="61.1,19.6 57.2,24.4" fill="none" stroke="#303028" stroke-width="0.75" /><polyline points="61.1,19.6 64.6,24.0" fill="none" stroke="#22221a" stroke-width="0.75" /><polyline points="63.2,18.1 61.2,26.4" fill="none" stroke="#22221a" stroke-width="0.75" /><polyline points="58.5,18.3 64.6,24.0" fill="none" stroke="#6a6a5e" stroke-width="0.5" /><polyline points="58.8,18.3 60.9,25.9" fill="none" stroke="#ecece0" stroke-width="0.45" /><polyline points="61.6,19.9 64.1,24.0" fill="none" stroke="#c8c8bc" stroke-width="0.35" /><polyline points="55.8,30.4 61.3,33.2 65.9,30.0" fill="none" stroke="#2c2c24" stroke-width="0.85" /><polyline points="57.2,24.4 61.3,33.2" fill="none" stroke="#303028" stroke-width="0.75" /><polyline points="61.2,26.4 55.8,30.4" fill="none" stroke="#303028" stroke-width="0.75" /><polyline points="61.2,26.4 65.9,30.0" fill="none" stroke="#22221a" stroke-width="0.75" /><polyline points="64.6,24.0 61.3,33.2" fill="none" stroke="#22221a" stroke-width="0.75" /><polyline points="57.2,24.4 65.9,30.0" fill="none" stroke="#6a6a5e" stroke-width="0.5" /><polyline points="57.5,24.4 61.0,32.7" fill="none" stroke="#ecece0" stroke-width="0.45" /><polyline points="61.7,26.7 65.5,30.0" fill="none" stroke="#c8c8bc" stroke-width="0.35" /><polyline points="54.4,36.5 61.4,40.0 67.3,35.9" fill="none" stroke="#2c2c24" stroke-width="0.85" /><polyline points="55.8,30.4 61.4,40.0" fill="none" stroke="#303028" stroke-width="0.75" /><polyline points="61.3,33.2 54.4,36.5" fill="none" stroke="#303028" stroke-width="0.75" /><polyline points="61.3,33.2 67.3,35.9" fill="none" stroke="#22221a" stroke-width="0.75" /><polyline points="65.9,30.0 61.4,40.0" fill="none" stroke="#22221a" stroke-width="0.75" /><polyline points="55.8,30.4 67.3,35.9" fill="none" stroke="#6a6a5e" stroke-width="0.5" /><polyline points="56.1,30.4 61.1,39.6" fill="none" stroke="#ecece0" stroke-width="0.45" /><polyline points="61.8,33.5 66.9,35.9" fill="none" stroke="#c8c8bc" stroke-width="0.35" /><polyline points="53.0,42.5 61.5,46.8 68.7,41.9" fill="none" stroke="#2c2c24" stroke-width="0.85" /><polyline points="54.4,36.5 61.5,46.8" fill="none" stroke="#303028" stroke-width="0.75" /><polyline points="61.4,40.0 53.0,42.5" fill="none" stroke="#303028" stroke-width="0.75" /><polyline points="61.4,40.0 68.7,41.9" fill="none" stroke="#22221a" stroke-width="0.75" /><polyline points="67.3,35.9 61.5,46.8" fill="none" stroke="#22221a" stroke-width="0.75" /><polyline points="54.4,36.5 68.7,41.9" fill="none" stroke="#6a6a5e" stroke-width="0.5" /><polyline points="54.7,36.5 61.2,46.4" fill="none" stroke="#ecece0" stroke-width="0.45" /><polyline points="61.8,40.3 68.2,41.9" fill="none" stroke="#c8c8bc" stroke-width="0.35" /><polyline points="51.6,48.5 61.6,53.7 70.1,47.8" fill="none" stroke="#2c2c24" stroke-width="0.85" /><polyline points="53.0,42.5 61.6,53.7" fill="none" stroke="#303028" stroke-width="0.75" /><polyline points="61.5,46.8 51.6,48.5" fill="none" stroke="#303028" stroke-width="0.75" /><polyline points="61.5,46.8 70.1,47.8" fill="none" stroke="#22221a" stroke-width="0.75" /><polyline points="68.7,41.9 61.6,53.7" fill="none" stroke="#22221a" stroke-width="0.75" /><polyline points="53.0,42.5 70.1,47.8" fill="none" stroke="#6a6a5e" stroke-width="0.5" /><polyline points="53.3,42.5 61.2,53.2" fill="none" stroke="#ecece0" stroke-width="0.45" /><polyline points="61.9,47.2 69.6,47.8" fill="none" stroke="#c8c8bc" stroke-width="0.35" /><polyline points="50.3,54.6 61.6,60.5 71.5,53.8" fill="none" stroke="#2c2c24" stroke-width="0.85" /><polyline points="51.6,48.5 61.6,60.5" fill="none" stroke="#303028" stroke-width="0.75" /><polyline points="61.6,53.7 50.3,54.6" fill="none" stroke="#303028" stroke-width="0.75" /><polyline points="61.6,53.7 71.5,53.8" fill="none" stroke="#22221a" stroke-width="0.75" /><polyline points="70.1,47.8 61.6,60.5" fill="none" stroke="#22221a" stroke-width="0.75" /><polyline points="51.6,48.5 71.5,53.8" fill="none" stroke="#6a6a5e" stroke-width="0.5" /><polyline points="51.9,48.5 61.3,60.0" fill="none" stroke="#ecece0" stroke-width="0.45" /><polyline points="62.0,54.0 71.0,53.8" fill="none" stroke="#c8c8bc" stroke-width="0.35" /><polyline points="60.9,12.3 60.9,10.7" fill="none" stroke="#111" stroke-width="1.1" /><polyline points="60.2,11.4 61.5,11.4" fill="none" stroke="#111" stroke-width="0.9" /></svg></div>
<div class="it" style="top:384px"><svg width="128" height="64" viewBox="0 0 128 64"><polygon points="1,32 64,0.3 127,32 64,63.7" fill="#c5c5b9"/><polygon points="37.3,20.8 45.1,15.3 53.0,10.6 64.8,10.6 76.6,13.7 84.4,11.4 96.2,16.1 105.6,23.9 106.4,29.4 96.2,31.0 84.4,33.4 72.6,31.0 60.9,29.4 49.1,27.9 40.4,23.9" fill="#8a6044" /><polygon points="37.3,20.8 45.1,15.3 53.0,11.0 59.3,13.7 65.6,21.6 60.9,29.4 49.1,27.9 40.4,23.9" fill="#c4a77a" /><polygon points="53.0,10.6 64.8,10.6 76.6,13.7 71.9,17.6 65.6,16.1 59.3,13.7" fill="#5e4030" /><polygon points="76.6,13.7 84.4,11.4 96.2,16.1 105.6,23.9 96.2,23.9 84.4,20.0 75.0,19.2" fill="#5e4030" opacity="0.75"/><polygon points="75.0,19.2 84.4,20.0 96.2,23.9 92.3,27.9 80.5,25.5" fill="#c4a77a" opacity="0.55"/><polygon points="46.7,17.6 53.0,13.7 57.7,18.4 54.6,24.7 48.3,23.1" fill="#d4c096" opacity="0.7"/><polygon points="37.3,40.8 20.4,32.4 20.4,28.5 37.3,36.9" fill="#7e4a32" /><polygon points="37.3,40.8 42.2,38.4 42.2,34.4 39.7,33.7 37.3,36.9" fill="#96583a" /><polygon points="37.3,36.9 39.7,33.7 22.9,25.3 20.4,28.5" fill="#a6a29a" /><polygon points="42.2,34.4 39.7,33.7 22.9,25.3 25.3,26.0" fill="#dedac8" /><polygon points="46.7,34.9 29.9,26.5 29.9,22.6 46.7,31.0" fill="#7e4a32" /><polygon points="46.7,34.9 51.6,32.5 51.6,28.5 49.2,27.8 46.7,31.0" fill="#96583a" /><polygon points="46.7,31.0 49.2,27.8 32.3,19.4 29.9,22.6" fill="#a6a29a" /><polygon points="51.6,28.5 49.2,27.8 32.3,19.4 34.8,20.1" fill="#dedac8" /><polygon points="37.3,40.8 37.3,35.7 39.6,32.6 42.0,34.9 42.0,38.9" fill="#a8603c" /><polygon points="38.5,39.6 38.5,36.5 40.4,35.3 40.4,38.5" fill="#2a1a14" /><polygon points="91.5,42.0 105.6,35.0 105.6,31.7 91.5,38.7" fill="#7e4a32" /><polygon points="91.5,42.0 87.3,39.9 87.3,36.6 89.4,36.0 91.5,38.7" fill="#96583a" /><polygon points="91.5,38.7 89.4,36.0 103.4,29.0 105.6,31.7" fill="#a6a29a" /><polygon points="87.3,36.6 89.4,36.0 103.4,29.0 101.3,29.6" fill="#dedac8" /><polygon points="96.2,44.4 110.3,37.3 110.3,34.0 96.2,41.1" fill="#7e4a32" /><polygon points="96.2,44.4 92.0,42.3 92.0,39.0 94.1,38.4 96.2,41.1" fill="#96583a" /><polygon points="96.2,41.1 94.1,38.4 108.2,31.3 110.3,34.0" fill="#a6a29a" /><polygon points="92.0,39.0 94.1,38.4 108.2,31.3 106.1,31.9" fill="#dedac8" /><polygon points="59.3,37.3 60.7,21.6 62.6,21.6 64.2,37.3 62.4,37.7 61.6,23.9 60.9,37.7" fill="#3c3c38" /><polyline points="59.9,35.7 61.0,22.4" fill="none" stroke="#d8d8d0" stroke-width="0.7" /><polyline points="60.2,31.8 63.2,31.8" fill="none" stroke="#e8e8e0" stroke-width="0.8" /><polyline points="59.9,35.7 63.7,35.7" fill="none" stroke="#e8e8e0" stroke-width="0.8" /><polyline points="60.5,27.1 62.9,27.1" fill="none" stroke="#1a1a18" stroke-width="0.8" /><polygon points="71.9,37.3 73.3,21.6 75.2,21.6 76.7,37.3 75.0,37.7 74.2,23.9 73.4,37.7" fill="#3c3c38" /><polyline points="72.5,35.7 73.6,22.4" fill="none" stroke="#d8d8d0" stroke-width="0.7" /><polyline points="72.8,31.8 75.8,31.8" fill="none" stroke="#e8e8e0" stroke-width="0.8" /><polyline points="72.5,35.7 76.3,35.7" fill="none" stroke="#e8e8e0" stroke-width="0.8" /><polyline points="73.1,27.1 75.5,27.1" fill="none" stroke="#1a1a18" stroke-width="0.8" /><polygon points="49.9,39.6 57.7,39.3 59.3,42.8 51.4,43.6" fill="#2a2a24" /><polyline points="50.6,40.8 58.5,40.4" fill="none" stroke="#c8a860" stroke-width="0.8" /><polygon points="64.0,41.6 71.1,41.2 72.6,44.8 65.6,45.1" fill="#2a2a24" /><polyline points="64.8,43.2 71.9,42.8" fill="none" stroke="#d09a30" stroke-width="0.9" /><polygon points="77.4,42.0 84.4,42.4 88.4,45.9 79.7,45.1" fill="#34322a" /><polyline points="78.1,43.2 86.0,44.0" fill="none" stroke="#c8a860" stroke-width="0.8" /><polyline points="57.7,43.2 88.4,46.3" fill="none" stroke="#1a1a18" stroke-width="0.8" /><polyline points="40.4,52.2 43.6,45.9" fill="none" stroke="#2e2c28" stroke-width="1.6" /><polyline points="44.4,51.9 47.5,45.6" fill="none" stroke="#2e2c28" stroke-width="1.6" /><polyline points="48.3,51.6 51.4,45.3" fill="none" stroke="#2e2c28" stroke-width="1.6" /><polyline points="52.2,51.3 55.4,45.0" fill="none" stroke="#2e2c28" stroke-width="1.6" /><polyline points="56.1,51.0 59.3,44.7" fill="none" stroke="#2e2c28" stroke-width="1.6" /><polyline points="38.1,48.3 46.7,45.1" fill="none" stroke="#2e2c28" stroke-width="1.6" /><polygon points="71.1,58.5 78.8,54.6 78.8,51.2 71.1,55.0" fill="#7e4a32" /><polygon points="71.1,58.5 65.5,55.7 65.5,52.2 68.3,51.4 71.1,55.0" fill="#96583a" /><polygon points="71.1,55.0 68.3,51.4 76.0,47.6 78.8,51.2" fill="#a6a29a" /><polygon points="65.5,52.2 68.3,51.4 76.0,47.6 73.2,48.4" fill="#dedac8" /><polygon points="79.7,54.6 81.3,56.1 81.3,57.7 79.7,58.5" fill="#3a3a36" /></svg></div>
<div class="it" style="top:448px"><svg width="128" height="64" viewBox="0 0 128 64"><polygon points="1,32 64,0.3 127,32 64,63.7" fill="#c5c5b9"/><polygon points="37.3,20.8 45.1,15.3 53.0,10.6 64.8,10.6 76.6,13.7 84.4,11.4 96.2,16.1 105.6,23.9 106.4,29.4 96.2,31.0 84.4,33.4 72.6,31.0 60.9,29.4 49.1,27.9 40.4,23.9" fill="#6a6a66" /><polygon points="37.3,20.8 45.1,15.3 53.0,11.0 59.3,13.7 65.6,21.6 60.9,29.4 49.1,27.9 40.4,23.9" fill="#9a9a94" /><polygon points="53.0,10.6 64.8,10.6 76.6,13.7 71.9,17.6 65.6,16.1 59.3,13.7" fill="#3e3e3c" /><polygon points="76.6,13.7 84.4,11.4 96.2,16.1 105.6,23.9 96.2,23.9 84.4,20.0 75.0,19.2" fill="#3e3e3c" opacity="0.75"/><polygon points="75.0,19.2 84.4,20.0 96.2,23.9 92.3,27.9 80.5,25.5" fill="#9a9a94" opacity="0.55"/><polygon points="46.7,17.6 53.0,13.7 57.7,18.4 54.6,24.7 48.3,23.1" fill="#b8b8b0" opacity="0.7"/><polygon points="37.3,40.8 20.4,32.4 20.4,28.5 37.3,36.9" fill="#7e4a32" /><polygon points="37.3,40.8 42.2,38.4 42.2,34.4 39.7,33.7 37.3,36.9" fill="#96583a" /><polygon points="37.3,36.9 39.7,33.7 22.9,25.3 20.4,28.5" fill="#a6a29a" /><polygon points="42.2,34.4 39.7,33.7 22.9,25.3 25.3,26.0" fill="#dedac8" /><polygon points="46.7,34.9 29.9,26.5 29.9,22.6 46.7,31.0" fill="#7e4a32" /><polygon points="46.7,34.9 51.6,32.5 51.6,28.5 49.2,27.8 46.7,31.0" fill="#96583a" /><polygon points="46.7,31.0 49.2,27.8 32.3,19.4 29.9,22.6" fill="#a6a29a" /><polygon points="51.6,28.5 49.2,27.8 32.3,19.4 34.8,20.1" fill="#dedac8" /><polygon points="37.3,40.8 37.3,35.7 39.6,32.6 42.0,34.9 42.0,38.9" fill="#a8603c" /><polygon points="38.5,39.6 38.5,36.5 40.4,35.3 40.4,38.5" fill="#2a1a14" /><polygon points="91.5,42.0 105.6,35.0 105.6,31.7 91.5,38.7" fill="#7e4a32" /><polygon points="91.5,42.0 87.3,39.9 87.3,36.6 89.4,36.0 91.5,38.7" fill="#96583a" /><polygon points="91.5,38.7 89.4,36.0 103.4,29.0 105.6,31.7" fill="#a6a29a" /><polygon points="87.3,36.6 89.4,36.0 103.4,29.0 101.3,29.6" fill="#dedac8" /><polygon points="96.2,44.4 110.3,37.3 110.3,34.0 96.2,41.1" fill="#7e4a32" /><polygon points="96.2,44.4 92.0,42.3 92.0,39.0 94.1,38.4 96.2,41.1" fill="#96583a" /><polygon points="96.2,41.1 94.1,38.4 108.2,31.3 110.3,34.0" fill="#a6a29a" /><polygon points="92.0,39.0 94.1,38.4 108.2,31.3 106.1,31.9" fill="#dedac8" /><polygon points="59.3,37.3 60.7,21.6 62.6,21.6 64.2,37.3 62.4,37.7 61.6,23.9 60.9,37.7" fill="#3c3c38" /><polyline points="59.9,35.7 61.0,22.4" fill="none" stroke="#d8d8d0" stroke-width="0.7" /><polyline points="60.2,31.8 63.2,31.8" fill="none" stroke="#e8e8e0" stroke-width="0.8" /><polyline points="59.9,35.7 63.7,35.7" fill="none" stroke="#e8e8e0" stroke-width="0.8" /><polyline points="60.5,27.1 62.9,27.1" fill="none" stroke="#1a1a18" stroke-width="0.8" /><polygon points="71.9,37.3 73.3,21.6 75.2,21.6 76.7,37.3 75.0,37.7 74.2,23.9 73.4,37.7" fill="#3c3c38" /><polyline points="72.5,35.7 73.6,22.4" fill="none" stroke="#d8d8d0" stroke-width="0.7" /><polyline points="72.8,31.8 75.8,31.8" fill="none" stroke="#e8e8e0" stroke-width="0.8" /><polyline points="72.5,35.7 76.3,35.7" fill="none" stroke="#e8e8e0" stroke-width="0.8" /><polyline points="73.1,27.1 75.5,27.1" fill="none" stroke="#1a1a18" stroke-width="0.8" /><polygon points="49.9,39.6 57.7,39.3 59.3,42.8 51.4,43.6" fill="#2a2a24" /><polyline points="50.6,40.8 58.5,40.4" fill="none" stroke="#c8a860" stroke-width="0.8" /><polygon points="64.0,41.6 71.1,41.2 72.6,44.8 65.6,45.1" fill="#2a2a24" /><polyline points="64.8,43.2 71.9,42.8" fill="none" stroke="#d09a30" stroke-width="0.9" /><polygon points="77.4,42.0 84.4,42.4 88.4,45.9 79.7,45.1" fill="#34322a" /><polyline points="78.1,43.2 86.0,44.0" fill="none" stroke="#c8a860" stroke-width="0.8" /><polyline points="57.7,43.2 88.4,46.3" fill="none" stroke="#1a1a18" stroke-width="0.8" /><polyline points="40.4,52.2 43.6,45.9" fill="none" stroke="#2e2c28" stroke-width="1.6" /><polyline points="44.4,51.9 47.5,45.6" fill="none" stroke="#2e2c28" stroke-width="1.6" /><polyline points="48.3,51.6 51.4,45.3" fill="none" stroke="#2e2c28" stroke-width="1.6" /><polyline points="52.2,51.3 55.4,45.0" fill="none" stroke="#2e2c28" stroke-width="1.6" /><polyline points="56.1,51.0 59.3,44.7" fill="none" stroke="#2e2c28" stroke-width="1.6" /><polyline points="38.1,48.3 46.7,45.1" fill="none" stroke="#2e2c28" stroke-width="1.6" /><polygon points="71.1,58.5 78.8,54.6 78.8,51.2 71.1,55.0" fill="#7e4a32" /><polygon points="71.1,58.5 65.5,55.7 65.5,52.2 68.3,51.4 71.1,55.0" fill="#96583a" /><polygon points="71.1,55.0 68.3,51.4 76.0,47.6 78.8,51.2" fill="#a6a29a" /><polygon points="65.5,52.2 68.3,51.4 76.0,47.6 73.2,48.4" fill="#dedac8" /><polygon points="79.7,54.6 81.3,56.1 81.3,57.7 79.7,58.5" fill="#3a3a36" /></svg></div>
<div class="it" style="top:512px"><svg width="128" height="64" viewBox="0 0 128 64"><polygon points="1,32 64,0.3 127,32 64,63.7" fill="#c5c5b9"/><polygon points="12.1,34.9 16.9,32.6 35.7,42.0 53.0,51.4 64.8,52.2 53.0,53.9 45.1,52.2 27.9,43.6" fill="url(#chk)" /><polygon points="85.2,40.4 90.7,37.3 97.0,34.9 97.8,37.3 89.1,42.8" fill="url(#chk)" /><polygon points="51.4,29.4 65.6,23.9 76.6,29.4 62.4,40.4 53.0,42.0" fill="#969286" /><polygon points="62.4,24.7 66.4,23.1 73.4,27.9 71.1,30.2" fill="url(#chk)" /><ellipse cx="21.6" cy="26.3" rx="4.6" ry="7.9" fill="#474d1f" /><ellipse cx="21.7" cy="28.6" rx="1.7" ry="2.7" fill="#585d28" /><ellipse cx="20.9" cy="24.3" rx="1.4" ry="3.0" fill="#39401a" /><ellipse cx="21.5" cy="27.7" rx="2.3" ry="2.5" fill="#696e37" /><ellipse cx="22.4" cy="23.0" rx="1.9" ry="2.1" fill="#585d28" /><ellipse cx="20.0" cy="22.5" rx="1.8" ry="2.8" fill="#39401a" /><ellipse cx="66.4" cy="5.9" rx="4.3" ry="6.7" fill="#474d1f" /><ellipse cx="66.4" cy="6.8" rx="1.6" ry="1.8" fill="#585d28" /><ellipse cx="67.7" cy="6.1" rx="2.1" ry="2.5" fill="#39401a" /><ellipse cx="66.5" cy="3.3" rx="1.8" ry="1.9" fill="#696e37" /><ellipse cx="66.8" cy="6.6" rx="1.5" ry="2.6" fill="#585d28" /><ellipse cx="67.3" cy="2.4" rx="2.0" ry="1.9" fill="#39401a" /><polygon points="41.2,14.1 46.3,6.3 52.6,18.8 52.6,24.7 42.0,19.6" fill="#b8a683" /><polygon points="52.6,18.8 65.6,13.7 65.6,21.6 53.0,25.9" fill="#c4baa5" /><polygon points="46.3,6.3 59.3,2.3 65.6,13.7 52.6,18.8" fill="#513a2d" /><polygon points="46.3,6.3 59.3,2.3 60.9,5.5 48.3,9.8" fill="#694d3a" /><polyline points="54.6,23.9 54.6,21.1" fill="none" stroke="#403229" stroke-width="0.9" /><polyline points="57.7,22.9 57.7,20.0" fill="none" stroke="#403229" stroke-width="0.9" /><polyline points="60.9,21.8 60.9,18.9" fill="none" stroke="#403229" stroke-width="0.9" /><polyline points="64.0,20.7 64.0,17.9" fill="none" stroke="#403229" stroke-width="0.9" /><polyline points="43.8,19.0 43.8,16.7" fill="none" stroke="#5b4530" stroke-width="0.8" /><polyline points="47.3,20.7 47.3,18.4" fill="none" stroke="#5b4530" stroke-width="0.8" /><polyline points="50.8,22.4 50.8,20.1" fill="none" stroke="#5b4530" stroke-width="0.8" /><polygon points="44.4,6.6 45.9,6.6 45.9,2.7 44.4,2.7" fill="#baac8a" /><polygon points="59.3,2.7 60.9,2.7 60.9,-1.2 59.3,-1.2" fill="#ac9e8a" /><polygon points="66.4,17.6 80.5,25.5 80.5,31.0 66.4,23.1" fill="#c6c2b8" /><polygon points="67.1,13.7 73.4,8.2 95.4,19.2 90.7,29.4 76.6,21.6" fill="#352e2d" /><polygon points="73.4,8.2 95.4,19.2 94.3,21.6 72.3,10.6" fill="#473e3e" /><polyline points="68.1,22.7 68.1,20.4" fill="none" stroke="#494540" stroke-width="0.8" /><polyline points="71.7,24.7 71.7,22.3" fill="none" stroke="#494540" stroke-width="0.8" /><polyline points="75.2,26.6 75.2,24.3" fill="none" stroke="#494540" stroke-width="0.8" /><polyline points="78.7,28.6 78.7,26.2" fill="none" stroke="#494540" stroke-width="0.8" /><polygon points="89.9,29.4 100.1,34.9 106.4,31.8 106.4,36.5 100.9,38.9 89.9,33.4" fill="#baaf9e" /><polygon points="92.3,29.4 99.4,25.5 106.8,31.4 100.1,35.3" fill="#3c3032" /><polyline points="89.9,29.8 94.6,23.9 96.2,25.1" fill="none" stroke="#ac907c" stroke-width="1.0" /><ellipse cx="107.2" cy="22.4" rx="9.8" ry="7.9" fill="#474d1f" /><ellipse cx="104.0" cy="19.1" rx="4.5" ry="3.1" fill="#585d28" /><ellipse cx="106.9" cy="17.5" rx="3.0" ry="2.5" fill="#39401a" /><ellipse cx="111.1" cy="20.4" rx="4.7" ry="2.1" fill="#696e37" /><ellipse cx="104.5" cy="22.0" rx="4.0" ry="2.6" fill="#585d28" /><ellipse cx="109.9" cy="21.8" rx="3.5" ry="3.0" fill="#39401a" /><polygon points="25.5,27.1 48.3,37.7 53.0,34.9 54.6,42.0 49.1,47.1 25.5,35.3" fill="#c8c6bd" /><polygon points="48.3,37.7 53.0,34.9 54.6,42.0 49.1,47.1" fill="#9b978d" /><polygon points="26.3,25.5 32.6,20.8 39.6,18.8 53.0,27.1 48.3,36.9 34.9,30.2" fill="#303a4a" /><polygon points="32.6,20.8 39.6,18.8 53.0,27.1 52.2,29.0" fill="#414d60" /><polyline points="34.9,21.6 37.3,29.4" fill="none" stroke="#242d3a" stroke-width="1.0" /><polyline points="27.5,34.9 27.5,32.2" fill="none" stroke="#242429" stroke-width="1.0" /><polyline points="31.4,36.9 31.4,34.2" fill="none" stroke="#242429" stroke-width="1.0" /><polyline points="35.3,38.8 35.3,36.1" fill="none" stroke="#242429" stroke-width="1.0" /><polyline points="39.3,40.8 39.3,38.1" fill="none" stroke="#242429" stroke-width="1.0" /><polyline points="43.2,42.7 43.2,40.1" fill="none" stroke="#242429" stroke-width="1.0" /><polyline points="47.1,44.7 47.1,42.0" fill="none" stroke="#242429" stroke-width="1.0" /><polyline points="27.5,29.0 27.5,27.0" fill="none" stroke="#323237" stroke-width="0.9" /><polyline points="31.4,31.0 31.4,28.9" fill="none" stroke="#323237" stroke-width="0.9" /><polyline points="35.3,32.9 35.3,30.9" fill="none" stroke="#323237" stroke-width="0.9" /><polyline points="39.3,34.9 39.3,32.8" fill="none" stroke="#323237" stroke-width="0.9" /><polyline points="43.2,36.9 43.2,34.8" fill="none" stroke="#323237" stroke-width="0.9" /><polyline points="47.1,38.8 47.1,36.8" fill="none" stroke="#323237" stroke-width="0.9" /><polygon points="29.8,20.4 31.4,20.4 31.4,16.5 29.8,16.5" fill="#bab6ac" /><polygon points="66.4,48.3 91.5,34.5 91.5,39.6 67.1,53.0" fill="#a89075" /><polygon points="51.4,45.1 57.7,51.4 66.4,48.3 67.1,53.0 56.1,53.0 50.6,48.3" fill="#5b4030" /><polygon points="51.4,45.1 80.5,28.6 91.5,33.8 65.6,48.7 57.7,51.8" fill="#35261d" /><polygon points="80.5,28.6 91.5,33.8 89.9,35.7 78.9,30.6" fill="#4a372d" /><polygon points="61.3,43.6 62.4,41.1 63.5,43.1 63.4,44.5" fill="#ac9075" /><polygon points="62.1,42.9 62.9,42.8 62.9,43.9 62.1,44.0" fill="#402d22" /><polygon points="67.6,40.4 68.7,37.9 69.8,40.0 69.7,41.4" fill="#ac9075" /><polygon points="68.4,39.8 69.2,39.6 69.2,40.7 68.4,40.9" fill="#402d22" /><polygon points="73.9,37.3 75.0,34.8 76.1,36.8 75.9,38.2" fill="#ac9075" /><polygon points="74.7,36.7 75.5,36.5 75.5,37.6 74.7,37.8" fill="#402d22" /><polygon points="80.2,34.1 81.3,31.6 82.4,33.7 82.2,35.1" fill="#ac9075" /><polygon points="81.0,33.5 81.8,33.4 81.8,34.5 81.0,34.6" fill="#402d22" /><polyline points="69.2,50.5 69.2,48.1" fill="none" stroke="#402d22" stroke-width="0.9" /><polyline points="73.2,48.2 73.2,45.9" fill="none" stroke="#402d22" stroke-width="0.9" /><polyline points="77.3,46.0 77.3,43.7" fill="none" stroke="#402d22" stroke-width="0.9" /><polyline points="81.4,43.8 81.4,41.4" fill="none" stroke="#402d22" stroke-width="0.9" /><polyline points="85.4,41.6 85.4,39.2" fill="none" stroke="#402d22" stroke-width="0.9" /><polyline points="89.5,39.3 89.5,37.0" fill="none" stroke="#402d22" stroke-width="0.9" /><polygon points="57.7,52.2 65.6,51.4 64.8,53.0 59.3,53.4" fill="url(#chk)" /></svg></div>
<div class="it" style="top:576px"><svg width="128" height="64" viewBox="0 0 128 64"><polygon points="1,32 64,0.3 127,32 64,63.7" fill="#c5c5b9"/><polygon points="10.6,31.0 16.1,29.4 53.0,47.5 54.6,49.9 46.7,49.1 27.9,42.0" fill="url(#chk)" /><polygon points="60.9,46.7 76.6,42.0 108.0,37.3 100.1,45.1 84.4,53.0 72.6,53.9" fill="url(#chk)" /><polygon points="64.8,20.0 68.7,17.6 76.6,23.9 71.9,26.3" fill="url(#chk)" /><polygon points="51.4,24.7 65.6,21.6 70.3,29.4 59.3,34.9 53.0,32.6" fill="#9e9b8f" /><ellipse cx="21.6" cy="23.9" rx="4.7" ry="7.9" fill="#494f20" /><ellipse cx="19.8" cy="24.1" rx="2.3" ry="2.5" fill="#5a5f28" /><ellipse cx="19.7" cy="23.0" rx="1.6" ry="2.6" fill="#3a411a" /><ellipse cx="20.0" cy="20.4" rx="1.5" ry="2.3" fill="#6b7138" /><ellipse cx="23.5" cy="25.2" rx="2.1" ry="2.0" fill="#5a5f28" /><ellipse cx="24.1" cy="22.7" rx="2.0" ry="2.7" fill="#3a411a" /><polygon points="46.7,24.7 70.3,12.1 70.3,19.2 48.3,30.2" fill="#a2886d" /><polygon points="38.9,17.6 64.8,3.5 70.3,12.1 46.7,25.1" fill="#3e2e25" /><polygon points="64.8,3.5 70.3,12.1 68.7,13.7 63.2,5.5" fill="#4f3c31" /><polygon points="49.3,15.8 50.4,13.3 51.5,15.3 51.4,16.7" fill="#b09478" /><polygon points="50.1,15.1 50.9,15.0 50.9,16.1 50.1,16.2" fill="#412e23" /><polygon points="53.7,13.6 54.8,11.1 55.9,13.1 55.7,14.6" fill="#b09478" /><polygon points="54.5,13.0 55.2,12.8 55.2,13.9 54.5,14.1" fill="#412e23" /><polygon points="58.0,11.5 59.1,8.9 60.2,11.0 60.0,12.4" fill="#b09478" /><polygon points="58.8,10.8 59.6,10.7 59.6,11.8 58.8,11.9" fill="#412e23" /><polygon points="62.3,9.3 63.4,6.8 64.5,8.8 64.4,10.2" fill="#b09478" /><polygon points="63.1,8.7 63.9,8.5 63.9,9.6 63.1,9.8" fill="#412e23" /><polyline points="50.5,27.7 50.5,25.5" fill="none" stroke="#412e23" stroke-width="0.9" /><polyline points="54.9,25.5 54.9,23.3" fill="none" stroke="#412e23" stroke-width="0.9" /><polyline points="59.3,23.3 59.3,21.1" fill="none" stroke="#412e23" stroke-width="0.9" /><polyline points="63.7,21.1 63.7,18.9" fill="none" stroke="#412e23" stroke-width="0.9" /><polyline points="68.1,18.9 68.1,16.7" fill="none" stroke="#412e23" stroke-width="0.9" /><polygon points="40.8,12.1 42.4,12.1 42.4,8.2 40.8,8.2" fill="#b0a28d" /><polygon points="65.2,1.1 66.8,1.1 66.8,-2.8 65.2,-2.8" fill="#b0a28d" /><polygon points="71.1,13.7 94.6,24.3 101.7,18.8 102.5,29.4 95.4,33.8 80.5,27.9 71.9,21.6" fill="#cccac0" /><polygon points="94.6,24.3 101.7,18.8 102.5,29.4 95.4,33.8" fill="#a4a096" /><polygon points="71.9,12.1 77.4,6.6 85.2,8.2 99.4,13.7 94.6,23.5 80.5,17.6" fill="#404f64" /><polygon points="77.4,6.6 85.2,8.2 99.4,13.7 98.2,15.7 83.6,10.2" fill="#546379" /><polyline points="85.2,8.2 80.5,17.6" fill="none" stroke="#283343" stroke-width="1.0" /><polyline points="73.8,21.2 73.8,18.5" fill="none" stroke="#25252a" stroke-width="1.0" /><polyline points="77.8,23.2 77.8,20.5" fill="none" stroke="#25252a" stroke-width="1.0" /><polyline points="81.7,25.2 81.7,22.6" fill="none" stroke="#25252a" stroke-width="1.0" /><polyline points="85.6,27.3 85.6,24.6" fill="none" stroke="#25252a" stroke-width="1.0" /><polyline points="89.5,29.3 89.5,26.6" fill="none" stroke="#25252a" stroke-width="1.0" /><polyline points="93.5,31.3 93.5,28.7" fill="none" stroke="#25252a" stroke-width="1.0" /><polygon points="75.8,5.1 77.4,5.1 77.4,1.1 75.8,1.1" fill="#b7b4a9" /><polygon points="84.8,4.3 86.4,4.3 86.4,0.4 84.8,0.4" fill="#b7b4a9" /><polygon points="99.4,11.4 100.9,11.4 100.9,7.4 99.4,7.4" fill="#b7b4a9" /><ellipse cx="108.0" cy="24.7" rx="5.5" ry="9.8" fill="#494f20" /><ellipse cx="105.7" cy="24.4" rx="2.4" ry="2.7" fill="#5a5f28" /><ellipse cx="109.8" cy="24.0" rx="2.0" ry="3.6" fill="#3a411a" /><ellipse cx="107.2" cy="20.0" rx="2.3" ry="3.4" fill="#6b7138" /><ellipse cx="109.2" cy="26.5" rx="1.8" ry="3.8" fill="#5a5f28" /><ellipse cx="110.5" cy="25.5" rx="1.7" ry="3.5" fill="#3a411a" /><polygon points="23.1,29.4 46.7,40.8 46.7,47.1 23.1,35.7" fill="#b4ab92" /><polygon points="23.9,28.6 29.4,20.0 51.4,31.0 46.7,40.0" fill="#373038" /><polygon points="29.4,20.0 51.4,31.0 50.3,33.0 28.5,22.0" fill="#4b434d" /><polyline points="25.1,35.3 25.1,32.9" fill="none" stroke="#332e2a" stroke-width="0.9" /><polyline points="29.0,37.1 29.0,34.8" fill="none" stroke="#332e2a" stroke-width="0.9" /><polyline points="33.0,39.0 33.0,36.7" fill="none" stroke="#332e2a" stroke-width="0.9" /><polyline points="36.9,40.9 36.9,38.6" fill="none" stroke="#332e2a" stroke-width="0.9" /><polyline points="40.8,42.8 40.8,40.5" fill="none" stroke="#332e2a" stroke-width="0.9" /><polyline points="44.8,44.7 44.8,42.4" fill="none" stroke="#332e2a" stroke-width="0.9" /><polygon points="27.9,16.1 29.4,16.1 29.4,12.1 27.9,12.1" fill="#b0a99b" /><polygon points="57.7,45.9 61.6,41.6 63.6,45.1 59.3,49.5" fill="#b4ab92" /><polygon points="48.3,40.4 53.0,36.5 62.0,41.2 57.7,46.1" fill="#3d333c" /><polygon points="46.7,42.0 48.3,40.8 48.3,46.7 46.7,47.1" fill="#1a1715" /><ellipse cx="71.1" cy="35.7" rx="6.7" ry="7.5" fill="#494f20" /><ellipse cx="70.9" cy="38.2" rx="2.9" ry="2.8" fill="#5a5f28" /><ellipse cx="71.8" cy="36.9" rx="2.2" ry="2.1" fill="#3a411a" /><ellipse cx="70.9" cy="33.1" rx="2.7" ry="2.1" fill="#6b7138" /><ellipse cx="70.4" cy="37.5" rx="3.1" ry="2.5" fill="#5a5f28" /><ellipse cx="73.0" cy="35.2" rx="2.2" ry="2.8" fill="#3a411a" /><ellipse cx="80.5" cy="42.8" rx="7.9" ry="6.3" fill="#494f20" /><ellipse cx="83.2" cy="43.9" rx="3.4" ry="2.5" fill="#5a5f28" /><ellipse cx="80.2" cy="44.0" rx="3.5" ry="2.2" fill="#3a411a" /><ellipse cx="79.4" cy="44.8" rx="3.0" ry="2.3" fill="#6b7138" /><ellipse cx="82.1" cy="43.3" rx="3.8" ry="1.9" fill="#5a5f28" /><ellipse cx="80.3" cy="45.2" rx="3.3" ry="1.7" fill="#3a411a" /><ellipse cx="90.7" cy="38.9" rx="6.7" ry="7.5" fill="#494f20" /><ellipse cx="92.0" cy="37.8" rx="3.0" ry="2.0" fill="#5a5f28" /><ellipse cx="92.1" cy="38.0" rx="3.2" ry="2.6" fill="#3a411a" /><ellipse cx="93.0" cy="34.9" rx="2.3" ry="2.2" fill="#6b7138" /><ellipse cx="90.2" cy="36.0" rx="2.4" ry="2.1" fill="#5a5f28" /><ellipse cx="92.8" cy="35.2" rx="3.1" ry="2.1" fill="#3a411a" /><ellipse cx="100.1" cy="37.3" rx="5.9" ry="6.3" fill="#494f20" /><ellipse cx="98.7" cy="38.4" rx="2.3" ry="2.0" fill="#5a5f28" /><ellipse cx="98.0" cy="38.1" rx="2.1" ry="2.2" fill="#3a411a" /><ellipse cx="101.9" cy="36.8" rx="2.2" ry="1.7" fill="#6b7138" /><ellipse cx="100.1" cy="34.7" rx="2.7" ry="2.5" fill="#5a5f28" /><ellipse cx="100.1" cy="39.9" rx="2.7" ry="2.2" fill="#3a411a" /></svg></div>
<div class="it" style="top:640px"><svg width="128" height="64" viewBox="0 0 128 64"><polygon points="1,32 64,0.3 127,32 64,63.7" fill="#c5c5b9"/><polygon points="3.5,33.4 8.2,30.2 26.3,42.0 24.7,45.1 13.7,40.4" fill="url(#chk)" /><polygon points="39.6,51.4 42.8,49.1 49.1,54.6 46.7,56.5" fill="url(#chk)" /><polygon points="29.4,42.0 45.1,35.7 53.0,42.0 38.9,49.1" fill="#7b7b76" /><polygon points="59.3,29.4 68.7,23.1 80.5,29.4 68.7,35.7" fill="#88867f" /><polygon points="67.1,21.6 71.1,18.4 78.1,24.7 75.0,27.1" fill="url(#chk)" /><ellipse cx="69.5" cy="2.7" rx="4.3" ry="5.5" fill="#212a19" /><ellipse cx="70.5" cy="4.3" rx="1.8" ry="1.8" fill="#151c12" /><ellipse cx="69.9" cy="4.7" rx="2.0" ry="1.8" fill="#2a3521" /><ellipse cx="68.3" cy="2.1" rx="1.3" ry="1.7" fill="#333e23" /><ellipse cx="68.7" cy="1.5" rx="2.0" ry="1.6" fill="#151c12" /><ellipse cx="69.6" cy="3.3" rx="2.2" ry="2.0" fill="#2a3521" /><polygon points="36.5,-6.7 45.1,-9.9 54.6,-6.7 54.6,14.5 45.1,20.4 36.5,16.5" fill="#613d27" /><polygon points="45.1,-5.1 54.6,-6.7 54.6,14.5 45.1,20.4" fill="#4b2d1b" /><polygon points="46.7,2.7 53.0,1.1 53.0,7.4 46.7,9.0" fill="#b09b78" /><polygon points="48.3,3.9 51.4,3.1 51.4,7.0 48.3,7.8" fill="#25170e" /><polygon points="11.4,28.6 27.9,37.3 45.1,28.6 45.1,36.5 27.9,44.8 11.4,34.9" fill="#b1945c" /><polygon points="11.4,28.6 27.9,37.3 27.9,44.8 11.4,34.9" fill="#7d5631" /><polygon points="11.4,27.9 35.7,16.1 44.4,20.8 45.1,28.3 27.9,37.3" fill="#624131" /><polygon points="11.4,27.9 35.7,16.1 37.3,18.4 13.7,29.4" fill="#79543f" /><polyline points="30.0,42.3 30.0,39.2" fill="none" stroke="#4f381c" stroke-width="1.0" /><polyline points="34.3,40.2 34.3,37.1" fill="none" stroke="#4f381c" stroke-width="1.0" /><polyline points="38.7,38.2 38.7,35.0" fill="none" stroke="#4f381c" stroke-width="1.0" /><polyline points="43.0,36.1 43.0,33.0" fill="none" stroke="#4f381c" stroke-width="1.0" /><polyline points="13.0,34.5 13.0,31.8" fill="none" stroke="#412a15" stroke-width="0.9" /><polyline points="16.3,36.5 16.3,33.8" fill="none" stroke="#412a15" stroke-width="0.9" /><polyline points="19.6,38.4 19.6,35.8" fill="none" stroke="#412a15" stroke-width="0.9" /><polyline points="22.9,40.4 22.9,37.7" fill="none" stroke="#412a15" stroke-width="0.9" /><polyline points="26.2,42.4 26.2,39.7" fill="none" stroke="#412a15" stroke-width="0.9" /><polygon points="54.6,10.6 62.4,5.1 69.5,11.4 69.5,21.6 59.3,26.3 54.6,21.6" fill="#a28258" /><polygon points="54.6,10.6 62.4,5.1 69.5,11.4 60.9,16.1" fill="#5d4135" /><polygon points="45.1,21.6 49.9,13.7 56.1,18.4 60.9,21.6 60.1,36.5 46.7,36.5" fill="#946d3c" /><polygon points="44.4,20.0 49.9,13.3 56.1,18.0 50.6,25.5" fill="#13100c" /><polygon points="52.2,27.9 55.4,27.1 55.4,34.9 52.2,35.7" fill="#1a130e" /><polygon points="72.6,11.4 96.2,22.4 96.2,30.2 72.6,19.6" fill="#c9c3b5" /><polygon points="72.6,9.8 78.9,2.7 101.7,14.5 96.2,22.0" fill="#5d4337" /><polygon points="78.9,2.7 101.7,14.5 100.1,16.5 77.8,4.7" fill="#765845" /><polygon points="79.9,10.8 81.0,8.3 82.1,10.3 81.9,11.7" fill="#beb094" /><polygon points="80.7,10.1 81.5,10.0 81.5,11.1 80.7,11.2" fill="#412e23" /><polygon points="84.0,12.7 85.1,10.2 86.2,12.3 86.1,13.7" fill="#beb094" /><polygon points="84.8,12.1 85.6,11.9 85.6,13.0 84.8,13.2" fill="#412e23" /><polygon points="88.1,14.7 89.2,12.2 90.3,14.2 90.2,15.6" fill="#beb094" /><polygon points="88.9,14.1 89.7,13.9 89.7,15.0 88.9,15.2" fill="#412e23" /><polygon points="92.3,16.7 93.4,14.1 94.5,16.2 94.3,17.6" fill="#beb094" /><polygon points="93.1,16.0 93.8,15.9 93.8,17.0 93.1,17.1" fill="#412e23" /><polygon points="96.2,22.0 101.7,14.5 104.9,16.9 104.9,23.9 97.0,29.4" fill="#bba26d" /><polyline points="74.6,19.1 74.6,16.4" fill="none" stroke="#332a23" stroke-width="1.0" /><polyline points="78.5,20.8 78.5,18.2" fill="none" stroke="#332a23" stroke-width="1.0" /><polyline points="82.5,22.6 82.5,19.9" fill="none" stroke="#332a23" stroke-width="1.0" /><polyline points="86.4,24.4 86.4,21.7" fill="none" stroke="#332a23" stroke-width="1.0" /><polyline points="90.3,26.1 90.3,23.5" fill="none" stroke="#332a23" stroke-width="1.0" /><polyline points="94.3,27.9 94.3,25.2" fill="none" stroke="#332a23" stroke-width="1.0" /><polygon points="78.5,4.7 80.1,4.7 80.1,0.8 78.5,0.8" fill="#b7b09b" /><polygon points="87.6,9.0 89.1,9.0 89.1,5.1 87.6,5.1" fill="#b7b09b" /><polygon points="102.1,15.7 103.7,15.7 103.7,11.8 102.1,11.8" fill="#bea97f" /><ellipse cx="119.0" cy="26.3" rx="6.3" ry="9.8" fill="#212a19" /><ellipse cx="120.5" cy="24.7" rx="1.9" ry="3.9" fill="#151c12" /><ellipse cx="119.6" cy="27.5" rx="2.7" ry="3.0" fill="#2a3521" /><ellipse cx="120.4" cy="23.5" rx="3.1" ry="2.9" fill="#333e23" /><ellipse cx="116.3" cy="22.2" rx="2.7" ry="3.8" fill="#151c12" /><ellipse cx="118.6" cy="23.2" rx="3.0" ry="3.3" fill="#2a3521" /><polygon points="95.4,26.3 101.7,33.0 114.3,27.5 114.3,36.1 102.5,40.8 95.4,33.8" fill="#cecbc3" /><polygon points="95.4,26.3 101.7,33.0 102.5,40.8 95.4,33.8" fill="#aba89e" /><polygon points="96.2,23.9 109.6,17.6 114.3,27.1 101.7,32.6" fill="#445166" /><polygon points="109.6,17.6 114.3,27.1 112.7,27.9 108.0,18.6" fill="#59677d" /><polyline points="104.0,38.8 104.0,36.1" fill="none" stroke="#333338" stroke-width="0.9" /><polyline points="106.9,37.6 106.9,35.0" fill="none" stroke="#333338" stroke-width="0.9" /><polyline points="109.9,36.5 109.9,33.8" fill="none" stroke="#333338" stroke-width="0.9" /><polyline points="112.8,35.3 112.8,32.6" fill="none" stroke="#333338" stroke-width="0.9" /><polygon points="109.2,18.8 110.8,18.8 110.8,14.9 109.2,14.9" fill="#b7b4a9" /><ellipse cx="91.5" cy="35.7" rx="5.5" ry="7.9" fill="#212a19" /><ellipse cx="94.1" cy="33.0" rx="2.6" ry="2.1" fill="#151c12" /><ellipse cx="89.9" cy="33.4" rx="2.2" ry="2.1" fill="#2a3521" /><ellipse cx="92.2" cy="37.5" rx="1.9" ry="2.5" fill="#333e23" /><ellipse cx="92.8" cy="35.2" rx="2.4" ry="2.5" fill="#151c12" /><ellipse cx="89.0" cy="34.7" rx="2.0" ry="2.0" fill="#2a3521" /><ellipse cx="48.3" cy="45.1" rx="5.1" ry="5.5" fill="#212a19" /><ellipse cx="47.7" cy="42.0" rx="1.7" ry="2.2" fill="#151c12" /><ellipse cx="49.1" cy="46.8" rx="1.6" ry="2.0" fill="#2a3521" /><ellipse cx="49.6" cy="46.6" rx="2.3" ry="2.0" fill="#333e23" /><ellipse cx="45.9" cy="45.6" rx="2.5" ry="1.5" fill="#151c12" /><ellipse cx="45.6" cy="44.3" rx="2.3" ry="1.7" fill="#2a3521" /><polygon points="65.6,45.1 86.8,36.5 86.8,45.5 66.4,54.7" fill="#cfc2a9" /><polygon points="54.6,38.9 61.6,34.9 66.4,45.1 66.4,54.7 51.4,53.0 52.2,43.6" fill="#9b794a" /><polygon points="61.6,34.9 78.9,27.9 86.8,36.1 66.4,44.8" fill="#604738" /><polygon points="78.9,27.9 86.8,36.1 85.2,37.3 77.4,29.0" fill="#765c4f" /><polyline points="68.4,52.4 68.4,49.7" fill="none" stroke="#4f382a" stroke-width="1.0" /><polyline points="72.5,50.6 72.5,47.9" fill="none" stroke="#4f382a" stroke-width="1.0" /><polyline points="76.6,48.7 76.6,46.0" fill="none" stroke="#4f382a" stroke-width="1.0" /><polyline points="80.7,46.9 80.7,44.2" fill="none" stroke="#4f382a" stroke-width="1.0" /><polyline points="84.7,45.0 84.7,42.4" fill="none" stroke="#4f382a" stroke-width="1.0" /><polyline points="68.4,52.4 68.4,50.0" fill="none" stroke="#5d4638" stroke-width="0.8" /><polyline points="72.5,50.6 72.5,48.2" fill="none" stroke="#5d4638" stroke-width="0.8" /><polyline points="76.6,48.7 76.6,46.4" fill="none" stroke="#5d4638" stroke-width="0.8" /><polyline points="80.7,46.9 80.7,44.5" fill="none" stroke="#5d4638" stroke-width="0.8" /><polyline points="84.7,45.0 84.7,42.7" fill="none" stroke="#5d4638" stroke-width="0.8" /><polygon points="51.4,49.9 59.3,48.3 63.2,52.2 53.0,55.4" fill="#614333" /><polygon points="52.2,53.0 63.2,52.2 63.2,55.4 53.0,56.5" fill="#beb094" /><polygon points="57.7,55.4 64.8,54.2 64.8,55.8 59.3,56.5" fill="url(#chk)" /></svg></div>
<div class="it" style="top:704px"><svg width="128" height="64" viewBox="0 0 128 64"><polygon points="1,32 64,0.3 127,32 64,63.7" fill="#c5c5b9"/><polygon points="5.9,33.4 11.4,31.0 46.7,53.0 49.9,56.5 42.0,54.6 23.9,44.4" fill="url(#chk)" /><polygon points="64.0,20.8 68.7,18.4 76.6,25.5 72.6,27.9" fill="url(#chk)" /><polygon points="85.2,29.4 92.3,24.7 94.6,27.1 88.4,31.0" fill="url(#chk)" /><polygon points="92.3,42.0 100.1,40.4 102.5,43.6 94.6,44.4" fill="url(#chk)" /><polygon points="53.0,24.7 64.8,21.6 75.0,27.9 60.9,34.9" fill="#7d7d78" /><ellipse cx="15.3" cy="25.5" rx="6.7" ry="7.5" fill="#212a19" /><ellipse cx="16.9" cy="24.9" rx="2.5" ry="2.6" fill="#151c12" /><ellipse cx="16.3" cy="26.1" rx="2.3" ry="2.7" fill="#2a3521" /><ellipse cx="17.1" cy="27.5" rx="2.9" ry="2.0" fill="#333e23" /><ellipse cx="13.0" cy="24.2" rx="2.6" ry="3.0" fill="#151c12" /><ellipse cx="16.4" cy="25.6" rx="3.3" ry="2.3" fill="#2a3521" /><ellipse cx="75.8" cy="5.1" rx="3.5" ry="5.9" fill="#212a19" /><ellipse cx="76.6" cy="5.2" rx="1.3" ry="2.3" fill="#151c12" /><ellipse cx="74.2" cy="4.5" rx="1.1" ry="1.9" fill="#2a3521" /><ellipse cx="76.5" cy="2.6" rx="1.7" ry="2.3" fill="#333e23" /><ellipse cx="75.3" cy="5.3" rx="1.6" ry="1.6" fill="#151c12" /><ellipse cx="77.4" cy="4.6" rx="1.7" ry="2.2" fill="#2a3521" /><polygon points="50.6,16.1 72.6,6.6 72.6,16.5 52.2,25.1" fill="#cfccc5" /><polygon points="40.4,14.1 46.7,5.9 51.4,16.1 52.2,25.1 42.0,21.6" fill="#797974" /><polygon points="46.7,5.9 68.7,-2.8 72.6,6.3 51.4,16.2" fill="#3f485a" /><polygon points="46.7,5.9 68.7,-2.8 69.7,-0.4 47.9,8.2" fill="#515c71" /><polyline points="54.3,22.8 54.3,20.5" fill="none" stroke="#333338" stroke-width="1.0" /><polyline points="58.3,21.1 58.3,18.7" fill="none" stroke="#333338" stroke-width="1.0" /><polyline points="62.4,19.4 62.4,17.0" fill="none" stroke="#333338" stroke-width="1.0" /><polyline points="66.5,17.6 66.5,15.3" fill="none" stroke="#333338" stroke-width="1.0" /><polyline points="70.6,15.9 70.6,13.6" fill="none" stroke="#333338" stroke-width="1.0" /><polyline points="54.3,22.8 54.3,20.5" fill="none" stroke="#414146" stroke-width="0.8" /><polyline points="58.3,21.1 58.3,18.7" fill="none" stroke="#414146" stroke-width="0.8" /><polyline points="62.4,19.4 62.4,17.0" fill="none" stroke="#414146" stroke-width="0.8" /><polyline points="66.5,17.6 66.5,15.3" fill="none" stroke="#414146" stroke-width="0.8" /><polyline points="70.6,15.9 70.6,13.6" fill="none" stroke="#414146" stroke-width="0.8" /><polygon points="44.8,4.3 46.3,4.3 46.3,0.4 44.8,0.4" fill="#b7b4a9" /><polygon points="73.4,13.7 78.9,5.9 83.6,17.6 84.0,27.5 74.2,23.1" fill="#b69966" /><polygon points="83.6,17.6 96.2,12.1 96.2,22.0 84.0,27.5" fill="#cabc9e" /><polygon points="78.9,5.9 91.5,2.3 96.2,12.1 83.6,17.6" fill="#5d4f41" /><polygon points="78.9,5.9 91.5,2.3 92.3,4.3 80.1,8.2" fill="#746453" /><polygon points="84.5,11.8 85.6,9.2 86.7,11.3 86.6,12.7" fill="#bea97f" /><polygon points="85.3,11.1 86.1,11.0 86.1,12.1 85.3,12.2" fill="#412e23" /><polygon points="90.0,9.4 91.1,6.9 92.2,8.9 92.1,10.3" fill="#bea97f" /><polygon points="90.8,8.8 91.6,8.6 91.6,9.7 90.8,9.9" fill="#412e23" /><polyline points="85.6,25.4 85.6,22.8" fill="none" stroke="#413323" stroke-width="1.0" /><polyline points="88.6,24.0 88.6,21.5" fill="none" stroke="#413323" stroke-width="1.0" /><polyline points="91.6,22.6 91.6,20.1" fill="none" stroke="#413323" stroke-width="1.0" /><polyline points="94.7,21.2 94.7,18.7" fill="none" stroke="#413323" stroke-width="1.0" /><polyline points="75.9,22.4 75.9,20.1" fill="none" stroke="#4f3c23" stroke-width="0.9" /><polyline points="79.1,23.9 79.1,21.5" fill="none" stroke="#4f3c23" stroke-width="0.9" /><polyline points="82.4,25.3 82.4,23.0" fill="none" stroke="#4f3c23" stroke-width="0.9" /><polygon points="91.1,0.4 92.7,0.4 92.7,-3.6 91.1,-3.6" fill="#b7b09b" /><polygon points="77.8,5.5 79.3,5.5 79.3,1.5 77.8,1.5" fill="#b0945c" /><ellipse cx="120.6" cy="26.3" rx="6.3" ry="9.4" fill="#212a19" /><ellipse cx="118.2" cy="23.7" rx="2.9" ry="2.7" fill="#151c12" /><ellipse cx="118.7" cy="21.4" rx="3.0" ry="2.6" fill="#2a3521" /><ellipse cx="119.1" cy="22.2" rx="2.5" ry="3.7" fill="#333e23" /><ellipse cx="118.4" cy="24.8" rx="3.1" ry="3.3" fill="#151c12" /><ellipse cx="120.0" cy="28.1" rx="2.5" ry="2.4" fill="#2a3521" /><polygon points="97.8,23.9 102.5,31.8 115.1,27.1 115.1,36.1 103.3,41.4 98.6,33.0" fill="#cfccc5" /><polygon points="97.8,23.9 102.5,31.8 103.3,41.4 98.6,33.0" fill="#a6a49b" /><polygon points="97.8,22.4 110.4,16.9 115.1,26.3 102.5,31.4" fill="#3e4a5f" /><polygon points="110.4,16.9 115.1,26.3 113.5,27.1 108.9,17.8" fill="#536178" /><polyline points="104.8,39.3 104.8,36.8" fill="none" stroke="#413838" stroke-width="0.9" /><polyline points="107.7,38.0 107.7,35.5" fill="none" stroke="#413838" stroke-width="0.9" /><polyline points="110.7,36.7 110.7,34.2" fill="none" stroke="#413838" stroke-width="0.9" /><polyline points="113.6,35.4 113.6,32.8" fill="none" stroke="#413838" stroke-width="0.9" /><polygon points="110.0,14.9 111.5,14.9 111.5,11.0 110.0,11.0" fill="#b7b4a9" /><ellipse cx="93.9" cy="35.7" rx="6.3" ry="8.6" fill="#212a19" /><ellipse cx="91.4" cy="34.2" rx="2.9" ry="3.3" fill="#151c12" /><ellipse cx="95.4" cy="32.9" rx="3.1" ry="2.7" fill="#2a3521" /><ellipse cx="93.4" cy="36.7" rx="2.5" ry="2.4" fill="#333e23" /><ellipse cx="93.5" cy="38.4" rx="2.9" ry="3.1" fill="#151c12" /><ellipse cx="95.1" cy="35.8" rx="2.2" ry="2.9" fill="#2a3521" /><polygon points="20.8,24.7 44.4,36.5 44.4,48.3 20.8,36.1" fill="#cac2ae" /><polygon points="21.6,23.9 27.9,16.9 49.1,27.9 44.4,35.7" fill="#4f3a2e" /><polygon points="21.6,23.9 27.9,16.9 34.9,20.4 29.4,28.3" fill="#79412e" /><polygon points="28.7,25.7 29.8,23.2 30.9,25.2 30.8,26.6" fill="#b09471" /><polygon points="29.5,25.1 30.3,24.9 30.3,26.0 29.5,26.2" fill="#412e23" /><polygon points="32.7,27.7 33.8,25.1 34.9,27.2 34.7,28.6" fill="#b09471" /><polygon points="33.4,27.0 34.2,26.9 34.2,28.0 33.4,28.1" fill="#412e23" /><polygon points="36.6,29.6 37.7,27.1 38.8,29.2 38.6,30.6" fill="#b09471" /><polygon points="37.4,29.0 38.2,28.8 38.2,29.9 37.4,30.1" fill="#412e23" /><polygon points="40.5,31.6 41.6,29.1 42.7,31.1 42.6,32.5" fill="#b09471" /><polygon points="41.3,31.0 42.1,30.8 42.1,31.9 41.3,32.1" fill="#412e23" /><polyline points="22.5,35.6 22.5,32.9" fill="none" stroke="#25201c" stroke-width="1.0" /><polyline points="25.8,37.3 25.8,34.6" fill="none" stroke="#25201c" stroke-width="1.0" /><polyline points="29.2,39.0 29.2,36.4" fill="none" stroke="#25201c" stroke-width="1.0" /><polyline points="32.6,40.8 32.6,38.1" fill="none" stroke="#25201c" stroke-width="1.0" /><polyline points="35.9,42.5 35.9,39.9" fill="none" stroke="#25201c" stroke-width="1.0" /><polyline points="39.3,44.3 39.3,41.6" fill="none" stroke="#25201c" stroke-width="1.0" /><polyline points="42.7,46.0 42.7,43.3" fill="none" stroke="#25201c" stroke-width="1.0" /><polyline points="22.5,35.6 22.5,33.2" fill="none" stroke="#41332a" stroke-width="0.8" /><polyline points="25.8,37.3 25.8,34.9" fill="none" stroke="#41332a" stroke-width="0.8" /><polyline points="29.2,39.0 29.2,36.7" fill="none" stroke="#41332a" stroke-width="0.8" /><polyline points="32.6,40.8 32.6,38.4" fill="none" stroke="#41332a" stroke-width="0.8" /><polyline points="35.9,42.5 35.9,40.2" fill="none" stroke="#41332a" stroke-width="0.8" /><polyline points="39.3,44.3 39.3,41.9" fill="none" stroke="#41332a" stroke-width="0.8" /><polyline points="42.7,46.0 42.7,43.6" fill="none" stroke="#41332a" stroke-width="0.8" /><polygon points="24.7,14.9 26.3,14.9 26.3,11.0 24.7,11.0" fill="#b7b09b" /><polygon points="34.9,17.6 36.5,17.6 36.5,13.7 34.9,13.7" fill="#b0a28d" /><polygon points="44.4,36.5 50.6,27.9 56.5,35.7 56.5,47.1 45.1,48.3" fill="#ae9058" /><ellipse cx="49.9" cy="42.8" rx="5.1" ry="5.9" fill="#212a19" /><ellipse cx="47.6" cy="41.4" rx="2.3" ry="2.2" fill="#151c12" /><ellipse cx="49.2" cy="45.3" rx="2.1" ry="2.1" fill="#2a3521" /><ellipse cx="49.9" cy="39.1" rx="1.8" ry="1.8" fill="#333e23" /><ellipse cx="49.4" cy="39.9" rx="2.3" ry="1.8" fill="#151c12" /><ellipse cx="50.9" cy="41.9" rx="2.3" ry="1.8" fill="#2a3521" /><polygon points="66.4,45.1 87.6,36.5 87.6,45.5 67.1,54.7" fill="#d0c2ac" /><polygon points="56.1,42.0 61.6,36.5 67.1,45.1 67.1,54.7 53.0,52.6" fill="#9e7b4d" /><polygon points="61.6,36.5 81.3,28.6 87.6,35.9 67.1,44.8" fill="#614135" /><polygon points="81.3,28.6 87.6,35.9 86.2,36.9 79.9,29.6" fill="#775649" /><polyline points="69.2,52.4 69.2,49.7" fill="none" stroke="#4f382a" stroke-width="1.0" /><polyline points="73.3,50.6 73.3,47.9" fill="none" stroke="#4f382a" stroke-width="1.0" /><polyline points="77.4,48.7 77.4,46.0" fill="none" stroke="#4f382a" stroke-width="1.0" /><polyline points="81.4,46.9 81.4,44.2" fill="none" stroke="#4f382a" stroke-width="1.0" /><polyline points="85.5,45.0 85.5,42.4" fill="none" stroke="#4f382a" stroke-width="1.0" /><polygon points="51.4,49.9 59.3,46.7 64.0,52.2 54.6,55.4" fill="#5d3e2c" /><polygon points="53.0,53.8 64.0,52.2 64.0,55.4 53.8,56.5" fill="#beb094" /><polygon points="59.3,55.0 65.6,54.2 65.6,56.1 60.9,56.8" fill="url(#chk)" /><polygon points="60.1,34.9 61.6,34.9 61.6,31.0 60.1,31.0" fill="#b7a98d" /></svg></div>
<div class="ln" style="top:64px"></div>
<div class="ln" style="top:128px"></div>
<div class="ln" style="top:192px"></div>
<div class="ln" style="top:256px"></div>
<div class="ln" style="top:320px"></div>
<div class="ln" style="top:384px"></div>
<div class="ln" style="top:448px"></div>
<div class="ln" style="top:512px"></div>
<div class="ln" style="top:576px"></div>
<div class="ln" style="top:640px"></div>
<div class="ln" style="top:704px"></div>
</div>
<div id="vs">
<div class="sbb" style="top:0;height:15px"><svg class="abs" style="left:5px;top:4px" width="7" height="4" shape-rendering="crispEdges"><path d="M3 0h1v1h1v1h1v1h1v1h-7v-1h1v-1h1v-1h1z" fill="#000"/></svg></div>
<div class="sbb" style="top:15px;height:8px"></div>
<div class="sbb" style="top:755px;height:15px"><svg class="abs" style="left:5px;top:5px" width="7" height="4" shape-rendering="crispEdges"><path d="M0 0h7v1h-1v1h-1v1h-1v1h-1v-1h-1v-1h-1v-1h-1z" fill="#000"/></svg></div>
</div>
<div id="dlg">
<div class="cap"><span>Properties</span>
<div class="cb" style="left:416px;top:2px"><svg class="abs" style="left:0;top:0" width="14" height="12"><path d="M3.500 2.500l6 6M4.500 2.500l6 6M9.500 2.500l-6 6M10.500 2.500l-6 6" stroke="#000" stroke-width="1" fill="none" shape-rendering="crispEdges"/></svg></div>
</div>
<div class="grp" style="left:11px;top:37px;width:214px;height:188px"></div>
<div class="grp" style="left:11px;top:232px;width:215px;height:102px"></div>
<div class="grp" style="left:236px;top:37px;width:191px;height:297px"></div>
<span class="t" style="left:22px;top:46px">Name:</span>
<div class="edit" style="left:20px;top:60px;width:194px;height:20px"><span>Dutch Harbor</span></div>
<span class="t" style="left:250px;top:61px">ID: Town</span>
<span class="t" style="left:250px;top:81px">Owner: USA</span>
<span class="t" style="left:250px;top:100px">Controller: USA</span>
<div class="btn" style="left:254px;top:343px;width:93px;height:23px"><span style="top:4px">Details &gt;&gt;</span></div>
<div class="btn def" style="left:353px;top:343px;width:75px;height:23px"><span style="top:4px">OK</span></div>
<svg class="abs" style="left:263px;top:230px;overflow:visible" width="128" height="64" viewBox="0 0 128 64"><polygon points="12.1,34.9 16.9,32.6 35.7,42.0 53.0,51.4 64.8,52.2 53.0,53.9 45.1,52.2 27.9,43.6" fill="url(#chk)" /><polygon points="85.2,40.4 90.7,37.3 97.0,34.9 97.8,37.3 89.1,42.8" fill="url(#chk)" /><polygon points="51.4,29.4 65.6,23.9 76.6,29.4 62.4,40.4 53.0,42.0" fill="#969286" /><polygon points="62.4,24.7 66.4,23.1 73.4,27.9 71.1,30.2" fill="url(#chk)" /><ellipse cx="21.6" cy="26.3" rx="4.6" ry="7.9" fill="#474d1f" /><ellipse cx="21.7" cy="28.6" rx="1.7" ry="2.7" fill="#585d28" /><ellipse cx="20.9" cy="24.3" rx="1.4" ry="3.0" fill="#39401a" /><ellipse cx="21.5" cy="27.7" rx="2.3" ry="2.5" fill="#696e37" /><ellipse cx="22.4" cy="23.0" rx="1.9" ry="2.1" fill="#585d28" /><ellipse cx="20.0" cy="22.5" rx="1.8" ry="2.8" fill="#39401a" /><ellipse cx="66.4" cy="5.9" rx="4.3" ry="6.7" fill="#474d1f" /><ellipse cx="66.4" cy="6.8" rx="1.6" ry="1.8" fill="#585d28" /><ellipse cx="67.7" cy="6.1" rx="2.1" ry="2.5" fill="#39401a" /><ellipse cx="66.5" cy="3.3" rx="1.8" ry="1.9" fill="#696e37" /><ellipse cx="66.8" cy="6.6" rx="1.5" ry="2.6" fill="#585d28" /><ellipse cx="67.3" cy="2.4" rx="2.0" ry="1.9" fill="#39401a" /><polygon points="41.2,14.1 46.3,6.3 52.6,18.8 52.6,24.7 42.0,19.6" fill="#b8a683" /><polygon points="52.6,18.8 65.6,13.7 65.6,21.6 53.0,25.9" fill="#c4baa5" /><polygon points="46.3,6.3 59.3,2.3 65.6,13.7 52.6,18.8" fill="#513a2d" /><polygon points="46.3,6.3 59.3,2.3 60.9,5.5 48.3,9.8" fill="#694d3a" /><polyline points="54.6,23.9 54.6,21.1" fill="none" stroke="#403229" stroke-width="0.9" /><polyline points="57.7,22.9 57.7,20.0" fill="none" stroke="#403229" stroke-width="0.9" /><polyline points="60.9,21.8 60.9,18.9" fill="none" stroke="#403229" stroke-width="0.9" /><polyline points="64.0,20.7 64.0,17.9" fill="none" stroke="#403229" stroke-width="0.9" /><polyline points="43.8,19.0 43.8,16.7" fill="none" stroke="#5b4530" stroke-width="0.8" /><polyline points="47.3,20.7 47.3,18.4" fill="none" stroke="#5b4530" stroke-width="0.8" /><polyline points="50.8,22.4 50.8,20.1" fill="none" stroke="#5b4530" stroke-width="0.8" /><polygon points="44.4,6.6 45.9,6.6 45.9,2.7 44.4,2.7" fill="#baac8a" /><polygon points="59.3,2.7 60.9,2.7 60.9,-1.2 59.3,-1.2" fill="#ac9e8a" /><polygon points="66.4,17.6 80.5,25.5 80.5,31.0 66.4,23.1" fill="#c6c2b8" /><polygon points="67.1,13.7 73.4,8.2 95.4,19.2 90.7,29.4 76.6,21.6" fill="#352e2d" /><polygon points="73.4,8.2 95.4,19.2 94.3,21.6 72.3,10.6" fill="#473e3e" /><polyline points="68.1,22.7 68.1,20.4" fill="none" stroke="#494540" stroke-width="0.8" /><polyline points="71.7,24.7 71.7,22.3" fill="none" stroke="#494540" stroke-width="0.8" /><polyline points="75.2,26.6 75.2,24.3" fill="none" stroke="#494540" stroke-width="0.8" /><polyline points="78.7,28.6 78.7,26.2" fill="none" stroke="#494540" stroke-width="0.8" /><polygon points="89.9,29.4 100.1,34.9 106.4,31.8 106.4,36.5 100.9,38.9 89.9,33.4" fill="#baaf9e" /><polygon points="92.3,29.4 99.4,25.5 106.8,31.4 100.1,35.3" fill="#3c3032" /><polyline points="89.9,29.8 94.6,23.9 96.2,25.1" fill="none" stroke="#ac907c" stroke-width="1.0" /><ellipse cx="107.2" cy="22.4" rx="9.8" ry="7.9" fill="#474d1f" /><ellipse cx="104.0" cy="19.1" rx="4.5" ry="3.1" fill="#585d28" /><ellipse cx="106.9" cy="17.5" rx="3.0" ry="2.5" fill="#39401a" /><ellipse cx="111.1" cy="20.4" rx="4.7" ry="2.1" fill="#696e37" /><ellipse cx="104.5" cy="22.0" rx="4.0" ry="2.6" fill="#585d28" /><ellipse cx="109.9" cy="21.8" rx="3.5" ry="3.0" fill="#39401a" /><polygon points="25.5,27.1 48.3,37.7 53.0,34.9 54.6,42.0 49.1,47.1 25.5,35.3" fill="#c8c6bd" /><polygon points="48.3,37.7 53.0,34.9 54.6,42.0 49.1,47.1" fill="#9b978d" /><polygon points="26.3,25.5 32.6,20.8 39.6,18.8 53.0,27.1 48.3,36.9 34.9,30.2" fill="#303a4a" /><polygon points="32.6,20.8 39.6,18.8 53.0,27.1 52.2,29.0" fill="#414d60" /><polyline points="34.9,21.6 37.3,29.4" fill="none" stroke="#242d3a" stroke-width="1.0" /><polyline points="27.5,34.9 27.5,32.2" fill="none" stroke="#242429" stroke-width="1.0" /><polyline points="31.4,36.9 31.4,34.2" fill="none" stroke="#242429" stroke-width="1.0" /><polyline points="35.3,38.8 35.3,36.1" fill="none" stroke="#242429" stroke-width="1.0" /><polyline points="39.3,40.8 39.3,38.1" fill="none" stroke="#242429" stroke-width="1.0" /><polyline points="43.2,42.7 43.2,40.1" fill="none" stroke="#242429" stroke-width="1.0" /><polyline points="47.1,44.7 47.1,42.0" fill="none" stroke="#242429" stroke-width="1.0" /><polyline points="27.5,29.0 27.5,27.0" fill="none" stroke="#323237" stroke-width="0.9" /><polyline points="31.4,31.0 31.4,28.9" fill="none" stroke="#323237" stroke-width="0.9" /><polyline points="35.3,32.9 35.3,30.9" fill="none" stroke="#323237" stroke-width="0.9" /><polyline points="39.3,34.9 39.3,32.8" fill="none" stroke="#323237" stroke-width="0.9" /><polyline points="43.2,36.9 43.2,34.8" fill="none" stroke="#323237" stroke-width="0.9" /><polyline points="47.1,38.8 47.1,36.8" fill="none" stroke="#323237" stroke-width="0.9" /><polygon points="29.8,20.4 31.4,20.4 31.4,16.5 29.8,16.5" fill="#bab6ac" /><polygon points="66.4,48.3 91.5,34.5 91.5,39.6 67.1,53.0" fill="#a89075" /><polygon points="51.4,45.1 57.7,51.4 66.4,48.3 67.1,53.0 56.1,53.0 50.6,48.3" fill="#5b4030" /><polygon points="51.4,45.1 80.5,28.6 91.5,33.8 65.6,48.7 57.7,51.8" fill="#35261d" /><polygon points="80.5,28.6 91.5,33.8 89.9,35.7 78.9,30.6" fill="#4a372d" /><polygon points="61.3,43.6 62.4,41.1 63.5,43.1 63.4,44.5" fill="#ac9075" /><polygon points="62.1,42.9 62.9,42.8 62.9,43.9 62.1,44.0" fill="#402d22" /><polygon points="67.6,40.4 68.7,37.9 69.8,40.0 69.7,41.4" fill="#ac9075" /><polygon points="68.4,39.8 69.2,39.6 69.2,40.7 68.4,40.9" fill="#402d22" /><polygon points="73.9,37.3 75.0,34.8 76.1,36.8 75.9,38.2" fill="#ac9075" /><polygon points="74.7,36.7 75.5,36.5 75.5,37.6 74.7,37.8" fill="#402d22" /><polygon points="80.2,34.1 81.3,31.6 82.4,33.7 82.2,35.1" fill="#ac9075" /><polygon points="81.0,33.5 81.8,33.4 81.8,34.5 81.0,34.6" fill="#402d22" /><polyline points="69.2,50.5 69.2,48.1" fill="none" stroke="#402d22" stroke-width="0.9" /><polyline points="73.2,48.2 73.2,45.9" fill="none" stroke="#402d22" stroke-width="0.9" /><polyline points="77.3,46.0 77.3,43.7" fill="none" stroke="#402d22" stroke-width="0.9" /><polyline points="81.4,43.8 81.4,41.4" fill="none" stroke="#402d22" stroke-width="0.9" /><polyline points="85.4,41.6 85.4,39.2" fill="none" stroke="#402d22" stroke-width="0.9" /><polyline points="89.5,39.3 89.5,37.0" fill="none" stroke="#402d22" stroke-width="0.9" /><polygon points="57.7,52.2 65.6,51.4 64.8,53.0 59.3,53.4" fill="url(#chk)" /></svg>
</div>
<div id="mm"><div class="cap"><span>Mini-Map</span><div class="cbs"><svg class="abs" style="left:0;top:0" width="9" height="9"><path d="M1.500 1.500l6 6M7.500 1.500l-6 6" stroke="#000" stroke-width="1" fill="none"/></svg></div></div>
<svg class="mmv" width="398" height="166" viewBox="0 0 398 166" shape-rendering="crispEdges"><rect width="398" height="166" fill="#3a93b8"/>
<polygon points="0.0,0.0 200.0,0.0 200.0,4.8 190.5,6.0 172.6,7.1 164.3,9.5 157.1,13.1 156.0,16.7 160.7,19.0 163.1,23.8 160.7,28.6 153.6,34.5 147.6,38.1 142.9,39.3 144.0,33.3 147.6,28.6 142.9,29.8 135.7,29.8 128.6,27.4 121.4,23.8 114.3,20.2 108.3,22.6 109.5,26.2 104.8,29.8 95.2,29.8 83.3,28.6 73.8,28.6 67.9,25.0 60.7,22.6 56.0,25.0 47.6,26.2 38.1,28.6 32.1,31.0 23.8,33.3 15.5,34.5 10.7,38.1 4.8,41.7 0.0,44.0" fill="#c0755a"/>
<polygon points="32.1,31.0 38.1,28.6 47.6,26.2 56.0,25.0 60.7,22.6 67.9,25.0 73.8,28.6 83.3,28.6 95.2,29.8 103.6,30.4 100.0,33.3 92.9,35.1 88.1,36.9 78.6,39.3 69.0,39.9 60.7,39.3 56.0,35.7 47.6,35.1 38.1,35.1 34.5,32.7" fill="#c8b088"/>
<polygon points="0.0,44.0 4.8,41.7 10.7,38.1 15.5,34.5 23.8,33.3 32.1,31.0 34.5,32.7 38.1,35.1 47.6,35.1 56.0,35.7 60.7,39.3 69.0,39.9 78.6,39.3 88.1,36.9 90.5,40.5 91.7,47.6 88.1,52.4 92.9,54.8 95.2,59.5 102.4,60.7 107.1,59.5 111.9,61.9 107.1,66.7 100.0,69.0 92.9,67.9 83.3,69.0 76.2,70.2 66.7,70.2 61.9,66.7 57.1,65.5 56.0,59.5 52.4,57.1 47.6,56.0 45.2,53.6 47.6,51.2 29.8,51.2 15.5,51.2 10.7,52.4 0.0,50.0" fill="#417d9d"/>
<polygon points="78.6,45.8 83.3,44.0 88.1,45.8 86.9,48.2 81.0,48.8" fill="#c8b088"/>
<polygon points="11.9,53.6 15.5,51.2 47.6,51.2 45.2,53.6 47.6,56.0 45.2,58.3 35.7,59.5 28.6,62.5 16.7,62.5 14.3,58.3" fill="#c8b088"/>
<polygon points="88.1,36.9 92.9,35.1 100.0,33.3 103.6,30.4 104.8,29.8 109.5,26.2 108.3,22.6 114.3,20.2 121.4,23.8 128.6,27.4 135.7,29.8 142.9,29.8 147.6,28.6 144.0,33.3 142.9,39.3 136.9,40.5 134.5,45.2 135.7,50.0 133.3,52.4 128.6,51.2 127.4,46.4 119.0,45.2 114.3,47.6 111.9,51.2 114.3,56.0 115.5,59.5 111.9,61.9 107.1,59.5 102.4,60.7 95.2,59.5 92.9,54.8 88.1,52.4 91.7,47.6 90.5,40.5" fill="#c9b045"/>
<polygon points="0.0,50.0 10.7,52.4 11.9,53.6 14.3,58.3 16.7,62.5 28.6,62.5 35.7,59.5 45.2,58.3 52.4,57.1 56.0,59.5 57.1,65.5 61.9,66.7 64.3,71.4 59.5,73.8 59.5,83.0 45.2,83.0 47.6,77.4 45.2,72.6 39.3,70.8 29.8,72.6 21.4,76.2 15.5,83.0 0.0,83.0" fill="#989350"/>
<polygon points="59.5,73.8 64.3,72.6 69.0,73.8 71.4,78.6 76.2,81.0 76.2,83.0 59.5,83.0" fill="#c8b088"/>
<polygon points="64.3,71.4 71.4,70.2 83.3,69.0 92.9,67.9 100.0,69.0 97.6,72.6 90.5,73.8 85.7,77.4 83.3,83.0 76.2,83.0 76.2,77.4 71.4,76.2 67.9,73.8" fill="#c9b045"/>
<polygon points="160.7,39.3 166.7,35.7 172.6,36.9 171.4,40.5 165.5,44.0 164.3,48.8 159.5,52.4 152.4,52.4 145.2,53.6 138.1,57.1 135.7,54.8 142.9,51.2 150.0,48.8 158.3,46.4 160.7,42.9" fill="#c9b045"/>
<polygon points="166.7,26.2 171.4,25.0 172.0,29.8 167.9,31.5" fill="#c9b045"/>
<polygon points="164.9,17.9 167.9,19.0 167.3,23.8 165.2,23.2" fill="#c9b045"/>
<polygon points="123.8,64.3 131.0,60.7 132.1,63.1 126.2,66.7" fill="#c9b045"/>
<polygon points="111.9,67.9 116.7,66.7 116.1,70.2 112.5,71.4" fill="#c9b045"/>
<polygon points="160.7,63.1 166.7,61.9 165.5,64.9 161.3,65.2" fill="#c9b045"/>
<polygon points="190.5,61.9 195.2,62.5 193.5,64.9 190.7,64.3" fill="#c9b045"/>
<polygon points="188.1,31.5 191.9,31.2 191.7,33.3 188.3,33.6" fill="#c9b045"/>
<polygon points="177.4,70.2 179.8,70.2 179.8,78.6 177.4,78.6" fill="#c9b045"/>
<polygon points="144.6,56.0 148.8,54.2 150.6,56.0 146.4,58.3" fill="#c9b045"/>
<polygon points="106.0,78.6 111.9,75.6 122.6,75.2 123.8,77.4 119.0,79.2 119.0,83.0 107.1,83.0 109.5,80.4" fill="#6b7a2c"/>
<polygon points="170.2,79.8 175.0,78.8 175.6,82.1 171.4,83.0" fill="#6b7a2c"/>
<polygon points="200.0,0.0 211.9,0.0 206.0,2.6 200.0,5.0" fill="#c0755a"/>
<polygon points="200.0,10.7 207.1,7.1 214.3,3.6 223.8,0.0 245.2,0.0 235.7,3.6 228.6,6.0 220.2,8.9 219.0,13.1 213.1,15.5 207.1,20.2 203.6,23.8 200.0,26.2" fill="#c0755a"/>
<polygon points="328.6,0.0 400.0,0.0 400.0,33.3 390.5,33.3 381.0,33.9 378.6,31.0 372.6,29.8 369.0,28.6 372.6,26.2 371.4,21.4 367.9,19.0 366.7,13.1 361.9,11.9 358.3,8.3 352.4,7.1 348.8,4.8 342.9,3.6 334.5,2.4" fill="#989350"/>
<polygon points="279.8,0.0 328.6,0.0 325.0,2.4 316.7,4.8 311.9,7.1 307.1,9.5 301.2,8.3 295.2,11.9 290.5,14.3 286.9,15.5 288.1,13.1 295.2,9.5 298.8,6.0 290.5,6.0 285.7,3.6 282.1,1.8" fill="#6b7a2c"/>
<polygon points="308.3,8.3 314.3,7.1 313.1,10.7 309.5,11.3" fill="#6b7a2c"/>
<polygon points="300.0,15.5 303.6,14.9 303.6,17.3 300.6,17.6" fill="#6b7a2c"/>
<polygon points="352.4,7.1 358.3,6.0 363.1,9.5 366.7,13.1 367.9,16.1 363.1,14.3 358.3,11.9 353.6,10.7" fill="#6b7a2c"/>
<polygon points="360.1,18.5 363.1,18.5 363.1,23.2 360.1,23.2" fill="#ab9646"/>
<polygon points="369.0,28.0 378.6,28.6 378.6,31.2 372.6,30.6" fill="#ab9646"/>
<polygon points="381.0,33.9 390.5,33.3 400.0,33.3 400.0,53.6 395.2,52.4 390.5,50.0 386.9,45.2 383.3,40.5 380.4,36.9" fill="#6b7a2c"/>
<polygon points="232.1,20.2 235.7,19.0 235.7,21.4 232.7,22.0" fill="#6b7a2c"/>
<polygon points="239.9,22.0 244.0,20.8 243.5,22.6 240.5,23.6" fill="#6b7a2c"/>
<polygon points="251.8,22.0 255.4,20.8 255.7,23.2 252.4,23.8" fill="#6b7a2c"/>
<polygon points="260.1,22.0 264.3,21.4 269.0,19.6 276.2,20.2 273.8,21.4 267.9,22.6 263.1,23.6 260.5,23.6" fill="#6b7a2c"/>
<polygon points="278.0,16.7 280.4,16.4 279.8,17.9" fill="#6b7a2c"/>
<polygon points="256.0,57.1 259.5,57.7 264.3,58.3 268.5,58.9 266.7,60.7 261.9,60.5 257.1,60.7" fill="#6b7a2c"/>
<polygon points="286.3,69.6 290.5,67.9 295.2,67.3 295.8,69.0 291.7,70.2 288.1,71.2" fill="#6b7a2c"/>
<polygon points="296.4,71.4 301.2,70.8 307.7,71.4 307.1,73.8 304.8,75.0 301.2,72.6 297.0,72.9" fill="#6b7a2c"/>
<polygon points="222.0,73.8 227.4,72.0 228.0,73.8 223.8,75.2" fill="#6b7a2c"/>
<polygon points="269.6,75.6 272.0,75.6 271.4,77.4" fill="#6b7a2c"/>
<polygon points="282.1,66.1 283.9,66.1 283.3,67.3" fill="#6b7a2c"/>
<polygon points="0.0,83.0 15.5,83.0 19.0,87.8 15.5,90.1 7.1,87.8 0.0,86.6" fill="#989350"/>
<polygon points="52.4,91.3 61.9,90.1 66.7,93.7 73.8,98.5 79.8,102.0 78.6,105.6 71.4,103.2 64.3,99.7 59.5,96.1 48.8,96.1" fill="#ab9646"/>
<polygon points="79.8,105.6 88.1,106.8 95.2,105.6 102.4,106.8 111.9,108.0 110.7,109.8 102.4,109.2 95.2,108.6 88.1,108.6" fill="#ab9646"/>
<polygon points="83.9,96.1 95.2,93.7 103.6,90.1 109.5,91.3 107.1,96.1 103.6,100.9 95.2,102.6 88.1,100.9" fill="#ab9646"/>
<polygon points="109.5,99.7 114.3,96.1 119.0,98.5 119.0,103.2 114.3,105.0 110.7,103.2" fill="#ab9646"/>
<polygon points="111.9,111.0 115.5,110.4 115.5,113.4 112.5,114.0" fill="#ab9646"/>
<polygon points="120.2,109.2 126.2,108.6 125.0,111.6" fill="#ab9646"/>
<polygon points="136.9,97.3 142.9,97.9 150.0,100.9 156.0,99.1 166.7,99.1 172.6,100.9 178.6,102.0 182.1,106.8 176.2,108.6 166.7,108.0 157.1,108.0 154.8,104.4 148.8,102.6 140.5,100.9" fill="#ab9646"/>
<polygon points="178.6,98.5 185.7,97.3 195.2,98.5 195.2,102.0 190.5,103.8 184.5,106.8 181.0,104.4 185.7,100.9" fill="#ab9646"/>
<polygon points="197.6,104.4 200.0,104.4 200.0,106.8 197.6,106.8" fill="#ab9646"/>
<polygon points="172.6,152.6 178.6,152.0 179.8,156.8 177.4,159.2 173.8,156.8" fill="#ab9646"/>
<polygon points="96.4,127.0 100.0,123.5 108.3,122.3 114.3,118.7 119.0,116.3 128.6,115.1 134.5,117.5 138.1,112.8 147.6,112.2 154.8,114.0 154.8,117.5 161.9,118.7 166.7,114.0 171.4,115.1 175.0,119.9 182.1,123.5 186.9,127.0 188.1,130.6 195.2,131.8 195.2,136.6 190.5,139.0 186.9,143.7 183.3,147.3 176.2,149.7 166.7,149.7 160.7,147.9 154.8,144.9 147.6,142.5 142.9,140.1 133.3,139.0 126.2,141.3 117.9,143.7 109.5,143.7 101.2,143.7 100.0,136.6 97.6,133.0" fill="#989350"/>
<polygon points="152.4,132.4 156.0,132.4 156.0,137.2 152.4,137.2" fill="#3a93b8"/>
<polygon points="103.6,85.4 110.7,83.0 128.6,83.0 131.0,87.8 126.2,90.1 119.0,89.0 116.7,92.5 113.1,91.3 114.3,87.8 107.1,88.4" fill="#6b7a2c"/>
<polygon points="67.9,83.0 85.7,83.0 83.3,85.4 73.8,86.6" fill="#d2b23c"/>
<polygon points="136.9,91.3 142.9,88.4 151.2,87.2 150.0,89.0 142.9,91.3 138.1,93.1" fill="#d2b23c"/>
<polygon points="191.7,89.0 195.2,88.4 195.2,90.7 192.3,90.7" fill="#d2b23c"/>
<polygon points="152.4,83.0 156.0,83.0 153.6,84.8" fill="#d2b23c"/>
<polygon points="58.3,83.0 64.3,83.0 64.3,89.0 59.5,87.8" fill="#c8b088"/>
<polygon points="126.2,108.0 131.0,108.6 129.8,110.6 126.8,110.1" fill="#c8b088"/>
<polygon points="200.0,105.0 204.8,106.2 207.1,108.0 211.9,108.6 215.5,109.8 220.2,107.4 223.8,108.0 223.8,112.2 227.4,114.0 222.6,115.1 216.7,114.5 211.9,112.2 207.1,110.4 200.0,108.6" fill="#ab9646"/>
<polygon points="231.0,118.1 235.7,118.7 235.7,120.5 232.1,120.5" fill="#ab9646"/>
<polygon points="235.7,121.7 240.5,121.1 240.5,124.7 236.9,125.3" fill="#ab9646"/>
<polygon points="244.0,123.5 247.6,122.3 251.8,122.9 251.8,127.6 247.6,127.6 245.2,125.9" fill="#ab9646"/>
<polygon points="252.4,121.1 256.0,121.3 253.6,122.9" fill="#ab9646"/>
<polygon points="222.6,128.8 227.4,128.2 232.1,130.6 231.5,133.0 227.4,132.4 223.8,130.6" fill="#ab9646"/>
<polygon points="240.5,144.3 243.5,144.3 243.5,146.1 240.5,146.1" fill="#ab9646"/>
<polygon points="244.6,146.7 251.2,147.3 251.8,153.2 246.4,153.8 244.0,150.9" fill="#ab9646"/>
<polygon points="236.3,154.4 244.0,152.0 244.0,156.2 239.3,159.2 235.7,160.4 232.1,162.8 228.0,162.8 227.4,160.4 232.1,158.6" fill="#ab9646"/>
<polygon points="242.9,100.3 247.6,101.5 245.2,102.6" fill="#ab9646"/>
<polygon points="251.2,100.9 256.0,101.5 253.6,103.0" fill="#ab9646"/>
<polygon points="254.2,109.4 260.1,109.2 259.5,111.0 254.8,111.0" fill="#ab9646"/>
<polygon points="245.8,95.9 252.4,94.9 250.0,96.7" fill="#ab9646"/>
<polygon points="266.7,114.0 271.4,112.8 272.0,116.3 268.5,116.9" fill="#ab9646"/>
<polygon points="270.2,118.1 279.8,117.3 278.6,118.7 271.4,119.1" fill="#ab9646"/>
<polygon points="295.2,128.2 300.0,128.0 299.4,129.7 295.8,129.7" fill="#ab9646"/>
<polygon points="314.9,121.7 320.2,121.1 323.8,124.1 323.8,127.0 320.2,127.6 316.7,125.3" fill="#ab9646"/>
<polygon points="323.8,119.9 328.0,119.1 326.8,120.9" fill="#ab9646"/>
<polygon points="329.8,124.1 332.1,124.1 332.1,126.1 329.8,126.1" fill="#ab9646"/>
<polygon points="337.5,124.1 340.2,124.1 340.2,126.1 337.5,126.1" fill="#ab9646"/>
<polygon points="258.3,115.7 260.7,115.7 260.1,117.3" fill="#ab9646"/>
<polygon points="261.9,126.5 264.3,126.5 263.7,128.2" fill="#ab9646"/>
<polygon points="333.3,111.6 336.3,111.6 335.7,113.0" fill="#ab9646"/>
<polygon points="211.9,85.4 215.5,84.2 220.2,84.8 217.9,86.6 213.1,86.8" fill="#d2b23c"/>
<polygon points="223.8,89.5 228.6,87.2 232.1,87.8 231.5,89.0 227.4,90.1 224.4,91.1" fill="#d2b23c"/>
<polygon points="228.0,91.3 231.5,90.1 235.7,91.3 234.5,92.5 229.2,93.1" fill="#d2b23c"/>
<polygon points="239.9,87.2 244.0,87.2 244.0,89.0 239.9,89.0" fill="#d2b23c"/>
<polygon points="235.7,93.1 239.9,92.5 239.9,94.9 236.3,94.9" fill="#d2b23c"/>
<polygon points="222.0,84.0 223.8,84.0 223.8,85.1 222.0,85.1" fill="#d2b23c"/>
<polygon points="299.4,99.1 304.8,98.7 302.4,100.9 299.8,101.1" fill="#6b7a2c"/>
<polygon points="279.8,119.3 284.5,118.7 283.3,120.5 280.4,121.1" fill="#6b7a2c"/>
<rect x="238.500" y="4.500" width="47" height="29" fill="none" stroke="#fff" stroke-width="1"/>
</svg></div>
</body></html>
